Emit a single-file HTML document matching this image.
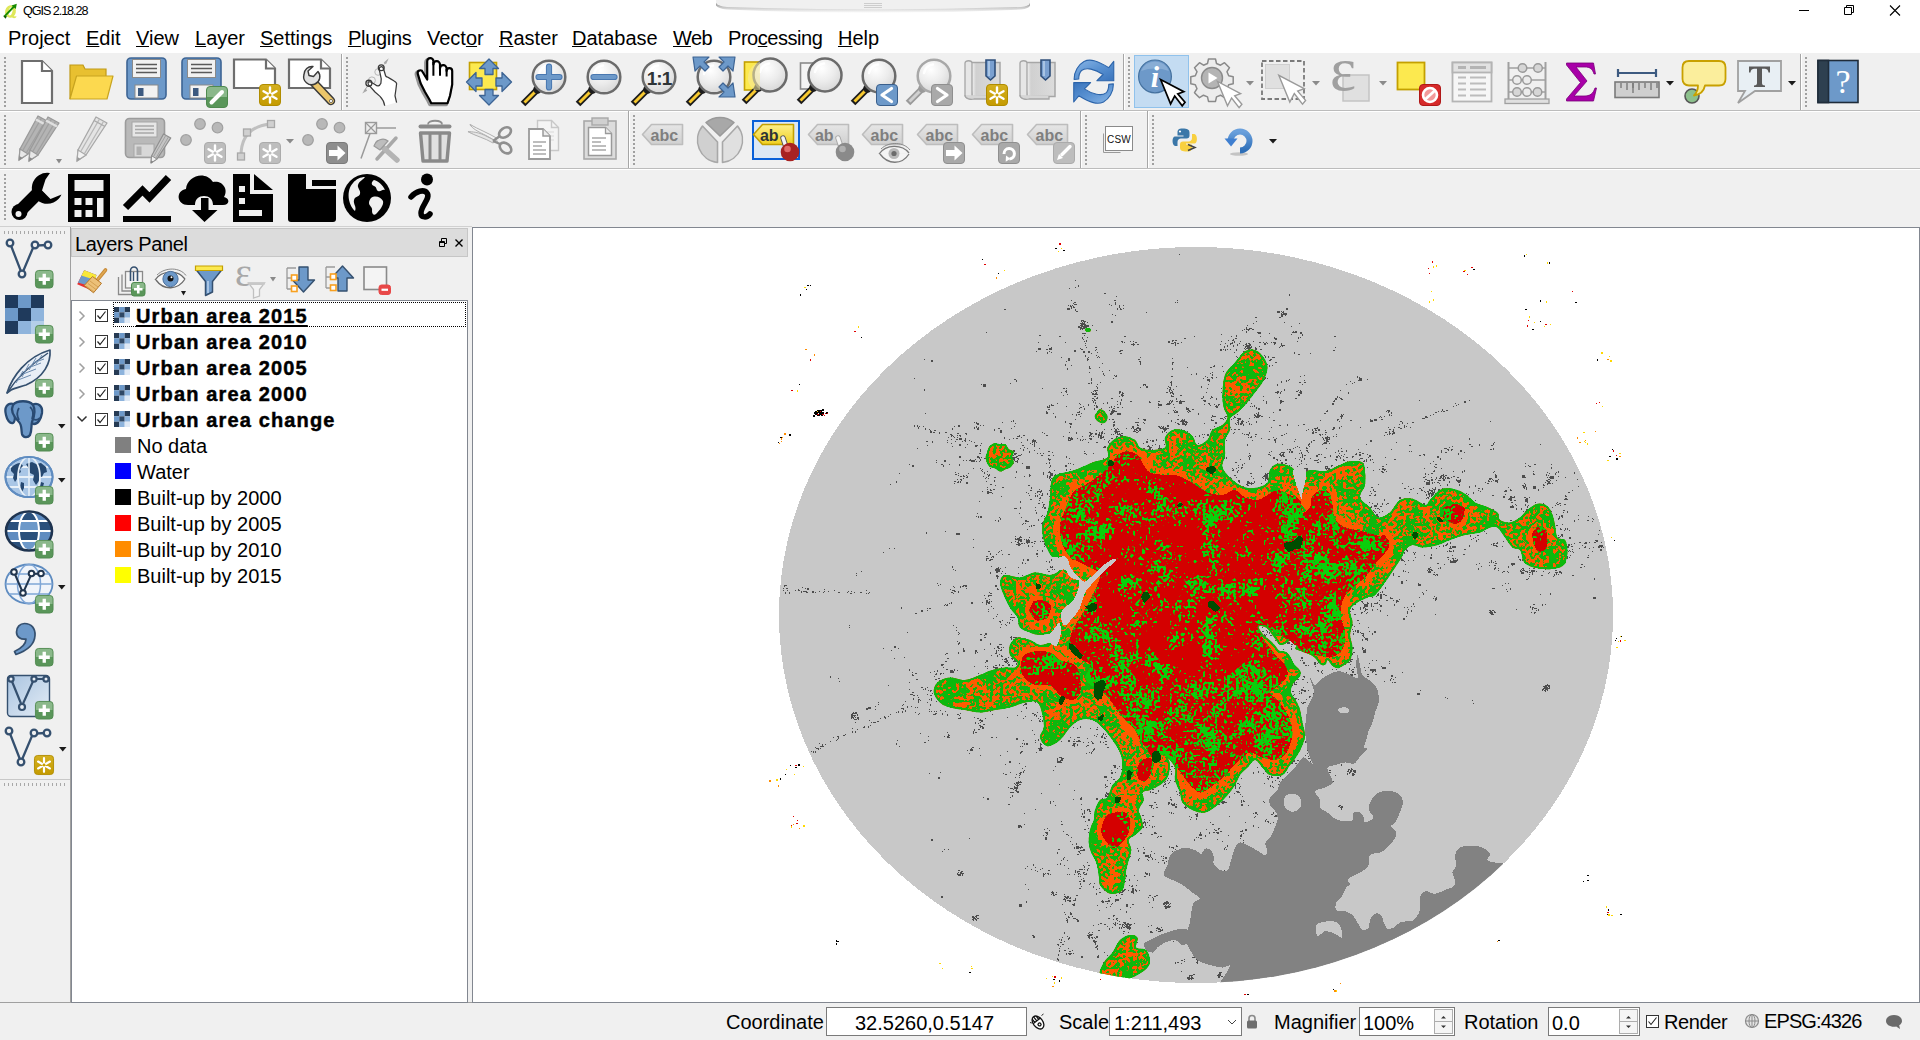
<!DOCTYPE html>
<html lang="en"><head><meta charset="utf-8"><title>QGIS 2.18.28</title>
<style>
*{box-sizing:border-box;margin:0;padding:0}
html,body{width:1920px;height:1040px;overflow:hidden;background:#f0f0f0;font-family:"Liberation Sans",sans-serif;color:#000}
.abs{position:absolute}
#titlebar{position:absolute;left:0;top:0;width:1920px;height:23px;background:#fff}
#title{position:absolute;left:23px;top:4px;font-size:12.6px;line-height:14px;color:#000;letter-spacing:-1.05px}
#menubar{position:absolute;left:0;top:23px;width:1920px;height:30px;background:#fff}
#menubar span{position:absolute;top:3px;font-size:20px;line-height:24px;white-space:nowrap}
#menubar u{text-decoration:underline;text-decoration-thickness:1px;text-underline-offset:1px}
.hl{position:absolute;left:0;width:1920px;height:1px;background:#bcbcbc}
.hl2{position:absolute;left:0;width:1920px;height:1px;background:#fff}
.vsep{position:absolute;width:1px;background:#a6a6a6}
.vsep2{position:absolute;width:1px;background:#fff}
.grip{position:absolute;width:2px;background-image:repeating-linear-gradient(to bottom,#a0a0a0 0,#a0a0a0 2px,transparent 2px,transparent 4px)}
.gripw{position:absolute;width:3px;background-image:repeating-linear-gradient(to bottom,#fff 0,#fff 1px,transparent 1px,transparent 4px)}
.ic{position:absolute;overflow:visible}
.dd{position:absolute;width:0;height:0;border-left:4px solid transparent;border-right:4px solid transparent;border-top:4px solid #222}
.ddg{border-top-color:#777}
#layers-title{position:absolute;left:71px;top:228px;width:397px;height:29px;background:#dcdcdc;border:1px solid #c6c6c6}
#layers-title span{position:absolute;left:3px;top:3px;font-size:20px;line-height:24px;letter-spacing:-.35px}
#tree{position:absolute;left:71px;top:300px;width:397px;height:703px;background:#fff;border:1px solid #828790}
.row{position:absolute;left:0;height:26px;white-space:nowrap}
.row b{position:absolute;left:64px;top:2px;font-size:20px;line-height:24px;font-weight:bold;letter-spacing:1.15px;-webkit-text-stroke:.45px #000}
.leg{position:absolute;left:43px;width:16px;height:16px}
.legt{position:absolute;left:65px;font-size:20px;line-height:24px;white-space:nowrap}
.cb{position:absolute;left:23px;width:13px;height:13px;border:1px solid #333;background:#fff}
#canvas{position:absolute;left:472px;top:227px;width:1448px;height:776px;background:#fff;border:1px solid #828790;overflow:hidden}
#status{position:absolute;left:0;top:1004px;width:1920px;height:36px;background:#f0f0f0}
#status .t{position:absolute;top:6px;font-size:20px;line-height:24px;white-space:nowrap}
.inp{position:absolute;top:3px;height:29px;background:#fff;border:1px solid #7a7a7a}
</style></head><body>
<div id="titlebar">
<svg class="ic" style="left:.6px;top:.8px" width="18" height="19" viewBox="0 0 18 19"><g transform="rotate(14 9.500 10.500)"><ellipse cx="9.500" cy="10.500" rx="5.400" ry="6.300" fill="#dfe85a"/><ellipse cx="9.500" cy="10.300" rx="1.900" ry="4.200" fill="#fff"/></g><path d="M9.500 14.500c1.500 2.500 3.500 3.500 5.500 2l.5-1.500c-1.500 1-3 .5-4-1.500z" fill="#dfe85a"/><path d="M3.500 15.300L13 5.500" stroke="#178a00" stroke-width="1.900"/><path d="M15.800 2.800l-1 5.200-4.300-3.600z" fill="#178a00"/><path d="M2 14.700l4 .6-1.500 2.500z" fill="#0d5a00"/></svg>
<div id="title">QGIS 2.18.28</div>
<svg class="ic" style="left:715px;top:0" width="320" height="14" viewBox="0 0 320 14"><defs><linearGradient id="tabsh" x1="0" y1="0" x2="0" y2="1"><stop offset="0" stop-color="#8a8a8a" stop-opacity=".95"/><stop offset="1" stop-color="#9a9a9a" stop-opacity="0"/></linearGradient></defs><path d="M1 0 L1 3 Q3 6 12 7 Q158 14 306 7 Q314 6 315 3 L315 0Z" fill="url(#tabsh)" transform="translate(0,2.5)"/><path d="M1 0 L1 3 Q3 6 12 7 Q158 12 306 7 Q314 6 315 3 L315 0Z" fill="#f0f0f0"/><path d="M149 3.5h18M149 5.5h18M149 7.5h18" stroke="#b5b5b5" stroke-width=".6"/></svg>
<svg class="ic" style="left:1798px;top:4px" width="110" height="14" viewBox="0 0 110 14"><path d="M1 6.5h10" stroke="#000" stroke-width="1"/><path d="M46.500 3.500h7v7h-7z M48.500 3.500v-2h7v7h-2" fill="none" stroke="#000" stroke-width="1"/><path d="M92 1.500l10 10M102 1.500l-10 10" stroke="#000" stroke-width="1.1"/></svg>
</div>
<div id="menubar">
<span style="left:8px">Pro<u>j</u>ect</span>
<span style="left:86px"><u>E</u>dit</span>
<span style="left:136px"><u>V</u>iew</span>
<span style="left:195px"><u>L</u>ayer</span>
<span style="left:260px"><u>S</u>ettings</span>
<span style="left:348px;letter-spacing:-.3px"><u>P</u>lugins</span>
<span style="left:427px">Vect<u>o</u>r</span>
<span style="left:499px"><u>R</u>aster</span>
<span style="left:572px"><u>D</u>atabase</span>
<span style="left:673px;letter-spacing:-.6px"><u>W</u>eb</span>
<span style="left:728px;letter-spacing:-.45px">Pro<u>c</u>essing</span>
<span style="left:838px"><u>H</u>elp</span>
</div>
<!-- toolbar separators -->
<div class="hl" style="top:110px"></div><div class="hl2" style="top:111px"></div>
<div class="hl" style="top:168px"></div><div class="hl2" style="top:169px"></div>
<div class="hl" style="top:226px;background:#d0d0d0;width:472px"></div>
<!-- grips -->
<div class="grip" style="left:4px;top:57px;height:50px"></div>
<div class="vsep" style="left:341px;top:54px;height:56px"></div><div class="vsep2" style="left:342px;top:54px;height:56px"></div>
<div class="grip" style="left:346px;top:57px;height:50px"></div>
<div class="vsep" style="left:1123px;top:54px;height:56px"></div><div class="vsep2" style="left:1124px;top:54px;height:56px"></div>
<div class="grip" style="left:1128px;top:57px;height:50px"></div>
<div class="vsep" style="left:1800px;top:54px;height:56px"></div><div class="vsep2" style="left:1801px;top:54px;height:56px"></div>
<div class="grip" style="left:1805px;top:57px;height:50px"></div>
<div class="grip" style="left:4px;top:115px;height:50px"></div>
<div class="vsep" style="left:628px;top:111px;height:57px"></div><div class="vsep2" style="left:629px;top:111px;height:57px"></div>
<div class="grip" style="left:633px;top:115px;height:50px"></div>
<div class="vsep" style="left:1080px;top:111px;height:57px"></div><div class="vsep2" style="left:1081px;top:111px;height:57px"></div>
<div class="grip" style="left:1085px;top:115px;height:50px"></div>
<div class="vsep" style="left:1147px;top:111px;height:57px"></div><div class="vsep2" style="left:1148px;top:111px;height:57px"></div>
<div class="grip" style="left:1152px;top:115px;height:50px"></div>
<div class="grip" style="left:4px;top:174px;height:48px"></div>
<!-- left toolbar -->
<div class="abs" style="left:4px;top:231px;width:62px;height:3px;background-image:repeating-linear-gradient(to right,#a8a8a8 0,#a8a8a8 1px,transparent 1px,transparent 4px)"></div>
<div class="abs" style="left:0;top:779px;width:70px;height:1px;background:#c8c8c8"></div>
<div class="abs" style="left:4px;top:783px;width:62px;height:3px;background-image:repeating-linear-gradient(to right,#a8a8a8 0,#a8a8a8 1px,transparent 1px,transparent 4px)"></div>
<div class="abs" style="left:0;top:1002px;width:472px;height:1px;background:#a0a0a0"></div>
<div class="abs" style="left:70px;top:227px;width:1px;height:776px;background:#a0a0a0"></div>
<!-- layers panel -->
<div id="layers-title"><span>Layers Panel</span>
<svg class="ic" style="left:366px;top:8px" width="26" height="12" viewBox="0 0 26 12"><path d="M1.500 4.500h5v5h-5z M3.500 4v-2.500h5v5H7" fill="none" stroke="#000" stroke-width="1"/><path d="M1.500 5.500h5" stroke="#000" stroke-width="1"/><path d="M17.500 2.500l7 7M24.500 2.500l-7 7" stroke="#000" stroke-width="1.400"/></svg>
</div>
<div id="tree">
<div class="abs" style="left:41px;top:1px;width:353px;height:25px;border:1px dotted #000"></div>
<div class="row" style="top:1px;width:395px"><svg class="ic" style="left:5px;top:8px" width="10" height="12" viewBox="0 0 10 12"><path d="M2.500 1.500l4.500 4.500-4.500 4.500" fill="none" stroke="#a0a0a0" stroke-width="1.500"/></svg><div class="cb" style="top:7px"><svg class="ic" style="left:0;top:0" width="11" height="11" viewBox="0 0 11 11"><path d="M1.500 5.500l2.500 3 5.500-7" fill="none" stroke="#222" stroke-width="1.200"/></svg></div><svg class="ic" style="left:42px;top:5px" width="16" height="16" viewBox="0 0 16 16"><rect x="0" y="0" width="5.3" height="5.3" fill="#263b54"/><rect x="5.3" y="0" width="5.4" height="5.3" fill="#6d99c9"/><rect x="10.7" y="0" width="5.3" height="5.3" fill="#263b54"/><rect x="0" y="5.3" width="5.3" height="5.4" fill="#6d99c9"/><rect x="5.3" y="5.3" width="5.4" height="5.4" fill="#2f4865"/><rect x="10.7" y="5.3" width="5.3" height="5.4" fill="#8db3dc"/><rect x="0" y="10.7" width="5.3" height="5.3" fill="#263b54"/><rect x="5.3" y="10.7" width="5.4" height="5.3" fill="#8db3dc"/><rect x="10.7" y="10.7" width="5.3" height="5.3" fill="#dfe9f5"/></svg><b style="text-decoration:underline;text-decoration-thickness:2px;text-underline-offset:2px">Urban area 2015</b></div>
<div class="row" style="top:27px;width:395px"><svg class="ic" style="left:5px;top:8px" width="10" height="12" viewBox="0 0 10 12"><path d="M2.500 1.500l4.500 4.500-4.500 4.500" fill="none" stroke="#a0a0a0" stroke-width="1.500"/></svg><div class="cb" style="top:7px"><svg class="ic" style="left:0;top:0" width="11" height="11" viewBox="0 0 11 11"><path d="M1.500 5.500l2.500 3 5.500-7" fill="none" stroke="#222" stroke-width="1.200"/></svg></div><svg class="ic" style="left:42px;top:5px" width="16" height="16" viewBox="0 0 16 16"><rect x="0" y="0" width="5.3" height="5.3" fill="#263b54"/><rect x="5.3" y="0" width="5.4" height="5.3" fill="#6d99c9"/><rect x="10.7" y="0" width="5.3" height="5.3" fill="#263b54"/><rect x="0" y="5.3" width="5.3" height="5.4" fill="#6d99c9"/><rect x="5.3" y="5.3" width="5.4" height="5.4" fill="#2f4865"/><rect x="10.7" y="5.3" width="5.3" height="5.4" fill="#8db3dc"/><rect x="0" y="10.7" width="5.3" height="5.3" fill="#263b54"/><rect x="5.3" y="10.7" width="5.4" height="5.3" fill="#8db3dc"/><rect x="10.7" y="10.7" width="5.3" height="5.3" fill="#dfe9f5"/></svg><b style="">Urban area 2010</b></div>
<div class="row" style="top:53px;width:395px"><svg class="ic" style="left:5px;top:8px" width="10" height="12" viewBox="0 0 10 12"><path d="M2.500 1.500l4.500 4.500-4.500 4.500" fill="none" stroke="#a0a0a0" stroke-width="1.500"/></svg><div class="cb" style="top:7px"><svg class="ic" style="left:0;top:0" width="11" height="11" viewBox="0 0 11 11"><path d="M1.500 5.500l2.500 3 5.500-7" fill="none" stroke="#222" stroke-width="1.200"/></svg></div><svg class="ic" style="left:42px;top:5px" width="16" height="16" viewBox="0 0 16 16"><rect x="0" y="0" width="5.3" height="5.3" fill="#263b54"/><rect x="5.3" y="0" width="5.4" height="5.3" fill="#6d99c9"/><rect x="10.7" y="0" width="5.3" height="5.3" fill="#263b54"/><rect x="0" y="5.3" width="5.3" height="5.4" fill="#6d99c9"/><rect x="5.3" y="5.3" width="5.4" height="5.4" fill="#2f4865"/><rect x="10.7" y="5.3" width="5.3" height="5.4" fill="#8db3dc"/><rect x="0" y="10.7" width="5.3" height="5.3" fill="#263b54"/><rect x="5.3" y="10.7" width="5.4" height="5.3" fill="#8db3dc"/><rect x="10.7" y="10.7" width="5.3" height="5.3" fill="#dfe9f5"/></svg><b style="">Urban area 2005</b></div>
<div class="row" style="top:79px;width:395px"><svg class="ic" style="left:5px;top:8px" width="10" height="12" viewBox="0 0 10 12"><path d="M2.500 1.500l4.500 4.500-4.500 4.500" fill="none" stroke="#a0a0a0" stroke-width="1.500"/></svg><div class="cb" style="top:7px"><svg class="ic" style="left:0;top:0" width="11" height="11" viewBox="0 0 11 11"><path d="M1.500 5.500l2.500 3 5.500-7" fill="none" stroke="#222" stroke-width="1.200"/></svg></div><svg class="ic" style="left:42px;top:5px" width="16" height="16" viewBox="0 0 16 16"><rect x="0" y="0" width="5.3" height="5.3" fill="#263b54"/><rect x="5.3" y="0" width="5.4" height="5.3" fill="#6d99c9"/><rect x="10.7" y="0" width="5.3" height="5.3" fill="#263b54"/><rect x="0" y="5.3" width="5.3" height="5.4" fill="#6d99c9"/><rect x="5.3" y="5.3" width="5.4" height="5.4" fill="#2f4865"/><rect x="10.7" y="5.3" width="5.3" height="5.4" fill="#8db3dc"/><rect x="0" y="10.7" width="5.3" height="5.3" fill="#263b54"/><rect x="5.3" y="10.7" width="5.4" height="5.3" fill="#8db3dc"/><rect x="10.7" y="10.7" width="5.3" height="5.3" fill="#dfe9f5"/></svg><b style="">Urban area 2000</b></div>
<div class="row" style="top:105px;width:395px"><svg class="ic" style="left:4px;top:8px" width="12" height="10" viewBox="0 0 12 10"><path d="M1.500 2.500l4.500 4.500 4.500-4.500" fill="none" stroke="#303030" stroke-width="1.500"/></svg><div class="cb" style="top:7px"><svg class="ic" style="left:0;top:0" width="11" height="11" viewBox="0 0 11 11"><path d="M1.500 5.500l2.500 3 5.500-7" fill="none" stroke="#222" stroke-width="1.200"/></svg></div><svg class="ic" style="left:42px;top:5px" width="16" height="16" viewBox="0 0 16 16"><rect x="0" y="0" width="5.3" height="5.3" fill="#263b54"/><rect x="5.3" y="0" width="5.4" height="5.3" fill="#6d99c9"/><rect x="10.7" y="0" width="5.3" height="5.3" fill="#263b54"/><rect x="0" y="5.3" width="5.3" height="5.4" fill="#6d99c9"/><rect x="5.3" y="5.3" width="5.4" height="5.4" fill="#2f4865"/><rect x="10.7" y="5.3" width="5.3" height="5.4" fill="#8db3dc"/><rect x="0" y="10.7" width="5.3" height="5.3" fill="#263b54"/><rect x="5.3" y="10.7" width="5.4" height="5.3" fill="#8db3dc"/><rect x="10.7" y="10.7" width="5.3" height="5.3" fill="#dfe9f5"/></svg><b style="">Urban area change</b></div>
<div class="leg" style="top:136px;background:#808080"></div><div class="legt" style="top:133px">No data</div>
<div class="leg" style="top:162px;background:#0000ff"></div><div class="legt" style="top:159px">Water</div>
<div class="leg" style="top:188px;background:#000000"></div><div class="legt" style="top:185px">Built-up by 2000</div>
<div class="leg" style="top:214px;background:#ff0000"></div><div class="legt" style="top:211px">Built-up by 2005</div>
<div class="leg" style="top:240px;background:#ff8c00"></div><div class="legt" style="top:237px">Built-up by 2010</div>
<div class="leg" style="top:266px;background:#ffff00"></div><div class="legt" style="top:263px">Built-up by 2015</div>
</div>
<svg width="0" height="0" style="position:absolute"><defs>
<radialGradient id="lens" cx=".4" cy=".3" r=".8"><stop offset="0" stop-color="#fff"/><stop offset=".5" stop-color="#ececec"/><stop offset="1" stop-color="#d2d2d2"/></radialGradient>
<linearGradient id="gbadge" x1="0" y1="0" x2="0" y2="1"><stop offset="0" stop-color="#8ab88a"/><stop offset=".5" stop-color="#8ab88a"/><stop offset=".5" stop-color="#5a965a"/><stop offset="1" stop-color="#5a965a"/></linearGradient>
<linearGradient id="ybadge" x1="0" y1="0" x2="0" y2="1"><stop offset="0" stop-color="#d4b020"/><stop offset="1" stop-color="#c49a00"/></linearGradient>
<linearGradient id="scroll" x1="0" y1="0" x2="1" y2="0"><stop offset="0" stop-color="#c9c9c9"/><stop offset=".12" stop-color="#f4f4f4"/><stop offset=".25" stop-color="#d0d0d0"/><stop offset="1" stop-color="#dcdcdc"/></linearGradient>
<linearGradient id="blueg" x1="0" y1="0" x2="0" y2="1"><stop offset="0" stop-color="#6aa0dc"/><stop offset="1" stop-color="#2f6fb8"/></linearGradient>
<linearGradient id="tagg" x1="0" y1="0" x2="0" y2="1"><stop offset="0" stop-color="#e6e6e6"/><stop offset="1" stop-color="#d0d0d0"/></linearGradient>
<linearGradient id="tagy" x1="0" y1="0" x2="0" y2="1"><stop offset="0" stop-color="#fdf08a"/><stop offset="1" stop-color="#f0cf20"/></linearGradient>
</defs></svg>
<svg class="ic" style="left:18px;top:58px" width="38" height="48" viewBox="0 0 38 48"><path d="M4 3h20l10 10v32H4z" fill="#fff" stroke="#6e6e6e" stroke-width="2.200" stroke-linejoin="miter"/><path d="M24 3v10h10" fill="#fff" stroke="#6e6e6e" stroke-width="2.200"/></svg>
<svg class="ic" style="left:67px;top:62px" width="50" height="40" viewBox="0 0 50 40"><path d="M3 37V3h13l2 4h21v8H10z" fill="#e8c030" stroke="#c09a18" stroke-width="1.200"/><path d="M3 37l6.500-23H46l-6 23z" fill="#fcd94f" stroke="#c8a420" stroke-width="1.200" stroke-linejoin="round"/></svg>
<svg class="ic" style="left:126px;top:57px" width="42" height="44" viewBox="0 0 42 44"><rect x="1" y="1" width="39" height="41" rx="4" fill="#6d99c9" stroke="#3d6494" stroke-width="1.600"/><rect x="6.500" y="2.500" width="28" height="18" fill="#f2f2f2" stroke="#8a8a8a" stroke-width="1"/><path d="M10 7.500h21M10 11.500h21M10 15.500h21" stroke="#5a5a5a" stroke-width="1.500"/><rect x="9" y="28" width="23" height="13" fill="#f2f2f2" stroke="#8a8a8a" stroke-width="1"/><rect x="12" y="31" width="5.500" height="8" fill="#3d5a80"/></svg>
<svg class="ic" style="left:181px;top:57px" width="42" height="44" viewBox="0 0 42 44"><rect x="1" y="1" width="39" height="41" rx="4" fill="#6d99c9" stroke="#3d6494" stroke-width="1.600"/><rect x="6.500" y="2.500" width="28" height="18" fill="#f2f2f2" stroke="#8a8a8a" stroke-width="1"/><path d="M10 7.500h21M10 11.500h21M10 15.500h21" stroke="#5a5a5a" stroke-width="1.500"/><rect x="9" y="28" width="23" height="13" fill="#f2f2f2" stroke="#8a8a8a" stroke-width="1"/><rect x="12" y="31" width="5.500" height="8" fill="#3d5a80"/></svg>
<svg class="ic" style="left:206px;top:86px" width="22" height="22" viewBox="0 0 22 22"><rect x=".5" y=".5" width="21" height="21" rx="3.500" fill="url(#gbadge)" stroke="#4f8a4f" stroke-width="1"/><path d="M5.500 16.500L16 6" stroke="#fff" stroke-width="4" stroke-linecap="round"/></svg>
<svg class="ic" style="left:231px;top:57px" width="48" height="36" viewBox="0 0 48 36"><path d="M3 2.500h32l9 9v19.500H3z" fill="#fff" stroke="#6e6e6e" stroke-width="2.200"/><path d="M35 2.500v9h9" fill="#fff" stroke="#6e6e6e" stroke-width="2.200"/></svg>
<svg class="ic" style="left:259px;top:84px" width="22" height="22" viewBox="0 0 22 22"><rect x=".5" y=".5" width="21" height="21" rx="3.500" fill="url(#ybadge)" stroke="#b08c00" stroke-width="1"/><g stroke="#fff" stroke-width="2.400" stroke-linecap="round"><path d="M11 3.500v15M4.500 7.200l13 7.600M4.500 14.800l13-7.600"/></g><circle cx="11" cy="11" r="1.600" fill="#c8a000"/></svg>
<svg class="ic" style="left:286px;top:57px" width="54" height="52" viewBox="0 0 54 52"><path d="M3 2.500h32l9 9v19.500H3z" fill="#fff" stroke="#6e6e6e" stroke-width="2.200"/><path d="M35 2.500v9h9" fill="#fff" stroke="#6e6e6e" stroke-width="2.200"/><path d="M28 26L45 44" stroke="#3a3a3a" stroke-width="8.500" stroke-linecap="round"/><path d="M28.500 26.500L45 44" stroke="#ecc66a" stroke-width="5.500" stroke-linecap="round"/><circle cx="45" cy="44" r="1.600" fill="#fff" stroke="#555" stroke-width=".8"/><path d="M18 17.500a8 8 0 0 0 11 9.500a8 8 0 0 0 3-12.500l-4.500 5-4.500-1-1-4.500 5-4.500a8 8 0 0 0-9 8z" fill="#e2e2e2" stroke="#3a3a3a" stroke-width="1.400" stroke-linejoin="round"/></svg>
<svg class="ic" style="left:358px;top:56px" width="44" height="54" viewBox="0 0 44 54"><path d="M4.200 37.600l3.400-5.350 1.600 2.500zM30.750 2.250l-5 4.350 2.250 1.600z" fill="#a8a8a8"/><path d="M6 35L9 31M29 4.500L26 8.500" stroke="#a8a8a8" stroke-width="1"/><circle cx="20.100" cy="16" r="3.300" fill="none" stroke="#b0b0b0" stroke-width=".9"/><circle cx="13.900" cy="24.400" r="3.500" fill="none" stroke="#b0b0b0" stroke-width=".9"/><path d="M26.700 49.750C26.200 46 25.500 44 22 40.400L17 36 12 30.400C9 28 9.500 25 12.600 26L17 28.500C19.500 30.500 21.400 30.500 22.900 27.250L23.250 22.900 21.400 14.100C20.500 10 24.800 9.500 25.750 13.500L27.600 19.750C28 21 29 21 29.500 21L32.600 22.900 35.750 24.750C38 26 38.800 27 38.600 27.900L37.900 33.500 37 39.750 38.600 46.600" fill="#fff" stroke="#3a3a3a" stroke-width="1.250" stroke-linejoin="round"/><circle cx="23.250" cy="11.800" r="2.900" fill="none" stroke="#3a3a3a" stroke-width="1.300"/><circle cx="10.900" cy="27.250" r="3" fill="none" stroke="#3a3a3a" stroke-width="1.300"/></svg>
<svg class="ic" style="left:414px;top:56px" width="44" height="52" viewBox="0 0 44 52"><path d="M13.200 23.500V5.300a3.100 3.100 0 0 1 6.200 0V8.500a3.300 3.300 0 0 1 6.600 0V12.500a3.300 3.300 0 0 1 6.600 0V15a2.800 2.800 0 0 1 5.600 0V28.500L36 39.750 33.500 47.250H17.250L15.400 43.500 11 36 6.600 27.250 3.800 17.900C3 15 6 13.500 7.900 14.750z" transform="translate(-1.300,1.200)" fill="#000" stroke="#000" stroke-width="3.600" stroke-linejoin="round" opacity=".38"/><path d="M13.200 23.500V5.300a3.100 3.100 0 0 1 6.200 0V8.500a3.300 3.300 0 0 1 6.600 0V12.500a3.300 3.300 0 0 1 6.600 0V15a2.800 2.800 0 0 1 5.600 0V28.500L36 39.750 33.500 47.250H17.250L15.400 43.500 11 36 6.600 27.250 3.800 17.900C3 15 6 13.500 7.900 14.750z" fill="#fff" stroke="#000" stroke-width="2.200" stroke-linejoin="round"/><path d="M19.400 6V19.750M26 9V19.750M32.600 13V20.500" stroke="#000" stroke-width="2"/></svg>
<svg class="ic" style="left:464px;top:56px" width="52" height="52" viewBox="0 0 52 52"><rect x="5.500" y="6.500" width="27" height="27" fill="#fce94f" stroke="#c4a000" stroke-width="1.600"/><g fill="#6d99c9" stroke="#3d6494" stroke-width="1.300" stroke-linejoin="round"><path d="M25 3l9.500 9.500h-5.500v6h-8v-6h-5.500z"/><path d="M25 49l9.500-9.500h-5.500v-6h-8v6h-5.500z"/><path d="M2.500 26l9.500-9.500v5.500h6v8h-6v5.500z"/><path d="M47.500 26l-9.500-9.500v5.500h-6v8h6v5.500z"/></g></svg>
<svg class="ic" style="left:519px;top:55px" width="64" height="56" viewBox="0 0 64 56"><path d="M19 34L4 49" stroke="#1c1c1c" stroke-width="6.500" stroke-linecap="butt"/><path d="M16.5 36.5L5.5 47.5" stroke="#f8c930" stroke-width="3"/><circle cx="18.5" cy="34.5" r="4.200" fill="#1c1c1c"/><circle cx="30" cy="22" r="16.3" fill="url(#lens)" stroke="#6b6b6b" stroke-width="2.500"/><path d="M20 19a11 11 0 0 1 9-8.500" fill="none" stroke="#fff" stroke-width="2.500" stroke-linecap="round" opacity=".9"/><path d="M30 11.500v21M19.500 22h21" stroke="#4a78b0" stroke-width="6.200" stroke-linecap="round"/><path d="M30 11.500v21M19.500 22h21" stroke="#6d99c9" stroke-width="4.200" stroke-linecap="round"/></svg>
<svg class="ic" style="left:574px;top:55px" width="64" height="56" viewBox="0 0 64 56"><path d="M19 34L4 49" stroke="#1c1c1c" stroke-width="6.500" stroke-linecap="butt"/><path d="M16.5 36.5L5.5 47.5" stroke="#f8c930" stroke-width="3"/><circle cx="18.5" cy="34.5" r="4.200" fill="#1c1c1c"/><circle cx="30" cy="22" r="16.3" fill="url(#lens)" stroke="#6b6b6b" stroke-width="2.500"/><path d="M20 19a11 11 0 0 1 9-8.500" fill="none" stroke="#fff" stroke-width="2.500" stroke-linecap="round" opacity=".9"/><path d="M19.500 22h21" stroke="#4a78b0" stroke-width="6.200" stroke-linecap="round"/><path d="M19.500 22h21" stroke="#6d99c9" stroke-width="4.200" stroke-linecap="round"/></svg>
<svg class="ic" style="left:629px;top:55px" width="64" height="56" viewBox="0 0 64 56"><path d="M19 34L4 49" stroke="#1c1c1c" stroke-width="6.500" stroke-linecap="butt"/><path d="M16.5 36.5L5.5 47.5" stroke="#f8c930" stroke-width="3"/><circle cx="18.5" cy="34.5" r="4.200" fill="#1c1c1c"/><circle cx="30" cy="22" r="16.3" fill="url(#lens)" stroke="#6b6b6b" stroke-width="2.500"/><path d="M20 19a11 11 0 0 1 9-8.500" fill="none" stroke="#fff" stroke-width="2.500" stroke-linecap="round" opacity=".9"/><text x="30" y="29.500" text-anchor="middle" font-family="Liberation Sans,sans-serif" font-weight="bold" font-size="19" letter-spacing="-1" fill="#2e3436">1:1</text></svg>
<svg class="ic" style="left:684px;top:55px" width="64" height="56" viewBox="0 0 64 56"><path d="M19 34L4 49" stroke="#1c1c1c" stroke-width="6.500" stroke-linecap="butt"/><path d="M16.5 36.5L5.5 47.5" stroke="#f8c930" stroke-width="3"/><circle cx="18.5" cy="34.5" r="4.200" fill="#1c1c1c"/><circle cx="30" cy="22" r="16.3" fill="url(#lens)" stroke="#6b6b6b" stroke-width="2.500"/><path d="M20 19a11 11 0 0 1 9-8.500" fill="none" stroke="#fff" stroke-width="2.500" stroke-linecap="round" opacity=".9"/><g fill="#6d99c9" stroke="#3d6494" stroke-width="1.200" stroke-linejoin="round"><path d="M10 2h16l-5 5 5 5-4 4-5-5-5 5z" transform="translate(-1,0)"/><path d="M50 2H34l5 5-5 5 4 4 5-5 5 5z" transform="translate(1,0)"/><path d="M50 42H34l5-5-5-5 4-4 5 5 5-5z" transform="translate(1,0)"/></g></svg>
<svg class="ic" style="left:740px;top:53px" width="64" height="56" viewBox="0 0 64 56"><rect x="4.500" y="9" width="15" height="28" fill="#fce94f" stroke="#c4a000" stroke-width="1.600"/><path d="M19 34L4 49" stroke="#1c1c1c" stroke-width="6.500" stroke-linecap="butt"/><path d="M16.5 36.5L5.5 47.5" stroke="#f8c930" stroke-width="3"/><circle cx="18.5" cy="34.5" r="4.200" fill="#1c1c1c"/><circle cx="30" cy="22" r="16.5" fill="url(#lens)" stroke="#6b6b6b" stroke-width="2.500"/><path d="M20 19a11 11 0 0 1 9-8.500" fill="none" stroke="#fff" stroke-width="2.500" stroke-linecap="round" opacity=".9"/></svg>
<svg class="ic" style="left:744px;top:60px" width="30" height="32" viewBox="0 0 30 32"><path d="M16 2a16 16 0 0 0-6 28h6z" fill="#f5e9a0" opacity=".55"/></svg>
<svg class="ic" style="left:795px;top:53px" width="64" height="56" viewBox="0 0 64 56"><rect x="5.500" y="10" width="15" height="26" fill="#f4f4f4" stroke="#8a8a8a" stroke-width="1.600"/><path d="M19 34L4 49" stroke="#1c1c1c" stroke-width="6.500" stroke-linecap="butt"/><path d="M16.5 36.5L5.5 47.5" stroke="#f8c930" stroke-width="3"/><circle cx="18.5" cy="34.5" r="4.200" fill="#1c1c1c"/><circle cx="30" cy="22" r="16.5" fill="url(#lens)" stroke="#6b6b6b" stroke-width="2.500"/><path d="M20 19a11 11 0 0 1 9-8.500" fill="none" stroke="#fff" stroke-width="2.500" stroke-linecap="round" opacity=".9"/></svg>
<svg class="ic" style="left:849px;top:54px" width="64" height="56" viewBox="0 0 64 56"><path d="M19 34L4 49" stroke="#1c1c1c" stroke-width="6.500" stroke-linecap="butt"/><path d="M16.5 36.5L5.5 47.5" stroke="#f8c930" stroke-width="3"/><circle cx="18.5" cy="34.5" r="4.200" fill="#1c1c1c"/><circle cx="30" cy="22" r="16.3" fill="url(#lens)" stroke="#6b6b6b" stroke-width="2.500"/><path d="M20 19a11 11 0 0 1 9-8.500" fill="none" stroke="#fff" stroke-width="2.500" stroke-linecap="round" opacity=".9"/></svg>
<svg class="ic" style="left:876px;top:84px" width="22" height="22" viewBox="0 0 22 22"><rect x=".5" y=".5" width="21" height="21" rx="3.500" fill="#6d99c9" stroke="#3a5f8c" stroke-width="1"/><path d="M15.500 4.500L6 11l9.500 6.500" fill="none" stroke="#fff" stroke-width="3.200" stroke-linecap="round" stroke-linejoin="round"/></svg>
<svg class="ic" style="left:904px;top:54px" width="64" height="56" viewBox="0 0 64 56"><path d="M19 34L4 49" stroke="#9a9a9a" stroke-width="6.500" stroke-linecap="butt"/><path d="M16.5 36.5L5.5 47.5" stroke="#d0d0d0" stroke-width="3"/><circle cx="18.5" cy="34.5" r="4.200" fill="#9a9a9a"/><circle cx="30" cy="22" r="16.3" fill="url(#lens)" stroke="#a8a8a8" stroke-width="2.500"/><path d="M20 19a11 11 0 0 1 9-8.500" fill="none" stroke="#fff" stroke-width="2.500" stroke-linecap="round" opacity=".9"/></svg>
<svg class="ic" style="left:931px;top:84px" width="22" height="22" viewBox="0 0 22 22"><rect x=".5" y=".5" width="21" height="21" rx="3.500" fill="#a9a9a9" stroke="#8f8f8f" stroke-width="1"/><path d="M6.500 4.500L16 11l-9.500 6.500" fill="none" stroke="#fff" stroke-width="3.200" stroke-linecap="round" stroke-linejoin="round"/></svg>
<svg class="ic" style="left:963px;top:59px" width="42" height="44" viewBox="0 0 42 44"><path d="M5 3.500h32v34H9z" fill="url(#scroll)" stroke="#a6a6a6" stroke-width="1.500"/><path d="M2 4c0-3 7-3 7 0v32c0 4-7 4-7 0z" fill="#e6e6e6" stroke="#a6a6a6" stroke-width="1.300"/><path d="M2 36c0 4 6 5 9 4h20v-3" fill="#d6d6d6" stroke="#a6a6a6" stroke-width="1.300"/><path d="M23 1h9v16l-4.500 4-4.500-4z" fill="#7aa0d0" stroke="#2f4f7a" stroke-width="1.600"/><path d="M26 2v15" stroke="#a8c4e4" stroke-width="2"/></svg>
<svg class="ic" style="left:986px;top:84px" width="22" height="22" viewBox="0 0 22 22"><rect x=".5" y=".5" width="21" height="21" rx="3.500" fill="url(#ybadge)" stroke="#b08c00" stroke-width="1"/><g stroke="#fff" stroke-width="2.400" stroke-linecap="round"><path d="M11 3.500v15M4.500 7.200l13 7.600M4.500 14.800l13-7.600"/></g><circle cx="11" cy="11" r="1.600" fill="#c8a000"/></svg>
<svg class="ic" style="left:1018px;top:59px" width="42" height="44" viewBox="0 0 42 44"><path d="M5 3.500h32v34H9z" fill="url(#scroll)" stroke="#a6a6a6" stroke-width="1.500"/><path d="M2 4c0-3 7-3 7 0v32c0 4-7 4-7 0z" fill="#e6e6e6" stroke="#a6a6a6" stroke-width="1.300"/><path d="M2 36c0 4 6 5 9 4h20v-3" fill="#d6d6d6" stroke="#a6a6a6" stroke-width="1.300"/><path d="M23 1h9v16l-4.500 4-4.500-4z" fill="#7aa0d0" stroke="#2f4f7a" stroke-width="1.600"/><path d="M26 2v15" stroke="#a8c4e4" stroke-width="2"/></svg>
<svg class="ic" style="left:1071px;top:57px" width="48" height="50" viewBox="0 0 48 50"><defs><linearGradient id="rfg" x1="0" y1="0" x2="1" y2="1"><stop offset="0" stop-color="#8ab6e6"/><stop offset=".5" stop-color="#5a92d2"/><stop offset="1" stop-color="#3a74bc"/></linearGradient></defs><g fill="url(#rfg)" stroke="#2c64aa" stroke-width="1.100" stroke-linejoin="round"><path d="M3.100 22.500C3 14 7.750 7.500 13 4.500 19 1.500 26 3.500 37.750 10.600L42.750 4.400V23.750H25.900L32.100 17.500C24 12 15 10 10.500 13.500 8.500 15.500 7.750 18 7.750 22z"/><path d="M3.100 22.500C3 14 7.750 7.500 13 4.500 19 1.500 26 3.500 37.750 10.600L42.750 4.400V23.750H25.900L32.100 17.500C24 12 15 10 10.500 13.500 8.500 15.500 7.750 18 7.750 22z" transform="rotate(180 22.750 24.700)"/></g></svg>
<div class="abs" style="left:1134px;top:55px;width:55px;height:53px;background:#c4dcf2;border:1px solid #90c2ec"></div>
<svg class="ic" style="left:1136px;top:57px" width="52" height="52" viewBox="0 0 52 52"><circle cx="19" cy="19.400" r="16.400" fill="#6d99c9" stroke="#44719f" stroke-width="1.200"/><path d="M5 14a15 15 0 0 1 28 0a30 20 0 0 0-28 0z" fill="#8fb2d8" opacity=".8"/><text x="19" y="30" text-anchor="middle" font-family="Liberation Serif,serif" font-style="italic" font-weight="bold" font-size="30" fill="#fff">i</text><path d="M24.6 22.5L34.6 46.9L38.7 39.1L46.2 48.8L49.0 45.3L41.8 36.9L47.8 34.7z" fill="#fff" stroke="#000" stroke-width="1.700" stroke-linejoin="miter"/></svg>
<svg class="ic" style="left:1190px;top:56px" width="52" height="52" viewBox="0 0 52 52"><g transform="translate(22,22)"><path d="M-3.500-19h7l1 4.500 4 1.700 4-2.500 5 5-2.500 4 1.700 4 4.500 1v7l-4.500 1-1.700 4 2.500 4-5 5-4-2.500-4 1.700-1 4.500h-7l-1-4.500-4-1.700-4 2.500-5-5 2.500-4-1.700-4-4.500-1v-7l4.500-1 1.700-4-2.500-4 5-5 4 2.500 4-1.700z" fill="#ececec" stroke="#8a8a8a" stroke-width="1.500" stroke-linejoin="round"/><circle r="10.500" fill="#b4b4b4" stroke="#8a8a8a" stroke-width="1.400"/><path d="M-3.500-5.500l9 5.500-9 5.500z" fill="#fff"/></g><path d="M27.5 25.4L37.5 49.8L41.6 42.0L49.1 51.6L51.9 48.2L44.7 39.8L50.6 37.6z" fill="#fff" stroke="#9a9a9a" stroke-width="1.400" stroke-linejoin="miter"/></svg>
<svg class="ic" style="left:1246.0px;top:80.5px" width="8" height="5" viewBox="0 0 8 5"><path d="M0 0h8l-4.0 4.500z" fill="#8a8a8a"/></svg>
<svg class="ic" style="left:1259px;top:58px" width="52" height="50" viewBox="0 0 52 50"><rect x="3" y="3" width="42" height="38" fill="none" stroke="#7a7a7a" stroke-width="1.800" stroke-dasharray="4.500 2.500"/><rect x="6.500" y="6.500" width="24" height="24" fill="#e0e0e0" stroke="#cfcfcf" stroke-width="1"/><path d="M19.8 17.3L30.8 44.1L35.3 35.6L43.5 46.2L46.6 42.4L38.7 33.1L45.2 30.7z" fill="#fff" stroke="#9a9a9a" stroke-width="1.400" stroke-linejoin="miter"/></svg>
<svg class="ic" style="left:1312.0px;top:80.5px" width="8" height="5" viewBox="0 0 8 5"><path d="M0 0h8l-4.0 4.500z" fill="#8a8a8a"/></svg>
<svg class="ic" style="left:1328px;top:58px" width="46" height="46" viewBox="0 0 46 46"><rect x="15" y="17" width="26" height="26" fill="#e0e0e0" stroke="#c4c4c4" stroke-width="1.500"/><text x="2" y="32" font-family="Liberation Serif,serif" font-size="62" fill="#a0a0a0">ε</text></svg>
<svg class="ic" style="left:1379.0px;top:80.5px" width="8" height="5" viewBox="0 0 8 5"><path d="M0 0h8l-4.0 4.500z" fill="#8a8a8a"/></svg>
<svg class="ic" style="left:1395px;top:60px" width="34" height="34" viewBox="0 0 34 34"><rect x="2.500" y="2.500" width="27" height="27" fill="#fce94f" stroke="#c4a000" stroke-width="1.800"/></svg>
<svg class="ic" style="left:1419px;top:84px" width="22" height="22" viewBox="0 0 22 22"><rect x=".5" y=".5" width="21" height="21" rx="3.500" fill="#d62a2a" stroke="#b01818" stroke-width="1"/><circle cx="11" cy="11" r="7" fill="#f29a9a" stroke="#fff" stroke-width="2.600"/><path d="M6 15.500L16 6.500" stroke="#fff" stroke-width="2.800"/></svg>
<svg class="ic" style="left:1450px;top:60px" width="44" height="44" viewBox="0 0 44 44"><rect x="2.500" y="2.500" width="39" height="39" fill="#f6f6f6" stroke="#b4b4b4" stroke-width="1.800"/><rect x="2.500" y="2.500" width="39" height="10" fill="#e2e2e2" stroke="#b4b4b4" stroke-width="1.800"/><path d="M8 7.500h8M20 7.500h16" stroke="#b4b4b4" stroke-width="3"/><path d="M8 17.500h8M20 17.500h16M8 23.500h8M20 23.500h16M8 29.500h8M20 29.500h16M8 35.500h8M20 35.500h16" stroke="#bcbcbc" stroke-width="1.800"/></svg>
<svg class="ic" style="left:1503px;top:60px" width="48" height="46" viewBox="0 0 48 46"><path d="M5.500 2v37M42.500 2v37" stroke="#a0a0a0" stroke-width="2"/><path d="M5.500 8h37M5.500 20h37M5.500 32h37" stroke="#a0a0a0" stroke-width="1.600"/><rect x="2" y="39" width="44" height="4.500" fill="#e0e0e0" stroke="#a0a0a0" stroke-width="1.300"/><g fill="#d6d6d6" stroke="#9a9a9a" stroke-width="1.500"><circle cx="19.500" cy="8" r="4.300"/><circle cx="35" cy="8" r="4.300"/><circle cx="14" cy="20" r="4.300" fill="#ececec"/><circle cx="24" cy="20" r="4.300" fill="#ececec"/><circle cx="14" cy="32" r="4.300"/><circle cx="24" cy="32" r="4.300" fill="#ececec"/><circle cx="34.500" cy="32" r="4.300"/></g></svg>
<svg class="ic" style="left:1564px;top:60px" width="36" height="44" viewBox="0 0 36 44"><path d="M2.500 3h27l2 11h-1.500c-1.500-5-4-7-9-7H12l11 14-13 15h10c6 0 9-2 11-8h1.500l-3 13H2.500v-2l14-16.500L2.500 5z" fill="#a800a8" stroke="#7a007a" stroke-width=".8"/></svg>
<svg class="ic" style="left:1613px;top:66px" width="48" height="36" viewBox="0 0 48 36"><path d="M5 3v8M43 3v8M5 7h38" stroke="#3d5a80" stroke-width="2.200"/><rect x="2" y="16" width="44" height="15.500" fill="#cfcfcf" stroke="#7a7a7a" stroke-width="1.600"/><path d="M8 17v5M14 17v7M20 17v5M26 17v7M32 17v5M38 17v7M44 17v5" stroke="#7a7a7a" stroke-width="1.400"/><path d="M20 17v10" stroke="#7a7a7a" stroke-width="1.400"/></svg>
<svg class="ic" style="left:1666.0px;top:80.5px" width="8" height="5" viewBox="0 0 8 5"><path d="M0 0h8l-4.0 4.500z" fill="#1a1a1a"/></svg>
<svg class="ic" style="left:1680px;top:58px" width="50" height="48" viewBox="0 0 50 48"><circle cx="12" cy="38" r="7" fill="#8cc08c" stroke="#555" stroke-width="1.600"/><path d="M9 3h30c4 0 6.500 2.500 6.500 6.500V21c0 4-2.500 6.500-6.500 6.500H25c-1 5-4 9-11 10 3-3 4-6 4-10H9c-4 0-6.500-2.500-6.500-6.500V9.500C2.500 5.500 5 3 9 3z" fill="#fbee9c" stroke="#c8a000" stroke-width="1.800" stroke-linejoin="round"/></svg>
<svg class="ic" style="left:1735px;top:58px" width="50" height="50" viewBox="0 0 50 50"><path d="M3 3h43v30H20L3 45l7-12H3z" fill="#e8eff4" stroke="#a0a0a0" stroke-width="1.800" stroke-linejoin="miter"/><path d="M14 8.500h21v6h-1.500c-.5-3-1.500-3.800-4.500-3.800h-2V25c0 1.800.6 2.200 3 2.400V29H19v-1.600c2.400-.2 3-.6 3-2.400V10.700h-2c-3 0-4 .8-4.500 3.800H14z" fill="#5a5a5a"/></svg>
<svg class="ic" style="left:1788.0px;top:80.5px" width="8" height="5" viewBox="0 0 8 5"><path d="M0 0h8l-4.0 4.500z" fill="#1a1a1a"/></svg>
<svg class="ic" style="left:1816px;top:59px" width="44" height="46" viewBox="0 0 44 46"><rect x="2" y="1.500" width="40" height="42" fill="#6d99c9" stroke="#1f2c3a" stroke-width="1.600"/><rect x="2" y="1.500" width="10.500" height="42" fill="#2e4050" stroke="#1f2c3a" stroke-width="1.600"/><text x="27" y="34" text-anchor="middle" font-family="Liberation Serif,serif" font-size="34" fill="#fff">?</text></svg>
<svg class="ic" style="left:16px;top:113px" width="48" height="52" viewBox="0 0 48 52"><g><path d="M22 3l11 6L12 41 3 47l1-11z" fill="#b4b4b4" stroke="#9a9a9a" stroke-width="1.300" stroke-linejoin="round"/><path d="M25.500 5L7 37M29.500 7.500L10.500 39.500" stroke="#a0a0a0" stroke-width="1.300"/><path d="M4 36l8 5-9 6z" fill="#e8e8e8" stroke="#9a9a9a" stroke-width="1.200"/><path d="M3.400 43l3.200 2L3 47z" fill="#8a8a8a"/><path d="M20 6.500l11 6" stroke="#e0e0e0" stroke-width="2.500"/></g><g transform="translate(10,1)"><g><path d="M22 3l11 6L12 41 3 47l1-11z" fill="#b4b4b4" stroke="#9a9a9a" stroke-width="1.300" stroke-linejoin="round"/><path d="M25.500 5L7 37M29.500 7.500L10.500 39.500" stroke="#a0a0a0" stroke-width="1.300"/><path d="M4 36l8 5-9 6z" fill="#e8e8e8" stroke="#9a9a9a" stroke-width="1.200"/><path d="M3.400 43l3.200 2L3 47z" fill="#8a8a8a"/><path d="M20 6.500l11 6" stroke="#e0e0e0" stroke-width="2.500"/></g></g></svg>
<svg class="ic" style="left:55.5px;top:159px" width="6" height="5" viewBox="0 0 6 5"><path d="M0 0h6l-3.0 4.500z" fill="#8a8a8a"/></svg>
<svg class="ic" style="left:74px;top:114px" width="40" height="52" viewBox="0 0 40 52"><g transform="scale(1.0)"><g><path d="M22 3l11 6L12 41 3 47l1-11z" fill="#e4e4e4" stroke="#a8a8a8" stroke-width="1.300" stroke-linejoin="round"/><path d="M25.500 5L7 37M29.500 7.500L10.500 39.500" stroke="#b8b8b8" stroke-width="1.300"/><path d="M4 36l8 5-9 6z" fill="#f2f2f2" stroke="#a8a8a8" stroke-width="1.200"/><path d="M3.400 43l3.200 2L3 47z" fill="#9a9a9a"/><path d="M20 6.500l11 6" stroke="#a8a8a8" stroke-width="1.200"/></g></g></svg>
<svg class="ic" style="left:124px;top:117px" width="50" height="48" viewBox="0 0 50 48"><rect x="1.500" y="1.500" width="39" height="39" rx="4" fill="#b9b9b9" stroke="#9c9c9c" stroke-width="1.600"/><rect x="8" y="5" width="25" height="15" fill="#e6e6e6" stroke="#a6a6a6" stroke-width="1"/><path d="M11 9h19M11 12.500h19M11 16h19" stroke="#a8a8a8" stroke-width="1.300"/><rect x="10" y="27" width="20" height="13" fill="#d8d8d8" stroke="#a6a6a6" stroke-width="1"/><rect x="12.500" y="29.500" width="5" height="8.500" fill="#b0b0b0"/><g transform="translate(25,15) scale(.66)"><path d="M22 3l11 6L12 41 3 47l1-11z" fill="#c4c4c4" stroke="#8f8f8f" stroke-width="1.800" stroke-linejoin="round"/><path d="M25.500 5L7 37M29.500 7.500L10.500 39.500" stroke="#a0a0a0" stroke-width="1.500"/><path d="M4 36l8 5-9 6z" fill="#f0f0f0" stroke="#8f8f8f" stroke-width="1.500"/><path d="M3.400 43l3.200 2L3 47z" fill="#808080"/></g></svg>
<svg class="ic" style="left:180px;top:118px" width="44" height="28" viewBox="0 0 44 28"><g fill="#b8b8b8" stroke="#a0a0a0" stroke-width="1.200"><circle cx="20" cy="6" r="5.300"/><circle cx="37.500" cy="9.700" r="5.300"/><circle cx="6" cy="22" r="5.300"/></g></svg>
<svg class="ic" style="left:204px;top:142px" width="22" height="22" viewBox="0 0 22 22"><rect x=".5" y=".5" width="21" height="21" rx="3.500" fill="#bdbdbd" stroke="#ababab" stroke-width="1"/><g stroke="#fff" stroke-width="2.400" stroke-linecap="round"><path d="M11 3.500v15M4.500 7.200l13 7.600M4.500 14.800l13-7.600"/></g><circle cx="11" cy="11" r="1.600" fill="#bdbdbd"/></svg>
<svg class="ic" style="left:236px;top:118px" width="40" height="44" viewBox="0 0 40 44"><path d="M5 38C5 22 12 8 35 6" fill="none" stroke="#c0c0c0" stroke-width="3"/><g fill="#d0d0d0" stroke="#a8a8a8" stroke-width="1.300"><rect x="1.500" y="35" width="7" height="7"/><rect x="7.500" y="11" width="7" height="7"/><rect x="31.500" y="2.500" width="7" height="7"/></g></svg>
<svg class="ic" style="left:259px;top:142px" width="22" height="22" viewBox="0 0 22 22"><rect x=".5" y=".5" width="21" height="21" rx="3.500" fill="#bdbdbd" stroke="#ababab" stroke-width="1"/><g stroke="#fff" stroke-width="2.400" stroke-linecap="round"><path d="M11 3.500v15M4.500 7.200l13 7.600M4.500 14.800l13-7.600"/></g><circle cx="11" cy="11" r="1.600" fill="#bdbdbd"/></svg>
<svg class="ic" style="left:286.0px;top:138.5px" width="8" height="5" viewBox="0 0 8 5"><path d="M0 0h8l-4.0 4.500z" fill="#8a8a8a"/></svg>
<svg class="ic" style="left:302px;top:118px" width="44" height="28" viewBox="0 0 44 28"><g fill="#b8b8b8" stroke="#a0a0a0" stroke-width="1.200"><circle cx="20" cy="6" r="5.300"/><circle cx="37.500" cy="9.700" r="5.300"/><circle cx="6" cy="22" r="5.300"/></g></svg>
<svg class="ic" style="left:326px;top:142px" width="22" height="22" viewBox="0 0 22 22"><rect x=".5" y=".5" width="21" height="21" rx="3.500" fill="#8e8e8e" stroke="#7a7a7a" stroke-width="1"/><path d="M3 8h8.500V3.500L19.500 11l-8 7.500V14H3z" fill="#fff"/></svg>
<svg class="ic" style="left:358px;top:119px" width="46" height="46" viewBox="0 0 46 46"><rect x="7.500" y="3.500" width="11" height="11" fill="#ececec" stroke="#9a9a9a" stroke-width="1.400"/><path d="M7.500 3.500l11 11M18.500 3.500l-11 11" stroke="#9a9a9a" stroke-width="1.200"/><path d="M18.500 9H38M12 14.500L3 39.500" stroke="#9a9a9a" stroke-width="1.500"/><path d="M38 19L19 40" stroke="#a8a8a8" stroke-width="3.500" stroke-linecap="round"/><path d="M20 24l19 17" stroke="#b4b4b4" stroke-width="5.500" stroke-linecap="round"/><path d="M16 27c2-6 9-9 14-5l-8 9z" fill="#bdbdbd" stroke="#9a9a9a" stroke-width="1.200"/></svg>
<svg class="ic" style="left:416px;top:118px" width="38" height="46" viewBox="0 0 38 46"><path d="M12 6.500c0-5 14-5 14 0" fill="none" stroke="#8f8f8f" stroke-width="1.800"/><rect x="2.500" y="6.500" width="33" height="4" rx="2" fill="#8a8a8a"/><path d="M4.500 15h29l-2.500 28H7z" fill="#e0e0e0" stroke="#8a8a8a" stroke-width="3.400" stroke-linejoin="round"/><path d="M14 16v26M24 16v26" stroke="#8a8a8a" stroke-width="3"/></svg>
<svg class="ic" style="left:465px;top:122px" width="50" height="36" viewBox="0 0 50 36"><path d="M3 9.500c10 5 20 6 30 10M5 2.500c9 7 17 10 25 16" fill="none" stroke="#b4b4b4" stroke-width="1.300"/><path d="M3 9.500c4 .5 10 0 20 5.500l8 4-3 2c-8-5-18-7-25-11.500z" fill="#e6e6e6" stroke="#b0b0b0" stroke-width="1"/><path d="M5 2.500c2 4 8 7 16 11l9 5 1.500-2.500C23 11 13 7 5 2.500z" fill="#f2f2f2" stroke="#b0b0b0" stroke-width="1"/><ellipse cx="40" cy="10.500" rx="6.500" ry="4.500" transform="rotate(-35 40 10.500)" fill="none" stroke="#8f8f8f" stroke-width="2.600"/><ellipse cx="40.500" cy="26" rx="6.500" ry="4.500" transform="rotate(40 40.500 26)" fill="none" stroke="#8f8f8f" stroke-width="2.600"/><path d="M28 19l7-5M28 19l7 3" stroke="#8f8f8f" stroke-width="2.400"/></svg>
<svg class="ic" style="left:526px;top:118px" width="38" height="44" viewBox="0 0 38 44"><path d="M11.500 2.500h14l7 7v23h-21z" fill="#f4f4f4" stroke="#c8c8c8" stroke-width="1.400"/><path d="M25.500 2.500v7h7" fill="none" stroke="#c8c8c8" stroke-width="1.400"/><path d="M15 14h13M15 18h13M15 22h13" stroke="#d8d8d8" stroke-width="1.200"/><path d="M3 11h14l7 7v23H3z" fill="#fff" stroke="#9a9a9a" stroke-width="1.800"/><path d="M17 11v7h7" fill="#ececec" stroke="#9a9a9a" stroke-width="1.500"/><path d="M7 24h13M7 28h9M7 32h13M7 36h13" stroke="#a8a8a8" stroke-width="1.500"/></svg>
<svg class="ic" style="left:581px;top:116px" width="38" height="46" viewBox="0 0 38 46"><rect x="3" y="5" width="32" height="38" fill="#dcdcdc" stroke="#a8a8a8" stroke-width="1.600"/><rect x="11" y="2" width="16" height="7" fill="#d0d0d0" stroke="#a8a8a8" stroke-width="1.400"/><path d="M7.500 11.500h17l6 6v22h-23z" fill="#fff" stroke="#9a9a9a" stroke-width="1.500"/><path d="M24.500 11.500v6h6" fill="#ececec" stroke="#9a9a9a" stroke-width="1.300"/><path d="M11 22h14M11 26h9M11 30h14M11 34h14" stroke="#a8a8a8" stroke-width="1.500"/></svg>
<svg class="ic" style="left:641px;top:123px" width="44" height="24" viewBox="0 0 44 24"><path d="M10.500 1.500H41.500V21.500H10.500L1.500 11.500z" fill="url(#tagg)" stroke="#bdbdbd" stroke-width="1.600" stroke-linejoin="round"/><text x="23.3" y="17.500" text-anchor="middle" font-family="Liberation Sans,sans-serif" font-weight="bold" font-size="16" fill="#7f7f7f">abc</text></svg>
<svg class="ic" style="left:695px;top:115px" width="50" height="50" viewBox="0 0 50 50"><g stroke="#a8a8a8" stroke-width="1.600" stroke-linejoin="round"><path d="M25 21L11 7.500a22 22 0 0 1 28 0z" fill="#a8a8a8" stroke="#9a9a9a"/><path d="M22.500 27v20.500A22.500 22.500 0 0 1 7.500 11z" fill="#d0d0d0"/><path d="M27.500 27v20.500A22.500 22.500 0 0 0 42.500 11z" fill="#e0e0e0"/></g></svg>
<div class="abs" style="left:752px;top:120px;width:48px;height:40px;background:#dde8f4;border:2px solid #0a60d8"></div>
<svg class="ic" style="left:752px;top:123px" width="44" height="24" viewBox="0 0 44 24"><path d="M10.500 1.500H41.500V21.500H10.500L1.500 11.500z" fill="url(#tagy)" stroke="#c4a000" stroke-width="1.600" stroke-linejoin="round"/><text x="17.3" y="17.500" text-anchor="middle" font-family="Liberation Sans,sans-serif" font-weight="bold" font-size="16" fill="#2e3436">ab</text></svg>
<svg class="ic" style="left:776px;top:130px" width="26" height="34" viewBox="0 0 26 34"><path d="M7 8l4 12" stroke="#555" stroke-width="5.500" stroke-linecap="round"/><path d="M7 8l4 12" stroke="#f4f4f4" stroke-width="3.500" stroke-linecap="round"/><circle cx="14" cy="22" r="9.300" fill="#a82222"/><circle cx="11.500" cy="19" r="3.300" fill="#e06a6a"/></svg>
<svg class="ic" style="left:807px;top:123px" width="44" height="24" viewBox="0 0 44 24"><path d="M10.500 1.500H41.500V21.500H10.500L1.500 11.500z" fill="url(#tagg)" stroke="#bdbdbd" stroke-width="1.600" stroke-linejoin="round"/><text x="17.3" y="17.500" text-anchor="middle" font-family="Liberation Sans,sans-serif" font-weight="bold" font-size="16" fill="#7f7f7f">ab</text></svg>
<svg class="ic" style="left:831px;top:130px" width="26" height="34" viewBox="0 0 26 34"><path d="M7 8l4 12" stroke="#a8a8a8" stroke-width="5.500" stroke-linecap="round"/><path d="M7 8l4 12" stroke="#f4f4f4" stroke-width="3.500" stroke-linecap="round"/><circle cx="14" cy="22" r="9.300" fill="#8a8a8a"/><circle cx="11.500" cy="19" r="3.300" fill="#b0b0b0"/></svg>
<svg class="ic" style="left:861px;top:123px" width="44" height="24" viewBox="0 0 44 24"><path d="M10.500 1.500H41.500V21.500H10.500L1.500 11.500z" fill="url(#tagg)" stroke="#bdbdbd" stroke-width="1.600" stroke-linejoin="round"/><text x="23.3" y="17.500" text-anchor="middle" font-family="Liberation Sans,sans-serif" font-weight="bold" font-size="16" fill="#7f7f7f">abc</text></svg>
<svg class="ic" style="left:877px;top:142px" width="36" height="24" viewBox="0 0 36 24"><path d="M2 12C9 2 25 2 32 11M3 12c8 11 22 11 29 0" fill="#f4f4f4" stroke="#7a7a7a" stroke-width="1.300"/><path d="M4 7C12-1 27 0 33 8" fill="none" stroke="#8a8a8a" stroke-width="1"/><circle cx="17" cy="11.500" r="5.500" fill="#b8b8b8"/><circle cx="17" cy="11.500" r="2.600" fill="#6a6a6a"/></svg>
<svg class="ic" style="left:916px;top:123px" width="44" height="24" viewBox="0 0 44 24"><path d="M10.500 1.500H41.500V21.500H10.500L1.500 11.500z" fill="url(#tagg)" stroke="#bdbdbd" stroke-width="1.600" stroke-linejoin="round"/><text x="23.3" y="17.500" text-anchor="middle" font-family="Liberation Sans,sans-serif" font-weight="bold" font-size="16" fill="#7f7f7f">abc</text></svg>
<svg class="ic" style="left:943px;top:142px" width="22" height="22" viewBox="0 0 22 22"><rect x=".5" y=".5" width="21" height="21" rx="3.500" fill="#a9a9a9" stroke="#8f8f8f" stroke-width="1"/><path d="M3 8h8.500V3.500L19.500 11l-8 7.500V14H3z" fill="#fff"/></svg>
<svg class="ic" style="left:971px;top:123px" width="44" height="24" viewBox="0 0 44 24"><path d="M10.500 1.500H41.500V21.500H10.500L1.500 11.500z" fill="url(#tagg)" stroke="#bdbdbd" stroke-width="1.600" stroke-linejoin="round"/><text x="23.3" y="17.500" text-anchor="middle" font-family="Liberation Sans,sans-serif" font-weight="bold" font-size="16" fill="#7f7f7f">abc</text></svg>
<svg class="ic" style="left:998px;top:142px" width="22" height="22" viewBox="0 0 22 22"><rect x=".5" y=".5" width="21" height="21" rx="3.500" fill="#a9a9a9" stroke="#8f8f8f" stroke-width="1"/><path d="M6 12a5.200 5.200 0 1 1 5.500 5" fill="none" stroke="#fff" stroke-width="3"/><path d="M8 13.500l4.500 3.300-4.800 3z" fill="#fff"/></svg>
<svg class="ic" style="left:1026px;top:123px" width="44" height="24" viewBox="0 0 44 24"><path d="M10.500 1.500H41.500V21.500H10.500L1.500 11.500z" fill="url(#tagg)" stroke="#bdbdbd" stroke-width="1.600" stroke-linejoin="round"/><text x="23.3" y="17.500" text-anchor="middle" font-family="Liberation Sans,sans-serif" font-weight="bold" font-size="16" fill="#7f7f7f">abc</text></svg>
<svg class="ic" style="left:1053px;top:142px" width="22" height="22" viewBox="0 0 22 22"><rect x=".5" y=".5" width="21" height="21" rx="3.500" fill="#bdbdbd" stroke="#ababab" stroke-width="1"/><path d="M17 4.500L9 12.500" stroke="#fff" stroke-width="3.400" stroke-linecap="round"/><path d="M4 18l2-6 4 4z" fill="#fff"/></svg>
<svg class="ic" style="left:1100px;top:124px" width="36" height="32" viewBox="0 0 36 32"><path d="M3.500 9.500v19h17" fill="none" stroke="#9a9a9a" stroke-width="1"/><path d="M5.500 11.500v15h15" fill="none" stroke="#b0b0b0" stroke-width="1"/><rect x="5.500" y="2.500" width="27" height="24" fill="#fff" stroke="#8a8a8a" stroke-width="1"/><text x="19" y="18.500" text-anchor="middle" font-family="Liberation Sans,sans-serif" font-size="10" letter-spacing=".2" fill="#111">CSW</text></svg>
<svg class="ic" style="left:1172px;top:127px" width="28" height="28" viewBox="0 0 28 28"><path d="M10.500 1.500c-4 0-5 1.500-5 4v3h6v1H3c-3 0-3.500 8 0 9.500h2.500v-4c0-2 1.500-3.500 3.500-3.500h5.500c2 0 3-1 3-3v-3c0-3-2-4-7-4z" fill="#3b77a8"/><circle cx="8" cy="4.500" r="1.100" fill="#fff"/><path d="M13 23.500c4 0 5-1.500 5-4v-3h-6v-1h8.500c3 0 3.500-8 0-9.500H18v4c0 2-1.500 3.500-3.500 3.500H9c-2 0-3 1-3 3v3c0 3 2 4 7 4z" fill="#f8d040" transform="translate(2,1)"/><path d="M16 17.500l7 3-7 3" fill="none" stroke="#444" stroke-width="1.500"/></svg>
<svg class="ic" style="left:1222px;top:124px" width="36" height="34" viewBox="0 0 36 34"><ellipse cx="17" cy="30" rx="9" ry="1.800" fill="#000" opacity=".18"/><path d="M8.500 17a9.500 9.500 0 1 1 9.500 9.500" fill="none" stroke="url(#blueg)" stroke-width="6"/><path d="M2.500 14.500h13l-6.500 8z" fill="#3f7fd0"/></svg>
<svg class="ic" style="left:1269.0px;top:138.5px" width="8" height="5" viewBox="0 0 8 5"><path d="M0 0h8l-4.0 4.500z" fill="#1a1a1a"/></svg>
<svg class="ic" style="left:10px;top:172px" width="54" height="52" viewBox="0 0 54 52"><path d="M8 41L31 18" stroke="#000" stroke-width="12.500" stroke-linecap="butt"/><circle cx="9.500" cy="40" r="8" fill="#000"/><circle cx="8.500" cy="42" r="3" fill="#f0f0f0"/><path d="M40 1a15.500 15.500 0 1 0 11.500 21.500l-11 4.500-8.500-8.500 3.500-11z" fill="#000"/></svg>
<svg class="ic" style="left:66px;top:172px" width="46" height="52" viewBox="0 0 46 52"><path d="M2 2h42v48H2z M8.500 8v11h29V8z M8.500 26v7h7v-7z M19.500 26v7h7v-7z M8.500 38v7h7v-7z M19.500 38v7h7v-7z M31 26v19h6.500V26z" fill="#000" fill-rule="evenodd"/></svg>
<svg class="ic" style="left:121px;top:172px" width="52" height="52" viewBox="0 0 52 52"><path d="M4.500 35.500L21.500 18.500 28.500 25.500 47.500 5.500" fill="none" stroke="#000" stroke-width="7.400" stroke-linejoin="miter"/><rect x="2" y="44" width="48" height="6" fill="#000"/></svg>
<svg class="ic" style="left:176px;top:172px" width="52" height="52" viewBox="0 0 52 52"><path d="M12 33C1 33-1 19 10 17 11 4 29-2 37 10c9-2 16 7 11 15 6 1 6 8-1 8H37c0-6-4-9-9-9s-9 3-9 9z" fill="#000"/><path d="M25 26h7.500v12h9L28.500 50 16 38h9z" fill="#000"/></svg>
<svg class="ic" style="left:231px;top:172px" width="46" height="52" viewBox="0 0 46 52"><path d="M2 2h17v20h23v28H2z M8 14v6h6v-6z M8 26v6h6v-6z M8 38v6h23v-6z" fill="#000" fill-rule="evenodd"/><path d="M23 2l19 16H23z" fill="#000"/></svg>
<svg class="ic" style="left:286px;top:172px" width="52" height="52" viewBox="0 0 52 52"><path d="M2 2h18v6H2z" fill="#000"/><path d="M26 8h24v6H26z" fill="#000"/><path d="M2 17h48v30a3 3 0 0 1-3 3H5a3 3 0 0 1-3-3z" fill="#000"/><path d="M2 8h18v10H2z" fill="#000"/></svg>
<svg class="ic" style="left:341px;top:172px" width="52" height="52" viewBox="0 0 52 52"><circle cx="26" cy="26" r="24" fill="#000"/><path d="M12 11c3-4 8-6 12-6-2 3-6 4-7 8-1 3 3 5 2 9-1 3-5 2-6 6s3 7 1 11C7 33 5 18 12 11z" fill="#f0f0f0"/><path d="M33 8c4 1 9 5 11 10-3-1-4 2-7 1-2-1-1-4-4-5s-3-4 0-6z" fill="#f0f0f0"/><path d="M30 26c4-3 10-1 12 3 1 4-3 9-7 13-2 2-4 0-4-3 1-4-3-5-3-8 0-2 1-4 2-5z" fill="#f0f0f0"/></svg>
<svg class="ic" style="left:406px;top:172px" width="32" height="52" viewBox="0 0 32 52"><circle cx="21" cy="7.500" r="6" fill="#000"/><path d="M5 25c5-6 13-8 16-4 4 5-6 13-6 20 0 5 6 5 9 1" fill="none" stroke="#000" stroke-width="5.500" stroke-linecap="round"/></svg>
<svg class="ic" style="left:5px;top:237px" width="48" height="42" viewBox="0 0 48 42"><g fill="#f0f0f0" stroke="#35506f" stroke-width="2.300"><path d="M5 6L17 37 29 8.500 43 8" fill="none"/><circle cx="5" cy="6" r="3.300"/><circle cx="17" cy="37" r="3.300"/><circle cx="30" cy="8" r="3.300"/><circle cx="43" cy="8" r="3.300"/></g></svg>
<svg class="ic" style="left:35px;top:270.0px" width="18.500" height="18.500" viewBox="0 0 20 20"><rect x=".5" y=".5" width="19" height="19" rx="3.500" fill="url(#gbadge)" stroke="#4f8a4f" stroke-width="1"/><path d="M10 4v12M4 10h12" stroke="#fff" stroke-width="3.600"/></svg>
<svg class="ic" style="left:5px;top:295px" width="40" height="40" viewBox="0 0 40 40"><rect x="0" y="0" width="13" height="13" fill="#1f3a5c"/><rect x="13" y="0" width="13" height="13" fill="#6d99c9"/><rect x="26" y="0" width="13" height="13" fill="#1f3a5c"/><rect x="0" y="13" width="13" height="13" fill="#6d99c9"/><rect x="13" y="13" width="13" height="13" fill="#1f3a5c"/><rect x="26" y="13" width="13" height="13" fill="#8fb4dc"/><rect x="0" y="26" width="13" height="13" fill="#1f3a5c"/><rect x="13" y="26" width="13" height="13" fill="#8fb4dc"/><rect x="26" y="26" width="13" height="13" fill="#b4cfea"/></svg>
<svg class="ic" style="left:35px;top:324.5px" width="18.500" height="18.500" viewBox="0 0 20 20"><rect x=".5" y=".5" width="19" height="19" rx="3.500" fill="url(#gbadge)" stroke="#4f8a4f" stroke-width="1"/><path d="M10 4v12M4 10h12" stroke="#fff" stroke-width="3.600"/></svg>
<svg class="ic" style="left:4px;top:347px" width="50" height="50" viewBox="0 0 50 50"><path d="M3 46C8 30 22 10 46 3 47 16 40 30 22 38c-6 2-12 3-15 5z" fill="#e8eef6" stroke="#35506f" stroke-width="1.700" stroke-linejoin="round"/><path d="M3 46C12 32 26 18 44 6" fill="none" stroke="#35506f" stroke-width="1.500"/><path d="M14 33l13-5M19 27l13-5M24 21l13-5M29 16l11-4M12 36l7-12M18 30l7-13M25 23l7-12M32 17l6-9" stroke="#6d8cb0" stroke-width="1"/></svg>
<svg class="ic" style="left:35px;top:378.5px" width="18.500" height="18.500" viewBox="0 0 20 20"><rect x=".5" y=".5" width="19" height="19" rx="3.500" fill="url(#gbadge)" stroke="#4f8a4f" stroke-width="1"/><path d="M10 4v12M4 10h12" stroke="#fff" stroke-width="3.600"/></svg>
<svg class="ic" style="left:3px;top:399px" width="44" height="42" viewBox="0 0 44 42"><g fill="#6d99c9" stroke="#294a72" stroke-width="2.300" stroke-linejoin="round"><path d="M11 5C4 3 1 9 3 16c1 5 4 9 7 8 2-1 2-4 2-7z"/><path d="M29 6c6-3 11 1 10 8-1 6-4 11-8 11-2 0-3-3-3-6z"/><path d="M10 6c4-5 16-5 20 0 3 5 1 12-1 17-1 4 0 9-2 13-2 3-7 3-8-1-1-5 0-9-3-12-4-4-9-11-6-17z"/></g><path d="M16 9c-2 3-2 8 0 12M27 8c3 2 4 7 2 12M30 20c2 1 5 1 7-1" fill="none" stroke="#294a72" stroke-width="1.800"/></svg>
<svg class="ic" style="left:35px;top:432.5px" width="18.500" height="18.500" viewBox="0 0 20 20"><rect x=".5" y=".5" width="19" height="19" rx="3.500" fill="url(#gbadge)" stroke="#4f8a4f" stroke-width="1"/><path d="M10 4v12M4 10h12" stroke="#fff" stroke-width="3.600"/></svg>
<svg class="ic" style="left:58.25px;top:424px" width="7.5" height="5" viewBox="0 0 7.5 5"><path d="M0 0h7.5l-3.75 4.500z" fill="#1a1a1a"/></svg>
<svg class="ic" style="left:3px;top:455px" width="52" height="44" viewBox="0 0 52 44"><defs><clipPath id="cw"><ellipse cx="26" cy="22" rx="23.500" ry="20"/></clipPath></defs><ellipse cx="26" cy="22" rx="23.500" ry="20" fill="#a9c6e6" stroke="#5f8cc0" stroke-width="2"/><g clip-path="url(#cw)"><path d="M0 12h52M0 22h52M0 32h52" stroke="#e8f0f8" stroke-width="2.200"/><path d="M8 13c2-3 6-5 10-5l2 3-3 3 1 3-3 2-1 5-2 3-2-4 1-4-3-3zM23 9l6-2 4 2 5-1 5 4 1 5-3 1-2 4-3-1 0 5-3 4-3-5 1-5-4-2-1-4zM18 27l3 1 0 5-2 4-2-4zM38 27l3 1-1 4-3 0z" fill="#264870"/><ellipse cx="26" cy="22" rx="11" ry="20" fill="none" stroke="#e8f0f8" stroke-width="1.800"/><path d="M26 2v40" stroke="#e8f0f8" stroke-width="1.500"/></g><ellipse cx="26" cy="22" rx="23.500" ry="20" fill="none" stroke="#5f8cc0" stroke-width="2"/></svg>
<svg class="ic" style="left:35px;top:485.5px" width="18.500" height="18.500" viewBox="0 0 20 20"><rect x=".5" y=".5" width="19" height="19" rx="3.500" fill="url(#gbadge)" stroke="#4f8a4f" stroke-width="1"/><path d="M10 4v12M4 10h12" stroke="#fff" stroke-width="3.600"/></svg>
<svg class="ic" style="left:58.25px;top:477.5px" width="7.5" height="5" viewBox="0 0 7.5 5"><path d="M0 0h7.5l-3.75 4.500z" fill="#1a1a1a"/></svg>
<svg class="ic" style="left:3px;top:509px" width="52" height="44" viewBox="0 0 52 44"><defs><clipPath id="cc"><ellipse cx="26" cy="22" rx="23" ry="19.500"/></clipPath><clipPath id="cci"><ellipse cx="26" cy="22" rx="10" ry="19.500"/></clipPath></defs><g clip-path="url(#cc)"><rect x="0" y="0" width="52" height="12" fill="#5f8cc0"/><rect x="0" y="12" width="52" height="10" fill="#2a507c"/><rect x="0" y="22" width="52" height="10" fill="#5f8cc0"/><rect x="0" y="32" width="52" height="12" fill="#2a507c"/><g clip-path="url(#cci)"><rect x="0" y="0" width="52" height="12" fill="#2a507c"/><rect x="0" y="12" width="52" height="10" fill="#6d99c9"/><rect x="0" y="22" width="52" height="10" fill="#2a507c"/><rect x="0" y="32" width="52" height="12" fill="#6d99c9"/></g><path d="M0 12h52M0 22h52M0 32h52" stroke="#fff" stroke-width="2"/><ellipse cx="26" cy="22" rx="10" ry="19.500" fill="none" stroke="#fff" stroke-width="2"/></g><ellipse cx="26" cy="22" rx="23" ry="19.500" fill="none" stroke="#1f3450" stroke-width="2.600"/></svg>
<svg class="ic" style="left:35px;top:540.0px" width="18.500" height="18.500" viewBox="0 0 20 20"><rect x=".5" y=".5" width="19" height="19" rx="3.500" fill="url(#gbadge)" stroke="#4f8a4f" stroke-width="1"/><path d="M10 4v12M4 10h12" stroke="#fff" stroke-width="3.600"/></svg>
<svg class="ic" style="left:3px;top:563px" width="52" height="42" viewBox="0 0 52 42"><ellipse cx="26" cy="21" rx="23.500" ry="19.500" fill="#f0f4fa" stroke="#5f8cc0" stroke-width="1.800"/><ellipse cx="26" cy="21" rx="11.500" ry="19.500" fill="none" stroke="#7fa6d6" stroke-width="1.500"/><path d="M2.500 21h47M6 11h40M6 31h40" stroke="#7fa6d6" stroke-width="1.500"/><g fill="#fff" stroke="#22364f" stroke-width="2"><path d="M11 9l9 21 8.500-19 9-.5" fill="none"/><circle cx="11" cy="9" r="2.800"/><circle cx="20" cy="30" r="2.800"/><circle cx="28.500" cy="10.500" r="2.800"/><circle cx="38" cy="10.500" r="2.800"/></g></svg>
<svg class="ic" style="left:35px;top:595.0px" width="18.500" height="18.500" viewBox="0 0 20 20"><rect x=".5" y=".5" width="19" height="19" rx="3.500" fill="url(#gbadge)" stroke="#4f8a4f" stroke-width="1"/><path d="M10 4v12M4 10h12" stroke="#fff" stroke-width="3.600"/></svg>
<svg class="ic" style="left:58.25px;top:585px" width="7.5" height="5" viewBox="0 0 7.5 5"><path d="M0 0h7.5l-3.75 4.500z" fill="#1a1a1a"/></svg>
<svg class="ic" style="left:10px;top:621px" width="30" height="36" viewBox="0 0 30 36"><path d="M14.500 2.500c7 0 11 5 10.500 12C24.500 24 16 30 6 33.500l-1.500-3C12 27 16 22.500 16 18c-5 1-9.500-2-9.500-7 0-5 3.500-8.500 8-8.500z" fill="#6d99c9" stroke="#35506f" stroke-width="1.700" stroke-linejoin="round"/></svg>
<svg class="ic" style="left:35px;top:647.5px" width="18.500" height="18.500" viewBox="0 0 20 20"><rect x=".5" y=".5" width="19" height="19" rx="3.500" fill="url(#gbadge)" stroke="#4f8a4f" stroke-width="1"/><path d="M10 4v12M4 10h12" stroke="#fff" stroke-width="3.600"/></svg>
<svg class="ic" style="left:6px;top:674px" width="46" height="46" viewBox="0 0 46 46"><defs><linearGradient id="vl" x1="0" y1="0" x2="1" y2="1"><stop offset="0" stop-color="#a9c3e0"/><stop offset="1" stop-color="#e4edf6"/></linearGradient></defs><rect x="1.500" y="1.500" width="42" height="41" rx="3.500" fill="url(#vl)" stroke="#35506f" stroke-width="1.400"/><g fill="#e8eef6" stroke="#35506f" stroke-width="2.200"><path d="M5 5l11 27L28 5l11 0" fill="none"/><circle cx="5" cy="5" r="2.600"/><circle cx="16" cy="33" r="3"/><circle cx="28" cy="5" r="2.600"/><circle cx="40" cy="5" r="2.600"/></g></svg>
<svg class="ic" style="left:35px;top:700.5px" width="18.500" height="18.500" viewBox="0 0 20 20"><rect x=".5" y=".5" width="19" height="19" rx="3.500" fill="url(#gbadge)" stroke="#4f8a4f" stroke-width="1"/><path d="M10 4v12M4 10h12" stroke="#fff" stroke-width="3.600"/></svg>
<svg class="ic" style="left:4px;top:725px" width="48" height="42" viewBox="0 0 48 42"><g fill="#f0f0f0" stroke="#35506f" stroke-width="2.300"><path d="M5 6L17 37 29 8.500 43 8" fill="none"/><circle cx="5" cy="6" r="3.300"/><circle cx="17" cy="37" r="3.300"/><circle cx="30" cy="8" r="3.300"/><circle cx="43" cy="8" r="3.300"/></g></svg>
<svg class="ic" style="left:34px;top:755px" width="20" height="20" viewBox="0 0 22 22"><rect x=".5" y=".5" width="21" height="21" rx="3.500" fill="url(#ybadge)" stroke="#b08c00" stroke-width="1"/><g stroke="#fff" stroke-width="2.400" stroke-linecap="round"><path d="M11 3.500v15M4.500 7.200l13 7.600M4.500 14.800l13-7.600"/></g><circle cx="11" cy="11" r="1.600" fill="#c8a000"/></svg>
<svg class="ic" style="left:58.75px;top:747px" width="7.5" height="5" viewBox="0 0 7.5 5"><path d="M0 0h7.5l-3.75 4.500z" fill="#1a1a1a"/></svg>
<svg class="ic" style="left:76px;top:267px" width="34" height="30" viewBox="0 0 34 30"><defs><clipPath id="sb"><path d="M1.200 17.300L8.200 3.200 20.400 7.900 16.200 23.800z"/></clipPath></defs><g clip-path="url(#sb)"><path d="M0 0h34v30H0z" fill="#e83030"/><path d="M-2 14.500L24 22V0H-2z" fill="#6d99c9"/><path d="M2 7.500L24 14.500V0H2z" fill="#f8e838"/></g><path d="M29.500 3L21.500 12.800" stroke="#c88a38" stroke-width="3.600" stroke-linecap="round"/><path d="M29.500 3L21.500 12.800" stroke="#e0a850" stroke-width="1.600" stroke-linecap="round"/><path d="M16.500 9.500l9 6.800-8 9.500-9.300-7.300z" fill="#ecc078" stroke="#b87828" stroke-width="1"/><path d="M10 19l8 6M12 16.500l8 6M14 14l8 6" stroke="#c89040" stroke-width=".7"/></svg>
<svg class="ic" style="left:116px;top:264px" width="32" height="34" viewBox="0 0 32 34"><path d="M2.500 13v17.500h17" fill="none" stroke="#8a8a8a" stroke-width="1.300"/><path d="M6 10.500v16.500h16" fill="none" stroke="#8a8a8a" stroke-width="1.300"/><rect x="9.500" y="7.500" width="17" height="16.500" fill="#f4f4f4" stroke="#8a8a8a" stroke-width="1.300"/><path d="M14.500 17V6.500a3.500 3.500 0 0 1 7 0V17" fill="none" stroke="#35506f" stroke-width="1.600"/><path d="M17.500 17V8" stroke="#35506f" stroke-width="1.400"/></svg>
<svg class="ic" style="left:131px;top:282px" width="15" height="15" viewBox="0 0 15 15"><rect x=".5" y=".5" width="13.500" height="13.500" rx="2.500" fill="url(#gbadge)" stroke="#4f8a4f" stroke-width="1"/><path d="M7.250 3v8.500M3 7.250h8.500" stroke="#fff" stroke-width="2.600"/></svg>
<svg class="ic" style="left:153px;top:267px" width="36" height="26" viewBox="0 0 36 26"><path d="M2 13C9 3 25 2.500 32 12M3 13c8 11 22 10 29-1" fill="#f8f8f8" stroke="#6a6a6a" stroke-width="1.300"/><path d="M4 8C12 0 27 0 33 8.500" fill="none" stroke="#8a8a8a" stroke-width="1"/><circle cx="17.500" cy="12" r="7.600" fill="#6d99c9" stroke="#4a6f9c" stroke-width="1"/><circle cx="17.500" cy="11.500" r="3" fill="#111"/><circle cx="18.500" cy="10.300" r="1" fill="#fff"/></svg>
<svg class="ic" style="left:181.0px;top:291px" width="5" height="5" viewBox="0 0 5 5"><path d="M0 0h5l-2.5 4.500z" fill="#1a1a1a"/></svg>
<svg class="ic" style="left:194px;top:264px" width="30" height="33" viewBox="0 0 30 33"><path d="M2 5.500h26L18.500 17.500V28l-7 3.500v-14z" fill="#6d99c9" stroke="#35506f" stroke-width="1.500" stroke-linejoin="round"/><path d="M1.500 2h27v4.500h-27z" fill="#fce94f" stroke="#c4a000" stroke-width="1.200"/><path d="M14 17v12" stroke="#a8c4e4" stroke-width="2"/></svg>
<svg class="ic" style="left:234px;top:262px" width="32" height="36" viewBox="0 0 32 36"><text x="1" y="24" font-family="Liberation Serif,serif" font-size="40" fill="#a8a8a8">ε</text><path d="M14.500 21h16l-5 6.500v6.500l-6 2v-8.500z" fill="#f4f4f4" stroke="#c0c0c0" stroke-width="1.300"/><path d="M14.500 21h16v2h-16z" fill="#c8c8c8"/></svg>
<svg class="ic" style="left:270.0px;top:277px" width="6" height="5" viewBox="0 0 6 5"><path d="M0 0h6l-3.0 4.500z" fill="#8a8a8a"/></svg>
<svg class="ic" style="left:284px;top:265px" width="34" height="30" viewBox="0 0 34 30"><path d="M3 3h9M3 3v21M3 13h7M3 24h7" fill="none" stroke="#9a9a9a" stroke-width="1.300"/><path d="M15 2h9v13h6.500L19.500 27 8.500 15H15z" fill="#6d99c9" stroke="#35506f" stroke-width="1.400" stroke-linejoin="round"/><rect x="7.500" y="10" width="5.500" height="5.500" fill="#fff" stroke="#f8a020" stroke-width="1.600"/><rect x="7.500" y="21" width="5.500" height="5.500" fill="#fff" stroke="#f8a020" stroke-width="1.600"/></svg>
<svg class="ic" style="left:323px;top:264px" width="34" height="30" viewBox="0 0 34 30"><path d="M3 3h9M3 3v21M3 13h7M3 24h7" fill="none" stroke="#9a9a9a" stroke-width="1.300"/><path d="M15 27h9V14h6.500L19.500 2 8.500 14H15z" fill="#6d99c9" stroke="#35506f" stroke-width="1.400" stroke-linejoin="round"/><rect x="7.500" y="10" width="5.500" height="5.500" fill="#fff" stroke="#f8a020" stroke-width="1.600"/><rect x="7.500" y="21" width="5.500" height="5.500" fill="#fff" stroke="#f8a020" stroke-width="1.600"/></svg>
<svg class="ic" style="left:362px;top:265px" width="32" height="32" viewBox="0 0 32 32"><rect x="2" y="2" width="22.500" height="22.500" fill="#f4f4f4" stroke="#8a8a8a" stroke-width="1.600"/><rect x="17" y="20" width="11.500" height="9.500" rx="2.500" fill="#e84848" stroke="#e84848" stroke-width="1"/><path d="M19.500 24.750h6.500" stroke="#fff" stroke-width="2.200"/></svg>
<div id="canvas">
<svg style="position:absolute;left:0;top:0" width="1447" height="774" viewBox="473 228 1447 774">
<defs>
<clipPath id="cE"><ellipse cx="1196" cy="615" rx="417" ry="368"/></clipPath>
<clipPath id="cO"><path d="M1052.5 557.5C1049.4 554.2 1045.4 545.4 1043.8 540.0C1042.1 534.6 1041.9 529.6 1042.5 525.0C1043.1 520.4 1046.2 517.1 1047.5 512.5C1048.8 507.9 1049.4 502.5 1050.0 497.5C1050.6 492.5 1050.2 486.2 1051.2 482.5C1052.3 478.8 1052.3 477.1 1056.2 475.0C1060.2 472.9 1069.0 472.1 1075.0 470.0C1081.0 467.9 1087.1 464.6 1092.5 462.5C1097.9 460.4 1105.0 460.0 1107.5 457.5C1110.0 455.0 1106.2 450.6 1107.5 447.5C1108.8 444.4 1112.1 440.6 1115.0 438.8C1117.9 436.9 1121.7 436.0 1125.0 436.2C1128.3 436.5 1132.5 438.1 1135.0 440.0C1137.5 441.9 1137.5 445.8 1140.0 447.5C1142.5 449.2 1145.8 450.0 1150.0 450.0C1154.2 450.0 1162.5 449.6 1165.0 447.5C1167.5 445.4 1163.8 440.4 1165.0 437.5C1166.2 434.6 1169.6 431.2 1172.5 430.0C1175.4 428.8 1179.2 429.0 1182.5 430.0C1185.8 431.0 1190.0 433.8 1192.5 436.2C1195.0 438.8 1195.0 444.4 1197.5 445.0C1200.0 445.6 1205.0 442.5 1207.5 440.0C1210.0 437.5 1210.0 432.5 1212.5 430.0C1215.0 427.5 1220.0 427.1 1222.5 425.0C1225.0 422.9 1227.3 420.4 1227.5 417.5C1227.7 414.6 1224.6 411.2 1223.8 407.5C1222.9 403.8 1222.3 400.4 1222.5 395.0C1222.7 389.6 1222.9 380.4 1225.0 375.0C1227.1 369.6 1231.7 366.5 1235.0 362.5C1238.3 358.5 1241.7 353.3 1245.0 351.2C1248.3 349.2 1251.9 349.0 1255.0 350.0C1258.1 351.0 1261.7 354.6 1263.8 357.5C1265.8 360.4 1267.5 363.8 1267.5 367.5C1267.5 371.2 1265.8 375.8 1263.8 380.0C1261.7 384.2 1258.1 388.3 1255.0 392.5C1251.9 396.7 1247.9 401.7 1245.0 405.0C1242.1 408.3 1240.0 410.2 1237.5 412.5C1235.0 414.8 1231.2 415.8 1230.0 418.8C1228.8 421.7 1230.8 426.5 1230.0 430.0C1229.2 433.5 1225.8 435.8 1225.0 440.0C1224.2 444.2 1225.4 450.4 1225.0 455.0C1224.6 459.6 1221.2 463.3 1222.5 467.5C1223.8 471.7 1228.8 476.7 1232.5 480.0C1236.2 483.3 1240.8 486.2 1245.0 487.5C1249.2 488.8 1253.8 488.3 1257.5 487.5C1261.2 486.7 1265.4 485.4 1267.5 482.5C1269.6 479.6 1268.3 473.1 1270.0 470.0C1271.7 466.9 1274.2 464.4 1277.5 463.8C1280.8 463.1 1286.7 464.8 1290.0 466.2C1293.3 467.7 1295.4 471.0 1297.5 472.5C1299.6 474.0 1300.4 475.4 1302.5 475.0C1304.6 474.6 1306.2 470.6 1310.0 470.0C1313.8 469.4 1320.0 472.1 1325.0 471.2C1330.0 470.4 1335.8 466.7 1340.0 465.0C1344.2 463.3 1346.2 461.7 1350.0 461.2C1353.8 460.8 1360.0 460.6 1362.5 462.5C1365.0 464.4 1364.6 468.8 1365.0 472.5C1365.4 476.2 1365.8 480.8 1365.0 485.0C1364.2 489.2 1359.2 493.8 1360.0 497.5C1360.8 501.2 1367.5 504.6 1370.0 507.5C1372.5 510.4 1373.3 513.3 1375.0 515.0C1376.7 516.7 1377.5 517.9 1380.0 517.5C1382.5 517.1 1386.7 515.4 1390.0 512.5C1393.3 509.6 1396.2 502.3 1400.0 500.0C1403.8 497.7 1408.3 497.9 1412.5 498.8C1416.7 499.6 1422.1 504.8 1425.0 505.0C1427.9 505.2 1427.5 502.5 1430.0 500.0C1432.5 497.5 1436.2 491.9 1440.0 490.0C1443.8 488.1 1448.3 488.1 1452.5 488.8C1456.7 489.4 1461.2 491.5 1465.0 493.8C1468.8 496.0 1471.7 500.4 1475.0 502.5C1478.3 504.6 1481.2 504.6 1485.0 506.2C1488.8 507.9 1495.0 510.2 1497.5 512.5C1500.0 514.8 1497.9 518.3 1500.0 520.0C1502.1 521.7 1506.7 522.9 1510.0 522.5C1513.3 522.1 1517.1 519.6 1520.0 517.5C1522.9 515.4 1524.6 512.3 1527.5 510.0C1530.4 507.7 1534.2 504.4 1537.5 503.8C1540.8 503.1 1545.0 504.4 1547.5 506.2C1550.0 508.1 1551.2 511.9 1552.5 515.0C1553.8 518.1 1554.2 521.2 1555.0 525.0C1555.8 528.8 1555.8 535.0 1557.5 537.5C1559.2 540.0 1563.3 537.9 1565.0 540.0C1566.7 542.1 1567.3 546.7 1567.5 550.0C1567.7 553.3 1566.9 557.5 1566.2 560.0C1565.6 562.5 1565.6 563.5 1563.8 565.0C1561.9 566.5 1559.0 568.1 1555.0 568.8C1551.0 569.4 1544.6 569.4 1540.0 568.8C1535.4 568.1 1530.3 566.5 1527.5 565.0C1524.7 563.5 1524.2 562.5 1523.0 560.0C1521.8 557.5 1521.8 552.1 1520.0 550.0C1518.2 547.9 1515.0 549.6 1512.5 547.5C1510.0 545.4 1507.5 540.8 1505.0 537.5C1502.5 534.2 1500.0 529.2 1497.5 527.5C1495.0 525.8 1492.9 526.7 1490.0 527.5C1487.1 528.3 1484.2 531.2 1480.0 532.5C1475.8 533.8 1470.0 533.8 1465.0 535.0C1460.0 536.2 1454.6 538.3 1450.0 540.0C1445.4 541.7 1442.1 543.8 1437.5 545.0C1432.9 546.2 1426.7 547.5 1422.5 547.5C1418.3 547.5 1415.4 544.6 1412.5 545.0C1409.6 545.4 1407.1 547.5 1405.0 550.0C1402.9 552.5 1404.6 552.9 1400.0 560.0C1395.4 567.1 1382.9 586.2 1377.5 592.5C1372.1 598.8 1370.8 595.8 1367.5 597.5C1364.2 599.2 1360.4 600.4 1357.5 602.5C1354.6 604.6 1350.8 606.7 1350.0 610.0C1349.2 613.3 1352.5 618.3 1352.5 622.5C1352.5 626.7 1350.0 630.8 1350.0 635.0C1350.0 639.2 1352.5 643.3 1352.5 647.5C1352.5 651.7 1352.1 656.7 1350.0 660.0C1347.9 663.3 1342.2 666.2 1340.0 667.5C1337.8 668.8 1338.2 668.3 1336.9 668.0C1335.6 667.7 1333.8 667.1 1332.3 665.8C1330.8 664.5 1328.8 660.2 1327.7 660.0C1326.6 659.8 1326.6 663.8 1325.4 664.6C1324.2 665.4 1322.5 665.8 1320.8 664.6C1319.1 663.5 1316.9 659.4 1315.0 657.7C1313.1 656.0 1311.7 655.4 1309.2 654.2C1306.7 653.1 1302.3 651.8 1300.0 650.8C1297.7 649.8 1295.8 649.7 1295.4 648.5C1295.0 647.3 1297.9 645.5 1297.7 643.8C1297.5 642.0 1295.7 638.4 1294.2 638.0C1292.7 637.6 1290.8 640.3 1288.5 641.5C1286.2 642.7 1282.7 645.6 1280.4 645.0C1278.1 644.4 1276.9 640.9 1274.6 638.0C1272.3 635.1 1269.2 629.6 1266.5 627.7C1263.8 625.8 1259.1 625.4 1258.5 626.5C1257.9 627.6 1261.1 632.3 1263.0 634.6C1264.9 636.9 1268.1 638.7 1270.0 640.4C1271.9 642.1 1273.1 643.3 1274.6 645.0C1276.1 646.7 1277.3 649.6 1279.2 650.8C1281.1 652.0 1284.1 650.9 1286.0 652.0C1287.9 653.1 1289.4 655.6 1290.8 657.7C1292.2 659.8 1292.7 662.5 1294.2 664.6C1295.7 666.7 1299.0 668.5 1300.0 670.4C1301.0 672.3 1300.8 674.3 1300.0 676.0C1299.2 677.7 1296.7 679.2 1295.4 680.8C1294.1 682.4 1292.7 683.4 1292.0 685.4C1291.3 687.4 1290.2 690.3 1291.0 693.0C1291.8 695.7 1295.0 698.7 1296.5 701.5C1298.0 704.3 1299.0 706.5 1300.0 710.0C1301.0 713.5 1301.7 718.3 1302.5 722.5C1303.3 726.7 1305.0 731.2 1305.0 735.0C1305.0 738.8 1303.8 741.7 1302.5 745.0C1301.2 748.3 1299.6 751.7 1297.5 755.0C1295.4 758.3 1292.5 761.7 1290.0 765.0C1287.5 768.3 1285.8 773.3 1282.5 775.0C1279.2 776.7 1273.3 776.2 1270.0 775.0C1266.7 773.8 1265.0 770.0 1262.5 767.5C1260.0 765.0 1257.5 760.0 1255.0 760.0C1252.5 760.0 1250.0 765.0 1247.5 767.5C1245.0 770.0 1242.1 772.1 1240.0 775.0C1237.9 777.9 1237.1 781.7 1235.0 785.0C1232.9 788.3 1230.4 791.7 1227.5 795.0C1224.6 798.3 1221.2 802.1 1217.5 805.0C1213.8 807.9 1209.2 811.7 1205.0 812.5C1200.8 813.3 1196.2 811.7 1192.5 810.0C1188.8 808.3 1184.6 805.4 1182.5 802.5C1180.4 799.6 1181.2 796.2 1180.0 792.5C1178.8 788.8 1175.8 784.2 1175.0 780.0C1174.2 775.8 1176.2 771.2 1175.0 767.5C1173.8 763.8 1168.3 757.9 1167.5 757.5C1166.7 757.1 1170.0 761.7 1170.0 765.0C1170.0 768.3 1169.2 774.2 1167.5 777.5C1165.8 780.8 1162.9 782.9 1160.0 785.0C1157.1 787.1 1152.9 788.8 1150.0 790.0C1147.1 791.2 1143.5 790.8 1142.5 792.5C1141.5 794.2 1144.4 797.1 1143.8 800.0C1143.1 802.9 1139.2 807.1 1138.8 810.0C1138.3 812.9 1140.6 814.6 1141.2 817.5C1141.9 820.4 1143.5 824.6 1142.5 827.5C1141.5 830.4 1137.3 832.9 1135.0 835.0C1132.7 837.1 1129.4 837.5 1128.8 840.0C1128.1 842.5 1131.2 846.7 1131.2 850.0C1131.2 853.3 1129.6 856.7 1128.8 860.0C1127.9 863.3 1126.9 866.7 1126.2 870.0C1125.6 873.3 1125.6 876.7 1125.0 880.0C1124.4 883.3 1124.2 887.7 1122.5 890.0C1120.8 892.3 1117.5 893.3 1115.0 893.8C1112.5 894.2 1110.0 894.0 1107.5 892.5C1105.0 891.0 1101.5 887.9 1100.0 885.0C1098.5 882.1 1099.4 878.8 1098.8 875.0C1098.1 871.2 1097.5 866.2 1096.2 862.5C1095.0 858.8 1092.5 855.8 1091.2 852.5C1090.0 849.2 1089.0 846.2 1088.8 842.5C1088.5 838.8 1089.2 833.8 1090.0 830.0C1090.8 826.2 1092.9 823.3 1093.8 820.0C1094.6 816.7 1094.0 813.3 1095.0 810.0C1096.0 806.7 1097.9 802.1 1100.0 800.0C1102.1 797.9 1105.4 800.0 1107.5 797.5C1109.6 795.0 1110.4 788.3 1112.5 785.0C1114.6 781.7 1118.3 780.8 1120.0 777.5C1121.7 774.2 1122.5 769.2 1122.5 765.0C1122.5 760.8 1121.7 756.7 1120.0 752.5C1118.3 748.3 1115.4 744.2 1112.5 740.0C1109.6 735.8 1105.8 730.8 1102.5 727.5C1099.2 724.2 1096.2 721.2 1092.5 720.0C1088.8 718.8 1083.8 718.8 1080.0 720.0C1076.2 721.2 1073.3 724.2 1070.0 727.5C1066.7 730.8 1063.8 736.9 1060.0 740.0C1056.2 743.1 1050.8 746.7 1047.5 746.2C1044.2 745.8 1040.6 740.6 1040.0 737.5C1039.4 734.4 1043.3 731.2 1043.8 727.5C1044.2 723.8 1043.5 719.2 1042.5 715.0C1041.5 710.8 1040.4 704.6 1037.5 702.5C1034.6 700.4 1029.6 701.7 1025.0 702.5C1020.4 703.3 1015.0 706.2 1010.0 707.5C1005.0 708.8 1000.0 709.2 995.0 710.0C990.0 710.8 985.0 712.5 980.0 712.5C975.0 712.5 970.0 710.8 965.0 710.0C960.0 709.2 954.2 708.8 950.0 707.5C945.8 706.2 942.7 705.0 940.0 702.5C937.3 700.0 934.2 695.8 933.8 692.5C933.3 689.2 934.8 685.0 937.5 682.5C940.2 680.0 945.4 677.9 950.0 677.5C954.6 677.1 960.0 680.4 965.0 680.0C970.0 679.6 975.4 676.7 980.0 675.0C984.6 673.3 988.3 671.2 992.5 670.0C996.7 668.8 1001.2 667.9 1005.0 667.5C1008.8 667.1 1012.9 668.3 1015.0 667.5C1017.1 666.7 1018.3 664.6 1017.5 662.5C1016.7 660.4 1011.2 657.9 1010.0 655.0C1008.8 652.1 1008.8 647.9 1010.0 645.0C1011.2 642.1 1014.2 638.3 1017.5 637.5C1020.8 636.7 1026.2 638.8 1030.0 640.0C1033.8 641.2 1036.7 644.6 1040.0 645.0C1043.3 645.4 1047.5 643.5 1050.0 642.5C1052.5 641.5 1055.0 640.2 1055.0 638.8C1055.0 637.3 1052.5 634.4 1050.0 633.8C1047.5 633.1 1043.3 635.2 1040.0 635.0C1036.7 634.8 1033.3 633.8 1030.0 632.5C1026.7 631.2 1022.1 630.0 1020.0 627.5C1017.9 625.0 1019.2 620.8 1017.5 617.5C1015.8 614.2 1012.3 611.2 1010.0 607.5C1007.7 603.8 1005.4 599.2 1003.8 595.0C1002.1 590.8 999.8 585.8 1000.0 582.5C1000.2 579.2 1001.7 575.8 1005.0 575.0C1008.3 574.2 1015.0 577.9 1020.0 577.5C1025.0 577.1 1030.0 572.9 1035.0 572.5C1040.0 572.1 1045.8 575.4 1050.0 575.0C1054.2 574.6 1057.9 572.5 1060.0 570.0C1062.1 567.5 1063.8 562.1 1062.5 560.0C1061.2 557.9 1055.6 560.8 1052.5 557.5Z"/><path d="M1012.1 457.0C1012.0 458.8 1013.8 460.6 1013.6 462.2C1013.4 463.9 1012.0 465.7 1010.7 466.9C1009.3 468.1 1007.3 468.5 1005.5 469.3C1003.7 470.0 1001.8 471.6 1000.0 471.5C998.2 471.3 996.7 469.1 994.9 468.3C993.2 467.6 990.9 467.8 989.5 466.7C988.1 465.7 987.3 463.7 986.7 462.1C986.1 460.5 985.6 458.7 985.7 457.0C985.8 455.3 986.7 453.8 987.2 452.1C987.8 450.4 988.0 448.3 989.1 446.9C990.2 445.4 992.1 443.8 993.9 443.4C995.7 442.9 998.1 443.9 1000.0 444.1C1001.9 444.3 1004.2 443.6 1005.6 444.4C1007.1 445.2 1007.2 447.8 1008.6 449.0C1009.9 450.2 1013.1 450.4 1013.7 451.7C1014.3 453.1 1012.1 455.2 1012.1 457.0Z"/><path d="M1107.3 416.0C1107.5 417.4 1107.3 419.5 1106.6 420.7C1105.9 421.9 1104.3 423.0 1103.0 423.3C1101.8 423.6 1100.4 422.8 1099.3 422.2C1098.1 421.7 1097.1 421.0 1096.3 420.0C1095.6 418.9 1094.6 417.2 1094.7 416.0C1094.8 414.8 1096.1 413.6 1096.8 412.5C1097.6 411.4 1098.2 409.8 1099.2 409.4C1100.1 409.0 1101.6 409.5 1102.7 410.0C1103.7 410.5 1104.5 411.4 1105.3 412.4C1106.1 413.4 1107.1 414.6 1107.3 416.0Z"/><path d="M1090.7 330.0C1090.8 330.5 1090.7 331.2 1090.2 331.5C1089.8 331.8 1088.7 331.9 1088.0 331.9C1087.3 331.8 1086.5 331.7 1086.0 331.3C1085.5 331.0 1085.1 330.5 1085.1 330.0C1085.0 329.5 1085.2 328.8 1085.7 328.5C1086.2 328.2 1087.3 328.1 1088.0 328.2C1088.7 328.2 1089.6 328.3 1090.1 328.6C1090.6 328.9 1090.7 329.5 1090.7 330.0Z"/><path d="M1100.0 975.0C1098.5 972.1 1101.7 966.2 1103.8 962.5C1105.8 958.8 1109.8 956.2 1112.5 952.5C1115.2 948.8 1117.1 942.9 1120.0 940.0C1122.9 937.1 1127.1 935.4 1130.0 935.0C1132.9 934.6 1136.5 935.4 1137.5 937.5C1138.5 939.6 1134.8 945.4 1136.2 947.5C1137.7 949.6 1144.0 947.9 1146.2 950.0C1148.5 952.1 1149.8 957.1 1150.0 960.0C1150.2 962.9 1149.6 965.0 1147.5 967.5C1145.4 970.0 1141.2 972.9 1137.5 975.0C1133.8 977.1 1129.2 979.2 1125.0 980.0C1120.8 980.8 1116.7 980.8 1112.5 980.0C1108.3 979.2 1101.5 977.9 1100.0 975.0Z"/></clipPath>
<clipPath id="cR2"><path d="M1072.5 560.0C1070.4 557.5 1064.6 550.8 1062.5 545.0C1060.4 539.2 1059.6 530.8 1060.0 525.0C1060.4 519.2 1063.3 514.6 1065.0 510.0C1066.7 505.4 1068.3 500.8 1070.0 497.5C1071.7 494.2 1072.5 492.1 1075.0 490.0C1077.5 487.9 1080.8 487.5 1085.0 485.0C1089.2 482.5 1095.4 478.8 1100.0 475.0C1104.6 471.2 1109.6 465.8 1112.5 462.5C1115.4 459.2 1115.0 456.9 1117.5 455.0C1120.0 453.1 1124.2 451.2 1127.5 451.2C1130.8 451.2 1134.8 452.7 1137.5 455.0C1140.2 457.3 1141.7 462.1 1143.8 465.0C1145.8 467.9 1146.5 470.8 1150.0 472.5C1153.5 474.2 1160.8 474.6 1165.0 475.0C1169.2 475.4 1171.2 474.2 1175.0 475.0C1178.8 475.8 1183.8 478.1 1187.5 480.0C1191.2 481.9 1194.2 484.2 1197.5 486.2C1200.8 488.3 1203.3 491.0 1207.5 492.5C1211.7 494.0 1217.9 495.4 1222.5 495.0C1227.1 494.6 1231.2 489.6 1235.0 490.0C1238.8 490.4 1241.2 495.8 1245.0 497.5C1248.8 499.2 1253.8 500.4 1257.5 500.0C1261.2 499.6 1264.2 496.7 1267.5 495.0C1270.8 493.3 1273.8 490.0 1277.5 490.0C1281.2 490.0 1286.2 493.3 1290.0 495.0C1293.8 496.7 1297.9 497.1 1300.0 500.0C1302.1 502.9 1300.8 511.2 1302.5 512.5C1304.2 513.8 1308.4 510.1 1310.0 507.5C1311.6 504.9 1310.2 499.9 1312.0 497.0C1313.8 494.1 1317.8 490.8 1320.6 490.0C1323.4 489.2 1327.0 489.4 1329.0 492.0C1331.0 494.6 1331.8 501.5 1332.7 505.8C1333.6 510.1 1332.8 514.5 1334.5 518.0C1336.2 521.5 1339.2 524.6 1343.0 526.6C1346.8 528.6 1352.4 528.9 1357.0 530.0C1361.6 531.1 1366.8 532.3 1370.8 533.5C1374.8 534.7 1378.1 535.2 1381.0 537.0C1383.9 538.8 1387.4 541.2 1388.0 544.0C1388.6 546.8 1386.4 551.2 1384.7 554.0C1383.0 556.8 1380.0 558.3 1377.7 561.0C1375.4 563.7 1373.1 567.1 1370.8 570.0C1368.5 572.9 1366.9 575.7 1364.0 578.5C1361.1 581.3 1356.7 584.1 1353.5 587.0C1350.3 589.9 1346.8 592.8 1344.8 596.0C1342.8 599.2 1342.0 602.0 1341.4 606.0C1340.8 610.0 1340.8 616.0 1341.4 620.0C1342.0 624.0 1344.4 626.2 1345.0 630.0C1345.6 633.8 1345.8 638.8 1345.0 642.5C1344.2 646.2 1342.5 650.0 1340.0 652.5C1337.5 655.0 1333.8 657.1 1330.0 657.5C1326.2 657.9 1321.7 655.8 1317.5 655.0C1313.3 654.2 1308.8 654.2 1305.0 652.5C1301.2 650.8 1298.3 647.5 1295.0 645.0C1291.7 642.5 1288.3 639.6 1285.0 637.5C1281.7 635.4 1278.3 634.6 1275.0 632.5C1271.7 630.4 1267.9 625.8 1265.0 625.0C1262.1 624.2 1257.9 625.4 1257.5 627.5C1257.1 629.6 1260.4 634.2 1262.5 637.5C1264.6 640.8 1267.5 644.2 1270.0 647.5C1272.5 650.8 1275.0 654.6 1277.5 657.5C1280.0 660.4 1283.3 662.1 1285.0 665.0C1286.7 667.9 1288.3 671.7 1287.5 675.0C1286.7 678.3 1282.9 682.1 1280.0 685.0C1277.1 687.9 1270.4 690.0 1270.0 692.5C1269.6 695.0 1275.0 697.1 1277.5 700.0C1280.0 702.9 1282.9 706.7 1285.0 710.0C1287.1 713.3 1288.8 716.2 1290.0 720.0C1291.2 723.8 1292.5 728.3 1292.5 732.5C1292.5 736.7 1291.2 741.2 1290.0 745.0C1288.8 748.8 1287.5 752.5 1285.0 755.0C1282.5 757.5 1278.8 759.6 1275.0 760.0C1271.2 760.4 1266.7 758.8 1262.5 757.5C1258.3 756.2 1253.8 752.1 1250.0 752.5C1246.2 752.9 1243.3 757.1 1240.0 760.0C1236.7 762.9 1233.3 766.7 1230.0 770.0C1226.7 773.3 1223.3 777.1 1220.0 780.0C1216.7 782.9 1213.3 785.4 1210.0 787.5C1206.7 789.6 1203.3 792.9 1200.0 792.5C1196.7 792.1 1192.9 787.9 1190.0 785.0C1187.1 782.1 1185.0 778.3 1182.5 775.0C1180.0 771.7 1177.5 767.9 1175.0 765.0C1172.5 762.1 1170.0 759.2 1167.5 757.5C1165.0 755.8 1162.5 755.0 1160.0 755.0C1157.5 755.0 1154.6 758.3 1152.5 757.5C1150.4 756.7 1149.6 752.9 1147.5 750.0C1145.4 747.1 1142.1 743.3 1140.0 740.0C1137.9 736.7 1137.5 733.3 1135.0 730.0C1132.5 726.7 1127.9 723.3 1125.0 720.0C1122.1 716.7 1120.0 713.3 1117.5 710.0C1115.0 706.7 1112.9 703.3 1110.0 700.0C1107.1 696.7 1103.3 692.5 1100.0 690.0C1096.7 687.5 1092.5 687.1 1090.0 685.0C1087.5 682.9 1085.0 680.8 1085.0 677.5C1085.0 674.2 1090.4 667.9 1090.0 665.0C1089.6 662.1 1085.0 662.1 1082.5 660.0C1080.0 657.9 1077.1 655.4 1075.0 652.5C1072.9 649.6 1070.4 646.2 1070.0 642.5C1069.6 638.8 1070.8 634.2 1072.5 630.0C1074.2 625.8 1077.5 621.7 1080.0 617.5C1082.5 613.3 1085.0 609.6 1087.5 605.0C1090.0 600.4 1092.9 595.0 1095.0 590.0C1097.1 585.0 1100.8 578.8 1100.0 575.0C1099.2 571.2 1094.2 570.0 1090.0 567.5C1085.8 565.0 1077.9 561.2 1075.0 560.0C1072.1 558.8 1074.6 562.5 1072.5 560.0Z"/></clipPath>
<clipPath id="cR"><path d="M1072.5 560.0C1070.4 557.5 1064.6 550.8 1062.5 545.0C1060.4 539.2 1059.6 530.8 1060.0 525.0C1060.4 519.2 1063.3 514.6 1065.0 510.0C1066.7 505.4 1068.3 500.8 1070.0 497.5C1071.7 494.2 1072.5 492.1 1075.0 490.0C1077.5 487.9 1080.8 487.5 1085.0 485.0C1089.2 482.5 1095.4 478.8 1100.0 475.0C1104.6 471.2 1109.6 465.8 1112.5 462.5C1115.4 459.2 1115.0 456.9 1117.5 455.0C1120.0 453.1 1124.2 451.2 1127.5 451.2C1130.8 451.2 1134.8 452.7 1137.5 455.0C1140.2 457.3 1141.7 462.1 1143.8 465.0C1145.8 467.9 1146.5 470.8 1150.0 472.5C1153.5 474.2 1160.8 474.6 1165.0 475.0C1169.2 475.4 1171.2 474.2 1175.0 475.0C1178.8 475.8 1183.8 478.1 1187.5 480.0C1191.2 481.9 1194.2 484.2 1197.5 486.2C1200.8 488.3 1203.3 491.0 1207.5 492.5C1211.7 494.0 1217.9 495.4 1222.5 495.0C1227.1 494.6 1231.2 489.6 1235.0 490.0C1238.8 490.4 1241.2 495.8 1245.0 497.5C1248.8 499.2 1253.8 500.4 1257.5 500.0C1261.2 499.6 1264.2 496.7 1267.5 495.0C1270.8 493.3 1273.8 490.0 1277.5 490.0C1281.2 490.0 1286.2 493.3 1290.0 495.0C1293.8 496.7 1297.9 497.1 1300.0 500.0C1302.1 502.9 1300.8 511.2 1302.5 512.5C1304.2 513.8 1308.4 510.1 1310.0 507.5C1311.6 504.9 1310.2 499.9 1312.0 497.0C1313.8 494.1 1317.8 490.8 1320.6 490.0C1323.4 489.2 1327.0 489.4 1329.0 492.0C1331.0 494.6 1331.8 501.5 1332.7 505.8C1333.6 510.1 1332.8 514.5 1334.5 518.0C1336.2 521.5 1339.2 524.6 1343.0 526.6C1346.8 528.6 1352.4 528.9 1357.0 530.0C1361.6 531.1 1366.8 532.3 1370.8 533.5C1374.8 534.7 1378.1 535.2 1381.0 537.0C1383.9 538.8 1387.4 541.2 1388.0 544.0C1388.6 546.8 1386.4 551.2 1384.7 554.0C1383.0 556.8 1380.0 558.3 1377.7 561.0C1375.4 563.7 1373.1 567.1 1370.8 570.0C1368.5 572.9 1366.9 575.7 1364.0 578.5C1361.1 581.3 1356.7 584.1 1353.5 587.0C1350.3 589.9 1346.8 592.8 1344.8 596.0C1342.8 599.2 1342.0 602.0 1341.4 606.0C1340.8 610.0 1340.8 616.0 1341.4 620.0C1342.0 624.0 1344.4 626.2 1345.0 630.0C1345.6 633.8 1345.8 638.8 1345.0 642.5C1344.2 646.2 1342.5 650.0 1340.0 652.5C1337.5 655.0 1333.8 657.1 1330.0 657.5C1326.2 657.9 1321.7 655.8 1317.5 655.0C1313.3 654.2 1308.8 654.2 1305.0 652.5C1301.2 650.8 1298.3 647.5 1295.0 645.0C1291.7 642.5 1288.3 639.6 1285.0 637.5C1281.7 635.4 1278.3 634.6 1275.0 632.5C1271.7 630.4 1267.9 625.8 1265.0 625.0C1262.1 624.2 1257.9 625.4 1257.5 627.5C1257.1 629.6 1260.4 634.2 1262.5 637.5C1264.6 640.8 1267.5 644.2 1270.0 647.5C1272.5 650.8 1275.0 654.6 1277.5 657.5C1280.0 660.4 1283.3 662.1 1285.0 665.0C1286.7 667.9 1288.3 671.7 1287.5 675.0C1286.7 678.3 1282.9 682.1 1280.0 685.0C1277.1 687.9 1270.4 690.0 1270.0 692.5C1269.6 695.0 1275.0 697.1 1277.5 700.0C1280.0 702.9 1282.9 706.7 1285.0 710.0C1287.1 713.3 1288.8 716.2 1290.0 720.0C1291.2 723.8 1292.5 728.3 1292.5 732.5C1292.5 736.7 1291.2 741.2 1290.0 745.0C1288.8 748.8 1287.5 752.5 1285.0 755.0C1282.5 757.5 1278.8 759.6 1275.0 760.0C1271.2 760.4 1266.7 758.8 1262.5 757.5C1258.3 756.2 1253.8 752.1 1250.0 752.5C1246.2 752.9 1243.3 757.1 1240.0 760.0C1236.7 762.9 1233.3 766.7 1230.0 770.0C1226.7 773.3 1223.3 777.1 1220.0 780.0C1216.7 782.9 1213.3 785.4 1210.0 787.5C1206.7 789.6 1203.3 792.9 1200.0 792.5C1196.7 792.1 1192.9 787.9 1190.0 785.0C1187.1 782.1 1185.0 778.3 1182.5 775.0C1180.0 771.7 1177.5 767.9 1175.0 765.0C1172.5 762.1 1170.0 759.2 1167.5 757.5C1165.0 755.8 1162.5 755.0 1160.0 755.0C1157.5 755.0 1154.6 758.3 1152.5 757.5C1150.4 756.7 1149.6 752.9 1147.5 750.0C1145.4 747.1 1142.1 743.3 1140.0 740.0C1137.9 736.7 1137.5 733.3 1135.0 730.0C1132.5 726.7 1127.9 723.3 1125.0 720.0C1122.1 716.7 1120.0 713.3 1117.5 710.0C1115.0 706.7 1112.9 703.3 1110.0 700.0C1107.1 696.7 1103.3 692.5 1100.0 690.0C1096.7 687.5 1092.5 687.1 1090.0 685.0C1087.5 682.9 1085.0 680.8 1085.0 677.5C1085.0 674.2 1090.4 667.9 1090.0 665.0C1089.6 662.1 1085.0 662.1 1082.5 660.0C1080.0 657.9 1077.1 655.4 1075.0 652.5C1072.9 649.6 1070.4 646.2 1070.0 642.5C1069.6 638.8 1070.8 634.2 1072.5 630.0C1074.2 625.8 1077.5 621.7 1080.0 617.5C1082.5 613.3 1085.0 609.6 1087.5 605.0C1090.0 600.4 1092.9 595.0 1095.0 590.0C1097.1 585.0 1100.8 578.8 1100.0 575.0C1099.2 571.2 1094.2 570.0 1090.0 567.5C1085.8 565.0 1077.9 561.2 1075.0 560.0C1072.1 558.8 1074.6 562.5 1072.5 560.0Z"/><path d="M1050.5 610.0C1050.3 611.6 1049.7 612.9 1049.1 614.4C1048.5 615.9 1048.3 618.0 1047.1 618.9C1046.0 619.8 1043.8 619.3 1042.2 619.6C1040.6 619.9 1039.0 621.0 1037.5 620.8C1036.1 620.6 1034.4 619.4 1033.4 618.3C1032.3 617.2 1031.9 615.7 1031.1 614.3C1030.4 612.9 1029.0 611.4 1029.0 610.0C1029.0 608.6 1030.5 607.2 1031.2 605.8C1031.9 604.3 1032.1 602.4 1033.3 601.5C1034.4 600.6 1036.3 600.6 1037.8 600.4C1039.3 600.2 1040.7 600.1 1042.2 600.3C1043.7 600.5 1045.3 600.8 1046.7 601.6C1048.1 602.3 1050.1 603.4 1050.7 604.9C1051.3 606.3 1050.8 608.4 1050.5 610.0Z"/><path d="M1022.5 657.5C1024.6 653.5 1030.4 652.1 1035.0 651.2C1039.6 650.4 1045.8 651.0 1050.0 652.5C1054.2 654.0 1055.8 657.9 1060.0 660.0C1064.2 662.1 1071.7 662.1 1075.0 665.0C1078.3 667.9 1079.2 672.9 1080.0 677.5C1080.8 682.1 1081.2 688.8 1080.0 692.5C1078.8 696.2 1075.8 699.6 1072.5 700.0C1069.2 700.4 1063.8 697.5 1060.0 695.0C1056.2 692.5 1054.2 686.7 1050.0 685.0C1045.8 683.3 1039.6 686.7 1035.0 685.0C1030.4 683.3 1024.6 679.6 1022.5 675.0C1020.4 670.4 1020.4 661.5 1022.5 657.5Z"/><path d="M1140.0 762.0C1142.0 760.0 1146.7 757.4 1149.0 757.7C1151.3 758.0 1153.5 761.2 1153.8 763.8C1154.1 766.3 1152.1 770.2 1150.8 773.0C1149.5 775.8 1148.0 779.8 1146.0 780.8C1144.0 781.8 1140.0 780.8 1138.5 779.0C1137.0 777.2 1136.8 772.8 1137.0 770.0C1137.2 767.2 1138.0 764.0 1140.0 762.0Z"/><path d="M1464.0 513.0C1463.8 514.5 1463.7 515.7 1463.3 517.1C1462.8 518.4 1462.2 519.9 1461.1 521.1C1460.0 522.2 1458.3 523.5 1456.7 523.8C1455.1 524.1 1453.1 523.5 1451.5 522.9C1449.9 522.4 1448.7 521.5 1447.3 520.6C1445.9 519.8 1443.5 519.1 1443.0 517.8C1442.4 516.6 1444.2 514.6 1444.2 513.0C1444.2 511.4 1442.7 509.5 1443.2 508.3C1443.8 507.1 1446.1 506.3 1447.5 505.6C1448.9 504.9 1450.3 504.3 1451.8 504.1C1453.2 503.8 1454.8 503.9 1456.2 504.1C1457.7 504.4 1459.1 504.8 1460.5 505.5C1461.9 506.2 1464.1 507.1 1464.7 508.3C1465.2 509.6 1464.2 511.5 1464.0 513.0Z"/><path d="M1547.4 539.0C1547.5 540.9 1547.7 543.0 1547.3 544.8C1547.0 546.5 1546.1 548.4 1545.2 549.5C1544.2 550.6 1542.9 550.9 1541.7 551.3C1540.6 551.7 1539.2 552.4 1538.2 551.8C1537.2 551.3 1536.3 549.4 1535.5 548.1C1534.8 546.8 1534.0 545.6 1533.6 544.0C1533.1 542.5 1532.7 540.8 1532.6 539.0C1532.4 537.2 1532.1 534.8 1532.5 533.1C1532.9 531.5 1534.1 530.1 1535.1 529.0C1536.1 528.0 1537.2 527.4 1538.3 526.9C1539.4 526.4 1540.7 525.7 1541.8 526.1C1542.9 526.4 1544.1 527.7 1544.9 529.0C1545.8 530.2 1546.5 532.0 1546.9 533.6C1547.3 535.3 1547.3 537.1 1547.4 539.0Z"/><path d="M1389.4 544.0C1389.5 545.3 1389.1 547.0 1388.7 548.1C1388.2 549.2 1387.2 549.8 1386.5 550.6C1385.8 551.4 1385.2 552.6 1384.4 552.9C1383.5 553.3 1382.6 553.0 1381.7 552.8C1380.8 552.6 1379.6 552.5 1378.9 551.7C1378.2 550.9 1377.6 549.4 1377.3 548.1C1377.0 546.8 1377.4 545.4 1377.3 544.0C1377.3 542.6 1376.6 540.7 1377.0 539.6C1377.4 538.6 1378.8 538.3 1379.6 537.6C1380.4 536.9 1380.9 535.9 1381.7 535.4C1382.5 534.9 1383.6 534.3 1384.4 534.7C1385.2 535.0 1385.8 536.6 1386.4 537.6C1387.1 538.5 1387.9 539.0 1388.4 540.1C1388.9 541.2 1389.4 542.7 1389.4 544.0Z"/><path d="M1107.5 815.0C1111.5 812.1 1121.2 811.7 1125.0 812.5C1128.8 813.3 1129.4 816.7 1130.0 820.0C1130.6 823.3 1130.4 828.3 1128.8 832.5C1127.1 836.7 1122.7 842.5 1120.0 845.0C1117.3 847.5 1115.0 848.3 1112.5 847.5C1110.0 846.7 1106.9 842.9 1105.0 840.0C1103.1 837.1 1100.8 834.2 1101.2 830.0C1101.7 825.8 1103.5 817.9 1107.5 815.0Z"/></clipPath>
<filter id="fG" x="0" y="0" width="100%" height="100%" color-interpolation-filters="sRGB"><feTurbulence type="fractalNoise" baseFrequency="0.33" numOctaves="1" seed="3"/><feColorMatrix type="matrix" values="1 0 0 0 0 0 1 0 0 0 0 0 1 0 0 0 0 0 0 1" result="a"/><feTurbulence type="fractalNoise" baseFrequency="0.04" numOctaves="2" seed="8"/><feColorMatrix type="matrix" values="1 0 0 0 0 0 1 0 0 0 0 0 1 0 0 0 0 0 0 1" result="b"/><feComposite in="a" in2="b" operator="arithmetic" k1="0" k2="0.5" k3="0.45" k4="0" result="c"/><feColorMatrix in="c" type="matrix" values="0 0 0 0 0 0 0 0 0 0 0 0 0 0 0 60 0 0 0 -33.72" result="m"/><feFlood flood-color="#0bcf0b"/><feComposite in2="m" operator="in"/></filter>
<filter id="fG3" x="0" y="0" width="100%" height="100%" color-interpolation-filters="sRGB"><feTurbulence type="fractalNoise" baseFrequency="0.33" numOctaves="1" seed="41"/><feColorMatrix type="matrix" values="1 0 0 0 0 0 1 0 0 0 0 0 1 0 0 0 0 0 0 1" result="a"/><feTurbulence type="fractalNoise" baseFrequency="0.05" numOctaves="2" seed="46"/><feColorMatrix type="matrix" values="1 0 0 0 0 0 1 0 0 0 0 0 1 0 0 0 0 0 0 1" result="b"/><feComposite in="a" in2="b" operator="arithmetic" k1="0" k2="0.5" k3="0.4" k4="0" result="c"/><feColorMatrix in="c" type="matrix" values="0 0 0 0 0 0 0 0 0 0 0 0 0 0 0 60 0 0 0 -33.12" result="m"/><feFlood flood-color="#0bcf0b"/><feComposite in2="m" operator="in"/></filter>
<mask id="mC" maskUnits="userSpaceOnUse" x="900" y="300" width="700" height="700"><rect x="900" y="300" width="700" height="700" fill="#fff"/><path d="M1118.0 472.0C1130.8 460.3 1154.7 452.7 1175.0 452.0C1195.3 451.3 1222.8 456.7 1240.0 468.0C1257.2 479.3 1270.0 501.3 1278.0 520.0C1286.0 538.7 1290.7 559.7 1288.0 580.0C1285.3 600.3 1274.2 624.7 1262.0 642.0C1249.8 659.3 1232.0 675.3 1215.0 684.0C1198.0 692.7 1176.2 698.8 1160.0 694.0C1143.8 689.2 1129.3 672.0 1118.0 655.0C1106.7 638.0 1095.3 614.2 1092.0 592.0C1088.7 569.8 1093.7 542.0 1098.0 522.0C1102.3 502.0 1105.2 483.7 1118.0 472.0Z" fill="#000" shape-rendering="crispEdges"/></mask>
<filter id="fO" x="0" y="0" width="100%" height="100%" color-interpolation-filters="sRGB"><feTurbulence type="fractalNoise" baseFrequency="0.3" numOctaves="1" seed="11"/><feColorMatrix type="matrix" values="1 0 0 0 0 0 1 0 0 0 0 0 1 0 0 0 0 0 0 1" result="a"/><feTurbulence type="fractalNoise" baseFrequency="0.05" numOctaves="2" seed="16"/><feColorMatrix type="matrix" values="1 0 0 0 0 0 1 0 0 0 0 0 1 0 0 0 0 0 0 1" result="b"/><feComposite in="a" in2="b" operator="arithmetic" k1="0" k2="0.5" k3="0.2" k4="0" result="c"/><feColorMatrix in="c" type="matrix" values="0 0 0 0 0 0 0 0 0 0 0 0 0 0 0 60 0 0 0 -28.92" result="m"/><feFlood flood-color="#ff5a00"/><feComposite in2="m" operator="in"/></filter>
<filter id="fG2" x="0" y="0" width="100%" height="100%" color-interpolation-filters="sRGB"><feTurbulence type="fractalNoise" baseFrequency="0.3" numOctaves="1" seed="17"/><feColorMatrix type="matrix" values="1 0 0 0 0 0 1 0 0 0 0 0 1 0 0 0 0 0 0 1" result="a"/><feTurbulence type="fractalNoise" baseFrequency="0.05" numOctaves="2" seed="22"/><feColorMatrix type="matrix" values="1 0 0 0 0 0 1 0 0 0 0 0 1 0 0 0 0 0 0 1" result="b"/><feComposite in="a" in2="b" operator="arithmetic" k1="0" k2="0.5" k3="0.45" k4="0" result="c"/><feColorMatrix in="c" type="matrix" values="0 0 0 0 0 0 0 0 0 0 0 0 0 0 0 60 0 0 0 -33.30" result="m"/><feFlood flood-color="#0db80d"/><feComposite in2="m" operator="in"/></filter>
</defs>
<ellipse cx="1196" cy="615" rx="417" ry="368" fill="#c8c8c8" shape-rendering="crispEdges"/>
<path d="M1063 250h2v1h-2zM1055 248h2v1h-2zM982 259h1v1h-1zM985 264h1v1h-1zM998 273h1v1h-1zM1524 255h1v2h-1zM1525 309h2v1h-2zM1540 321h1v1h-1zM1532 329h2v1h-2zM1597 359h1v2h-1zM1473 269h2v1h-2zM861 337h1v1h-1zM799 384h1v1h-1zM789 434h2v2h-2zM780 437h2v1h-2zM778 442h1v1h-1zM798 764h2v2h-2zM795 765h1v1h-1zM790 765h1v1h-1zM795 767h2v1h-2zM785 774h1v1h-1zM780 778h1v2h-1zM837 941h2v1h-2zM836 943h1v2h-1zM836 940h1v2h-1zM969 972h2v1h-2zM1053 979h2v1h-2zM1059 980h1v2h-1zM1608 909h1v2h-1zM1607 914h2v1h-2zM1620 914h2v1h-2zM1608 912h1v1h-1zM1498 940h2v1h-2zM1549 262h1v2h-1zM1612 449h1v1h-1zM1616 458h2v2h-2zM1609 456h2v1h-2zM1614 540h1v1h-1zM1540 300h1v2h-1zM1575 302h2v1h-2zM810 285h1v1h-1zM800 294h1v2h-1zM806 289h1v1h-1zM807 285h2v1h-2zM1336 990h1v1h-1zM1333 989h1v1h-1zM1247 994h2v1h-2zM1615 640h1v1h-1zM1621 636h1v1h-1zM1616 638h1v1h-1zM1587 875h2v1h-2zM1583 881h1v1h-1zM1587 880h2v1h-2zM821 412h2v2h-2zM820 411h2v2h-2zM817 410h2v2h-2zM816 411h2v2h-2zM819 413h2v2h-2zM816 412h2v2h-2zM821 414h2v2h-2zM819 413h2v2h-2zM818 414h2v2h-2zM815 413h2v2h-2zM813 415h2v2h-2zM822 409h2v2h-2zM818 410h2v2h-2zM814 412h2v2h-2zM817 414h2v2h-2zM818 411h2v2h-2zM819 413h2v2h-2zM822 413h2v2h-2zM815 411h2v2h-2zM819 411h2v2h-2zM822 412h2v2h-2zM819 412h2v2h-2zM820 410h2v2h-2zM826 412h2v2h-2zM817 410h2v2h-2zM819 410h2v2h-2z" fill="#000"/><path d="M1061 248h1v1h-1zM1058 251h1v1h-1zM1004 270h1v1h-1zM1433 266h1v2h-1zM1436 265h1v2h-1zM1433 299h1v2h-1zM1429 301h1v2h-1zM1431 291h1v1h-1zM1526 254h1v1h-1zM1534 322h1v1h-1zM1529 316h1v2h-1zM1544 326h1v1h-1zM1550 324h1v1h-1zM1609 356h1v1h-1zM1610 360h2v2h-2zM1601 352h2v2h-2zM1464 270h2v1h-2zM858 326h1v2h-1zM797 390h1v2h-1zM817 411h1v1h-1zM786 769h1v1h-1zM794 774h1v1h-1zM803 766h1v1h-1zM776 779h2v2h-2zM803 825h2v2h-2zM791 826h1v2h-1zM939 963h2v1h-2zM942 968h1v1h-1zM971 968h2v1h-2zM971 966h1v1h-1zM1046 978h1v1h-1zM1054 982h1v2h-1zM1061 977h1v2h-1zM1052 976h1v1h-1zM1608 914h2v2h-2zM1606 906h1v2h-1zM1611 915h2v1h-2zM1547 262h1v2h-1zM1602 406h1v1h-1zM1607 460h2v1h-2zM1619 453h2v1h-2zM1611 537h1v1h-1zM1546 301h1v2h-1zM1585 442h1v1h-1zM1583 432h2v1h-2zM1584 441h1v1h-1zM1587 443h1v2h-1zM804 287h2v1h-2zM1336 990h1v2h-1zM1620 636h1v1h-1zM1616 647h2v1h-2zM1624 640h2v1h-2zM1618 641h1v1h-1z" fill="#ffd800"/><path d="M996 277h1v2h-1zM1607 359h2v1h-2zM805 349h2v1h-2zM814 354h1v2h-1zM782 437h1v1h-1zM781 441h1v1h-1zM784 433h2v2h-2zM781 438h1v2h-1zM779 443h1v1h-1zM769 780h2v2h-2zM778 785h1v2h-1zM799 828h1v1h-1zM793 824h1v1h-1zM1052 986h2v1h-2zM1497 941h1v1h-1zM1619 456h2v1h-2zM1577 437h1v2h-1zM1585 440h1v1h-1zM1579 442h2v1h-2zM1595 431h1v1h-1zM1334 990h2v2h-2zM1340 983h1v1h-1z" fill="#ff8c00"/><path d="M1059 243h2v2h-2zM984 264h2v1h-2zM1428 268h1v1h-1zM1429 273h1v1h-1zM1432 261h1v2h-1zM1527 325h1v2h-1zM1528 320h1v1h-1zM1545 324h2v1h-2zM1471 267h2v1h-2zM1463 271h2v1h-2zM1467 274h1v1h-1zM854 331h2v1h-2zM810 359h1v2h-1zM791 390h2v1h-2zM817 414h2v1h-2zM795 765h2v1h-2zM796 823h2v1h-2zM793 816h1v1h-1zM791 825h1v1h-1zM797 820h1v1h-1zM1054 976h2v2h-2zM1100 979h1v1h-1zM1607 912h2v1h-2zM1599 402h1v1h-1zM1596 403h1v1h-1zM1613 450h1v2h-1zM1616 455h1v1h-1zM1572 291h1v1h-1zM1244 994h2v1h-2zM1620 640h1v2h-1zM824 415h1v1h-1zM825 413h1v1h-1zM827 413h1v1h-1zM823 414h1v1h-1zM822 414h1v1h-1zM820 411h1v1h-1z" fill="#e00000"/>
<g clip-path="url(#cE)" shape-rendering="crispEdges">
<path d="M972 460h1v1h-1zM971 460h1v1h-1zM966 460h1v1h-1zM972 461h1v1h-1zM972 460h1v1h-1zM972 461h1v1h-1zM969 460h2v1h-2zM970 460h1v1h-1zM970 459h1v1h-1zM971 460h4v2h-4zM1470 535h1v2h-1zM1279 466h2v2h-2zM1278 464h1v1h-1zM1279 465h1v1h-1zM1279 464h2v2h-2zM1277 463h1v1h-1zM1281 462h2v2h-2zM1038 342h1v1h-1zM1036 351h1v1h-1zM1039 348h1v2h-1zM1038 348h3v2h-3zM1280 598h1v1h-1zM1281 600h1v2h-1zM1280 601h1v1h-1zM1279 601h1v1h-1zM1280 602h1v1h-1zM1278 602h1v1h-1zM1594 578h1v2h-1zM1463 497h1v1h-1zM1065 555h1v1h-1zM1443 545h1v2h-1zM1445 545h2v1h-2zM1446 544h1v1h-1zM1348 484h2v2h-2zM1351 486h2v1h-2zM1355 484h2v2h-2zM1352 485h2v1h-2zM1131 826h2v1h-2zM1137 823h1v2h-1zM1128 825h1v1h-1zM1128 826h1v1h-1zM1131 828h1v1h-1zM1134 827h1v2h-1zM1133 828h1v1h-1zM1130 826h1v1h-1zM1128 827h2v1h-2zM1133 828h1v1h-1zM1129 828h1v1h-1zM1133 826h1v2h-1zM1131 826h1v1h-1zM1129 827h2v1h-2zM1131 826h1v1h-1zM1131 826h1v2h-1zM1129 825h1v1h-1zM1131 828h1v1h-1zM1130 827h1v2h-1zM1132 828h1v1h-1zM1131 829h1v2h-1zM1257 332h1v1h-1zM1258 332h3v2h-3zM1067 644h1v2h-1zM1059 642h1v1h-1zM1065 644h1v1h-1zM1065 641h2v1h-2zM1015 538h1v1h-1zM1020 541h2v1h-2zM1015 539h1v1h-1zM1019 538h1v2h-1zM998 673h1v1h-1zM998 676h1v2h-1zM995 673h1v2h-1zM996 671h2v1h-2zM994 671h1v1h-1zM993 675h1v1h-1zM997 675h1v1h-1zM998 675h1v2h-1zM997 680h1v2h-1zM1404 534h2v1h-2zM1024 813h1v1h-1zM1541 575h2v1h-2zM1543 571h1v1h-1zM909 464h1v1h-1zM913 466h1v1h-1zM912 465h2v2h-2zM1412 537h1v2h-1zM1418 535h1v1h-1zM1448 559h1v1h-1zM1279 409h2v2h-2zM1273 412h1v1h-1zM1109 407h1v1h-1zM1111 406h1v1h-1zM1114 406h1v1h-1zM1111 406h1v1h-1zM1115 411h2v1h-2zM1107 402h1v2h-1zM1111 407h1v1h-1zM1113 412h1v1h-1zM1113 408h2v1h-2zM1044 546h1v1h-1zM1040 541h1v1h-1zM1045 545h1v1h-1zM1092 325h1v1h-1zM1096 330h1v1h-1zM1053 555h1v2h-1zM1053 550h1v1h-1zM1054 553h2v1h-2zM990 643h1v2h-1zM1081 804h1v1h-1zM1275 838h1v2h-1zM1058 631h1v1h-1zM1033 690h1v1h-1zM984 472h1v2h-1zM980 468h1v1h-1zM1041 578h1v1h-1zM1036 586h1v1h-1zM1310 765h1v1h-1zM1306 765h1v1h-1zM1308 758h1v1h-1zM1310 761h1v1h-1zM1007 717h1v1h-1zM1016 651h2v1h-2zM1012 650h3v2h-3zM924 359h1v1h-1zM931 360h2v2h-2zM1214 442h1v1h-1zM1168 758h1v1h-1zM1285 466h1v1h-1zM1286 469h2v1h-2zM1291 465h1v1h-1zM1285 463h2v1h-2zM1287 465h1v1h-1zM1289 465h1v1h-1zM1289 468h1v1h-1zM1289 466h1v1h-1zM1287 465h1v1h-1zM1048 527h1v1h-1zM1046 531h1v1h-1zM1049 532h1v1h-1zM1066 406h1v1h-1zM1193 451h1v2h-1zM1194 454h1v1h-1zM1192 453h2v1h-2zM1193 453h1v1h-1zM1195 453h2v1h-2zM1192 453h1v1h-1zM1195 453h1v2h-1zM1192 455h1v1h-1zM1192 454h1v1h-1zM1191 452h1v1h-1zM1192 452h1v1h-1zM1193 455h1v1h-1zM1195 453h1v2h-1zM1193 454h1v1h-1zM1350 420h2v1h-2zM1342 416h1v1h-1zM1341 426h1v1h-1zM1343 414h1v1h-1zM976 423h1v1h-1zM1295 458h1v1h-1zM988 611h1v1h-1zM988 609h1v1h-1zM1525 477h1v1h-1zM1522 475h3v3h-3zM1036 627h1v1h-1zM1113 765h1v1h-1zM1113 765h1v1h-1zM1114 766h1v2h-1zM1115 766h1v1h-1zM1114 765h2v3h-2zM1088 383h2v1h-2zM1091 382h1v2h-1zM1096 386h1v1h-1zM1117 768h1v1h-1zM1119 766h1v1h-1zM1277 669h1v2h-1zM1279 668h3v2h-3zM1066 626h1v1h-1zM1064 627h4v2h-4zM1043 713h1v2h-1zM1041 710h1v1h-1zM1044 709h1v1h-1zM1044 715h1v1h-1zM1194 336h1v1h-1zM1184 338h2v1h-2zM1127 451h1v1h-1zM1127 455h1v1h-1zM1106 786h1v1h-1zM1227 639h1v2h-1zM1226 641h2v2h-2zM1225 640h1v1h-1zM1224 638h1v2h-1zM1224 640h1v1h-1zM1226 639h2v1h-2zM1227 641h1v1h-1zM1223 637h1v1h-1zM1226 638h1v1h-1zM1110 413h2v2h-2zM1112 411h1v2h-1zM1114 411h2v1h-2zM1113 410h2v1h-2zM1111 413h2v1h-2zM1113 411h1v2h-1zM1112 413h1v1h-1zM1111 412h1v1h-1zM1111 412h1v1h-1zM1113 411h1v1h-1zM1112 410h1v1h-1zM1111 411h1v1h-1zM1112 411h1v2h-1zM1109 410h1v1h-1zM1111 413h1v1h-1zM1112 409h1v1h-1zM1112 409h1v1h-1zM1041 793h1v1h-1zM1365 609h1v2h-1zM1364 611h1v1h-1zM1361 613h1v1h-1zM1360 608h1v2h-1zM1366 613h1v1h-1zM1367 612h1v1h-1zM1364 607h1v1h-1zM1365 609h1v1h-1zM1361 612h2v1h-2zM1354 667h1v1h-1zM1364 667h1v1h-1zM1071 365h1v1h-1zM998 428h2v1h-2zM1000 432h1v1h-1zM1002 422h1v1h-1zM1004 437h1v2h-1zM1000 430h2v3h-2zM1321 640h2v1h-2zM1320 645h1v1h-1zM1323 645h1v1h-1zM1323 645h2v1h-2zM1323 648h1v1h-1zM1325 647h1v1h-1zM1322 646h4v2h-4zM1246 348h2v1h-2zM1249 343h1v2h-1zM1355 630h1v1h-1zM1354 626h1v1h-1zM1352 629h1v1h-1zM1355 630h1v2h-1zM1351 626h1v1h-1zM1353 631h1v1h-1zM1347 630h1v1h-1zM1353 633h1v2h-1zM1350 629h1v1h-1zM1202 790h2v1h-2zM1205 792h1v1h-1zM1205 790h1v1h-1zM1204 788h1v1h-1zM1202 791h2v1h-2zM1201 791h1v1h-1zM1202 790h1v1h-1zM1205 790h1v1h-1zM1206 789h1v1h-1zM1204 791h1v1h-1zM1204 791h1v1h-1zM1202 792h1v1h-1zM1204 790h1v1h-1zM1203 789h1v1h-1zM1202 790h2v2h-2zM1289 294h1v2h-1zM1040 657h1v1h-1zM1038 655h2v1h-2zM1038 650h1v1h-1zM1033 655h2v1h-2zM1044 656h1v1h-1zM1034 647h1v2h-1zM1063 395h1v1h-1zM1066 388h1v1h-1zM1067 394h1v1h-1zM1065 391h2v1h-2zM1061 392h1v1h-1zM1066 392h1v1h-1zM1066 390h1v2h-1zM1063 388h2v1h-2zM1064 388h1v1h-1zM1208 482h1v1h-1zM1029 588h1v1h-1zM1170 797h1v1h-1zM1267 555h1v1h-1zM1397 544h2v1h-2zM1399 548h1v1h-1zM1394 547h1v2h-1zM1406 549h1v2h-1zM1405 537h1v1h-1zM1398 546h2v2h-2zM1368 577h1v1h-1zM1370 575h1v1h-1zM1368 574h2v1h-2zM1149 401h1v2h-1zM1158 403h1v1h-1zM1158 401h2v1h-2zM1158 407h1v1h-1zM1158 404h4v2h-4zM1475 537h1v1h-1zM1476 540h1v2h-1zM1477 535h2v1h-2zM1478 531h1v1h-1zM1476 532h1v1h-1zM1478 539h1v1h-1zM1465 526h1v1h-1zM1470 529h2v1h-2zM1468 526h1v1h-1zM1470 527h2v1h-2zM1468 525h1v1h-1zM1467 525h1v1h-1zM1470 524h1v1h-1zM1472 527h2v1h-2zM1466 525h1v2h-1zM1469 529h1v1h-1zM1470 524h1v1h-1zM1471 525h1v1h-1zM1467 529h1v1h-1zM1470 526h1v1h-1zM1469 529h1v1h-1zM1469 524h2v1h-2zM1469 527h1v1h-1zM1466 525h1v1h-1zM1466 528h2v1h-2zM1468 526h1v1h-1zM1472 527h1v2h-1zM1471 527h1v1h-1zM1471 526h1v1h-1zM1467 528h1v1h-1zM1002 571h1v1h-1zM997 577h1v2h-1zM996 575h1v2h-1zM998 569h1v1h-1zM997 576h2v1h-2zM1003 575h1v2h-1zM997 575h1v1h-1zM990 572h1v2h-1zM1001 573h1v1h-1zM1268 650h1v1h-1zM1274 648h1v2h-1zM1274 648h1v1h-1zM1271 645h2v1h-2zM1272 650h1v2h-1zM1267 648h1v1h-1zM1402 483h1v1h-1zM1128 727h1v1h-1zM1126 730h1v1h-1zM1128 728h1v1h-1zM1124 728h1v2h-1zM1246 422h1v1h-1zM1249 423h1v2h-1zM1249 423h1v1h-1zM1249 423h1v1h-1zM1248 421h1v1h-1zM1251 424h1v1h-1zM947 714h1v2h-1zM1020 455h1v1h-1zM986 660h2v2h-2zM991 655h1v1h-1zM984 649h1v1h-1zM1302 456h1v1h-1zM1304 455h2v1h-2zM1301 452h1v2h-1zM1300 450h1v1h-1zM1173 744h1v2h-1zM1173 740h1v1h-1zM1173 740h1v1h-1zM1173 742h1v2h-1zM1321 598h1v1h-1zM1316 595h1v1h-1zM1317 599h1v1h-1zM1317 596h1v2h-1zM1278 623h1v1h-1zM1280 621h4v3h-4zM1389 663h1v1h-1zM1389 661h1v1h-1zM1273 437h1v1h-1zM1275 441h1v1h-1zM1276 438h1v1h-1zM1275 441h1v2h-1zM1274 439h2v2h-2zM1268 439h2v1h-2zM1476 528h1v1h-1zM1479 529h1v2h-1zM1515 504h1v1h-1zM1510 506h4v2h-4zM1029 475h1v1h-1zM1029 474h1v2h-1zM1211 397h2v1h-2zM1211 396h1v1h-1zM1066 953h1v2h-1zM1069 951h2v1h-2zM1064 950h2v1h-2zM1072 950h1v1h-1zM1071 953h1v1h-1zM1069 953h2v2h-2zM1068 953h1v1h-1zM1073 953h1v1h-1zM1068 948h1v1h-1zM1022 463h1v1h-1zM1026 466h4v3h-4zM1269 763h1v1h-1zM1271 764h1v2h-1zM1269 761h1v1h-1zM1376 585h2v1h-2zM1376 592h1v1h-1zM1379 600h1v1h-1zM1382 591h1v2h-1zM1372 587h1v1h-1zM1372 597h1v1h-1zM1385 587h1v1h-1zM1373 589h1v1h-1zM1375 593h1v1h-1zM1113 422h1v1h-1zM1280 690h1v2h-1zM1276 689h1v1h-1zM1281 680h1v1h-1zM1279 686h1v1h-1zM1283 689h1v1h-1zM1279 688h1v1h-1zM1280 688h2v1h-2zM1279 690h2v1h-2zM1278 688h1v1h-1zM1287 764h2v1h-2zM1291 757h1v1h-1zM1291 762h2v2h-2zM1298 699h1v1h-1zM1299 691h1v1h-1zM1248 400h2v1h-2zM1245 401h1v1h-1zM1247 399h1v1h-1zM1251 403h1v1h-1zM1245 401h1v1h-1zM1247 401h1v1h-1zM1004 309h2v1h-2zM1024 617h1v1h-1zM1025 617h3v3h-3zM1025 618h1v1h-1zM1026 619h2v1h-2zM1027 618h1v1h-1zM1022 618h1v1h-1zM1026 616h1v1h-1zM1028 617h2v1h-2zM1025 614h1v1h-1zM1027 617h1v1h-1zM1024 617h1v1h-1zM1027 615h1v1h-1zM1027 616h1v1h-1zM1028 618h2v1h-2zM1027 617h1v1h-1zM1023 619h1v1h-1zM1027 618h1v1h-1zM1027 619h2v1h-2zM1023 616h1v1h-1zM1022 617h1v1h-1zM1026 616h1v1h-1zM1025 618h1v1h-1zM1022 617h1v1h-1zM1001 698h2v2h-2zM1002 699h1v1h-1zM1003 701h1v1h-1zM1002 701h1v1h-1zM1002 699h1v1h-1zM1005 698h2v1h-2zM1110 720h2v1h-2zM1112 720h1v1h-1zM1318 476h1v1h-1zM941 896h2v2h-2zM1243 424h1v2h-1zM1236 424h1v1h-1zM1242 420h1v1h-1zM1240 423h2v2h-2zM1240 418h1v2h-1zM1241 422h2v2h-2zM1240 423h2v1h-2zM1238 419h1v1h-1zM1238 423h1v2h-1zM1241 423h2v1h-2zM1238 421h1v1h-1zM1238 421h1v2h-1zM1239 418h1v1h-1zM1242 421h2v1h-2zM1238 419h1v2h-1zM1239 419h1v1h-1zM1237 422h1v1h-1zM1241 421h1v1h-1zM1238 420h1v1h-1zM1347 497h1v1h-1zM1348 499h1v1h-1zM1346 499h1v1h-1zM1346 497h1v1h-1zM1372 512h2v1h-2zM1361 519h1v1h-1zM1367 513h2v1h-2zM1464 452h1v1h-1zM1460 450h2v2h-2zM1199 760h1v1h-1zM1200 757h1v2h-1zM1198 750h1v1h-1zM1201 753h1v1h-1zM1205 748h2v1h-2zM1198 756h2v2h-2zM958 708h1v1h-1zM983 686h1v1h-1zM984 686h1v1h-1zM989 685h1v1h-1zM980 683h1v1h-1zM988 682h1v2h-1zM988 685h1v1h-1zM1280 639h1v1h-1zM1471 511h2v2h-2zM1240 625h1v1h-1zM1437 456h2v2h-2zM988 595h1v1h-1zM989 595h1v1h-1zM1112 314h1v1h-1zM1115 315h1v1h-1zM1121 684h1v1h-1zM1123 682h1v1h-1zM975 703h1v1h-1zM975 701h1v1h-1zM972 697h1v2h-1zM977 701h1v1h-1zM976 702h1v1h-1zM978 701h1v1h-1zM1219 744h1v1h-1zM1229 745h1v1h-1zM1224 742h1v2h-1zM1234 785h2v1h-2zM1234 785h1v1h-1zM1232 786h1v2h-1zM1100 820h1v2h-1zM1417 493h1v1h-1zM1419 488h2v1h-2zM1423 487h1v1h-1zM1421 490h2v1h-2zM1100 839h1v1h-1zM1099 839h1v1h-1zM1101 839h1v1h-1zM1514 500h2v1h-2zM1512 505h1v1h-1zM1514 496h1v2h-1zM1516 505h1v1h-1zM1246 403h1v1h-1zM1305 665h2v1h-2zM978 673h1v1h-1zM1264 475h1v1h-1zM1262 477h1v1h-1zM1266 478h1v1h-1zM1266 476h1v2h-1zM1265 478h1v2h-1zM1267 477h1v1h-1zM1265 474h2v2h-2zM1263 476h1v1h-1zM1265 477h1v1h-1zM1264 476h1v1h-1zM1267 478h2v2h-2zM1267 476h1v1h-1zM1265 477h1v1h-1zM1267 476h1v1h-1zM1265 479h1v1h-1zM1267 476h1v1h-1zM1263 478h1v1h-1zM1453 561h2v2h-2zM1292 702h1v1h-1zM1294 694h1v1h-1zM1295 698h2v1h-2zM1287 694h1v1h-1zM1291 801h2v1h-2zM1292 799h1v2h-1zM994 667h1v1h-1zM997 667h1v1h-1zM995 665h2v1h-2zM996 668h2v1h-2zM993 666h1v2h-1zM996 668h1v2h-1zM995 668h2v1h-2zM996 667h1v1h-1zM996 667h1v2h-1zM995 667h1v2h-1zM1009 582h2v1h-2zM1014 584h1v1h-1zM1017 579h1v1h-1zM1012 576h1v2h-1zM1018 573h1v1h-1zM1017 580h1v1h-1zM942 665h1v1h-1zM954 483h1v1h-1zM958 481h1v1h-1zM960 481h1v2h-1zM957 482h1v1h-1zM960 476h2v1h-2zM955 481h1v1h-1zM957 479h1v1h-1zM958 481h1v2h-1zM954 481h1v1h-1zM1140 829h1v1h-1zM1140 833h2v1h-2zM1262 752h2v1h-2zM1260 750h1v1h-1zM1375 494h1v1h-1zM1373 489h1v1h-1zM1374 495h1v1h-1zM1371 487h2v1h-2zM1378 484h1v1h-1zM1373 490h1v1h-1zM1371 493h1v1h-1zM1370 491h1v1h-1zM1371 493h1v1h-1zM1055 566h1v1h-1zM1052 569h1v1h-1zM1054 569h2v1h-2zM1053 562h1v1h-1zM1046 561h1v1h-1zM1060 567h1v1h-1zM1049 561h1v2h-1zM1048 571h2v1h-2zM1053 562h1v1h-1zM1056 565h4v3h-4zM1280 392h1v1h-1zM1276 392h1v1h-1zM1277 393h1v1h-1zM1284 389h1v2h-1zM1279 397h1v1h-1zM1275 392h2v1h-2zM1280 393h1v1h-1zM1281 391h1v1h-1zM1277 384h1v2h-1zM1277 391h2v2h-2zM1020 746h1v1h-1zM1022 743h1v1h-1zM1022 746h1v1h-1zM998 589h1v1h-1zM997 588h1v2h-1zM1000 584h1v1h-1zM995 585h2v2h-2zM1159 607h1v1h-1zM1159 603h1v1h-1zM1199 435h1v2h-1zM1293 618h1v1h-1zM1297 620h2v2h-2zM1296 620h1v2h-1zM1290 618h2v1h-2zM1296 619h1v2h-1zM1293 617h1v1h-1zM1051 482h1v1h-1zM1054 470h1v1h-1zM1050 476h1v2h-1zM1049 476h1v1h-1zM1049 478h1v1h-1zM1047 476h1v1h-1zM1054 480h1v1h-1zM1052 482h1v1h-1zM1049 472h1v1h-1zM931 698h1v2h-1zM931 690h1v1h-1zM927 694h1v1h-1zM930 704h1v2h-1zM990 710h1v2h-1zM992 714h1v1h-1zM1101 408h1v1h-1zM1032 653h2v1h-2zM1123 768h1v1h-1zM1123 769h1v1h-1zM1122 767h1v1h-1zM1122 769h1v1h-1zM1123 768h2v1h-2zM1123 769h1v2h-1zM1125 768h2v1h-2zM1121 769h1v1h-1zM1124 768h1v1h-1zM1123 766h1v2h-1zM1124 767h1v2h-1zM1123 766h1v2h-1zM1125 766h2v1h-2zM1122 768h1v1h-1zM1047 406h1v2h-1zM1057 403h1v1h-1zM1046 412h2v2h-2zM1049 405h1v2h-1zM1300 616h2v1h-2zM1297 619h1v1h-1zM1425 479h2v1h-2zM1425 473h1v2h-1zM1423 477h2v1h-2zM1428 474h1v1h-1zM1357 620h2v1h-2zM1165 857h2v2h-2zM1161 856h1v1h-1zM1163 856h1v1h-1zM1164 862h1v2h-1zM1169 858h2v1h-2zM1162 860h2v1h-2zM1164 862h1v1h-1zM1158 862h1v1h-1zM1166 861h1v1h-1zM1341 569h1v1h-1zM1336 570h1v2h-1zM1230 349h1v1h-1zM1221 341h1v1h-1zM1013 617h2v1h-2zM1009 622h1v2h-1zM1382 667h1v1h-1zM1381 666h1v1h-1zM1382 667h4v2h-4zM1209 380h1v2h-1zM1294 684h2v1h-2zM1297 679h2v1h-2zM1302 679h2v1h-2zM1296 682h1v1h-1zM1290 678h1v1h-1zM1296 684h1v1h-1zM1296 678h1v1h-1zM1294 682h1v2h-1zM1296 684h1v1h-1zM1263 376h1v1h-1zM1267 378h1v1h-1zM1265 377h1v2h-1zM1263 378h2v2h-2zM1263 376h1v1h-1zM1263 380h1v1h-1zM1121 399h1v2h-1zM1122 393h1v1h-1zM1122 394h1v1h-1zM1121 394h2v1h-2zM1119 396h1v1h-1zM1122 395h2v1h-2zM1119 396h1v1h-1zM1122 394h1v1h-1zM1119 392h1v2h-1zM1122 395h1v2h-1zM1119 391h1v1h-1zM1121 395h2v1h-2zM1122 392h1v1h-1zM1123 393h1v1h-1zM1120 391h1v2h-1zM1035 870h1v1h-1zM1037 871h1v1h-1zM1035 867h1v1h-1zM1031 869h1v1h-1zM1033 864h1v2h-1zM1042 868h1v1h-1zM1238 759h1v1h-1zM1242 760h1v1h-1zM1551 563h1v1h-1zM1553 564h1v1h-1zM1553 559h1v1h-1zM1555 567h2v1h-2zM1554 564h2v1h-2zM1561 565h1v1h-1zM1287 742h1v1h-1zM1289 749h1v1h-1zM1288 743h3v3h-3zM1150 402h1v1h-1zM918 714h1v1h-1zM915 712h1v1h-1zM919 713h1v1h-1zM971 695h1v1h-1zM1021 581h1v1h-1zM1020 577h1v1h-1zM1022 575h1v1h-1zM1021 579h1v1h-1zM1015 651h1v1h-1zM1014 648h1v1h-1zM1363 512h1v1h-1zM1361 509h2v1h-2zM1365 509h1v1h-1zM1361 507h1v1h-1zM1366 509h2v1h-2zM1367 506h1v1h-1zM1363 511h1v1h-1zM1363 508h1v1h-1zM1365 510h2v1h-2zM1361 509h1v1h-1zM1367 507h1v1h-1zM1362 507h1v1h-1zM1363 509h1v2h-1zM1363 506h1v1h-1zM1361 508h1v1h-1zM1361 508h2v2h-2zM1367 509h1v1h-1zM1363 509h1v1h-1zM1363 509h2v1h-2zM1363 509h1v1h-1zM1365 507h1v1h-1zM1365 508h2v2h-2zM1365 508h1v1h-1zM1365 510h2v2h-2zM1216 398h1v1h-1zM1216 405h1v1h-1zM1216 406h1v2h-1zM1217 406h1v2h-1zM1214 404h1v1h-1zM1215 406h1v1h-1zM1215 406h1v1h-1zM1089 809h1v1h-1zM1087 810h1v1h-1zM1087 809h2v1h-2zM1089 810h1v2h-1zM1600 550h2v1h-2zM1592 551h1v1h-1zM1600 545h1v1h-1zM1602 545h1v2h-1zM1601 546h1v1h-1zM1598 547h1v1h-1zM1598 546h1v1h-1zM1599 545h1v1h-1zM1601 547h1v1h-1zM1598 546h2v1h-2zM1600 545h2v1h-2zM1600 546h1v1h-1zM1599 547h1v1h-1zM1600 545h1v1h-1zM1601 545h1v1h-1zM1598 546h1v1h-1zM1600 549h1v1h-1zM1600 549h2v1h-2zM1603 547h1v1h-1zM1025 884h1v1h-1zM1028 889h1v1h-1zM1230 786h2v1h-2zM1229 786h1v1h-1zM1235 784h1v1h-1zM1232 784h1v1h-1zM1240 794h1v1h-1zM1234 783h2v1h-2zM1070 423h2v2h-2zM1069 423h1v1h-1zM1065 421h1v2h-1zM1070 426h1v2h-1zM1302 486h1v1h-1zM1097 715h1v2h-1zM1098 715h1v1h-1zM1099 710h1v1h-1zM1100 713h1v2h-1zM1096 355h1v1h-1zM1096 349h1v1h-1zM1097 352h1v1h-1zM1097 357h1v1h-1zM1099 357h1v1h-1zM1091 353h1v1h-1zM1095 350h1v1h-1zM1095 347h2v1h-2zM1098 356h1v1h-1zM1055 704h1v1h-1zM1043 875h1v2h-1zM1045 873h1v1h-1zM1047 873h2v1h-2zM1048 874h1v1h-1zM1043 873h1v2h-1zM1048 870h2v1h-2zM1130 935h1v1h-1zM1133 935h1v1h-1zM1131 936h1v2h-1zM1128 935h2v1h-2zM1429 490h2v1h-2zM1433 493h1v2h-1zM1429 489h1v2h-1zM1431 490h1v1h-1zM1431 496h1v1h-1zM1431 491h1v1h-1zM1427 491h1v1h-1zM1426 495h1v1h-1zM1433 489h2v1h-2zM1431 491h1v1h-1zM1431 494h2v2h-2zM1431 493h2v1h-2zM1428 491h1v2h-1zM1432 491h1v1h-1zM1431 493h1v2h-1zM1428 492h1v1h-1zM1429 490h2v1h-2zM1429 494h1v1h-1zM1428 493h2v1h-2zM1428 493h1v1h-1zM1429 494h1v1h-1zM1430 492h1v1h-1zM1432 492h2v2h-2zM1428 494h1v1h-1zM1248 646h1v1h-1zM1248 642h1v1h-1zM1252 641h1v1h-1zM1249 642h1v1h-1zM1245 645h1v1h-1zM1247 644h2v1h-2zM1244 648h1v2h-1zM1251 640h1v1h-1zM1249 641h1v1h-1zM1521 569h1v1h-1zM1524 570h1v1h-1zM1521 572h1v1h-1zM1521 569h1v1h-1zM1520 570h1v2h-1zM1521 572h1v2h-1zM1522 572h1v1h-1zM1523 572h1v2h-1zM1522 568h1v1h-1zM1526 571h1v1h-1zM1523 569h1v2h-1zM1525 571h1v1h-1zM1521 571h1v1h-1zM1522 570h1v1h-1zM1522 572h1v2h-1zM1523 568h1v1h-1zM1196 815h1v1h-1zM1195 814h1v1h-1zM1196 818h1v2h-1zM1197 813h1v1h-1zM1196 814h2v3h-2zM1196 778h1v1h-1zM1198 780h1v1h-1zM1204 777h1v1h-1zM1202 778h1v1h-1zM1201 780h2v1h-2zM1195 776h1v2h-1zM1198 776h1v1h-1zM1197 777h1v2h-1zM1194 776h1v1h-1zM1427 480h1v1h-1zM1426 482h1v1h-1zM1424 481h1v1h-1zM1426 483h2v1h-2zM1080 876h1v1h-1zM1078 871h2v1h-2zM1087 869h1v2h-1zM1080 874h1v1h-1zM1078 876h1v1h-1zM1078 874h1v1h-1zM1090 883h1v1h-1zM1079 881h2v1h-2zM1079 869h2v1h-2zM1159 765h1v1h-1zM1236 349h1v2h-1zM1243 345h1v1h-1zM1237 344h1v2h-1zM1074 790h1v1h-1zM1411 611h1v1h-1zM1407 612h1v2h-1zM1407 607h1v1h-1zM1411 610h1v1h-1zM1411 610h1v1h-1zM1408 609h1v1h-1zM1403 618h2v2h-2zM1407 611h1v1h-1zM1404 607h1v1h-1zM1569 530h1v1h-1zM1567 528h1v2h-1zM1236 462h1v1h-1zM980 639h2v2h-2zM889 548h1v1h-1zM883 552h1v1h-1zM894 548h1v1h-1zM1082 596h1v1h-1zM1382 503h1v2h-1zM1384 499h1v2h-1zM1387 503h2v1h-2zM1377 508h2v1h-2zM1352 495h1v2h-1zM1347 497h1v1h-1zM947 732h1v1h-1zM1401 559h2v2h-2zM1130 927h1v2h-1zM1126 927h1v1h-1zM1130 918h1v1h-1zM1129 928h1v1h-1zM1130 924h1v2h-1zM1129 924h2v1h-2zM1129 924h1v1h-1zM1129 924h1v1h-1zM1129 926h1v1h-1zM1129 927h1v1h-1zM1129 928h1v1h-1zM1131 924h1v1h-1zM1130 927h1v1h-1zM1128 924h1v1h-1zM1129 928h1v2h-1zM1128 928h2v1h-2zM1127 924h1v1h-1zM1128 926h1v1h-1zM1127 927h1v1h-1zM1253 813h1v1h-1zM1255 812h2v1h-2zM1257 814h1v1h-1zM1267 502h1v1h-1zM1584 547h1v1h-1zM1582 545h1v1h-1zM1579 548h1v1h-1zM1069 937h1v2h-1zM1068 938h1v2h-1zM1067 936h1v1h-1zM1254 481h1v2h-1zM1253 478h1v1h-1zM1251 482h1v2h-1zM1252 483h2v1h-2zM1310 510h1v1h-1zM1311 505h1v1h-1zM1310 507h1v1h-1zM1315 508h1v1h-1zM1058 703h1v2h-1zM1058 703h1v1h-1zM1053 703h2v1h-2zM1059 704h1v1h-1zM1075 505h2v1h-2zM1087 510h2v2h-2zM1236 544h1v2h-1zM1236 539h1v1h-1zM1240 540h1v2h-1zM1238 542h1v1h-1zM1507 571h1v1h-1zM1508 566h1v2h-1zM1504 571h1v1h-1zM1508 572h1v1h-1zM1503 571h1v1h-1zM1502 572h1v1h-1zM1219 404h1v1h-1zM1218 404h1v2h-1zM1225 398h1v1h-1zM1216 399h1v1h-1zM1511 526h1v1h-1zM1506 526h2v1h-2zM1510 526h1v1h-1zM1507 527h2v1h-2zM1115 432h1v2h-1zM1115 429h2v1h-2zM1119 431h1v1h-1zM1117 434h2v1h-2zM1118 431h2v1h-2zM1114 428h1v1h-1zM1118 429h1v1h-1zM1114 431h2v1h-2zM1111 434h1v1h-1zM1115 430h2v2h-2zM1079 852h1v1h-1zM1081 846h1v2h-1zM1080 853h1v1h-1zM1077 854h2v1h-2zM1076 847h1v1h-1zM1078 851h2v1h-2zM1274 816h1v1h-1zM1275 815h2v2h-2zM1273 812h1v2h-1zM1275 815h1v1h-1zM1271 814h2v1h-2zM1276 816h1v1h-1zM1007 661h1v1h-1zM1006 661h1v1h-1zM1090 424h1v1h-1zM1342 632h1v1h-1zM1343 633h4v2h-4zM1075 419h1v1h-1zM1367 676h2v1h-2zM1375 674h2v1h-2zM1373 670h1v1h-1zM1372 672h1v1h-1zM1134 770h1v1h-1zM1142 771h1v1h-1zM1295 497h1v1h-1zM1294 496h1v1h-1zM1292 497h1v1h-1zM1292 497h1v1h-1zM1291 498h1v2h-1zM1291 498h1v1h-1zM1293 495h1v1h-1zM1290 495h1v1h-1zM1291 496h1v1h-1zM1427 511h1v1h-1zM1173 761h1v2h-1zM1168 760h1v1h-1zM1174 768h1v1h-1zM1164 760h1v1h-1zM1442 538h1v1h-1zM1447 544h1v1h-1zM1439 546h1v1h-1zM1439 541h2v1h-2zM1282 779h1v1h-1zM1289 449h1v1h-1zM1289 451h1v2h-1zM1287 449h1v1h-1zM1290 450h1v1h-1zM1291 451h2v2h-2zM1290 449h1v1h-1zM1189 786h1v1h-1zM1184 792h1v1h-1zM1187 784h1v2h-1zM1231 726h1v1h-1zM1236 724h2v1h-2zM1233 726h1v1h-1zM1227 726h1v1h-1zM1231 725h1v2h-1zM1228 724h1v1h-1zM1235 723h1v1h-1zM1228 724h1v1h-1zM1230 723h1v1h-1zM1111 429h1v1h-1zM1119 433h1v1h-1zM1116 430h1v2h-1zM1117 434h1v1h-1zM1116 436h2v1h-2zM1117 428h1v1h-1zM1117 431h1v1h-1zM1118 434h1v1h-1zM1116 431h1v1h-1zM1546 566h1v1h-1zM1545 568h1v2h-1zM1545 565h1v1h-1zM1372 420h1v2h-1zM1375 419h1v1h-1zM1375 419h1v1h-1zM1374 419h3v2h-3zM1562 524h1v1h-1zM1554 523h1v1h-1zM1556 525h2v1h-2zM1225 784h2v1h-2zM1220 784h2v1h-2zM973 731h1v1h-1zM973 733h1v1h-1zM974 729h1v2h-1zM975 732h2v1h-2zM974 730h1v1h-1zM973 731h1v2h-1zM1456 479h1v1h-1zM1457 477h1v1h-1zM1456 480h1v1h-1zM1459 482h1v1h-1zM1449 478h1v1h-1zM1459 484h1v2h-1zM1457 480h4v2h-4zM1235 375h1v1h-1zM1236 371h1v1h-1zM1229 369h1v1h-1zM1231 382h1v1h-1zM994 429h1v2h-1zM977 652h1v1h-1zM975 652h1v2h-1zM975 652h1v1h-1zM976 651h1v1h-1zM975 650h2v2h-2zM1266 630h1v1h-1zM1264 634h1v2h-1zM1267 628h1v1h-1zM1266 634h1v1h-1zM1258 633h1v1h-1zM1265 635h1v2h-1zM1270 635h1v1h-1zM1262 631h2v1h-2zM1265 635h1v1h-1zM1035 809h1v1h-1zM1175 302h1v1h-1zM1177 302h1v1h-1zM1177 300h1v1h-1zM1085 829h1v1h-1zM1087 825h1v1h-1zM1089 834h1v1h-1zM1084 829h1v1h-1zM1088 828h1v1h-1zM1090 832h1v1h-1zM1088 832h1v1h-1zM1090 831h1v1h-1zM1090 832h1v1h-1zM1091 753h1v1h-1zM1093 749h1v2h-1zM1092 751h1v1h-1zM1092 751h1v1h-1zM1091 752h1v1h-1zM1094 748h1v1h-1zM1434 492h1v1h-1zM1435 488h1v2h-1zM1435 493h1v1h-1zM1118 407h1v1h-1zM1117 413h4v2h-4zM1060 622h1v2h-1zM1051 616h2v2h-2zM1059 620h1v1h-1zM966 477h1v1h-1zM966 482h2v2h-2zM967 476h1v2h-1zM964 476h1v1h-1zM1339 689h1v1h-1zM1338 690h1v1h-1zM1341 692h1v1h-1zM1338 692h1v1h-1zM1338 692h1v1h-1zM1335 689h1v1h-1zM1340 690h1v1h-1zM1340 694h1v1h-1zM1336 693h1v1h-1zM1034 543h1v1h-1zM1063 634h2v2h-2zM1065 640h1v1h-1zM1068 640h1v1h-1zM1024 743h1v2h-1zM1026 743h1v1h-1zM1023 740h1v1h-1zM1026 743h2v2h-2zM1234 432h1v1h-1zM1233 433h1v1h-1zM1238 429h2v1h-2zM1230 427h1v1h-1zM1302 778h1v1h-1zM1077 504h2v1h-2zM1097 905h1v1h-1zM1171 867h1v1h-1zM1173 868h2v1h-2zM1177 871h1v1h-1zM1172 866h1v1h-1zM1476 564h1v1h-1zM1481 566h1v1h-1zM1478 568h1v2h-1zM1120 404h1v1h-1zM1122 407h1v1h-1zM1120 402h1v2h-1zM1117 407h1v1h-1zM1117 404h1v1h-1zM1117 401h1v1h-1zM1470 511h1v1h-1zM1266 602h1v1h-1zM1266 602h1v1h-1zM1265 602h1v1h-1zM1023 586h2v1h-2zM1024 594h1v1h-1zM1026 590h1v1h-1zM1024 588h1v1h-1zM1026 593h1v1h-1zM1022 591h1v1h-1zM1021 589h1v1h-1zM1024 592h1v1h-1zM1022 592h1v1h-1zM1139 361h1v1h-1zM1140 362h1v2h-1zM1140 364h1v1h-1zM1138 359h2v1h-2zM1140 357h1v1h-1zM1139 361h2v1h-2zM1524 545h1v1h-1zM1526 540h2v2h-2zM1528 541h1v2h-1zM1525 540h2v1h-2zM1522 541h1v1h-1zM1527 538h1v1h-1zM1527 540h1v1h-1zM1520 538h1v1h-1zM1528 539h1v1h-1zM980 516h2v2h-2zM978 516h1v2h-1zM976 516h1v1h-1zM977 513h1v1h-1zM1437 563h2v1h-2zM1440 567h1v2h-1zM982 727h1v1h-1zM982 727h2v2h-2zM981 726h1v1h-1zM982 727h1v2h-1zM978 729h2v1h-2zM983 727h1v1h-1zM980 727h1v1h-1zM982 726h1v1h-1zM980 725h1v2h-1zM1491 481h1v1h-1zM1488 483h1v1h-1zM1488 480h1v1h-1zM1485 482h1v1h-1zM1489 478h2v2h-2zM1489 481h1v1h-1zM1487 483h1v1h-1zM1488 481h1v1h-1zM1492 479h1v1h-1zM1150 477h1v1h-1zM1148 479h1v1h-1zM1151 476h1v1h-1zM1096 442h2v1h-2zM1345 664h1v1h-1zM1336 669h1v1h-1zM1262 636h1v2h-1zM1260 635h1v2h-1zM1262 638h1v1h-1zM1262 636h3v2h-3zM1058 562h2v1h-2zM1255 662h1v1h-1zM1256 665h1v1h-1zM1253 662h2v1h-2zM1250 663h1v1h-1zM1237 753h1v1h-1zM1235 744h1v1h-1zM983 797h1v1h-1zM987 798h2v2h-2zM1452 449h1v1h-1zM1448 450h1v1h-1zM1448 449h1v2h-1zM1445 448h2v1h-2zM1330 455h1v2h-1zM1341 451h2v1h-2zM1341 448h1v1h-1zM1335 452h1v1h-1zM1312 640h2v2h-2zM1308 646h1v2h-1zM1306 645h1v1h-1zM1307 645h1v1h-1zM1306 647h2v1h-2zM1306 646h1v1h-1zM1305 645h1v1h-1zM1450 546h1v2h-1zM1449 548h2v1h-2zM1449 550h1v2h-1zM1450 551h1v1h-1zM1450 551h2v1h-2zM1447 543h1v2h-1zM1450 548h2v1h-2zM1447 551h1v1h-1zM1450 542h1v2h-1zM1214 426h1v1h-1zM1158 737h2v1h-2zM1155 742h1v2h-1zM1159 742h2v1h-2zM1156 734h1v1h-1zM1157 735h1v1h-1zM1161 737h1v1h-1zM1157 736h2v1h-2zM1155 737h1v1h-1zM1155 734h2v2h-2zM1332 669h1v1h-1zM1330 661h1v1h-1zM1332 663h2v1h-2zM1228 480h1v1h-1zM1227 484h2v2h-2zM1226 480h1v2h-1zM1224 481h1v2h-1zM1227 482h1v1h-1zM1223 482h2v1h-2zM1225 480h1v2h-1zM1225 483h1v1h-1zM1224 480h1v2h-1zM1224 482h2v2h-2zM1224 481h2v2h-2zM1226 483h1v1h-1zM1366 459h1v1h-1zM1368 457h1v1h-1zM1370 459h1v2h-1zM1361 458h2v1h-2zM1359 459h1v1h-1zM1360 458h1v1h-1zM1364 461h1v1h-1zM1366 460h1v1h-1zM1366 461h1v1h-1zM1363 461h2v1h-2zM1364 460h1v1h-1zM1067 368h1v2h-1zM1065 364h1v2h-1zM1066 361h1v1h-1zM1463 554h2v1h-2zM1464 549h2v1h-2zM1098 930h2v1h-2zM1112 927h1v1h-1zM1100 923h2v1h-2zM1109 928h1v2h-1zM1108 918h2v1h-2zM1098 924h1v1h-1zM1104 924h2v1h-2zM1107 926h1v1h-1zM1093 925h1v1h-1zM1031 487h1v2h-1zM1030 499h2v1h-2zM1028 493h1v1h-1zM1035 495h1v2h-1zM1030 490h2v1h-2zM1029 495h1v1h-1zM838 678h1v1h-1zM839 681h1v1h-1zM830 676h1v2h-1zM991 601h1v1h-1zM985 598h1v1h-1zM986 601h1v1h-1zM987 601h1v1h-1zM986 603h1v2h-1zM988 602h2v2h-2zM982 602h1v1h-1zM989 601h1v1h-1zM989 599h1v1h-1zM1279 613h1v2h-1zM963 476h1v1h-1zM958 473h1v1h-1zM955 472h1v1h-1zM963 478h1v1h-1zM966 475h1v1h-1zM955 474h2v1h-2zM961 480h1v1h-1zM960 479h2v1h-2zM958 475h1v1h-1zM1364 460h1v2h-1zM991 737h2v1h-2zM996 737h1v1h-1zM1048 681h1v1h-1zM1046 676h1v1h-1zM1285 784h1v2h-1zM1281 786h1v2h-1zM1284 788h1v1h-1zM1283 786h1v1h-1zM1286 789h1v2h-1zM1283 787h1v1h-1zM1287 788h1v1h-1zM1288 786h1v2h-1zM1283 783h1v2h-1zM1181 971h1v1h-1zM1177 962h2v1h-2zM1175 962h1v2h-1zM1558 518h1v2h-1zM1562 516h1v2h-1zM1559 516h1v1h-1zM1559 518h1v1h-1zM1561 515h2v1h-2zM1559 517h1v1h-1zM1561 516h1v1h-1zM1556 514h1v1h-1zM1559 516h1v2h-1zM1019 670h1v1h-1zM1016 663h1v1h-1zM1016 659h1v1h-1zM1285 681h1v1h-1zM1282 680h1v1h-1zM1283 687h1v1h-1zM1284 681h1v1h-1zM1284 677h1v1h-1zM1285 681h1v1h-1zM1283 682h3v3h-3zM1101 422h1v1h-1zM1365 524h1v1h-1zM1359 518h1v2h-1zM1270 455h1v1h-1zM1277 459h1v2h-1zM1589 548h1v1h-1zM1584 547h1v1h-1zM1593 547h1v1h-1zM1585 546h1v2h-1zM1565 496h1v1h-1zM1566 498h1v1h-1zM1566 496h1v1h-1zM1565 498h2v1h-2zM1567 499h1v1h-1zM1564 499h1v1h-1zM1566 498h1v2h-1zM1565 495h1v2h-1zM1565 498h2v2h-2zM1191 978h1v2h-1zM1192 975h1v1h-1zM1193 974h2v1h-2zM1125 881h1v1h-1zM1122 871h2v1h-2zM1126 875h1v2h-1zM1295 398h1v1h-1zM1296 398h1v1h-1zM1256 377h1v1h-1zM978 456h1v2h-1zM977 456h1v2h-1zM980 453h1v1h-1zM979 461h1v1h-1zM981 457h1v1h-1zM979 453h1v1h-1zM1224 456h1v1h-1zM1000 621h1v2h-1zM999 621h1v1h-1zM1001 624h1v1h-1zM1000 622h1v1h-1zM1048 713h1v1h-1zM1221 780h1v1h-1zM1224 776h1v1h-1zM1219 781h2v1h-2zM1074 847h1v2h-1zM1076 843h1v2h-1zM1076 846h3v3h-3zM1308 429h1v1h-1zM1306 430h1v1h-1zM1312 429h1v2h-1zM990 559h1v1h-1zM988 551h2v1h-2zM990 553h1v2h-1zM1115 772h1v1h-1zM1111 772h2v2h-2zM1111 770h1v1h-1zM1125 878h1v1h-1zM1129 879h1v2h-1zM1154 853h1v1h-1zM1151 857h1v1h-1zM1147 859h1v1h-1zM1152 858h1v2h-1zM1148 860h1v1h-1zM1155 859h1v1h-1zM1150 855h1v2h-1zM1150 854h1v1h-1zM1149 857h1v1h-1zM1148 856h1v1h-1zM1148 855h1v1h-1zM1148 857h1v1h-1zM1147 855h1v2h-1zM1150 855h1v2h-1zM1390 559h1v1h-1zM1396 561h1v1h-1zM1387 557h2v2h-2zM1390 559h1v1h-1zM1388 555h1v1h-1zM1393 560h1v1h-1zM1391 559h2v1h-2zM1392 559h1v1h-1zM1390 559h1v2h-1zM1540 509h2v1h-2zM1541 509h1v1h-1zM1544 510h2v2h-2zM1068 522h1v1h-1zM1261 483h1v1h-1zM1073 799h1v1h-1zM1107 955h1v1h-1zM1104 952h1v1h-1zM1303 676h2v1h-2zM1304 676h1v2h-1zM1049 496h1v1h-1zM1047 493h1v2h-1zM1047 493h1v2h-1zM1299 638h1v1h-1zM1292 641h2v1h-2zM1294 638h1v1h-1zM1294 636h1v2h-1zM1294 634h2v1h-2zM1294 639h1v1h-1zM1090 706h1v1h-1zM1085 706h1v1h-1zM1094 694h1v1h-1zM1084 709h1v1h-1zM1091 699h1v2h-1zM1087 701h1v1h-1zM1089 707h1v1h-1zM1088 702h1v2h-1zM1090 703h1v1h-1zM1409 492h1v1h-1zM1413 488h1v1h-1zM1410 489h2v1h-2zM1408 486h1v1h-1zM1035 740h1v1h-1zM1174 412h2v1h-2zM1175 410h1v1h-1zM1176 411h1v1h-1zM1175 412h1v1h-1zM1174 411h1v1h-1zM1174 412h1v1h-1zM1121 341h1v1h-1zM1124 336h1v1h-1zM1122 341h1v1h-1zM1122 342h1v1h-1zM1125 336h1v1h-1zM1124 342h1v1h-1zM1379 509h1v1h-1zM1050 874h1v1h-1zM1179 646h1v1h-1zM1180 645h4v3h-4zM1565 529h1v1h-1zM1565 528h1v1h-1zM1560 528h1v1h-1zM1561 529h1v1h-1zM1560 529h1v1h-1zM1564 530h1v1h-1zM946 653h2v1h-2zM945 654h1v1h-1zM947 658h2v1h-2zM1254 417h1v1h-1zM1254 417h1v1h-1zM1256 416h1v1h-1zM1207 434h2v2h-2zM1203 437h1v1h-1zM1204 434h1v1h-1zM1202 434h1v1h-1zM1131 938h1v2h-1zM951 695h2v1h-2zM1237 357h1v1h-1zM1241 356h1v1h-1zM1237 357h1v1h-1zM1240 357h2v1h-2zM1516 609h1v1h-1zM1217 487h1v2h-1zM1216 489h2v1h-2zM1212 490h2v2h-2zM1262 607h1v1h-1zM1259 602h2v1h-2zM1376 603h2v1h-2zM1374 603h2v1h-2zM1371 605h1v2h-1zM1366 606h1v1h-1zM1377 602h1v1h-1zM1371 603h1v2h-1zM1368 603h1v1h-1zM1372 609h1v2h-1zM1363 603h1v1h-1zM1103 901h1v1h-1zM1102 901h1v1h-1zM1106 901h1v1h-1zM1105 901h1v1h-1zM1103 901h1v2h-1zM1103 902h1v1h-1zM1102 900h1v1h-1zM1103 902h1v1h-1zM1103 901h1v1h-1zM1101 901h2v1h-2zM1102 902h1v1h-1zM1151 716h1v1h-1zM1156 714h1v1h-1zM1148 717h1v1h-1zM1153 719h1v1h-1zM1149 709h1v1h-1zM1150 712h2v1h-2zM1442 496h1v1h-1zM1441 496h1v1h-1zM1442 497h2v1h-2zM1442 504h1v2h-1zM1442 497h2v2h-2zM1440 501h1v1h-1zM1106 792h1v1h-1zM1106 795h1v1h-1zM1525 548h1v2h-1zM1534 543h1v2h-1zM1529 547h1v1h-1zM1529 547h1v1h-1zM1532 547h1v1h-1zM1532 556h1v1h-1zM1313 625h1v1h-1zM1312 626h4v3h-4zM1424 468h1v1h-1zM1255 813h2v1h-2zM1255 816h1v1h-1zM1254 817h1v1h-1zM1339 611h1v2h-1zM1341 612h1v1h-1zM1344 612h1v1h-1zM1340 611h2v1h-2zM1341 610h1v1h-1zM1341 612h1v2h-1zM1340 609h1v1h-1zM1340 611h1v1h-1zM1342 611h1v1h-1zM1343 609h1v1h-1zM1345 611h1v1h-1zM1340 612h1v2h-1zM1344 611h1v2h-1zM1339 612h1v1h-1zM1343 610h1v2h-1zM1338 611h1v1h-1zM1343 613h1v1h-1zM1342 611h1v1h-1zM1343 609h1v1h-1zM1340 610h1v1h-1zM1340 609h2v2h-2zM1344 614h1v1h-1zM1345 612h2v1h-2zM1342 614h2v1h-2zM1339 611h1v1h-1zM1342 613h1v1h-1zM1340 612h1v2h-1zM1340 610h1v1h-1zM1428 527h2v1h-2zM1363 565h1v1h-1zM1361 565h2v1h-2zM1366 571h1v1h-1zM1365 570h2v2h-2zM1363 569h1v1h-1zM1366 571h1v1h-1zM1040 748h1v1h-1zM1041 749h1v1h-1zM1040 747h2v1h-2zM1042 748h1v1h-1zM1039 748h3v3h-3zM1110 713h1v1h-1zM1112 720h1v1h-1zM1110 719h1v1h-1zM1108 721h1v1h-1zM1243 510h1v1h-1zM1243 508h1v1h-1zM1243 510h1v1h-1zM1241 510h2v2h-2zM1242 512h1v1h-1zM1242 509h1v2h-1zM1240 519h2v1h-2zM1237 511h1v1h-1zM1239 508h1v2h-1zM1179 795h1v1h-1zM1182 794h1v1h-1zM1187 792h1v1h-1zM1176 791h1v1h-1zM1183 793h1v1h-1zM1181 792h1v2h-1zM1181 793h2v1h-2zM1181 790h1v2h-1zM1182 792h1v2h-1zM1180 791h1v1h-1zM1180 793h1v1h-1zM1180 793h2v1h-2zM1180 792h1v1h-1zM1182 792h1v1h-1zM1181 791h1v2h-1zM1179 793h1v1h-1zM1080 726h1v2h-1zM1077 728h1v1h-1zM1073 727h1v1h-1zM1132 456h1v1h-1zM1132 453h1v1h-1zM1132 452h2v1h-2zM1133 459h1v1h-1zM1201 472h1v1h-1zM1202 471h2v1h-2zM1200 471h1v1h-1zM1202 473h2v1h-2zM1206 470h1v1h-1zM1206 475h2v1h-2zM1203 471h2v1h-2zM1202 473h1v1h-1zM1205 475h1v1h-1zM1105 964h1v2h-1zM1105 960h1v2h-1zM1105 961h1v1h-1zM1104 962h1v1h-1zM1108 961h1v1h-1zM1103 962h1v2h-1zM1105 960h1v2h-1zM1106 962h1v1h-1zM1105 961h2v1h-2zM1134 712h2v1h-2zM1128 715h2v2h-2zM1124 711h2v1h-2zM1128 705h1v2h-1zM1131 709h3v2h-3zM1116 375h1v2h-1zM1113 378h1v1h-1zM1115 376h1v1h-1zM1233 669h1v2h-1zM1232 667h1v1h-1zM1231 678h1v1h-1zM1520 545h1v1h-1zM1522 542h1v1h-1zM1521 542h1v1h-1zM1520 543h2v1h-2zM1291 644h2v1h-2zM1042 665h1v1h-1zM1048 665h1v1h-1zM1303 424h2v1h-2zM1298 425h1v1h-1zM1139 858h1v1h-1zM1145 855h2v2h-2zM971 602h2v2h-2zM1043 506h1v1h-1zM1043 505h1v1h-1zM1043 504h2v1h-2zM966 588h1v1h-1zM962 586h1v1h-1zM960 586h1v2h-1zM963 585h1v2h-1zM964 585h2v1h-2zM965 585h2v2h-2zM1221 392h1v1h-1zM1545 604h1v1h-1zM1334 336h2v1h-2zM1107 466h1v1h-1zM1106 468h1v1h-1zM1105 467h1v2h-1zM1105 465h1v1h-1zM1104 465h2v1h-2zM1106 465h1v1h-1zM1400 421h2v1h-2zM1402 422h1v2h-1zM958 652h1v2h-1zM959 642h1v2h-1zM1015 536h1v1h-1zM1384 416h1v1h-1zM1379 417h1v1h-1zM1381 419h2v1h-2zM1382 419h1v1h-1zM1380 416h1v1h-1zM1381 417h1v1h-1zM1136 891h1v1h-1zM1132 889h1v1h-1zM1132 885h1v1h-1zM1135 890h2v1h-2zM1132 890h2v3h-2zM1354 482h1v1h-1zM1351 476h1v1h-1zM1169 389h1v2h-1zM1171 390h1v1h-1zM1172 391h1v1h-1zM1172 391h1v1h-1zM1173 393h1v2h-1zM1170 388h1v1h-1zM1172 392h1v2h-1zM1170 389h1v1h-1zM1170 393h1v1h-1zM1310 770h1v1h-1zM1312 771h1v1h-1zM1310 771h1v1h-1zM1307 770h1v1h-1zM1079 411h1v2h-1zM1078 414h2v1h-2zM1072 414h1v1h-1zM1081 413h1v1h-1zM1080 416h1v1h-1zM1076 415h1v1h-1zM1079 408h1v1h-1zM1076 414h1v2h-1zM1077 412h2v1h-2zM1552 507h1v1h-1zM1560 505h1v1h-1zM1555 505h1v1h-1zM1297 641h1v1h-1zM1303 644h2v1h-2zM1294 635h2v1h-2zM1559 549h1v1h-1zM1553 557h1v1h-1zM1561 558h2v2h-2zM1288 380h1v1h-1zM1281 381h1v2h-1zM1289 379h1v1h-1zM1286 380h1v2h-1zM1104 466h1v2h-1zM1107 465h1v1h-1zM1106 466h1v1h-1zM1588 516h1v1h-1zM1588 520h1v1h-1zM1592 521h1v1h-1zM1592 518h1v1h-1zM1587 520h1v1h-1zM1593 519h1v1h-1zM1160 936h1v1h-1zM982 469h1v1h-1zM1279 657h1v1h-1zM1278 661h1v2h-1zM1273 661h1v2h-1zM1277 662h1v1h-1zM1279 664h2v1h-2zM1281 663h1v2h-1zM1100 693h1v1h-1zM1098 691h1v2h-1zM1100 688h1v1h-1zM1098 690h1v1h-1zM1280 467h1v1h-1zM1280 460h1v1h-1zM1284 464h1v1h-1zM1382 583h1v1h-1zM1372 633h1v2h-1zM1363 633h1v2h-1zM1363 636h1v1h-1zM1323 651h1v1h-1zM1325 650h1v1h-1zM1322 653h2v1h-2zM1321 653h1v1h-1zM1326 652h2v1h-2zM1325 649h1v1h-1zM1331 651h1v1h-1zM1462 471h1v2h-1zM1464 470h1v2h-1zM1518 556h1v2h-1zM1189 816h1v1h-1zM1190 819h1v1h-1zM1191 817h1v1h-1zM1551 535h1v1h-1zM1551 532h1v1h-1zM1535 534h1v1h-1zM1546 534h1v1h-1zM1238 391h1v1h-1zM1238 392h4v3h-4zM1449 447h1v1h-1zM1451 449h1v2h-1zM1452 446h1v1h-1zM1447 449h1v1h-1zM993 489h2v1h-2zM1260 336h1v1h-1zM1019 594h1v1h-1zM1022 587h1v1h-1zM1015 592h1v1h-1zM1018 593h1v1h-1zM1010 674h1v1h-1zM1007 670h4v2h-4zM1052 721h1v1h-1zM1052 721h1v2h-1zM1051 724h1v1h-1zM1050 724h1v1h-1zM1051 723h2v1h-2zM1052 723h2v1h-2zM1052 723h1v2h-1zM1053 723h1v1h-1zM1052 720h1v1h-1zM1345 619h1v2h-1zM1325 466h1v1h-1zM1328 468h2v1h-2zM1327 466h1v1h-1zM1326 469h1v1h-1zM1328 469h1v1h-1zM1331 465h1v1h-1zM1327 468h2v1h-2zM1328 468h2v2h-2zM1331 466h1v1h-1zM1325 467h1v1h-1zM1327 467h1v1h-1zM1326 466h1v1h-1zM1326 468h1v1h-1zM1325 468h1v1h-1zM1328 468h1v1h-1zM1326 468h2v1h-2zM1117 784h1v1h-1zM1107 780h1v1h-1zM1105 776h1v1h-1zM1105 784h1v2h-1zM947 736h2v2h-2zM949 737h1v1h-1zM949 735h1v1h-1zM944 736h1v1h-1zM949 737h1v1h-1zM948 734h1v2h-1zM1095 947h2v1h-2zM1096 946h1v1h-1zM1097 948h1v2h-1zM1120 308h1v2h-1zM1117 309h1v1h-1zM1123 308h1v1h-1zM1120 308h1v2h-1zM1117 308h1v2h-1zM1121 309h1v1h-1zM1121 309h1v1h-1zM1123 305h1v1h-1zM1119 305h1v1h-1zM1035 578h1v1h-1zM1034 580h2v2h-2zM1035 578h2v2h-2zM1034 580h1v1h-1zM1035 583h1v1h-1zM1033 580h2v1h-2zM1039 335h2v1h-2zM1150 710h1v1h-1zM1078 550h1v1h-1zM1075 554h2v1h-2zM1082 547h1v1h-1zM1080 550h1v2h-1zM1078 551h2v1h-2zM1076 556h1v1h-1zM1074 549h1v1h-1zM1082 545h2v1h-2zM1078 558h1v1h-1zM1044 829h1v1h-1zM1047 833h1v1h-1zM1046 835h1v1h-1zM1047 828h1v1h-1zM1045 832h2v1h-2zM1046 832h2v2h-2zM1049 830h1v1h-1zM1043 835h1v1h-1zM1047 834h1v1h-1zM1461 458h1v1h-1zM1458 453h1v2h-1zM981 384h1v1h-1zM983 384h3v3h-3zM1491 524h1v1h-1zM1490 522h1v1h-1zM1566 555h1v2h-1zM1127 474h2v1h-2zM1127 482h2v1h-2zM1127 477h1v1h-1zM1490 421h1v1h-1zM1483 524h2v1h-2zM1480 528h2v1h-2zM1480 527h1v1h-1zM1482 526h2v1h-2zM1479 524h2v2h-2zM1482 527h1v1h-1zM1481 524h1v1h-1zM1481 526h1v1h-1zM1480 526h1v1h-1zM1171 743h1v1h-1zM1040 721h1v1h-1zM1042 720h1v2h-1zM1043 719h1v1h-1zM1039 720h1v2h-1zM1040 719h1v1h-1zM1042 716h1v1h-1zM1169 403h1v2h-1zM1173 404h1v1h-1zM1170 400h1v1h-1zM1169 403h2v1h-2zM1166 404h1v1h-1zM1171 401h1v1h-1zM1169 401h1v2h-1zM1167 403h2v2h-2zM1171 401h1v2h-1zM980 755h1v1h-1zM1353 456h1v1h-1zM1355 454h1v1h-1zM1359 454h2v2h-2zM1356 453h1v2h-1zM1346 698h1v1h-1zM1345 700h2v1h-2zM1342 698h2v1h-2zM1341 699h2v2h-2zM973 468h1v1h-1zM963 475h1v1h-1zM968 473h1v1h-1zM1104 416h1v1h-1zM1104 418h1v1h-1zM1525 511h1v1h-1zM1050 550h1v1h-1zM1052 555h1v2h-1zM1059 546h1v1h-1zM1059 549h1v1h-1zM1058 554h2v1h-2zM1061 550h1v1h-1zM1055 552h1v1h-1zM1055 549h1v1h-1zM1061 550h1v1h-1zM1149 873h1v2h-1zM1144 876h2v1h-2zM1149 875h1v1h-1zM1145 872h1v2h-1zM1146 873h2v2h-2zM1160 428h1v1h-1zM1164 429h2v2h-2zM1164 430h2v1h-2zM1158 426h2v1h-2zM1162 431h1v1h-1zM1162 432h1v1h-1zM1159 427h2v1h-2zM1161 428h1v1h-1zM1161 426h1v1h-1zM1257 414h1v2h-1zM1256 413h1v1h-1zM1258 417h1v1h-1zM1257 417h1v1h-1zM1257 416h1v1h-1zM1255 416h1v1h-1zM1257 417h1v1h-1zM1258 414h1v2h-1zM1260 415h1v1h-1zM1258 412h1v2h-1zM1259 415h1v1h-1zM1256 416h2v2h-2zM1257 416h1v1h-1zM1257 416h1v1h-1zM1257 416h1v2h-1zM1255 415h1v1h-1zM1254 414h1v2h-1zM1257 417h1v1h-1zM1258 415h2v2h-2zM1277 612h2v1h-2zM1274 614h1v1h-1zM1278 615h1v1h-1zM1279 618h1v1h-1zM1245 822h1v1h-1zM1245 829h2v2h-2zM1253 825h1v2h-1zM1002 554h1v1h-1zM1008 554h2v1h-2zM1343 677h2v1h-2zM1346 672h1v1h-1zM1351 674h2v2h-2zM1051 627h1v2h-1zM1051 627h3v3h-3zM1137 650h1v2h-1zM1136 656h2v1h-2zM1061 824h1v1h-1zM1062 824h1v1h-1zM1293 682h2v1h-2zM1292 685h1v1h-1zM1420 690h1v1h-1zM1417 693h3v2h-3zM1236 504h1v1h-1zM855 722h1v1h-1zM852 728h1v1h-1zM1346 457h2v1h-2zM1339 465h2v2h-2zM1347 461h1v1h-1zM1050 696h1v2h-1zM1051 698h1v1h-1zM1052 697h2v1h-2zM1050 698h1v2h-1zM1051 698h1v1h-1zM1052 699h1v1h-1zM1050 700h2v1h-2zM1051 699h1v1h-1zM1048 701h1v2h-1zM1283 744h1v1h-1zM1550 551h1v1h-1zM1237 732h1v1h-1zM1230 750h1v1h-1zM1232 754h1v1h-1zM1148 926h1v1h-1zM1150 931h2v2h-2zM1151 925h1v1h-1zM1151 932h2v1h-2zM1150 931h1v1h-1zM1155 939h2v1h-2zM1066 834h2v1h-2zM1068 835h1v1h-1zM1070 841h1v1h-1zM1071 837h1v1h-1zM1111 835h1v2h-1zM1111 833h1v1h-1zM1112 838h1v1h-1zM1114 833h1v1h-1zM1113 837h1v2h-1zM1112 834h2v2h-2zM1255 436h1v1h-1zM1261 438h1v1h-1zM1252 440h1v1h-1zM1354 614h2v1h-2zM1350 611h1v1h-1zM1344 615h2v2h-2zM1347 609h1v1h-1zM1577 479h1v1h-1zM1220 432h1v1h-1zM1102 462h1v2h-1zM1103 458h1v1h-1zM1107 457h1v2h-1zM1493 588h1v1h-1zM1494 588h1v1h-1zM1492 588h1v1h-1zM1493 480h1v1h-1zM1497 482h1v1h-1zM1495 476h1v2h-1zM1495 474h1v2h-1zM1496 477h1v1h-1zM1498 479h1v1h-1zM1266 588h1v1h-1zM1259 592h1v1h-1zM1261 589h1v1h-1zM1266 591h2v1h-2zM1261 589h1v1h-1zM1261 592h1v1h-1zM1264 590h1v1h-1zM1266 584h2v1h-2zM1260 586h1v1h-1zM1178 444h1v2h-1zM1183 444h2v1h-2zM1181 441h2v2h-2zM1173 441h1v1h-1zM1170 443h2v2h-2zM1181 441h1v1h-1zM1286 666h2v2h-2zM1285 663h1v1h-1zM1365 682h2v2h-2zM1279 478h1v1h-1zM1280 474h2v2h-2zM1593 597h1v1h-1zM1593 597h3v2h-3zM1097 384h1v1h-1zM1100 382h1v1h-1zM1281 633h1v1h-1zM1284 630h1v2h-1zM1288 633h1v1h-1zM1282 634h1v1h-1zM1277 631h1v1h-1zM1285 631h1v1h-1zM1288 633h1v1h-1zM1289 632h1v2h-1zM1282 632h1v1h-1zM1475 500h1v1h-1zM1466 501h2v2h-2zM1025 716h1v1h-1zM1017 715h1v1h-1zM1021 711h1v1h-1zM1023 718h1v1h-1zM1286 701h1v2h-1zM1291 697h2v1h-2zM1286 695h1v1h-1zM1279 698h1v1h-1zM1280 694h2v1h-2zM1283 699h1v1h-1zM1283 707h1v2h-1zM1282 697h1v1h-1zM1281 701h1v1h-1zM1143 852h2v2h-2zM1195 436h1v1h-1zM1188 433h2v1h-2zM1189 433h1v1h-1zM1250 473h2v1h-2zM1547 472h1v1h-1zM1547 477h1v1h-1zM1548 475h1v1h-1zM1545 482h1v1h-1zM1552 483h1v1h-1zM1549 479h1v1h-1zM1550 480h1v1h-1zM1548 479h1v1h-1zM1547 480h1v2h-1zM1021 517h1v1h-1zM1374 565h1v1h-1zM1378 563h1v2h-1zM1376 561h1v2h-1zM1377 561h1v1h-1zM1379 565h1v1h-1zM1377 566h1v1h-1zM1120 816h1v1h-1zM1018 623h1v1h-1zM1022 626h1v1h-1zM1019 618h1v1h-1zM1082 436h1v1h-1zM1082 440h1v1h-1zM1246 761h1v1h-1zM1250 761h2v1h-2zM951 670h1v1h-1zM954 669h1v2h-1zM946 669h2v1h-2zM953 671h1v2h-1zM950 670h3v3h-3zM1146 732h1v1h-1zM1144 727h2v2h-2zM1147 729h1v2h-1zM1153 735h1v2h-1zM921 687h1v1h-1zM922 687h1v1h-1zM927 687h1v1h-1zM923 689h1v1h-1zM1491 445h1v1h-1zM1493 448h1v2h-1zM1490 449h2v1h-2zM1493 443h1v2h-1zM1494 442h1v1h-1zM1492 445h1v1h-1zM1059 336h2v1h-2zM1445 496h1v1h-1zM1444 493h1v1h-1zM1195 466h2v1h-2zM1063 831h1v1h-1zM1482 505h1v2h-1zM1478 504h1v1h-1zM937 583h1v1h-1zM938 585h1v1h-1zM940 584h1v1h-1zM1322 535h1v1h-1zM1327 543h1v1h-1zM1325 542h1v1h-1zM1328 538h1v1h-1zM1135 808h1v1h-1zM1131 807h2v2h-2zM1136 813h1v2h-1zM1134 812h1v1h-1zM1133 809h1v1h-1zM1131 811h1v1h-1zM1245 396h2v1h-2zM1243 394h1v1h-1zM1239 399h1v1h-1zM1240 394h1v1h-1zM1239 395h1v2h-1zM1240 396h1v1h-1zM962 441h1v1h-1zM962 441h1v1h-1zM959 435h2v1h-2zM952 446h1v1h-1zM965 447h1v1h-1zM965 439h1v1h-1zM959 444h2v2h-2zM1077 641h1v1h-1zM1078 642h2v1h-2zM984 595h1v1h-1zM986 600h2v3h-2zM1373 510h1v1h-1zM1371 506h1v1h-1zM1370 507h2v1h-2zM1380 506h2v1h-2zM1375 508h1v1h-1zM1372 503h1v1h-1zM1374 505h3v2h-3zM1043 472h1v1h-1zM1052 475h1v1h-1zM1049 467h1v1h-1zM1221 334h1v1h-1zM1232 340h2v1h-2zM1067 874h1v1h-1zM1078 873h2v1h-2zM1082 869h1v1h-1zM1086 873h1v2h-1zM1074 874h1v1h-1zM1069 874h1v1h-1zM1075 872h1v1h-1zM1075 870h1v2h-1zM1077 871h1v2h-1zM1301 393h1v1h-1zM1298 394h1v2h-1zM1300 391h1v1h-1zM1301 391h1v1h-1zM1299 394h1v2h-1zM1299 392h1v1h-1zM1300 392h2v2h-2zM1296 391h1v1h-1zM1300 393h1v1h-1zM1300 390h1v2h-1zM1298 390h1v1h-1zM1297 391h1v1h-1zM1297 391h1v1h-1zM1297 391h1v1h-1zM1300 390h1v1h-1zM1269 625h1v1h-1zM1268 626h1v1h-1zM1270 627h1v1h-1zM1264 625h1v1h-1zM1270 622h1v2h-1zM1265 620h2v2h-2zM1099 892h2v1h-2zM1104 890h2v1h-2zM1106 891h1v1h-1zM1257 669h1v1h-1zM1256 660h1v1h-1zM1111 957h2v1h-2zM1190 759h1v2h-1zM1189 760h1v2h-1zM1188 765h1v1h-1zM1273 457h2v2h-2zM1119 442h2v1h-2zM1130 445h1v1h-1zM1127 442h1v1h-1zM1126 442h1v1h-1zM1125 446h1v1h-1zM1129 445h2v1h-2zM1125 441h1v1h-1zM1128 442h2v1h-2zM1124 444h1v1h-1zM1126 444h2v2h-2zM1128 445h1v1h-1zM1127 443h1v1h-1zM1126 446h1v1h-1zM1125 447h1v1h-1zM1122 445h1v1h-1zM1124 445h1v1h-1zM1125 446h1v1h-1zM1125 442h1v2h-1zM1125 445h1v1h-1zM1125 442h1v1h-1zM1129 444h2v1h-2zM1122 443h2v1h-2zM1125 441h1v1h-1zM1124 443h2v2h-2zM1125 443h1v1h-1zM1125 446h1v2h-1zM1084 335h1v1h-1zM1082 333h2v1h-2zM1242 555h2v1h-2zM1298 537h1v1h-1zM1298 535h1v1h-1zM1134 923h1v1h-1zM1046 411h1v1h-1zM1051 405h1v1h-1zM1055 416h1v2h-1zM1048 409h2v1h-2zM1053 413h1v1h-1zM1049 407h1v1h-1zM1052 405h2v1h-2zM1051 404h1v1h-1zM1048 407h1v1h-1zM1283 649h1v1h-1zM1368 570h1v2h-1zM1371 574h2v1h-2zM1271 651h1v2h-1zM1273 653h1v1h-1zM1274 659h1v1h-1zM1268 656h1v1h-1zM1016 471h1v2h-1zM1015 477h1v1h-1zM949 464h1v1h-1zM1184 959h1v1h-1zM1181 960h2v1h-2zM1184 961h1v1h-1zM1181 963h1v1h-1zM1341 726h2v1h-2zM1334 722h1v1h-1zM1343 721h1v1h-1zM1015 508h2v1h-2zM1014 508h2v1h-2zM934 711h1v1h-1zM935 713h2v1h-2zM933 714h2v1h-2zM929 711h1v1h-1zM935 713h1v1h-1zM936 711h1v1h-1zM931 711h1v1h-1zM929 709h1v1h-1zM935 714h1v1h-1zM1059 480h1v1h-1zM987 666h1v1h-1zM985 662h1v1h-1zM987 668h1v1h-1zM985 666h1v1h-1zM1507 591h1v1h-1zM1506 589h1v1h-1zM1508 583h1v1h-1zM1510 588h1v2h-1zM1502 585h1v1h-1zM1505 583h1v1h-1zM1206 829h1v1h-1zM1212 824h2v1h-2zM1210 822h1v1h-1zM1209 832h1v2h-1zM1229 511h1v1h-1zM1233 515h2v1h-2zM995 485h1v1h-1zM990 489h1v1h-1zM990 484h2v1h-2zM987 489h1v1h-1zM1178 771h1v1h-1zM1178 767h2v1h-2zM1599 530h1v1h-1zM1277 629h1v2h-1zM1321 671h1v2h-1zM1318 670h1v1h-1zM1317 670h1v1h-1zM1322 673h1v1h-1zM1318 671h1v1h-1zM1322 670h1v1h-1zM1256 571h1v2h-1zM1256 572h1v1h-1zM1254 572h1v2h-1zM1253 570h1v1h-1zM1252 568h1v1h-1zM1255 571h1v2h-1zM1168 778h1v1h-1zM1170 780h1v1h-1zM1163 786h1v1h-1zM1165 781h1v1h-1zM1042 502h1v1h-1zM1040 492h1v1h-1zM1041 495h2v1h-2zM1039 498h1v1h-1zM1040 498h1v1h-1zM1039 500h1v1h-1zM1099 367h1v1h-1zM1341 417h1v2h-1zM1339 421h1v1h-1zM1337 419h1v2h-1zM1340 416h2v1h-2zM1342 416h1v1h-1zM1338 419h1v1h-1zM1228 765h2v1h-2zM1229 772h1v1h-1zM1231 764h1v1h-1zM982 471h1v1h-1zM1378 537h1v1h-1zM1378 542h1v1h-1zM1381 534h1v1h-1zM1008 804h2v1h-2zM1096 798h2v2h-2zM1010 684h2v1h-2zM1002 681h1v1h-1zM1009 686h2v1h-2zM1006 682h2v1h-2zM1075 918h1v1h-1zM1073 918h1v1h-1zM1077 920h2v2h-2zM1072 916h1v1h-1zM1076 919h2v1h-2zM1074 918h2v1h-2zM994 480h1v2h-1zM994 477h2v1h-2zM1016 678h2v1h-2zM1016 676h1v1h-1zM1017 677h2v1h-2zM1015 679h2v1h-2zM1016 677h2v1h-2zM1015 678h2v1h-2zM1016 680h2v1h-2zM1015 677h2v1h-2zM1017 678h1v1h-1zM1017 680h1v1h-1zM1017 678h1v1h-1zM1017 680h2v1h-2zM1005 764h1v1h-1zM1000 755h1v1h-1zM1007 751h1v1h-1zM1254 668h1v1h-1zM1256 671h2v3h-2zM1101 859h1v2h-1zM1102 860h1v1h-1zM1102 858h2v1h-2zM1101 855h1v1h-1zM1102 853h1v1h-1zM1102 856h1v1h-1zM1101 858h1v1h-1zM1098 854h1v2h-1zM1097 854h1v1h-1zM956 627h1v1h-1zM956 630h1v1h-1zM959 633h1v1h-1zM958 632h1v1h-1zM953 625h1v1h-1zM958 634h1v1h-1zM1061 741h1v1h-1zM1068 740h2v2h-2zM1507 535h1v1h-1zM1505 532h2v1h-2zM1505 531h1v1h-1zM1507 534h1v1h-1zM1504 533h1v1h-1zM1505 533h1v1h-1zM1504 530h1v1h-1zM1507 531h1v1h-1zM1507 533h1v1h-1zM1205 835h1v1h-1zM1200 834h1v1h-1zM1205 836h1v1h-1zM1200 838h2v1h-2zM1200 832h1v2h-1zM1198 837h1v1h-1zM1199 834h3v2h-3zM1432 531h1v1h-1zM1435 533h1v1h-1zM1434 531h2v1h-2zM1430 533h2v1h-2zM1432 528h2v1h-2zM1435 531h1v1h-1zM1458 477h1v1h-1zM1458 482h1v1h-1zM1460 479h1v1h-1zM1184 533h1v1h-1zM1185 532h1v1h-1zM1277 684h1v1h-1zM1277 678h1v2h-1zM1277 678h1v1h-1zM1281 685h1v1h-1zM1275 678h2v1h-2zM1275 687h1v2h-1zM1074 510h1v1h-1zM1073 514h2v3h-2zM1392 515h1v1h-1zM1394 513h1v1h-1zM1394 513h1v1h-1zM1397 516h1v1h-1zM1392 512h1v1h-1zM1393 513h2v2h-2zM1395 507h1v1h-1zM1393 511h1v1h-1zM1393 515h1v2h-1zM1075 280h1v1h-1zM1078 285h1v2h-1zM1069 288h1v1h-1zM1075 287h1v1h-1zM1053 577h2v1h-2zM1034 445h1v1h-1zM1034 446h1v1h-1zM1039 448h1v1h-1zM1032 440h1v2h-1zM1032 440h1v1h-1zM1034 440h1v2h-1zM1032 441h1v2h-1zM1034 442h1v1h-1zM1033 439h1v1h-1zM1033 441h1v1h-1zM1034 443h1v2h-1zM1032 440h1v1h-1zM1034 441h2v1h-2zM1034 440h2v1h-2zM1033 439h1v1h-1zM1036 442h1v1h-1zM1032 440h1v2h-1zM1033 440h1v1h-1zM1035 440h1v1h-1zM1035 440h1v1h-1zM1073 500h1v1h-1zM1073 499h1v1h-1zM1331 592h2v1h-2zM1298 640h2v1h-2zM1300 641h1v1h-1zM1300 643h1v1h-1zM1300 638h1v1h-1zM1301 640h3v2h-3zM1345 746h1v1h-1zM1342 742h1v1h-1zM1527 506h1v2h-1zM1528 505h1v1h-1zM1521 508h1v1h-1zM1521 509h1v1h-1zM1523 511h1v1h-1zM1526 509h2v2h-2zM1347 623h1v1h-1zM1270 768h1v2h-1zM1258 771h1v2h-1zM1257 767h1v1h-1zM1261 766h1v1h-1zM1265 771h1v1h-1zM1263 773h1v1h-1zM1294 352h1v1h-1zM1298 354h2v1h-2zM1087 745h2v1h-2zM1086 753h1v1h-1zM1086 746h1v1h-1zM1112 952h1v1h-1zM1271 776h1v1h-1zM1294 441h1v1h-1zM1295 439h1v1h-1zM1088 482h2v2h-2zM1088 481h2v1h-2zM1089 481h1v1h-1zM1088 483h1v1h-1zM1089 482h1v2h-1zM1089 485h2v1h-2zM1295 763h2v1h-2zM1293 758h1v2h-1zM1289 754h1v1h-1zM936 701h1v1h-1zM1511 499h1v1h-1zM1511 500h1v1h-1zM1511 497h1v2h-1zM1510 496h1v1h-1zM1509 498h2v1h-2zM1508 499h2v1h-2zM1348 392h1v2h-1zM1354 382h1v1h-1zM1352 383h1v1h-1zM1019 513h1v1h-1zM1020 507h1v2h-1zM1020 502h1v1h-1zM1020 501h1v1h-1zM1094 883h1v1h-1zM1317 663h1v1h-1zM1315 666h1v1h-1zM1308 665h1v1h-1zM1314 662h2v3h-2zM1386 600h2v1h-2zM1380 597h1v2h-1zM1380 594h1v1h-1zM1096 893h1v2h-1zM1100 883h1v1h-1zM940 772h1v1h-1zM938 777h2v2h-2zM929 773h1v1h-1zM1061 521h2v2h-2zM1062 523h1v1h-1zM1059 524h1v2h-1zM1074 472h1v1h-1zM1072 480h1v1h-1zM1076 469h1v2h-1zM1070 469h1v1h-1zM1077 479h1v1h-1zM1072 471h1v1h-1zM1072 472h1v2h-1zM1073 473h1v1h-1zM1075 472h1v1h-1zM1349 574h1v1h-1zM1343 577h1v1h-1zM1346 574h1v1h-1zM1214 430h2v1h-2zM1212 429h1v1h-1zM1210 429h1v1h-1zM909 689h1v1h-1zM1063 703h2v1h-2zM1012 657h2v1h-2zM1007 663h1v1h-1zM1019 661h2v2h-2zM1012 665h1v1h-1zM1011 658h1v1h-1zM1014 660h1v2h-1zM1019 662h1v1h-1zM1019 663h1v1h-1zM1008 665h2v1h-2zM1273 420h2v1h-2zM1269 417h1v1h-1zM1271 427h1v1h-1zM1565 554h1v1h-1zM1562 550h1v1h-1zM1561 552h1v1h-1zM1559 550h2v1h-2zM1319 505h2v1h-2zM1316 495h2v1h-2zM1087 622h1v1h-1zM1087 621h1v1h-1zM1087 620h2v2h-2zM1088 621h3v2h-3zM1438 480h2v1h-2zM1439 478h2v1h-2zM1439 478h1v1h-1zM1435 479h1v1h-1zM1085 439h1v1h-1zM1080 439h1v2h-1zM1077 438h1v1h-1zM1083 439h1v1h-1zM1076 432h1v2h-1zM1076 432h1v1h-1zM1057 853h1v1h-1zM1058 849h2v1h-2zM1057 852h1v1h-1zM1144 849h1v1h-1zM1143 847h1v1h-1zM1137 848h1v1h-1zM1151 851h1v1h-1zM1138 850h1v2h-1zM1137 848h1v1h-1zM1441 468h1v1h-1zM1114 454h1v1h-1zM1341 664h1v1h-1zM936 460h1v1h-1zM936 462h1v1h-1zM944 461h2v1h-2zM944 460h2v1h-2zM941 464h2v1h-2zM943 465h1v2h-1zM1055 534h1v1h-1zM1057 536h1v1h-1zM1056 534h1v2h-1zM1163 858h1v1h-1zM1273 357h2v1h-2zM1270 359h2v1h-2zM1275 362h2v1h-2zM1272 357h1v1h-1zM1272 365h1v1h-1zM1269 365h1v2h-1zM1538 489h1v2h-1zM1187 367h1v1h-1zM1209 747h1v1h-1zM1210 751h1v2h-1zM1212 745h2v1h-2zM1214 746h1v1h-1zM1211 751h1v2h-1zM1211 747h2v1h-2zM1210 748h1v1h-1zM1212 748h1v1h-1zM1213 748h1v1h-1zM1212 748h3v2h-3zM1301 689h2v2h-2zM1301 692h1v2h-1zM1305 690h1v1h-1zM1299 693h1v1h-1zM1304 691h1v1h-1zM1303 690h1v1h-1zM1305 691h1v1h-1zM1303 687h1v1h-1zM1304 690h1v1h-1zM1093 580h1v1h-1zM1094 585h1v1h-1zM1364 637h1v1h-1zM1362 639h1v2h-1zM1365 638h2v1h-2zM1367 639h1v2h-1zM1365 639h2v1h-2zM1367 638h1v1h-1zM931 700h1v1h-1zM932 693h1v1h-1zM927 694h1v1h-1zM930 690h1v2h-1zM930 695h1v1h-1zM930 695h1v1h-1zM929 699h1v1h-1zM925 688h1v2h-1zM928 690h1v1h-1zM1259 675h1v1h-1zM1256 670h1v1h-1zM1258 673h1v1h-1zM1253 341h1v1h-1zM1182 766h2v2h-2zM1180 762h2v1h-2zM1183 765h1v1h-1zM1183 759h1v1h-1zM1181 765h1v1h-1zM1180 760h1v2h-1zM909 682h1v1h-1zM1073 744h2v1h-2zM1073 741h1v1h-1zM1074 745h1v2h-1zM1072 745h1v1h-1zM1080 741h1v1h-1zM1073 744h2v2h-2zM1074 743h2v1h-2zM1073 741h1v1h-1zM1070 737h1v1h-1zM1096 936h2v2h-2zM1092 937h1v2h-1zM1095 938h1v1h-1zM1096 941h1v1h-1zM1095 943h1v2h-1zM1094 941h1v1h-1zM1094 941h2v2h-2zM1093 940h2v2h-2zM1094 937h1v1h-1zM1238 418h1v1h-1zM1217 491h1v1h-1zM1214 490h1v1h-1zM1218 491h1v1h-1zM1218 490h1v1h-1zM1217 489h1v1h-1zM1216 490h1v1h-1zM1214 490h1v1h-1zM1218 486h1v1h-1zM1220 491h1v1h-1zM1214 490h2v1h-2zM1215 487h1v1h-1zM1216 490h1v1h-1zM1220 489h2v1h-2zM1216 489h2v1h-2zM1214 488h1v1h-1zM1220 488h1v2h-1zM1216 489h1v1h-1zM1218 489h1v1h-1zM1218 489h1v2h-1zM1219 491h2v1h-2zM1216 489h1v1h-1zM1215 487h1v1h-1zM1218 491h1v1h-1zM1403 560h1v1h-1zM1228 637h2v2h-2zM1230 638h1v1h-1zM1106 703h2v1h-2zM1102 699h1v1h-1zM1104 703h1v1h-1zM1461 514h2v1h-2zM1460 515h1v2h-1zM1459 513h1v1h-1zM1459 515h1v1h-1zM1459 516h3v2h-3zM1168 451h1v2h-1zM1159 446h1v2h-1zM1159 451h1v1h-1zM1159 445h1v1h-1zM1152 449h1v1h-1zM1152 445h1v1h-1zM1492 509h2v1h-2zM1275 634h1v1h-1zM1273 634h1v1h-1zM1455 560h1v1h-1zM1453 558h1v1h-1zM1454 560h1v1h-1zM1457 559h1v2h-1zM1452 558h1v1h-1zM1456 561h1v1h-1zM1456 560h2v1h-2zM1455 558h1v1h-1zM1454 561h2v2h-2zM1316 782h1v2h-1zM1318 784h1v1h-1zM1316 785h1v1h-1zM1317 782h1v1h-1zM1210 510h1v1h-1zM1210 504h2v1h-2zM1206 508h1v1h-1zM1212 512h1v1h-1zM1209 509h2v1h-2zM1212 501h1v1h-1zM918 702h1v1h-1zM918 699h1v1h-1zM918 701h1v2h-1zM913 698h1v2h-1zM918 699h1v1h-1zM917 695h1v1h-1zM1146 312h1v1h-1zM1046 542h1v1h-1zM1050 541h1v1h-1zM1048 531h1v2h-1zM1053 538h1v1h-1zM1063 540h2v1h-2zM1050 535h1v1h-1zM1057 538h1v1h-1zM1053 532h1v2h-1zM1047 532h1v1h-1zM1023 638h1v2h-1zM1025 638h1v1h-1zM1024 639h1v1h-1zM1026 638h1v2h-1zM1210 398h1v1h-1zM1209 403h1v1h-1zM1204 404h1v1h-1zM1208 403h1v1h-1zM1198 413h1v2h-1zM1209 404h1v1h-1zM1144 419h2v2h-2zM1143 422h1v1h-1zM1137 425h2v1h-2zM1143 419h2v1h-2zM1138 418h1v1h-1zM1144 423h1v1h-1zM1191 374h1v1h-1zM1024 824h1v1h-1zM1535 502h1v1h-1zM1535 509h1v1h-1zM1108 898h1v1h-1zM1222 841h1v1h-1zM1300 337h1v1h-1zM1297 341h1v1h-1zM1298 337h1v2h-1zM1492 495h2v1h-2zM1168 783h1v1h-1zM1165 783h1v1h-1zM1167 780h1v1h-1zM1169 782h1v1h-1zM1164 782h1v1h-1zM1164 780h1v1h-1zM1166 787h1v1h-1zM1164 784h2v1h-2zM1163 785h1v1h-1zM1565 546h2v1h-2zM1562 549h2v2h-2zM1565 547h1v1h-1zM1563 548h1v1h-1zM901 607h1v2h-1zM1171 766h2v1h-2zM1169 766h1v1h-1zM1170 769h1v1h-1zM917 448h1v1h-1zM1159 780h2v2h-2zM1160 776h1v1h-1zM1163 774h1v1h-1zM1164 777h1v1h-1zM1162 776h1v1h-1zM1162 778h1v1h-1zM1165 777h1v1h-1zM1165 776h1v1h-1zM1163 774h2v2h-2zM1162 774h2v1h-2zM1163 778h1v1h-1zM1164 776h1v1h-1zM1161 775h1v1h-1zM1165 776h1v1h-1zM1162 776h1v1h-1zM1578 519h1v1h-1zM1578 515h1v1h-1zM1574 520h1v2h-1zM895 646h1v1h-1zM891 650h1v1h-1zM898 648h1v1h-1zM894 646h2v2h-2zM1059 522h1v1h-1zM1061 523h1v1h-1zM1062 518h1v1h-1zM1064 524h2v1h-2zM1048 521h1v2h-1zM1063 520h1v2h-1zM1065 521h1v1h-1zM1066 517h1v1h-1zM1060 517h1v2h-1zM1060 519h3v3h-3zM1045 708h2v1h-2zM1047 702h1v1h-1zM1045 711h1v1h-1zM1519 559h2v1h-2zM1522 559h1v2h-1zM1523 559h1v1h-1zM1543 503h1v1h-1zM1545 506h1v2h-1zM1172 847h1v1h-1zM1176 845h1v1h-1zM1171 847h1v1h-1zM1173 848h1v1h-1zM1176 846h2v1h-2zM1173 847h1v1h-1zM1169 846h1v2h-1zM1175 849h1v1h-1zM1172 851h1v1h-1zM1390 517h1v1h-1zM1362 649h1v1h-1zM1365 649h1v2h-1zM1365 652h1v1h-1zM1363 650h3v3h-3zM1462 512h1v1h-1zM1464 512h2v1h-2zM1461 511h1v2h-1zM1460 506h1v2h-1zM1078 740h1v1h-1zM1077 744h1v2h-1zM1076 741h1v1h-1zM1078 737h2v1h-2zM1074 739h1v1h-1zM1077 741h2v1h-2zM1079 740h1v2h-1zM1077 737h1v1h-1zM1074 741h1v1h-1zM1172 750h1v2h-1zM1138 592h1v1h-1zM1134 595h1v1h-1zM1133 598h1v1h-1zM1114 421h1v2h-1zM1109 419h1v1h-1zM1113 426h1v1h-1zM1113 422h1v1h-1zM1113 424h2v2h-2zM1023 449h1v2h-1zM958 714h1v1h-1zM960 713h1v1h-1zM959 715h1v1h-1zM960 717h1v2h-1zM957 714h1v1h-1zM958 718h2v1h-2zM1293 331h1v1h-1zM1302 334h1v2h-1zM1291 326h1v1h-1zM1300 332h2v2h-2zM1291 334h1v1h-1zM1295 331h2v2h-2zM1292 332h1v1h-1zM1299 323h1v1h-1zM1293 332h2v1h-2zM1302 384h1v1h-1zM1304 375h1v1h-1zM1300 376h1v1h-1zM1304 382h2v1h-2zM1299 382h2v1h-2zM1304 380h1v1h-1zM1036 716h1v1h-1zM1035 714h1v1h-1zM1034 714h1v1h-1zM1032 713h2v1h-2zM1031 720h1v1h-1zM1034 715h1v1h-1zM957 670h1v1h-1zM1373 669h1v2h-1zM1367 674h2v1h-2zM1372 671h1v1h-1zM1368 667h1v1h-1zM1369 663h1v1h-1zM1365 670h1v1h-1zM1370 669h4v2h-4zM990 468h1v1h-1zM986 481h1v1h-1zM987 471h1v1h-1zM983 476h1v1h-1zM986 477h1v1h-1zM987 474h1v1h-1zM985 478h1v1h-1zM988 475h2v1h-2zM988 476h1v1h-1zM1027 665h1v1h-1zM1030 665h2v2h-2zM1027 660h1v1h-1zM1026 664h1v1h-1zM1057 708h1v2h-1zM1062 702h1v1h-1zM1298 740h1v2h-1zM1297 735h1v1h-1zM1296 741h2v2h-2zM1049 511h1v1h-1zM1047 511h1v2h-1zM1047 511h1v1h-1zM1270 772h1v1h-1zM1267 778h1v1h-1zM1269 777h1v1h-1zM1268 779h1v1h-1zM1271 777h2v1h-2zM1268 779h1v1h-1zM1268 779h1v1h-1zM1267 776h1v1h-1zM1268 778h1v1h-1zM1269 776h1v1h-1zM1268 779h1v1h-1zM1374 491h2v1h-2zM1375 495h1v1h-1zM1407 550h1v2h-1zM1084 451h1v1h-1zM1084 453h2v1h-2zM1086 454h1v1h-1zM1485 515h1v1h-1zM1485 515h1v1h-1zM1490 510h1v2h-1zM1485 513h3v3h-3zM1237 420h1v1h-1zM1231 419h1v1h-1zM1234 416h1v2h-1zM1235 417h1v1h-1zM1233 418h1v1h-1zM1234 416h1v1h-1zM1266 757h1v2h-1zM1265 758h1v1h-1zM1265 755h1v1h-1zM1266 761h1v1h-1zM1262 761h1v2h-1zM1264 761h1v1h-1zM1260 752h2v1h-2zM1265 761h1v1h-1zM1262 758h1v1h-1zM1129 760h1v1h-1zM1126 758h2v1h-2zM1128 759h1v1h-1zM999 517h1v1h-1zM995 520h1v1h-1zM1000 518h1v2h-1zM998 520h1v2h-1zM1053 770h1v1h-1zM1055 766h1v1h-1zM1269 474h2v2h-2zM1020 752h1v1h-1zM1021 751h2v1h-2zM1231 479h1v2h-1zM1230 477h1v2h-1zM1231 478h1v1h-1zM1231 479h1v1h-1zM1228 477h1v1h-1zM1230 478h1v1h-1zM1273 630h1v1h-1zM1271 632h1v1h-1zM1271 635h1v1h-1zM1269 632h1v2h-1zM1548 573h1v1h-1zM1216 377h1v1h-1zM1351 464h1v2h-1zM1532 570h1v2h-1zM1532 572h1v1h-1zM1529 570h1v1h-1zM1529 574h1v1h-1zM1532 566h2v1h-2zM1529 572h2v1h-2zM1531 570h1v1h-1zM1533 568h2v1h-2zM1529 568h1v1h-1zM1531 570h4v2h-4zM1218 829h1v1h-1zM1220 831h2v1h-2zM1216 830h1v1h-1zM1213 832h2v1h-2zM1218 832h1v1h-1zM1217 832h1v1h-1zM1217 833h2v1h-2zM1216 832h1v1h-1zM1215 830h1v1h-1zM1265 659h1v1h-1zM1027 440h1v1h-1zM1032 444h1v1h-1zM1029 451h1v2h-1zM1030 443h1v1h-1zM1027 448h1v1h-1zM1024 447h1v1h-1zM1034 450h1v1h-1zM1020 448h1v1h-1zM1027 439h1v1h-1zM1284 322h1v1h-1zM1101 809h2v1h-2zM1096 809h1v1h-1zM1067 308h1v1h-1zM1067 308h3v2h-3zM1105 744h2v1h-2zM1024 539h1v1h-1zM1027 540h1v1h-1zM1026 539h1v1h-1zM1026 540h4v3h-4zM1090 811h1v1h-1zM1081 816h1v1h-1zM1084 813h1v1h-1zM1082 813h1v2h-1zM1081 809h1v1h-1zM1088 809h1v1h-1zM1084 810h1v2h-1zM1083 816h2v2h-2zM1084 811h1v2h-1zM1077 550h1v1h-1zM1071 549h2v1h-2zM1074 550h1v1h-1zM1072 550h1v2h-1zM1150 440h1v1h-1zM1148 449h1v1h-1zM1143 443h1v1h-1zM1148 449h1v1h-1zM1150 449h1v1h-1zM1149 448h1v1h-1zM1148 445h1v1h-1zM1149 449h1v1h-1zM1150 447h2v1h-2zM1148 446h2v1h-2zM1149 447h1v2h-1zM1149 447h2v2h-2zM1148 450h1v1h-1zM1148 449h1v1h-1zM1147 446h1v1h-1zM1417 540h1v1h-1zM1412 540h1v1h-1zM1413 542h2v1h-2zM1357 551h1v2h-1zM1355 552h1v1h-1zM1359 545h1v1h-1zM1359 550h1v1h-1zM1125 813h1v1h-1zM1132 807h1v1h-1zM1130 811h1v1h-1zM1128 813h1v1h-1zM1129 810h1v1h-1zM1122 812h1v1h-1zM1228 503h1v1h-1zM1227 497h2v1h-2zM1229 502h1v1h-1zM1222 509h1v1h-1zM1225 503h1v1h-1zM1228 505h1v1h-1zM1218 503h1v1h-1zM1227 506h2v2h-2zM1226 506h1v2h-1zM1126 925h1v1h-1zM1522 553h2v1h-2zM1523 552h2v2h-2zM1521 550h1v2h-1zM1516 547h1v1h-1zM1526 553h1v1h-1zM1521 549h1v1h-1zM1124 454h1v1h-1zM1126 458h1v1h-1zM1193 444h1v1h-1zM1195 444h1v1h-1zM1200 448h1v2h-1zM1259 342h2v1h-2zM1259 346h1v1h-1zM1264 343h1v2h-1zM1263 342h1v1h-1zM1096 430h1v1h-1zM1095 433h2v2h-2zM988 452h2v1h-2zM988 458h1v1h-1zM986 455h1v2h-1zM980 459h1v2h-1zM984 458h2v1h-2zM991 454h1v1h-1zM1146 752h1v1h-1zM1340 731h1v1h-1zM1337 730h1v1h-1zM1282 480h1v2h-1zM1281 485h1v1h-1zM1283 482h2v1h-2zM1283 481h1v1h-1zM1283 486h1v2h-1zM1281 477h2v2h-2zM1287 723h2v1h-2zM1287 726h1v2h-1zM1116 962h1v1h-1zM1114 961h1v1h-1zM1112 959h1v1h-1zM1117 961h2v1h-2zM1242 330h1v1h-1zM1246 328h1v1h-1zM1246 327h1v1h-1zM1246 329h1v1h-1zM1246 331h1v2h-1zM1244 329h1v1h-1zM1443 492h1v1h-1zM1360 427h1v1h-1zM1516 508h1v2h-1zM1342 415h1v2h-1zM1341 414h1v2h-1zM1495 480h1v2h-1zM1493 472h1v1h-1zM1496 475h1v2h-1zM1491 478h1v1h-1zM1496 480h2v2h-2zM1494 471h1v1h-1zM1010 637h1v1h-1zM1013 639h1v1h-1zM1011 638h1v2h-1zM1011 636h1v2h-1zM1013 637h2v1h-2zM1015 637h2v1h-2zM1127 736h2v1h-2zM1130 736h2v2h-2zM1130 738h1v1h-1zM1129 734h2v2h-2zM1367 454h1v1h-1zM1369 456h1v1h-1zM1370 455h1v1h-1zM1369 456h2v1h-2zM1369 455h1v2h-1zM1372 459h1v1h-1zM1556 472h1v1h-1zM1546 474h1v2h-1zM1548 482h2v2h-2zM1555 473h1v2h-1zM1548 481h2v1h-2zM1549 473h1v1h-1zM1549 477h2v1h-2zM1549 477h1v1h-1zM1556 480h1v1h-1zM1550 476h4v3h-4zM1288 794h1v1h-1zM1358 380h1v1h-1zM1359 378h3v3h-3zM1051 478h1v1h-1zM1049 477h2v1h-2zM1052 475h1v1h-1zM1050 480h1v1h-1zM911 706h1v1h-1zM907 706h1v2h-1zM1258 827h1v1h-1zM1065 342h1v1h-1zM1558 471h1v2h-1zM1558 476h1v1h-1zM1408 572h1v1h-1zM1406 580h1v1h-1zM1128 943h1v1h-1zM1084 874h1v1h-1zM1089 865h1v1h-1zM1084 869h1v1h-1zM1083 872h1v2h-1zM1081 869h1v1h-1zM1084 872h1v1h-1zM1088 865h1v1h-1zM1083 865h1v1h-1zM1084 866h1v2h-1zM1043 453h1v1h-1zM1040 453h1v1h-1zM1041 455h2v1h-2zM1037 453h1v1h-1zM1039 489h1v1h-1zM1042 493h1v2h-1zM1039 491h2v1h-2zM1293 714h1v1h-1zM1134 795h2v1h-2zM1127 734h1v1h-1zM1131 731h1v1h-1zM1130 736h1v1h-1zM1128 732h1v1h-1zM1129 731h2v1h-2zM1127 736h1v2h-1zM1129 733h1v1h-1zM1130 733h2v1h-2zM1127 732h1v1h-1zM1504 491h1v1h-1zM1511 502h2v1h-2zM1505 494h1v1h-1zM1503 496h2v2h-2zM1473 538h1v1h-1zM1471 539h1v1h-1zM1233 387h1v2h-1zM1231 387h2v1h-2zM1198 737h1v1h-1zM1192 741h1v1h-1zM1191 738h1v1h-1zM1191 739h1v2h-1zM1190 739h2v1h-2zM1194 738h1v1h-1zM1192 738h1v1h-1zM1191 738h1v1h-1zM1193 739h2v1h-2zM1191 739h1v1h-1zM1190 739h2v1h-2zM1340 610h1v2h-1zM1033 650h1v1h-1zM1034 653h1v1h-1zM1036 651h1v1h-1zM1038 650h1v1h-1zM1035 650h1v1h-1zM1039 649h1v1h-1zM1529 576h1v1h-1zM1532 573h1v2h-1zM1255 505h1v2h-1zM1254 506h1v1h-1zM1102 371h1v1h-1zM1192 803h1v1h-1zM1196 800h1v1h-1zM1194 802h2v1h-2zM1193 804h2v1h-2zM1192 803h1v1h-1zM1195 802h1v2h-1zM1194 802h1v2h-1zM1192 803h1v1h-1zM1194 804h2v1h-2zM1357 560h2v1h-2zM1356 555h2v2h-2zM1350 561h2v1h-2zM1360 557h1v1h-1zM1354 562h1v1h-1zM1363 557h1v1h-1zM1353 561h1v1h-1zM1366 560h1v1h-1zM1358 559h1v1h-1zM1356 560h4v2h-4zM1275 640h2v1h-2zM1129 437h1v1h-1zM1008 664h2v1h-2zM1005 658h1v2h-1zM1004 661h1v1h-1zM1006 668h2v1h-2zM1066 469h1v2h-1zM1013 458h1v2h-1zM1102 584h1v2h-1zM1097 945h1v2h-1zM1307 731h1v1h-1zM1303 737h1v1h-1zM1305 741h1v1h-1zM1299 733h2v1h-2zM1297 735h1v1h-1zM1298 733h1v1h-1zM1298 749h1v1h-1zM1300 736h1v1h-1zM1300 734h1v2h-1zM1235 606h1v1h-1zM1235 607h1v1h-1zM1452 555h1v1h-1zM1450 561h1v1h-1zM1453 559h1v2h-1zM1450 561h3v2h-3zM1087 862h1v1h-1zM1416 520h1v1h-1zM1410 521h1v1h-1zM1416 521h1v1h-1zM1418 517h1v2h-1zM1411 522h2v1h-2zM1416 522h2v2h-2zM949 688h1v1h-1zM946 684h1v1h-1zM943 694h1v1h-1zM949 688h1v1h-1zM1399 497h2v2h-2zM1399 502h1v1h-1zM1399 500h3v3h-3zM1549 572h1v1h-1zM1561 572h1v2h-1zM1555 570h2v1h-2zM1558 574h1v1h-1zM1556 572h1v1h-1zM1556 574h1v1h-1zM1559 571h2v1h-2zM1559 572h2v1h-2zM1557 572h1v1h-1zM1556 573h1v1h-1zM1555 572h1v1h-1zM1048 543h1v1h-1zM1052 566h1v2h-1zM1050 566h1v2h-1zM1050 567h2v1h-2zM1047 569h1v1h-1zM1263 622h1v1h-1zM1267 631h1v2h-1zM1263 623h2v1h-2zM1262 627h1v1h-1zM1228 400h1v1h-1zM1025 868h1v1h-1zM1317 462h2v1h-2zM1314 460h2v1h-2zM1318 459h1v1h-1zM1316 460h1v1h-1zM1320 461h1v1h-1zM1316 460h2v1h-2zM1264 639h1v1h-1zM1256 634h1v1h-1zM1257 637h2v1h-2zM1048 458h1v1h-1zM1053 455h1v1h-1zM1048 455h2v1h-2zM1052 452h1v1h-1zM1050 459h1v1h-1zM1048 451h2v1h-2zM1297 745h1v1h-1zM1280 402h1v2h-1zM1280 400h2v1h-2zM1282 401h2v1h-2zM1280 401h2v2h-2zM1285 748h1v1h-1zM1123 483h2v1h-2zM1125 487h1v1h-1zM1121 489h2v1h-2zM1121 479h1v1h-1zM1122 486h3v3h-3zM1317 720h2v1h-2zM1315 722h2v1h-2zM1316 715h1v1h-1zM1316 719h1v1h-1zM1314 717h1v1h-1zM1318 722h2v1h-2zM1063 704h1v2h-1zM1064 707h3v2h-3zM1373 521h1v1h-1zM1376 517h1v1h-1zM1377 524h1v1h-1zM1375 512h1v1h-1zM1340 652h1v1h-1zM1345 644h2v1h-2zM1349 654h1v1h-1zM1054 508h1v1h-1zM1053 513h2v1h-2zM1049 512h1v1h-1zM1116 501h1v1h-1zM1118 493h2v2h-2zM1189 411h2v1h-2zM1192 409h2v1h-2zM1272 686h2v1h-2zM1267 695h1v2h-1zM1264 697h1v1h-1zM1264 690h2v1h-2zM1131 964h1v1h-1zM1127 964h1v2h-1zM1524 486h1v2h-1zM1524 483h1v1h-1zM1523 487h1v1h-1zM1523 486h1v1h-1zM1524 486h1v1h-1zM1523 485h1v1h-1zM1526 487h1v2h-1zM1526 488h1v2h-1zM1525 486h1v1h-1zM1524 488h1v1h-1zM1522 485h1v1h-1zM1525 484h1v2h-1zM1524 486h1v1h-1zM1522 547h2v1h-2zM1026 681h1v1h-1zM1024 680h1v1h-1zM1024 683h2v2h-2zM1025 681h1v1h-1zM1424 503h1v2h-1zM1416 513h2v1h-2zM1420 518h2v1h-2zM1416 518h2v1h-2zM1352 456h1v2h-1zM1358 449h1v1h-1zM1352 457h1v1h-1zM931 839h2v2h-2zM1438 491h1v1h-1zM1438 490h1v1h-1zM1437 494h1v1h-1zM1435 487h1v2h-1zM1432 490h1v1h-1zM1432 488h1v1h-1zM1438 489h2v1h-2zM1434 490h1v2h-1zM1440 485h1v1h-1zM1385 555h1v1h-1zM1384 559h1v1h-1zM1385 557h1v1h-1zM966 708h1v1h-1zM966 705h1v1h-1zM965 709h1v1h-1zM1185 441h2v1h-2zM1188 443h1v1h-1zM1187 441h2v2h-2zM1188 443h1v1h-1zM1186 442h1v2h-1zM1187 443h1v2h-1zM1186 442h2v3h-2zM955 687h1v1h-1zM959 685h1v1h-1zM956 689h2v2h-2zM958 691h2v2h-2zM961 682h1v1h-1zM958 689h1v2h-1zM1308 758h2v1h-2zM1308 756h1v1h-1zM1305 755h1v1h-1zM1308 758h1v1h-1zM1312 748h1v2h-1zM1309 758h1v1h-1zM1310 746h2v1h-2zM1309 758h2v1h-2zM1307 753h1v1h-1zM1064 894h1v1h-1zM1069 900h1v2h-1zM1062 904h1v1h-1zM1070 898h1v1h-1zM1067 896h2v1h-2zM1067 900h1v1h-1zM1069 900h2v1h-2zM1065 899h1v1h-1zM1067 896h1v1h-1zM1063 899h1v1h-1zM1070 897h1v2h-1zM1068 897h1v1h-1zM1066 897h2v1h-2zM1065 899h1v1h-1zM1068 896h1v1h-1zM1065 901h1v1h-1zM1065 897h1v1h-1zM1067 900h1v1h-1zM1066 897h1v1h-1zM1065 900h1v1h-1zM1067 897h1v1h-1zM1064 896h2v1h-2zM1065 896h1v1h-1zM1066 898h2v1h-2zM1064 898h1v2h-1zM1069 898h1v1h-1zM1069 901h2v1h-2zM1068 900h1v1h-1zM1373 470h1v1h-1zM1367 467h1v1h-1zM1373 462h1v1h-1zM926 532h1v2h-1zM1339 397h1v1h-1zM1341 399h2v1h-2zM1340 398h2v1h-2zM1121 962h2v1h-2zM1120 962h1v2h-1zM1093 453h1v1h-1zM1069 432h1v1h-1zM1063 436h1v1h-1zM1068 439h1v2h-1zM1069 440h1v1h-1zM1070 438h1v2h-1zM1068 437h1v2h-1zM1071 439h2v1h-2zM1069 437h1v2h-1zM1071 438h2v2h-2zM1070 440h1v1h-1zM1068 439h1v1h-1zM1069 440h1v1h-1zM1068 437h1v1h-1zM1068 440h1v1h-1zM1071 437h1v1h-1zM1114 871h1v1h-1zM1111 730h2v1h-2zM1120 732h2v1h-2zM1114 725h1v2h-1zM1116 732h1v1h-1zM1204 773h1v1h-1zM1208 778h1v1h-1zM1272 774h1v1h-1zM1275 780h1v1h-1zM1280 776h1v1h-1zM1270 785h1v1h-1zM1272 781h1v2h-1zM1277 777h2v2h-2zM1277 778h1v1h-1zM1279 781h1v1h-1zM1277 774h1v1h-1zM1287 714h1v1h-1zM1286 712h2v1h-2zM1289 713h1v1h-1zM1289 713h1v1h-1zM1287 709h2v1h-2zM1290 717h1v1h-1zM1073 743h1v1h-1zM1295 542h2v1h-2zM1028 545h1v2h-1zM1170 752h1v1h-1zM1172 750h1v1h-1zM1176 755h1v1h-1zM1168 757h1v1h-1zM1173 753h1v2h-1zM1180 759h1v1h-1zM1169 753h1v1h-1zM1174 754h1v1h-1zM1173 753h1v1h-1zM1527 555h1v2h-1zM1525 562h1v1h-1zM1291 927h1v1h-1zM1296 926h1v1h-1zM1292 926h1v1h-1zM1369 587h1v1h-1zM1373 589h2v1h-2zM1369 589h1v1h-1zM1370 586h1v1h-1zM1373 586h1v2h-1zM1375 589h1v1h-1zM1368 591h1v1h-1zM1377 594h1v1h-1zM1376 596h1v1h-1zM1235 423h1v1h-1zM1237 418h2v1h-2zM1227 421h1v1h-1zM1226 424h1v2h-1zM1231 429h1v1h-1zM1234 429h2v1h-2zM1286 699h1v2h-1zM1289 700h1v1h-1zM1293 698h2v1h-2zM1295 698h1v2h-1zM1287 700h1v1h-1zM1290 697h1v2h-1zM1238 467h1v1h-1zM1232 468h1v1h-1zM1236 468h1v1h-1zM1241 468h1v1h-1zM1237 471h1v2h-1zM1234 475h2v1h-2zM1233 469h1v2h-1zM1238 470h1v1h-1zM1241 467h2v1h-2zM1277 667h1v2h-1zM1272 673h1v1h-1zM1563 550h1v1h-1zM1572 549h1v1h-1zM1568 551h1v1h-1zM1569 557h1v1h-1zM1572 551h1v1h-1zM1563 551h2v1h-2zM1567 547h2v1h-2zM1572 549h1v1h-1zM1560 550h1v1h-1zM1015 612h1v1h-1zM1010 617h1v1h-1zM1017 614h1v1h-1zM1011 617h2v1h-2zM1010 619h1v1h-1zM1017 614h2v1h-2zM1013 420h1v2h-1zM1011 421h1v1h-1zM1042 550h1v2h-1zM1037 550h1v1h-1zM1561 540h1v2h-1zM1560 540h1v1h-1zM1564 541h1v1h-1zM1559 539h1v1h-1zM1533 474h2v1h-2zM1533 473h1v1h-1zM1533 471h1v1h-1zM1533 473h1v2h-1zM1394 427h1v1h-1zM1389 429h1v1h-1zM1392 433h1v2h-1zM1116 826h1v2h-1zM1119 828h1v2h-1zM1269 431h1v1h-1zM1339 456h1v1h-1zM1340 457h1v2h-1zM1344 454h1v1h-1zM1336 457h2v1h-2zM1335 459h1v1h-1zM1341 455h1v1h-1zM1346 450h1v2h-1zM1336 459h1v1h-1zM1338 455h1v1h-1zM1277 695h1v1h-1zM1281 688h1v1h-1zM1279 697h1v2h-1zM1278 696h1v1h-1zM1277 692h1v1h-1zM1278 694h1v1h-1zM1002 665h2v1h-2zM1006 667h1v1h-1zM1001 667h1v1h-1zM1005 667h1v2h-1zM1137 949h1v1h-1zM1135 947h1v1h-1zM1137 950h1v1h-1zM1135 948h1v1h-1zM1533 487h1v1h-1zM1533 486h3v3h-3zM1249 418h1v1h-1zM1261 416h2v1h-2zM1256 421h1v2h-1zM980 634h2v1h-2zM984 635h1v1h-1zM986 634h1v1h-1zM985 633h1v1h-1zM984 637h1v1h-1zM986 633h1v1h-1zM985 634h2v1h-2zM985 637h1v1h-1zM985 633h1v1h-1zM1324 457h2v1h-2zM1318 454h2v1h-2zM1316 455h2v2h-2zM1321 454h1v1h-1zM1337 751h1v1h-1zM1334 754h1v1h-1zM1341 762h1v1h-1zM1060 863h1v2h-1zM1061 860h1v1h-1zM1067 860h1v1h-1zM1068 868h1v1h-1zM1064 865h1v1h-1zM1064 857h1v1h-1zM1063 858h1v2h-1zM1064 865h1v1h-1zM1057 864h1v1h-1zM1339 603h2v2h-2zM1338 603h1v1h-1zM1341 602h1v1h-1zM1344 605h1v1h-1zM1342 606h1v1h-1zM1342 605h1v1h-1zM1021 454h1v1h-1zM1016 456h2v1h-2zM1015 457h1v1h-1zM1048 458h1v2h-1zM1049 459h1v2h-1zM1015 670h1v1h-1zM1018 666h2v1h-2zM1018 668h1v2h-1zM1016 667h1v1h-1zM1016 664h1v1h-1zM1019 670h1v1h-1zM1170 733h1v2h-1zM1164 734h1v1h-1zM1165 728h1v2h-1zM1168 737h1v2h-1zM1298 627h2v1h-2zM1304 629h1v1h-1zM1303 624h1v1h-1zM1235 462h1v1h-1zM1240 459h1v1h-1zM1238 465h1v1h-1zM979 725h2v1h-2zM974 717h1v1h-1zM983 724h2v1h-2zM975 722h1v2h-1zM979 720h1v1h-1zM977 718h2v1h-2zM981 720h2v2h-2zM978 723h1v1h-1zM985 718h1v1h-1zM1539 514h2v1h-2zM1540 519h2v1h-2zM1537 515h1v1h-1zM1538 516h1v1h-1zM1537 517h2v1h-2zM1542 516h1v1h-1zM1016 738h2v2h-2zM1119 457h1v1h-1zM1119 458h2v3h-2zM1062 665h1v1h-1zM1065 664h2v1h-2zM1348 609h1v1h-1zM1349 609h1v1h-1zM1350 604h2v1h-2zM1356 600h1v1h-1zM1352 608h1v2h-1zM1350 611h1v1h-1zM1354 604h2v1h-2zM1346 616h1v1h-1zM1353 609h1v1h-1zM1097 727h1v1h-1zM1090 728h1v1h-1zM1096 736h1v1h-1zM1096 729h2v1h-2zM1103 733h1v2h-1zM1097 734h1v1h-1zM1043 711h1v2h-1zM1104 887h1v2h-1zM1093 886h1v2h-1zM1096 889h1v1h-1zM1089 884h1v1h-1zM1100 884h2v1h-2zM1099 888h1v1h-1zM1378 521h1v2h-1zM1379 520h2v1h-2zM1377 519h1v1h-1zM1371 519h1v1h-1zM1374 522h2v1h-2zM1379 518h2v1h-2zM1102 736h1v1h-1zM1102 737h1v1h-1zM1102 735h1v1h-1zM1104 737h1v1h-1zM1104 738h2v1h-2zM1106 736h1v1h-1zM1101 736h2v1h-2zM1105 734h1v1h-1zM1103 742h1v1h-1zM994 449h2v1h-2zM989 446h1v1h-1zM1293 695h1v1h-1zM1291 694h1v1h-1zM1290 692h1v1h-1zM1292 691h2v1h-2zM974 693h1v2h-1zM972 691h1v1h-1zM975 690h1v2h-1zM972 689h1v1h-1zM973 691h2v1h-2zM972 690h2v1h-2zM972 690h2v1h-2zM972 692h1v2h-1zM973 691h1v1h-1zM1004 445h1v1h-1zM1001 443h1v1h-1zM1002 446h1v1h-1zM1002 444h1v1h-1zM1254 405h1v2h-1zM1252 406h1v1h-1zM1452 546h2v1h-2zM1452 546h4v2h-4zM942 664h2v1h-2zM1543 484h1v2h-1zM1543 485h2v1h-2zM1042 388h1v1h-1zM1238 607h1v1h-1zM1240 606h1v1h-1zM1235 607h1v1h-1zM1239 606h2v1h-2zM1003 773h1v1h-1zM1005 774h2v1h-2zM1010 772h1v1h-1zM1120 838h1v1h-1zM1155 444h1v1h-1zM1158 448h4v2h-4zM1272 466h1v1h-1zM1354 710h1v1h-1zM1354 711h1v1h-1zM1354 707h1v2h-1zM1348 711h2v1h-2zM1355 708h1v1h-1zM1355 708h2v1h-2zM1102 363h1v1h-1zM1254 611h2v1h-2zM1254 612h1v1h-1zM1253 610h2v1h-2zM1214 509h1v1h-1zM1211 509h1v1h-1zM1277 478h1v2h-1zM1274 475h1v1h-1zM1275 478h1v1h-1zM1271 476h1v2h-1zM1254 602h1v2h-1zM1255 604h1v1h-1zM948 686h1v1h-1zM942 680h1v1h-1zM1436 467h1v1h-1zM1430 463h1v1h-1zM1434 470h1v1h-1zM1434 466h1v1h-1zM1433 461h1v1h-1zM1435 467h1v1h-1zM1433 471h2v1h-2zM1435 464h1v1h-1zM1436 464h1v1h-1zM1066 648h1v1h-1zM1067 649h1v2h-1zM1067 648h1v1h-1zM1067 646h1v1h-1zM856 575h1v1h-1zM856 573h1v1h-1zM861 571h1v1h-1zM1286 705h2v1h-2zM1285 703h3v3h-3zM1381 598h1v1h-1zM1380 595h1v1h-1zM1378 594h1v2h-1zM1094 748h1v2h-1zM1093 750h1v1h-1zM1427 506h2v1h-2zM1427 512h1v2h-1zM1432 514h1v1h-1zM993 608h1v1h-1zM991 606h1v1h-1zM1234 793h1v1h-1zM1236 791h1v1h-1zM1237 792h1v1h-1zM1229 816h1v1h-1zM1235 787h1v2h-1zM1237 791h2v1h-2zM1237 783h2v1h-2zM1238 792h2v1h-2zM1250 368h1v1h-1zM1250 364h1v1h-1zM1252 365h1v2h-1zM1252 365h2v1h-2zM1248 366h1v1h-1zM1253 363h1v1h-1zM1524 497h2v1h-2zM1529 497h1v1h-1zM1525 501h1v1h-1zM1525 499h3v3h-3zM1291 785h1v1h-1zM1296 781h1v1h-1zM1294 775h1v1h-1zM1294 781h1v2h-1zM1296 783h1v1h-1zM1293 782h1v1h-1zM1149 761h1v2h-1zM1149 762h2v3h-2zM1248 535h1v2h-1zM1251 534h2v2h-2zM1126 911h1v2h-1zM1132 904h2v1h-2zM1120 909h1v1h-1zM1130 907h1v1h-1zM1126 904h2v3h-2zM1286 675h1v1h-1zM1283 678h2v1h-2zM1286 676h1v1h-1zM1286 673h1v1h-1zM1287 677h1v1h-1zM1284 676h1v2h-1zM1249 630h2v1h-2zM1253 626h1v2h-1zM1252 635h2v1h-2zM1584 566h1v1h-1zM1580 567h2v1h-2zM1581 564h2v1h-2zM1339 535h1v1h-1zM1239 343h1v1h-1zM1236 335h1v2h-1zM1231 336h1v1h-1zM1233 339h1v1h-1zM1232 342h1v2h-1zM1231 343h1v1h-1zM1367 571h1v1h-1zM1362 574h1v1h-1zM1361 572h2v1h-2zM1360 568h1v2h-1zM1357 572h1v1h-1zM1368 569h1v1h-1zM1005 573h1v1h-1zM1203 400h1v1h-1zM1202 398h1v1h-1zM1203 397h1v1h-1zM1203 396h1v1h-1zM1201 398h1v1h-1zM1204 400h2v2h-2zM1093 436h1v1h-1zM1325 759h1v1h-1zM1332 762h1v2h-1zM1333 763h1v2h-1zM1329 770h2v1h-2zM1328 763h1v1h-1zM1332 763h2v1h-2zM1150 455h1v1h-1zM1063 669h1v1h-1zM1063 679h1v1h-1zM1067 675h1v1h-1zM1065 669h1v1h-1zM1325 518h2v1h-2zM1323 518h1v1h-1zM1327 520h1v1h-1zM1327 519h2v1h-2zM1324 523h1v2h-1zM1326 518h2v1h-2zM1322 519h1v1h-1zM1327 517h1v2h-1zM1326 516h2v1h-2zM1344 637h1v1h-1zM1405 537h1v1h-1zM1246 607h2v2h-2zM1237 600h2v1h-2zM1240 603h3v3h-3zM1060 542h1v1h-1zM1164 709h1v1h-1zM1165 707h1v1h-1zM1160 710h1v2h-1zM1370 419h1v1h-1zM1371 420h1v2h-1zM1370 420h2v2h-2zM1512 565h1v1h-1zM1511 563h4v2h-4zM1529 544h1v1h-1zM1528 556h1v2h-1zM1157 928h1v1h-1zM1160 935h1v1h-1zM1158 931h1v1h-1zM1161 927h1v1h-1zM1160 930h1v2h-1zM1159 931h1v1h-1zM1157 927h1v1h-1zM1158 929h1v1h-1zM1156 930h1v1h-1zM1161 930h2v1h-2zM1159 929h1v1h-1zM1160 929h1v1h-1zM1162 929h1v2h-1zM1159 928h1v1h-1zM1157 928h2v1h-2zM1157 928h1v1h-1zM1156 928h2v1h-2zM1247 444h1v2h-1zM1255 614h1v1h-1zM1242 393h1v1h-1zM1237 397h2v1h-2zM1238 398h1v2h-1zM1243 393h2v2h-2zM1238 396h2v2h-2zM1243 399h1v2h-1zM1413 603h1v1h-1zM1414 606h1v1h-1zM1413 604h1v1h-1zM1119 351h1v1h-1zM1120 350h1v1h-1zM1121 350h2v1h-2zM1120 350h1v2h-1zM1120 353h2v1h-2zM1120 350h1v2h-1zM1248 357h1v1h-1zM1252 364h2v1h-2zM1246 360h2v2h-2zM1419 597h1v1h-1zM1406 616h1v1h-1zM1389 513h1v1h-1zM1390 528h1v1h-1zM1390 523h2v3h-2zM1035 742h1v1h-1zM1038 739h1v2h-1zM1127 456h1v1h-1zM1411 606h1v1h-1zM1425 507h1v1h-1zM1423 505h1v1h-1zM1423 503h2v1h-2zM1429 511h1v1h-1zM1236 523h1v1h-1zM1237 521h1v1h-1zM1238 521h2v1h-2zM1235 522h1v1h-1zM1403 523h1v1h-1zM1406 520h1v2h-1zM1060 573h2v1h-2zM1060 571h1v1h-1zM1059 568h1v1h-1zM1059 569h2v1h-2zM1374 669h1v1h-1zM1375 669h1v1h-1zM1372 670h1v1h-1zM1374 669h2v1h-2zM1374 669h2v2h-2zM1375 670h1v2h-1zM1373 670h1v2h-1zM1270 786h1v1h-1zM1264 783h1v1h-1zM1273 787h1v1h-1zM1272 786h1v1h-1zM912 672h1v1h-1zM916 679h2v1h-2zM912 674h1v2h-1zM909 669h1v2h-1zM915 673h2v1h-2zM913 675h1v1h-1zM1037 491h1v2h-1zM1037 491h1v1h-1zM1038 491h2v1h-2zM1041 490h1v2h-1zM1129 925h1v1h-1zM1126 925h1v1h-1zM1124 922h2v1h-2zM1126 924h1v1h-1zM1122 925h1v2h-1zM1123 927h1v1h-1zM1125 926h2v1h-2zM1123 922h1v1h-1zM1124 925h1v1h-1zM1124 927h1v1h-1zM1125 924h1v1h-1zM1124 925h1v1h-1zM1123 927h1v1h-1zM1127 925h1v1h-1zM1127 923h1v1h-1zM1126 925h1v2h-1zM1124 927h1v1h-1zM1123 927h1v1h-1zM1122 924h2v1h-2zM1126 924h1v1h-1zM1124 923h2v1h-2zM1127 926h1v1h-1zM1127 927h2v2h-2zM1127 923h2v1h-2zM1223 349h1v1h-1zM1224 347h1v1h-1zM1235 338h2v1h-2zM1233 345h1v2h-1zM1230 343h1v2h-1zM1228 340h1v1h-1zM1072 844h1v1h-1zM1346 610h1v2h-1zM1346 600h1v1h-1zM980 719h1v2h-1zM980 722h1v1h-1zM1143 448h2v1h-2zM1149 452h1v1h-1zM1151 456h1v1h-1zM1151 459h1v1h-1zM1008 787h1v1h-1zM1099 471h1v1h-1zM1099 470h1v2h-1zM1099 469h1v2h-1zM1099 469h1v1h-1zM1101 471h1v1h-1zM1098 468h1v1h-1zM1100 472h1v1h-1zM1098 470h1v1h-1zM1102 469h1v1h-1zM1179 254h1v1h-1zM1396 601h1v2h-1zM1137 880h1v1h-1zM1134 875h1v1h-1zM1222 458h1v1h-1zM1222 456h2v1h-2zM1224 458h1v1h-1zM1222 456h1v1h-1zM1223 458h1v1h-1zM1226 457h1v2h-1zM1223 454h2v1h-2zM1221 457h1v1h-1zM1223 457h1v1h-1zM1223 457h1v1h-1zM1224 456h1v2h-1zM1056 892h1v1h-1zM1053 894h1v1h-1zM1051 892h1v1h-1zM1053 895h2v1h-2zM1055 894h2v1h-2zM1052 891h1v2h-1zM1052 893h1v1h-1zM1053 893h1v2h-1zM1051 894h1v1h-1zM1055 894h1v1h-1zM1052 892h2v2h-2zM953 569h1v1h-1zM952 567h1v1h-1zM952 566h1v1h-1zM955 570h1v1h-1zM1098 955h1v1h-1zM1013 450h2v2h-2zM1232 412h1v1h-1zM1230 413h1v2h-1zM1230 414h1v1h-1zM1232 414h1v1h-1zM1232 412h1v1h-1zM1232 414h1v1h-1zM1436 548h1v1h-1zM1431 545h1v1h-1zM1431 547h1v1h-1zM1431 548h1v1h-1zM973 706h1v1h-1zM973 709h1v2h-1zM985 704h2v1h-2zM978 701h2v2h-2zM1300 660h1v1h-1zM1302 657h1v2h-1zM1301 658h1v1h-1zM1303 662h2v2h-2zM1302 660h1v1h-1zM1301 657h2v1h-2zM1011 614h1v1h-1zM1359 623h1v1h-1zM1374 631h2v2h-2zM1368 627h1v1h-1zM1126 428h1v1h-1zM1550 593h1v2h-1zM1160 743h1v2h-1zM1167 747h1v1h-1zM1169 746h1v1h-1zM1118 724h1v1h-1zM1012 464h1v1h-1zM1013 459h1v1h-1zM1018 455h1v1h-1zM1015 461h2v1h-2zM1013 463h1v1h-1zM1015 454h1v1h-1zM1018 458h1v1h-1zM1017 460h1v2h-1zM1015 457h2v1h-2zM1014 458h1v2h-1zM1015 457h2v1h-2zM1015 457h1v1h-1zM1017 461h1v2h-1zM1014 458h1v2h-1zM1014 460h1v1h-1zM1018 458h1v2h-1zM1017 458h2v1h-2zM1352 653h1v2h-1zM1353 652h2v1h-2zM1345 648h2v1h-2zM1346 655h1v1h-1zM1352 647h2v2h-2zM1340 651h1v1h-1zM1350 659h1v1h-1zM1344 645h1v1h-1zM1344 650h2v1h-2zM1348 652h3v2h-3zM1238 664h1v2h-1zM1237 671h1v1h-1zM1229 668h1v2h-1zM1123 448h1v1h-1zM1121 443h1v1h-1zM1124 441h1v2h-1zM1122 446h1v1h-1zM1123 445h1v2h-1zM1123 443h1v1h-1zM991 452h1v1h-1zM992 446h1v1h-1zM994 451h1v2h-1zM1011 690h1v1h-1zM1012 685h2v1h-2zM1016 684h2v1h-2zM1247 481h2v1h-2zM1251 484h1v1h-1zM1247 485h1v1h-1zM1246 484h1v1h-1zM1248 482h2v1h-2zM1247 482h1v2h-1zM1246 484h2v1h-2zM1248 483h1v1h-1zM1247 485h2v1h-2zM1250 483h2v1h-2zM1249 483h1v1h-1zM1249 483h1v1h-1zM1106 850h1v1h-1zM1104 850h2v1h-2zM1105 854h1v2h-1zM1103 853h1v1h-1zM1106 849h1v1h-1zM1101 844h2v1h-2zM1102 849h1v1h-1zM1103 849h1v1h-1zM1104 852h2v1h-2zM926 441h2v1h-2zM927 445h1v1h-1zM932 441h1v2h-1zM1268 454h2v1h-2zM1271 451h1v1h-1zM1269 452h1v1h-1zM1180 790h1v1h-1zM1182 786h2v1h-2zM1184 782h2v1h-2zM1181 789h1v1h-1zM1183 780h1v2h-1zM1183 790h1v2h-1zM1184 793h1v1h-1zM1185 790h1v1h-1zM1182 792h1v1h-1zM1181 787h1v1h-1zM1182 787h1v1h-1zM1184 787h1v1h-1zM1184 788h2v1h-2zM1184 787h1v2h-1zM1181 787h1v1h-1zM1184 790h2v1h-2zM1180 787h1v1h-1zM1184 788h1v1h-1zM1182 788h2v1h-2zM1181 787h1v1h-1zM1185 788h1v1h-1zM1357 496h1v2h-1zM1356 493h1v1h-1zM1357 497h2v1h-2zM1358 496h1v1h-1zM1087 738h1v1h-1zM1083 742h1v1h-1zM1088 742h1v1h-1zM1325 484h1v1h-1zM1329 482h1v2h-1zM1329 484h1v1h-1zM1089 432h2v1h-2zM1090 433h2v2h-2zM1089 438h1v1h-1zM1090 438h2v2h-2zM1089 435h1v2h-1zM1091 436h1v1h-1zM1090 435h1v1h-1zM1088 442h1v1h-1zM1092 433h1v1h-1zM1307 749h1v2h-1zM1268 696h1v1h-1zM1267 696h1v1h-1zM1264 695h1v1h-1zM1268 698h1v1h-1zM974 666h1v1h-1zM1535 564h1v2h-1zM1541 559h1v2h-1zM1535 562h1v1h-1zM1541 558h1v1h-1zM1537 565h1v2h-1zM1538 562h1v1h-1zM1529 564h1v1h-1zM1533 562h1v1h-1zM1536 571h1v1h-1zM959 464h1v1h-1zM959 465h1v1h-1zM1555 550h1v1h-1zM1558 548h1v1h-1zM1559 548h2v2h-2zM1335 347h1v1h-1zM1333 350h2v1h-2zM1034 734h1v1h-1zM1032 730h1v1h-1zM1547 552h1v1h-1zM969 753h1v1h-1zM971 748h1v1h-1zM971 750h2v1h-2zM972 747h2v1h-2zM967 750h1v1h-1zM979 748h1v1h-1zM970 749h3v2h-3zM1248 377h1v1h-1zM1248 380h1v1h-1zM1037 556h1v1h-1zM1036 553h2v2h-2zM1367 379h1v1h-1zM1102 808h1v1h-1zM1099 813h1v1h-1zM1104 805h1v2h-1zM1099 807h1v1h-1zM1104 806h1v2h-1zM1098 803h1v1h-1zM1102 809h1v2h-1zM1108 807h1v1h-1zM1099 806h1v1h-1zM1100 741h1v2h-1zM1105 741h2v1h-2zM1101 737h1v1h-1zM1062 571h1v1h-1zM1371 560h1v2h-1zM1367 560h2v1h-2zM1547 546h2v1h-2zM1543 546h2v2h-2zM1356 599h1v1h-1zM1355 595h1v1h-1zM1353 599h1v1h-1zM1297 760h2v1h-2zM1286 764h1v1h-1zM1289 760h2v2h-2zM1292 760h3v2h-3zM958 591h1v2h-1zM951 592h2v1h-2zM953 590h2v1h-2zM954 591h2v1h-2zM954 587h1v1h-1zM953 593h1v1h-1zM950 589h1v1h-1zM953 586h1v1h-1zM952 590h2v1h-2zM1111 398h2v1h-2zM952 683h1v1h-1zM953 683h1v2h-1zM1241 834h1v1h-1zM1241 831h1v1h-1zM1240 831h1v1h-1zM1242 830h1v2h-1zM1240 835h2v2h-2zM1243 833h1v1h-1zM990 490h2v1h-2zM987 487h1v1h-1zM989 492h1v1h-1zM992 493h1v1h-1zM990 492h2v1h-2zM982 491h1v1h-1zM987 491h2v3h-2zM1419 400h1v1h-1zM947 442h1v1h-1zM951 443h1v1h-1zM951 439h1v1h-1zM1081 956h2v2h-2zM1533 604h2v1h-2zM1542 604h1v2h-1zM1538 609h1v2h-1zM1536 610h1v1h-1zM1075 562h1v2h-1zM1071 562h1v1h-1zM1071 560h1v2h-1zM1073 565h1v2h-1zM1114 375h1v1h-1zM1323 662h2v2h-2zM1318 662h1v1h-1zM1320 658h1v2h-1zM1320 655h2v1h-2zM1323 661h1v1h-1zM1321 660h1v2h-1zM1148 475h1v1h-1zM1146 473h1v1h-1zM1146 474h1v1h-1zM1151 473h2v2h-2zM1043 741h2v1h-2zM1050 739h1v1h-1zM1044 740h1v1h-1zM1044 741h1v2h-1zM1099 910h1v1h-1zM1095 396h1v1h-1zM1091 392h1v1h-1zM1097 387h1v2h-1zM1093 391h1v1h-1zM1096 394h2v1h-2zM1095 393h1v2h-1zM1096 394h1v1h-1zM1094 390h1v1h-1zM1096 390h1v1h-1zM1095 393h2v1h-2zM1093 393h1v1h-1zM1094 390h1v1h-1zM1096 390h2v1h-2zM1096 392h1v1h-1zM1095 390h1v1h-1zM1095 390h1v2h-1zM1042 432h1v1h-1zM1044 433h1v1h-1zM1046 435h2v1h-2zM1285 643h1v1h-1zM1287 642h3v2h-3zM1081 586h1v1h-1zM1079 581h1v1h-1zM1081 583h1v2h-1zM1087 577h1v2h-1zM1083 575h1v1h-1zM1079 572h2v1h-2zM1087 584h1v1h-1zM1083 579h1v1h-1zM1079 579h2v1h-2zM1138 859h1v2h-1zM1026 644h1v1h-1zM1036 653h2v1h-2zM1376 515h1v1h-1zM1377 516h1v1h-1zM1373 514h1v2h-1zM1376 514h2v1h-2zM1374 511h1v1h-1zM1377 515h1v1h-1zM1378 516h1v2h-1zM1374 516h2v1h-2zM1379 512h1v1h-1zM1551 467h1v2h-1zM1551 464h1v1h-1zM1027 559h2v2h-2zM1022 562h1v2h-1zM1023 559h1v2h-1zM1025 563h1v1h-1zM1563 512h1v1h-1zM1567 511h1v2h-1zM1261 639h2v1h-2zM1255 643h2v1h-2zM1261 645h1v1h-1zM1257 635h1v1h-1zM1257 641h2v1h-2zM1260 645h2v1h-2zM1283 660h1v2h-1zM1278 665h2v1h-2zM1282 664h1v1h-1zM1282 658h2v2h-2zM1284 664h1v1h-1zM1282 665h1v2h-1zM1285 674h1v1h-1zM1289 662h2v1h-2zM1272 660h1v1h-1zM1066 456h1v2h-1zM1073 464h1v1h-1zM1065 465h2v2h-2zM1069 458h1v1h-1zM1068 463h1v1h-1zM1070 463h1v1h-1zM946 683h1v1h-1zM942 688h1v2h-1zM940 683h1v1h-1zM940 681h1v1h-1zM952 678h1v2h-1zM939 683h1v2h-1zM1309 524h1v1h-1zM1316 515h1v1h-1zM1116 895h1v1h-1zM1115 899h4v2h-4zM883 648h1v1h-1zM1335 495h1v1h-1zM1340 495h1v1h-1zM1337 494h1v1h-1zM1337 491h1v2h-1zM1340 493h1v1h-1zM1336 493h1v1h-1zM1338 493h1v1h-1zM1339 492h1v2h-1zM1339 492h2v1h-2zM1338 494h3v2h-3zM1442 488h1v1h-1zM1445 489h2v2h-2zM1268 624h1v1h-1zM1270 624h2v3h-2zM1269 333h1v1h-1zM1094 735h1v1h-1zM1117 890h1v1h-1zM1527 506h1v1h-1zM1525 504h1v2h-1zM1013 455h1v1h-1zM1015 457h1v1h-1zM1014 457h1v2h-1zM1015 453h2v1h-2zM1014 457h1v1h-1zM1012 457h2v1h-2zM1012 454h1v2h-1zM1019 455h1v1h-1zM1014 453h1v2h-1zM1085 821h1v1h-1zM1088 819h2v2h-2zM1075 601h2v1h-2zM1078 599h1v2h-1zM1291 648h1v2h-1zM1299 646h2v1h-2zM1291 646h1v1h-1zM1297 644h3v2h-3zM1114 531h1v1h-1zM911 694h1v1h-1zM910 694h2v1h-2zM912 694h1v1h-1zM913 695h2v1h-2zM913 692h1v1h-1zM912 692h1v1h-1zM1088 868h1v1h-1zM1055 805h1v1h-1zM1050 801h1v2h-1zM1053 801h1v1h-1zM1050 803h1v1h-1zM1037 584h1v2h-1zM1041 589h1v1h-1zM1038 585h2v1h-2zM1038 589h1v1h-1zM1141 951h1v1h-1zM1109 717h1v1h-1zM1111 708h1v1h-1zM1249 432h1v2h-1zM1248 434h1v2h-1zM1255 434h2v1h-2zM1244 434h1v1h-1zM1246 434h2v1h-2zM1250 437h1v1h-1zM1248 437h1v1h-1zM1251 436h1v2h-1zM1242 433h1v1h-1zM1001 496h1v1h-1zM1002 487h2v1h-2zM1203 378h1v1h-1zM1196 373h1v2h-1zM1205 376h1v1h-1zM1479 563h1v1h-1zM1112 527h1v1h-1zM1151 786h1v1h-1zM1147 789h1v1h-1zM1149 788h1v2h-1zM1150 788h1v2h-1zM1148 788h1v1h-1zM1149 787h1v1h-1zM1150 788h1v1h-1zM1317 705h1v1h-1zM1154 826h1v1h-1zM1156 833h1v1h-1zM1154 832h2v2h-2zM1157 837h1v1h-1zM1160 836h2v1h-2zM1158 836h1v1h-1zM1318 771h1v1h-1zM1315 770h2v1h-2zM1317 770h1v1h-1zM1317 770h2v1h-2zM1319 770h2v1h-2zM1319 771h1v1h-1zM1319 773h1v1h-1zM1318 770h1v1h-1zM1319 770h1v2h-1zM1221 770h1v2h-1zM1180 421h1v1h-1zM1179 424h1v1h-1zM1185 422h1v1h-1zM1185 424h1v1h-1zM1182 421h1v1h-1zM1181 421h1v1h-1zM1184 423h1v1h-1zM1181 420h1v2h-1zM1184 424h1v1h-1zM1046 832h1v2h-1zM1045 837h2v3h-2zM1064 546h1v1h-1zM1017 677h1v1h-1zM1413 552h1v1h-1zM1414 553h1v2h-1zM1180 402h2v2h-2zM1176 401h2v1h-2zM1182 401h1v1h-1zM1180 400h1v2h-1zM1183 401h2v1h-2zM1180 403h1v1h-1zM1179 401h3v3h-3zM1362 647h1v2h-1zM1362 648h1v1h-1zM1362 648h2v1h-2zM1363 650h1v2h-1zM1203 756h2v1h-2zM1203 754h1v2h-1zM1206 758h1v1h-1zM1213 752h1v1h-1zM1199 763h1v1h-1zM1212 749h1v1h-1zM1235 786h1v2h-1zM1239 784h1v1h-1zM1241 778h1v1h-1zM1240 786h1v1h-1zM1235 783h1v2h-1zM1239 787h1v2h-1zM1209 458h1v1h-1zM1055 490h1v1h-1zM1013 438h1v1h-1zM1009 439h1v1h-1zM1017 436h2v1h-2zM927 702h1v1h-1zM931 695h1v1h-1zM924 389h1v2h-1zM1302 739h1v1h-1zM1303 732h1v1h-1zM1301 735h1v1h-1zM1303 733h1v2h-1zM1305 742h1v1h-1zM1306 736h1v1h-1zM1301 735h1v1h-1zM1300 737h1v2h-1zM1300 733h2v1h-2zM1266 686h1v1h-1zM1268 684h1v1h-1zM1273 684h2v1h-2zM1269 689h1v1h-1zM1269 686h1v1h-1zM1267 688h2v1h-2zM969 838h1v1h-1zM1274 613h1v1h-1zM1276 617h2v1h-2zM1281 615h1v1h-1zM1275 615h1v1h-1zM1278 613h3v2h-3zM1181 395h1v1h-1zM1176 398h1v2h-1zM1180 395h1v1h-1zM1302 505h2v1h-2zM1304 505h1v1h-1zM1303 504h1v1h-1zM1304 503h1v1h-1zM1303 505h1v2h-1zM1301 505h2v1h-2zM1304 505h1v1h-1zM1302 507h1v1h-1zM1302 503h1v1h-1zM1303 503h1v1h-1zM1302 504h1v1h-1zM1041 523h2v1h-2zM1033 525h1v1h-1zM1031 525h1v1h-1zM1027 529h1v1h-1zM1104 418h1v1h-1zM1112 419h2v1h-2zM907 632h1v1h-1zM1469 545h1v2h-1zM952 429h1v1h-1zM952 428h1v1h-1zM954 426h1v1h-1zM958 425h2v2h-2zM1427 482h2v1h-2zM1425 476h1v1h-1zM1429 480h1v2h-1zM1426 482h4v3h-4zM1424 555h1v1h-1zM1310 640h2v1h-2zM1303 702h1v2h-1zM1306 699h1v1h-1zM1301 702h1v1h-1zM1303 702h1v1h-1zM1304 702h2v1h-2zM1302 703h1v1h-1zM1321 773h2v1h-2zM1112 677h1v2h-1zM1113 678h2v1h-2zM1113 678h2v1h-2zM1116 678h1v1h-1zM1111 681h1v1h-1zM1113 678h1v2h-1zM1113 677h1v2h-1zM1112 676h1v2h-1zM1113 679h2v1h-2zM1391 598h2v1h-2zM1393 600h1v1h-1zM1398 601h1v1h-1zM1396 601h1v2h-1zM1394 604h1v2h-1zM1396 600h1v1h-1zM1390 597h1v2h-1zM1397 600h1v2h-1zM1399 599h1v1h-1zM1565 477h1v1h-1zM1574 472h1v2h-1zM899 473h1v1h-1zM896 481h1v2h-1zM890 484h1v1h-1zM1229 796h1v2h-1zM1221 794h1v1h-1zM1221 798h2v1h-2zM1222 793h1v1h-1zM1222 795h1v1h-1zM1220 795h1v1h-1zM1222 794h1v1h-1zM1218 794h1v1h-1zM1219 796h2v2h-2zM1221 792h1v1h-1zM1223 797h1v2h-1zM1221 793h1v1h-1zM1218 795h2v1h-2zM1223 797h1v1h-1zM1220 797h1v1h-1zM1221 796h2v1h-2zM1223 794h1v1h-1zM1219 793h2v1h-2zM1219 794h2v1h-2zM1222 794h1v1h-1zM1221 794h1v1h-1zM1224 796h1v2h-1zM1436 574h1v1h-1zM1438 568h1v1h-1zM1433 574h1v1h-1zM1434 572h1v1h-1zM1435 575h1v1h-1zM1433 574h2v1h-2zM1437 574h1v1h-1zM1436 574h1v1h-1zM1437 575h1v1h-1zM1274 344h1v1h-1zM1275 338h1v2h-1zM1274 342h2v2h-2zM1273 342h1v1h-1zM1271 342h1v1h-1zM1276 339h1v1h-1zM1005 624h1v1h-1zM1006 625h1v1h-1zM1007 622h1v1h-1zM1012 620h1v1h-1zM1000 627h1v1h-1zM1002 620h1v1h-1zM1468 494h1v1h-1zM1466 495h2v1h-2zM1462 496h1v1h-1zM1465 498h1v1h-1zM1466 493h1v1h-1zM1468 501h2v1h-2zM1465 494h1v1h-1zM1465 498h1v2h-1zM1466 498h1v1h-1zM1061 572h1v2h-1zM1495 526h2v1h-2zM1491 526h1v1h-1zM1492 525h1v1h-1zM1013 683h1v1h-1zM1007 684h1v2h-1zM1008 685h2v1h-2zM1009 684h2v1h-2zM1010 682h2v1h-2zM1011 686h1v1h-1zM1008 682h1v2h-1zM1006 683h1v2h-1zM1010 680h1v1h-1zM1351 661h1v1h-1zM1348 659h1v1h-1zM1347 659h2v1h-2zM1349 658h1v1h-1zM1346 661h1v1h-1zM1347 656h1v1h-1zM1349 657h2v1h-2zM1348 660h1v1h-1zM1346 657h1v1h-1zM1346 657h1v2h-1zM1350 660h1v1h-1zM1350 660h1v2h-1zM1347 657h1v2h-1zM1347 656h1v1h-1zM1349 657h1v1h-1zM1348 662h1v1h-1zM1348 661h1v2h-1zM1350 661h1v1h-1zM1345 658h2v2h-2zM1347 660h1v1h-1zM1345 660h1v1h-1zM1347 662h2v1h-2zM1348 657h1v2h-1zM1350 659h1v1h-1zM1267 688h1v1h-1zM1265 688h1v1h-1zM1265 692h1v2h-1zM1266 689h1v1h-1zM1265 691h1v1h-1zM1268 690h2v1h-2zM1266 690h3v2h-3zM1255 754h1v1h-1zM1530 466h1v1h-1zM1525 463h1v1h-1zM1534 464h2v1h-2zM1529 466h1v1h-1zM1525 466h1v1h-1zM1528 465h1v1h-1zM1047 353h1v1h-1zM1046 349h2v1h-2zM1167 439h1v2h-1zM1165 440h1v1h-1zM1170 433h1v1h-1zM1171 435h2v1h-2zM1169 438h4v2h-4zM1447 484h1v2h-1zM1023 705h1v1h-1zM1024 704h1v1h-1zM1025 703h2v2h-2zM1026 707h1v2h-1zM1317 471h2v1h-2zM1101 719h1v1h-1zM1098 717h1v2h-1zM1098 723h1v1h-1zM1350 664h1v1h-1zM1346 658h1v1h-1zM1349 662h1v1h-1zM1426 590h1v1h-1zM1422 592h1v1h-1zM1423 593h1v2h-1zM1280 317h1v1h-1zM1283 313h4v2h-4zM1283 311h1v1h-1zM1282 312h2v1h-2zM1281 314h1v1h-1zM1281 313h1v1h-1zM1283 311h1v1h-1zM1283 313h1v2h-1zM1281 315h2v2h-2zM1283 311h1v1h-1zM1285 314h1v2h-1zM1281 313h1v2h-1zM1284 313h2v1h-2zM1281 311h1v1h-1zM1282 312h1v1h-1zM1285 313h1v1h-1zM1283 313h1v1h-1zM1282 314h1v1h-1zM1588 555h1v1h-1zM1587 557h2v1h-2zM1266 401h1v1h-1zM1263 400h1v1h-1zM1266 402h1v2h-1zM1263 396h1v1h-1zM1288 643h1v1h-1zM1292 637h3v2h-3zM1549 527h1v1h-1zM1548 526h1v2h-1zM1548 523h2v1h-2zM1551 522h1v1h-1zM1444 564h1v1h-1zM1444 564h1v1h-1zM1450 560h1v1h-1zM1480 491h1v1h-1zM1475 485h1v2h-1zM1469 486h1v2h-1zM1473 493h1v1h-1zM1479 488h1v1h-1zM1478 490h1v1h-1zM1478 488h1v1h-1zM1482 488h1v2h-1zM1473 492h1v1h-1zM940 686h1v2h-1zM1016 438h2v1h-2zM1083 351h2v2h-2zM1081 349h2v1h-2zM1074 350h2v2h-2zM1080 348h1v1h-1zM1336 436h1v1h-1zM1336 434h1v1h-1zM1259 378h1v1h-1zM1256 407h1v2h-1zM1250 406h1v1h-1zM1258 408h2v2h-2zM1097 956h2v2h-2zM1082 847h1v1h-1zM1079 847h1v1h-1zM1080 848h1v1h-1zM1080 850h2v1h-2zM1082 850h2v1h-2zM1082 850h1v1h-1zM1083 849h2v2h-2zM1078 847h1v1h-1zM1080 847h1v1h-1zM1134 824h2v1h-2zM1139 972h1v1h-1zM1106 489h1v1h-1zM1110 783h1v1h-1zM1104 776h3v2h-3zM1241 800h1v2h-1zM1243 801h2v1h-2zM1243 800h1v2h-1zM1243 800h1v1h-1zM1242 796h1v1h-1zM1241 804h2v2h-2zM1248 805h1v1h-1zM1241 802h1v1h-1zM1243 801h1v1h-1zM1264 802h1v1h-1zM1263 801h1v1h-1zM1270 804h1v1h-1zM1078 470h1v2h-1zM1563 510h2v1h-2zM1556 503h1v1h-1zM1564 504h2v1h-2zM1558 504h1v1h-1zM1559 503h2v1h-2zM1557 504h1v1h-1zM1557 502h1v1h-1zM1555 505h1v1h-1zM1551 511h1v1h-1zM894 658h1v1h-1zM904 657h1v1h-1zM1138 465h1v1h-1zM1134 464h1v2h-1zM1139 465h1v1h-1zM1133 888h1v2h-1zM1136 885h1v1h-1zM1135 889h1v1h-1zM1128 890h1v1h-1zM1129 885h1v1h-1zM1133 892h1v2h-1zM1131 891h1v2h-1zM1132 888h2v1h-2zM1131 886h2v1h-2zM1123 972h1v2h-1zM1087 712h1v1h-1zM1086 708h3v2h-3zM1002 681h1v2h-1zM999 682h1v1h-1zM1132 467h2v1h-2zM1136 460h2v1h-2zM1131 464h2v2h-2zM1137 458h1v1h-1zM1133 464h1v1h-1zM1128 464h1v1h-1zM986 332h1v1h-1zM958 643h1v2h-1zM963 648h1v2h-1zM963 650h2v2h-2zM1123 891h1v1h-1zM1121 889h1v1h-1zM1121 894h2v1h-2zM1122 891h1v1h-1zM1125 889h1v1h-1zM1122 889h1v1h-1zM1119 891h2v2h-2zM1120 890h1v1h-1zM1121 890h1v1h-1zM1122 892h1v1h-1zM1119 888h1v2h-1zM1124 889h2v1h-2zM1121 892h1v1h-1zM1123 891h1v1h-1zM1122 890h2v1h-2zM1120 891h1v1h-1zM1119 892h1v2h-1zM1119 889h1v1h-1zM1119 891h2v2h-2zM1118 889h2v2h-2zM1123 891h1v1h-1zM1120 891h1v1h-1zM1118 888h2v1h-2zM1121 888h1v1h-1zM1122 888h1v1h-1zM1117 889h1v1h-1zM1120 889h1v1h-1zM1122 887h1v1h-1zM1123 890h2v1h-2zM1120 891h1v1h-1zM1117 892h1v1h-1zM1122 890h1v1h-1zM1363 463h1v1h-1zM1366 461h1v1h-1zM945 680h1v2h-1zM940 673h2v1h-2zM997 614h1v1h-1zM993 618h1v1h-1zM996 616h1v1h-1zM1310 353h1v1h-1zM1094 408h1v2h-1zM1096 398h1v1h-1zM1103 403h1v1h-1zM1174 803h1v1h-1zM1176 804h1v1h-1zM1175 806h2v2h-2zM1172 804h3v2h-3zM1473 703h1v1h-1zM1472 700h1v1h-1zM1461 524h1v1h-1zM1459 520h1v1h-1zM1461 527h1v1h-1zM1459 522h1v1h-1zM1457 520h1v1h-1zM1462 528h1v1h-1zM1460 524h2v1h-2zM1462 526h1v1h-1zM1463 523h1v1h-1zM1324 652h2v1h-2zM1326 654h1v1h-1zM1169 812h1v1h-1zM1173 813h1v1h-1zM1171 813h1v1h-1zM1287 424h1v2h-1zM1284 434h1v1h-1zM1279 425h2v1h-2zM1286 433h1v1h-1zM1281 435h1v1h-1zM1282 435h1v1h-1zM1136 459h1v1h-1zM1138 459h1v1h-1zM1128 456h1v1h-1zM1382 511h1v1h-1zM1415 552h1v1h-1zM1407 550h1v2h-1zM1282 345h1v1h-1zM1280 346h1v1h-1zM1282 345h1v1h-1zM1283 345h2v1h-2zM1281 345h1v1h-1zM1283 345h1v1h-1zM1279 347h1v1h-1zM1281 343h1v2h-1zM1282 346h1v1h-1zM1067 563h2v1h-2zM1067 559h2v1h-2zM1069 559h2v1h-2zM1063 565h2v1h-2zM1069 562h1v1h-1zM1062 561h1v1h-1zM1068 562h2v1h-2zM1069 564h1v1h-1zM1066 558h1v1h-1zM1284 456h1v1h-1zM1285 459h2v2h-2zM1279 454h1v1h-1zM1280 453h1v2h-1zM1281 452h1v1h-1zM1283 454h1v1h-1zM1281 455h1v1h-1zM1282 455h1v1h-1zM1283 456h1v1h-1zM1280 453h1v1h-1zM1282 452h1v1h-1zM1283 455h1v2h-1zM1284 456h1v1h-1zM1281 452h1v1h-1zM1283 452h2v1h-2zM1281 456h1v1h-1zM1283 454h1v1h-1zM1282 452h1v1h-1zM1283 453h1v1h-1zM1281 455h1v2h-1zM1282 454h1v2h-1zM1283 456h2v1h-2zM1280 455h2v1h-2zM1280 453h1v2h-1zM1283 455h1v1h-1zM1388 410h2v2h-2zM1387 410h1v1h-1zM1389 415h1v1h-1zM1386 411h1v1h-1zM1391 415h1v1h-1zM1388 412h1v1h-1zM1389 414h1v1h-1zM1391 412h1v1h-1zM1391 413h1v1h-1zM1022 577h2v1h-2zM1013 580h1v2h-1zM1010 580h1v2h-1zM1011 588h1v1h-1zM998 447h1v1h-1zM999 446h1v1h-1zM1001 446h2v1h-2zM1000 444h2v1h-2zM1524 551h1v1h-1zM1526 554h3v2h-3zM1439 489h1v1h-1zM1437 482h2v1h-2zM1439 483h1v1h-1zM1445 475h1v1h-1zM1429 533h1v1h-1zM1084 676h1v1h-1zM1240 838h1v1h-1zM1243 840h1v1h-1zM1243 842h1v2h-1zM1268 484h1v1h-1zM1265 480h1v1h-1zM1264 476h2v1h-2zM1270 483h1v1h-1zM1266 483h1v1h-1zM1265 477h1v1h-1zM1267 611h1v2h-1zM1268 609h1v1h-1zM1267 607h1v1h-1zM1271 607h1v1h-1zM1277 603h1v1h-1zM1273 607h1v1h-1zM1268 607h2v1h-2zM1269 605h1v1h-1zM1268 605h1v1h-1zM1032 546h1v1h-1zM1318 474h1v1h-1zM1318 473h1v2h-1zM1317 474h2v1h-2zM1315 475h2v1h-2zM1318 474h1v1h-1zM1317 475h2v1h-2zM1325 475h1v1h-1zM1318 476h1v2h-1zM1320 476h1v2h-1zM1437 496h2v1h-2zM1439 495h2v2h-2zM1413 508h2v1h-2zM1415 507h2v1h-2zM1410 504h1v1h-1zM1414 503h1v1h-1zM1412 504h1v1h-1zM1414 500h1v1h-1zM1176 781h2v1h-2zM1176 779h4v2h-4zM1101 859h1v1h-1zM1104 860h1v1h-1zM1099 859h1v1h-1zM1102 860h1v1h-1zM1097 858h1v1h-1zM1097 856h1v2h-1zM1096 859h1v1h-1zM1097 859h2v1h-2zM1099 860h1v1h-1zM1098 857h1v1h-1zM1098 857h1v2h-1zM1098 860h1v1h-1zM1098 860h1v1h-1zM1097 859h1v1h-1zM1099 858h1v1h-1zM1099 860h1v1h-1zM1033 692h1v1h-1zM1062 553h1v1h-1zM1064 553h1v1h-1zM1066 552h2v2h-2zM1067 549h2v1h-2zM1063 552h1v1h-1zM1064 554h2v1h-2zM1064 551h1v1h-1zM1065 553h1v1h-1zM1067 550h1v2h-1zM1166 461h2v1h-2zM1165 457h1v1h-1zM1162 462h1v1h-1zM1162 459h1v1h-1zM1404 561h1v1h-1zM1401 558h1v1h-1zM1401 558h1v1h-1zM1391 558h2v1h-2zM1413 560h1v1h-1zM1405 564h1v1h-1zM1403 570h1v2h-1zM1395 559h1v1h-1zM1408 560h1v1h-1zM1247 329h2v1h-2zM1255 317h2v1h-2zM1253 323h1v1h-1zM1249 328h1v2h-1zM1248 330h1v1h-1zM1250 328h2v1h-2zM1247 325h1v1h-1zM1252 329h2v1h-2zM1256 321h1v1h-1zM1152 816h2v1h-2zM1149 820h1v1h-1zM1149 825h1v1h-1zM1146 827h1v1h-1zM1145 822h1v1h-1zM1144 821h1v2h-1zM1144 819h1v1h-1zM1152 826h1v2h-1zM1147 822h1v1h-1zM1167 940h1v1h-1zM1163 939h1v1h-1zM1173 941h1v1h-1zM1165 936h1v2h-1zM1168 938h2v1h-2zM1170 933h1v1h-1zM1572 490h1v1h-1zM1568 492h2v1h-2zM1120 728h1v2h-1zM1119 730h2v1h-2zM1119 730h3v2h-3zM1107 821h1v2h-1zM1106 819h1v1h-1zM1107 817h1v2h-1zM1385 457h1v1h-1zM1274 633h1v1h-1zM1277 630h1v1h-1zM1276 638h1v1h-1zM1216 509h1v2h-1zM1210 505h1v1h-1zM1211 506h1v1h-1zM1214 507h1v1h-1zM1213 505h2v2h-2zM1213 511h2v1h-2zM1136 942h2v1h-2zM1130 940h1v1h-1zM1446 452h1v1h-1zM1444 448h1v1h-1zM1445 452h1v1h-1zM1441 452h1v1h-1zM1352 669h2v1h-2zM1351 670h1v1h-1zM1352 672h2v1h-2zM1349 668h1v2h-1zM1354 674h2v1h-2zM1349 669h1v1h-1zM1352 671h2v2h-2zM1062 732h1v2h-1zM1060 731h1v2h-1zM1058 731h1v1h-1zM1059 729h1v1h-1zM1062 730h1v1h-1zM1061 732h2v1h-2zM1062 731h1v2h-1zM1059 729h1v1h-1zM1358 516h1v1h-1zM1357 521h1v2h-1zM1359 517h1v1h-1zM1357 522h1v2h-1zM1361 515h1v1h-1zM1362 517h1v2h-1zM1357 632h2v1h-2zM1072 660h1v2h-1zM1061 660h1v1h-1zM1071 659h1v1h-1zM1176 444h2v2h-2zM1174 447h1v1h-1zM990 595h2v1h-2zM989 592h1v1h-1zM988 596h1v1h-1zM990 593h2v1h-2zM1453 476h2v1h-2zM1453 471h1v1h-1zM1357 630h2v1h-2zM1357 631h2v1h-2zM1130 856h1v1h-1zM1129 855h1v1h-1zM1122 857h1v1h-1zM1126 857h1v1h-1zM1204 423h1v1h-1zM1431 479h2v2h-2zM1431 477h1v1h-1zM1425 479h1v1h-1zM1432 482h1v2h-1zM1431 477h1v1h-1zM1434 482h1v1h-1zM1431 473h2v1h-2zM1428 480h2v1h-2zM1431 479h1v1h-1zM1136 514h1v1h-1zM1135 513h1v1h-1zM1386 504h1v1h-1zM1558 545h2v1h-2zM1558 546h1v1h-1zM1558 549h1v1h-1zM1551 547h1v2h-1zM1559 547h1v1h-1zM1561 548h1v1h-1zM1554 543h1v1h-1zM1558 543h1v1h-1zM1557 549h1v1h-1zM1380 596h2v2h-2zM1376 587h1v2h-1zM1375 589h1v2h-1zM1380 592h1v1h-1zM1385 595h2v1h-2zM1381 594h1v2h-1zM1377 595h1v1h-1zM1383 594h2v1h-2zM1378 593h1v1h-1zM1391 449h1v1h-1zM1394 459h2v1h-2zM1396 442h1v1h-1zM1156 439h1v2h-1zM1265 473h1v2h-1zM1266 474h2v2h-2zM1047 709h1v2h-1zM1044 711h1v2h-1zM1043 706h2v1h-2zM1042 708h1v1h-1zM1046 707h1v2h-1zM1043 704h1v1h-1zM1048 705h1v1h-1zM1049 709h1v1h-1zM1044 704h1v1h-1zM945 531h1v1h-1zM1129 926h1v2h-1zM1422 512h1v1h-1zM1257 369h1v1h-1zM1327 779h1v2h-1zM1327 782h1v2h-1zM1335 775h1v1h-1zM1329 774h1v2h-1zM1329 772h2v1h-2zM1333 781h1v1h-1zM1328 777h3v2h-3zM1578 486h1v1h-1zM1333 637h1v1h-1zM1304 458h1v2h-1zM1297 466h1v1h-1zM1299 459h1v1h-1zM1300 457h1v1h-1zM1302 454h1v2h-1zM1299 453h1v1h-1zM1025 520h1v1h-1zM1027 521h1v1h-1zM1025 520h2v1h-2zM1025 521h2v1h-2zM1025 523h1v1h-1zM1027 521h2v1h-2zM1022 524h1v1h-1zM1023 523h1v1h-1zM1022 524h1v1h-1zM1150 756h1v2h-1zM1150 754h2v1h-2zM1150 755h1v1h-1zM1147 754h1v2h-1zM1150 754h2v1h-2zM1152 754h1v1h-1zM1150 754h4v3h-4zM1404 488h2v1h-2zM1046 542h1v1h-1zM1048 546h1v1h-1zM1046 542h1v1h-1zM1049 544h1v1h-1zM1047 542h1v1h-1zM1043 541h1v1h-1zM1044 543h2v2h-2zM1048 542h1v1h-1zM1046 545h1v1h-1zM1373 606h1v1h-1zM1387 615h1v1h-1zM1377 609h1v1h-1zM1380 610h1v2h-1zM1359 378h1v1h-1zM1036 628h1v2h-1zM1038 625h2v1h-2zM1039 629h1v1h-1zM1348 619h1v1h-1zM1352 624h1v2h-1zM1344 622h1v1h-1zM1139 890h1v1h-1zM1294 673h1v2h-1zM1295 677h1v1h-1zM1294 676h1v1h-1zM1081 630h1v2h-1zM1074 637h1v2h-1zM1431 533h1v2h-1zM1434 534h2v2h-2zM1282 494h2v1h-2zM1278 501h1v1h-1zM1285 498h1v1h-1zM1282 496h2v1h-2zM1285 498h1v2h-1zM1286 497h1v1h-1zM1393 573h1v1h-1zM1385 572h1v1h-1zM1381 574h1v1h-1zM1390 567h1v1h-1zM1387 574h1v1h-1zM1393 574h1v2h-1zM1343 456h1v1h-1zM1343 459h1v2h-1zM1042 507h1v1h-1zM1035 510h1v1h-1zM1038 503h2v1h-2zM1044 507h2v2h-2zM1036 512h1v2h-1zM1035 507h1v1h-1zM1428 522h1v1h-1zM1140 466h1v1h-1zM1134 784h2v2h-2zM1130 787h1v1h-1zM1129 787h1v2h-1zM1130 783h1v1h-1zM1137 813h1v1h-1zM1136 811h1v1h-1zM1136 811h1v1h-1zM1212 374h1v1h-1zM1211 377h1v1h-1zM1212 378h1v1h-1zM1210 373h1v1h-1zM1212 372h1v1h-1zM1212 375h1v1h-1zM1055 557h1v1h-1zM1052 558h1v1h-1zM1051 559h1v2h-1zM1054 562h2v1h-2zM941 664h1v2h-1zM943 667h1v1h-1zM945 661h2v1h-2zM1133 428h1v1h-1zM1131 428h1v1h-1zM1134 429h2v1h-2zM1134 429h1v1h-1zM1133 426h1v2h-1zM1133 428h1v1h-1zM1132 427h1v1h-1zM1132 426h1v1h-1zM1133 427h1v1h-1zM1253 772h1v2h-1zM1033 935h1v1h-1zM1034 937h1v1h-1zM1032 935h1v1h-1zM1033 936h2v2h-2zM1059 562h1v1h-1zM1244 534h1v1h-1zM1244 534h2v1h-2zM1244 534h2v1h-2zM1243 534h1v1h-1zM1243 532h1v1h-1zM1242 533h2v1h-2zM1174 781h2v1h-2zM1177 778h1v1h-1zM1213 522h1v2h-1zM1295 726h1v1h-1zM1296 733h1v1h-1zM1293 731h1v1h-1zM1295 727h1v1h-1zM1001 656h1v1h-1zM1007 660h1v1h-1zM1004 659h1v1h-1zM1008 657h1v1h-1zM1002 659h1v1h-1zM1008 662h1v1h-1zM1006 660h1v1h-1zM1005 661h2v2h-2zM1005 658h2v2h-2zM1014 426h1v1h-1zM1015 423h1v1h-1zM1011 428h1v1h-1zM944 849h1v1h-1zM948 849h1v1h-1zM942 851h1v1h-1zM1019 763h1v1h-1zM1009 761h2v2h-2zM1320 657h1v1h-1zM1318 654h1v1h-1zM1320 657h2v2h-2zM1320 653h1v1h-1zM1320 655h1v2h-1zM1323 653h1v1h-1zM1319 657h1v2h-1zM1321 657h1v1h-1zM1318 656h2v2h-2zM1010 608h1v1h-1zM1009 605h1v1h-1zM1012 607h1v2h-1zM1009 606h1v1h-1zM1011 605h2v1h-2zM1013 610h1v2h-1zM1338 450h1v2h-1zM1339 453h1v1h-1zM1336 460h1v1h-1zM1336 456h2v2h-2zM1351 768h1v1h-1zM1348 769h1v1h-1zM1355 771h1v2h-1zM1348 770h1v1h-1zM1347 771h1v1h-1zM1350 772h1v1h-1zM1353 770h1v1h-1zM1352 769h1v1h-1zM1351 769h1v1h-1zM1348 771h1v1h-1zM1353 773h1v2h-1zM1349 773h1v1h-1zM1352 774h2v2h-2zM1350 770h1v2h-1zM1354 770h2v1h-2zM1353 774h2v1h-2zM1350 770h1v1h-1zM1351 769h2v1h-2zM1352 773h1v1h-1zM1349 772h1v1h-1zM1353 770h2v2h-2zM1349 769h1v1h-1zM1347 773h1v2h-1zM1348 771h1v1h-1zM1354 772h2v1h-2zM1351 770h1v2h-1zM1224 802h2v1h-2zM1222 802h2v2h-2zM1226 802h1v1h-1zM1221 802h1v1h-1zM1225 802h1v1h-1zM1221 799h1v1h-1zM1224 801h1v2h-1zM1221 802h1v1h-1zM1222 801h1v1h-1zM1222 801h3v2h-3zM1139 819h1v1h-1zM1142 815h2v1h-2zM1419 455h2v1h-2zM1423 454h1v1h-1zM1424 454h1v2h-1zM1093 716h1v1h-1zM1362 517h2v1h-2zM1370 512h1v1h-1zM1368 514h1v1h-1zM1369 513h1v1h-1zM1366 513h1v2h-1zM1365 516h1v2h-1zM1371 510h1v1h-1zM1368 509h1v1h-1zM1367 513h1v1h-1zM1102 825h1v2h-1zM1105 826h2v1h-2zM1179 766h1v1h-1zM1210 367h1v1h-1zM1214 365h1v2h-1zM1211 367h1v1h-1zM1213 366h1v1h-1zM980 450h1v2h-1zM992 454h1v1h-1zM981 443h1v1h-1zM980 449h1v2h-1zM1037 495h1v2h-1zM1039 494h1v1h-1zM1040 497h1v1h-1zM1035 493h1v1h-1zM1168 753h1v1h-1zM1172 754h1v2h-1zM1181 751h1v1h-1zM1170 756h1v1h-1zM1170 751h1v1h-1zM1170 750h1v1h-1zM1484 527h1v1h-1zM1484 531h1v1h-1zM1488 525h1v1h-1zM1482 529h1v2h-1zM1487 526h1v1h-1zM1484 526h1v1h-1zM1482 527h1v1h-1zM1494 526h1v1h-1zM1486 533h1v1h-1zM1224 492h1v1h-1zM1222 494h3v3h-3zM1342 729h1v1h-1zM1342 732h1v1h-1zM1340 734h1v1h-1zM1338 733h1v1h-1zM1037 712h1v1h-1zM1038 718h1v1h-1zM1040 716h1v1h-1zM1036 715h1v1h-1zM1261 638h1v1h-1zM1264 636h1v1h-1zM1263 642h2v1h-2zM1261 633h1v1h-1zM1263 640h1v1h-1zM1264 639h2v1h-2zM1187 431h1v2h-1zM1184 430h1v1h-1zM1570 555h1v1h-1zM1566 556h2v3h-2zM1346 462h2v1h-2zM1347 462h1v2h-1zM1344 460h1v1h-1zM1345 467h1v1h-1zM1345 465h1v1h-1zM1346 462h2v1h-2zM1042 522h1v1h-1zM1053 522h1v1h-1zM1038 519h1v2h-1zM1042 523h2v2h-2zM1177 776h1v2h-1zM1171 774h1v1h-1zM1178 773h1v1h-1zM1171 773h1v1h-1zM1176 773h2v1h-2zM1175 776h2v1h-2zM1178 775h1v1h-1zM1171 771h1v1h-1zM1176 781h2v1h-2zM1044 874h1v1h-1zM1040 869h1v1h-1zM1403 529h1v1h-1zM1491 561h1v1h-1zM1491 560h1v1h-1zM1489 562h1v1h-1zM1491 562h1v1h-1zM1429 496h1v1h-1zM1426 494h1v1h-1zM1427 497h2v1h-2zM1429 495h1v1h-1zM1265 555h1v1h-1zM1261 554h1v1h-1zM1264 552h1v1h-1zM1224 870h1v1h-1zM1227 593h1v1h-1zM1228 595h1v2h-1zM1152 452h1v1h-1zM1497 517h1v1h-1zM925 413h1v1h-1zM1540 515h1v2h-1zM1539 516h1v2h-1zM1540 518h1v1h-1zM1538 516h1v1h-1zM1539 517h2v2h-2zM1539 516h1v1h-1zM1538 518h1v1h-1zM1539 516h1v1h-1zM1541 519h1v1h-1zM1114 730h1v1h-1zM1287 782h1v1h-1zM1278 784h1v1h-1zM1284 781h1v1h-1zM1306 450h2v1h-2zM1306 447h1v1h-1zM1307 450h1v2h-1zM1307 450h1v2h-1zM1306 450h1v1h-1zM1308 452h1v1h-1zM1276 692h1v1h-1zM1554 574h1v2h-1zM1553 576h1v1h-1zM1339 806h1v1h-1zM1339 806h1v1h-1zM1341 808h1v2h-1zM1340 807h1v1h-1zM1340 807h1v1h-1zM1341 806h2v2h-2zM1342 806h1v1h-1zM1338 806h1v1h-1zM1340 805h1v1h-1zM1339 805h1v1h-1zM1338 806h2v1h-2zM1341 806h1v1h-1zM1341 807h1v1h-1zM1384 469h2v1h-2zM1381 471h1v1h-1zM1384 470h1v1h-1zM1382 472h2v1h-2zM1386 471h1v1h-1zM1379 469h1v1h-1zM1382 471h1v1h-1zM1382 466h2v1h-2zM1386 464h1v1h-1zM1382 468h2v2h-2zM1149 902h1v1h-1zM1149 895h2v1h-2zM1156 895h2v1h-2zM1153 899h1v2h-1zM1148 897h1v1h-1zM1152 907h1v1h-1zM1152 897h1v1h-1zM1153 898h1v1h-1zM1154 896h2v1h-2zM1268 356h1v2h-1zM1264 355h1v1h-1zM1265 356h1v1h-1zM1265 357h1v1h-1zM1092 743h2v1h-2zM1091 741h1v1h-1zM1089 752h1v1h-1zM1092 742h1v1h-1zM1218 437h1v1h-1zM1224 437h2v1h-2zM1225 435h2v2h-2zM1222 434h1v2h-1zM1226 440h1v1h-1zM1223 429h1v1h-1zM1220 437h1v1h-1zM1224 434h1v1h-1zM1222 434h1v1h-1zM1341 601h1v1h-1zM1123 436h1v1h-1zM1122 435h1v2h-1zM1120 435h2v2h-2zM1121 438h1v2h-1zM1124 437h1v2h-1zM1121 433h2v1h-2zM1117 961h1v1h-1zM1125 963h1v1h-1zM1122 962h1v1h-1zM1134 747h1v2h-1zM1220 799h1v1h-1zM1221 800h1v1h-1zM1222 801h1v1h-1zM1217 800h1v1h-1zM1215 799h2v2h-2zM1218 804h2v1h-2zM1460 505h1v1h-1zM1456 511h1v2h-1zM1168 763h2v1h-2zM1172 757h1v1h-1zM1167 755h1v1h-1zM1351 571h1v1h-1zM1355 577h1v2h-1zM1343 578h1v1h-1zM1353 576h1v1h-1zM1349 574h1v1h-1zM1351 576h1v1h-1zM1278 663h2v1h-2zM1275 733h1v1h-1zM1275 727h2v1h-2zM1276 726h1v2h-1zM1275 728h1v1h-1zM1274 729h1v1h-1zM1275 726h1v1h-1zM1523 558h1v1h-1zM1520 560h1v1h-1zM1070 912h1v1h-1zM1066 918h1v1h-1zM1065 914h1v1h-1zM1071 914h1v1h-1zM1064 912h1v1h-1zM1066 920h2v1h-2zM1070 913h1v2h-1zM1071 913h1v1h-1zM1068 916h1v1h-1zM1047 521h1v1h-1zM1044 518h2v1h-2zM1042 515h1v1h-1zM1050 515h1v1h-1zM1048 519h1v1h-1zM1049 519h1v2h-1zM1044 516h1v1h-1zM1045 518h2v1h-2zM1041 516h1v1h-1zM1295 447h1v1h-1zM1347 674h1v1h-1zM1350 674h1v1h-1zM1348 680h1v1h-1zM1349 678h1v2h-1zM1350 676h1v1h-1zM1349 677h1v1h-1zM1347 674h2v1h-2zM1346 675h1v1h-1zM1349 678h1v1h-1zM1308 690h1v1h-1zM1309 696h2v1h-2zM1309 697h1v1h-1zM1313 693h1v1h-1zM1221 418h2v1h-2zM1220 418h1v1h-1zM1225 416h2v1h-2zM1223 419h1v1h-1zM1225 418h1v1h-1zM1224 417h1v1h-1zM1216 789h1v1h-1zM1213 795h1v1h-1zM1214 795h1v2h-1zM1214 791h1v1h-1zM1021 752h1v1h-1zM1020 753h1v1h-1zM1371 514h1v1h-1zM1377 503h1v2h-1zM1125 696h1v1h-1zM888 685h1v1h-1zM1274 703h1v2h-1zM1274 706h2v1h-2zM1272 701h1v2h-1zM1277 703h2v2h-2zM1275 702h1v1h-1zM1275 706h1v1h-1zM1272 702h1v1h-1zM1277 703h2v1h-2zM1273 703h1v1h-1zM1275 704h4v2h-4zM1534 511h1v1h-1zM1181 429h1v1h-1zM957 437h1v1h-1zM960 439h1v1h-1zM957 433h2v1h-2zM957 435h1v1h-1zM965 433h1v1h-1zM956 439h2v1h-2zM960 436h1v1h-1zM962 441h1v1h-1zM955 441h1v1h-1zM959 438h3v2h-3zM1230 349h1v1h-1zM1225 349h1v2h-1zM1220 349h2v2h-2zM1234 341h1v2h-1zM1220 344h1v1h-1zM1227 349h1v1h-1zM1224 346h1v1h-1zM1225 343h1v1h-1zM1227 345h1v2h-1zM1024 476h1v1h-1zM1029 476h1v1h-1zM1030 475h1v1h-1zM1511 522h1v1h-1zM1511 525h1v1h-1zM1510 520h2v1h-2zM939 680h2v2h-2zM1064 480h1v1h-1zM1271 662h1v1h-1zM1428 493h2v1h-2zM1431 493h2v1h-2zM1430 493h1v1h-1zM1431 494h2v1h-2zM1431 495h1v1h-1zM1435 488h1v1h-1zM1276 459h1v1h-1zM957 641h1v1h-1zM1508 487h1v1h-1zM1505 490h2v2h-2zM1510 489h1v1h-1zM1510 490h2v1h-2zM1435 614h1v1h-1zM1251 476h1v1h-1zM1243 486h1v1h-1zM1184 807h2v1h-2zM1185 808h1v1h-1zM1185 806h1v2h-1zM1186 807h1v1h-1zM1182 422h1v2h-1zM1182 419h1v1h-1zM1184 423h1v1h-1zM1183 422h1v2h-1zM1182 423h2v2h-2zM1183 421h1v2h-1zM1182 419h1v2h-1zM1185 425h1v1h-1zM1183 422h1v2h-1zM1184 420h1v1h-1zM1182 420h2v1h-2zM1183 422h1v1h-1zM1186 422h2v1h-2zM1185 421h2v1h-2zM1184 419h1v1h-1zM1183 420h1v2h-1zM1184 421h1v1h-1zM1186 423h1v2h-1zM1183 420h1v1h-1zM1182 419h1v1h-1zM1182 420h1v1h-1zM1182 421h1v1h-1zM1377 602h1v1h-1zM1379 604h1v1h-1zM1380 605h2v2h-2zM1059 784h1v1h-1zM1250 615h2v1h-2zM1246 609h1v1h-1zM1240 610h1v1h-1zM1246 608h1v1h-1zM899 746h1v1h-1zM897 740h1v1h-1zM896 743h1v2h-1zM1106 680h1v1h-1zM1099 676h2v1h-2zM1272 491h1v1h-1zM1131 447h1v2h-1zM1130 449h1v1h-1zM1134 448h1v2h-1zM1135 446h1v1h-1zM1132 445h1v1h-1zM1133 448h2v2h-2zM1132 447h4v3h-4zM1329 443h1v1h-1zM1324 442h1v2h-1zM1326 437h1v2h-1zM1325 434h1v1h-1zM1323 443h2v1h-2zM1326 441h1v1h-1zM1328 441h1v1h-1zM1326 448h1v1h-1zM1326 439h1v1h-1zM1326 439h2v2h-2zM1325 438h1v1h-1zM1327 439h1v1h-1zM1327 436h1v2h-1zM1323 438h1v2h-1zM1327 436h1v2h-1zM1329 437h1v1h-1zM1326 439h2v1h-2zM1329 438h1v2h-1zM1326 438h2v1h-2zM1327 437h1v1h-1zM1325 438h1v1h-1zM1326 438h2v2h-2zM1328 439h2v1h-2zM1327 441h1v1h-1zM1325 437h1v1h-1zM1328 439h2v1h-2zM1326 439h2v1h-2zM1326 439h2v2h-2zM1323 438h1v1h-1zM1324 440h1v1h-1zM1325 442h2v2h-2zM1328 437h1v1h-1zM1123 844h1v1h-1zM1526 498h2v2h-2zM1527 502h1v1h-1zM1145 385h1v1h-1zM1144 384h1v1h-1zM1146 386h2v2h-2zM1143 384h2v1h-2zM1140 387h1v1h-1zM1146 386h1v1h-1zM1144 384h2v1h-2zM1143 385h1v1h-1zM1144 384h1v1h-1zM1109 370h1v1h-1zM1104 375h1v1h-1zM1103 373h1v2h-1zM1207 377h1v1h-1zM1207 379h3v2h-3zM1113 790h1v2h-1zM1112 792h1v1h-1zM1240 355h2v2h-2zM1243 351h2v1h-2zM1234 352h1v1h-1zM1242 357h1v1h-1zM1045 540h1v2h-1zM1042 537h1v2h-1zM1186 407h1v2h-1zM1188 412h1v1h-1zM1187 411h1v1h-1zM1187 409h1v1h-1zM1188 410h1v1h-1zM1189 410h1v1h-1zM1188 409h1v1h-1zM1188 410h1v1h-1zM1186 409h1v1h-1zM1187 408h2v1h-2zM1188 412h1v1h-1zM1072 572h1v2h-1zM1070 568h1v1h-1zM1075 569h1v1h-1zM1072 571h1v1h-1zM1064 573h1v1h-1zM1072 575h1v1h-1zM1075 565h2v1h-2zM1069 570h2v1h-2zM1072 576h1v1h-1zM1294 353h1v1h-1zM866 708h2v2h-2zM868 707h3v2h-3zM1194 839h1v2h-1zM1196 837h1v1h-1zM1359 452h2v1h-2zM1362 453h2v1h-2zM1366 444h1v1h-1zM1558 538h1v2h-1zM1560 536h1v1h-1zM1558 537h1v1h-1zM1558 537h1v1h-1zM1561 535h2v1h-2zM1558 535h1v1h-1zM1561 534h2v2h-2zM1559 537h1v1h-1zM1562 536h1v1h-1zM1282 444h1v1h-1zM1020 774h1v1h-1zM1019 775h1v1h-1zM1019 773h2v1h-2zM1020 772h2v1h-2zM1016 774h1v1h-1zM1019 777h1v1h-1zM1376 563h1v1h-1zM1377 524h2v1h-2zM1377 520h2v1h-2zM1022 768h1v1h-1zM1369 502h1v1h-1zM973 547h1v1h-1zM934 671h1v1h-1zM937 670h1v2h-1zM1440 458h1v2h-1zM1087 582h2v1h-2zM1162 726h1v1h-1zM1159 729h1v1h-1zM1155 727h1v2h-1zM1159 729h1v1h-1zM1238 480h2v2h-2zM1236 477h1v1h-1zM1232 480h1v1h-1zM1239 482h1v1h-1zM1232 470h1v1h-1zM1238 480h1v1h-1zM1050 465h1v2h-1zM1049 462h1v1h-1zM1046 463h1v1h-1zM1049 463h1v1h-1zM979 501h1v1h-1zM1050 566h1v1h-1zM1514 497h1v1h-1zM1511 496h1v1h-1zM1512 497h1v1h-1zM1513 497h1v1h-1zM1510 497h1v1h-1zM1510 499h1v2h-1zM1095 831h1v2h-1zM1098 829h1v1h-1zM1094 832h1v1h-1zM1148 965h1v1h-1zM1002 656h1v1h-1zM999 654h1v1h-1zM1001 655h1v1h-1zM1286 308h2v2h-2zM1279 317h1v1h-1zM1277 311h3v2h-3zM951 696h1v1h-1zM947 683h1v1h-1zM945 689h1v2h-1zM953 685h1v1h-1zM1443 474h1v2h-1zM1440 477h1v2h-1zM1440 480h1v1h-1zM1436 477h1v2h-1zM1449 481h1v2h-1zM1443 476h1v1h-1zM1447 477h2v2h-2zM1443 480h1v1h-1zM1451 477h1v1h-1zM1443 479h2v1h-2zM1444 479h1v1h-1zM1441 476h1v2h-1zM1442 475h1v1h-1zM1440 476h1v1h-1zM1444 479h1v1h-1zM1444 476h1v1h-1zM1442 478h2v1h-2zM1446 475h1v1h-1zM1445 478h1v1h-1zM1445 478h1v1h-1zM1441 475h1v1h-1zM1443 477h1v1h-1zM1443 476h1v2h-1zM1445 477h1v1h-1zM1443 474h1v2h-1zM1444 479h1v2h-1zM1251 364h1v1h-1zM1251 364h1v2h-1zM1251 364h1v1h-1zM1425 492h1v1h-1zM1421 489h1v1h-1zM1432 493h2v1h-2zM1428 498h1v1h-1zM1424 491h1v1h-1zM1426 498h1v1h-1zM976 703h2v1h-2zM981 699h1v1h-1zM999 664h1v2h-1zM1078 561h1v1h-1zM1083 555h1v2h-1zM1081 562h1v1h-1zM1334 471h1v1h-1zM1332 465h1v1h-1zM1335 471h1v1h-1zM1337 467h4v2h-4zM1337 467h2v1h-2zM1335 467h1v1h-1zM1338 467h2v1h-2zM1334 467h1v1h-1zM1340 468h1v1h-1zM1336 468h1v1h-1zM1334 467h1v1h-1zM1337 467h1v1h-1zM1336 466h1v1h-1zM1338 466h1v1h-1zM1338 466h2v1h-2zM1338 465h1v1h-1zM1336 467h1v1h-1zM1336 468h1v1h-1zM1029 485h1v1h-1zM1028 485h1v1h-1zM1026 492h1v1h-1zM1312 489h1v1h-1zM1313 487h2v1h-2zM1314 487h1v1h-1zM1299 481h1v1h-1zM1409 451h1v1h-1zM1411 451h1v1h-1zM1409 445h2v1h-2zM1342 635h2v1h-2zM1151 806h1v2h-1zM1151 807h1v1h-1zM1151 807h1v1h-1zM1149 805h1v1h-1zM1152 805h1v1h-1zM1150 805h2v1h-2zM1196 444h1v1h-1zM1198 443h1v1h-1zM1196 449h1v1h-1zM1199 454h2v1h-2zM1362 602h1v1h-1zM1366 605h1v2h-1zM1361 601h2v1h-2zM1367 602h1v2h-1zM1363 607h1v1h-1zM1363 607h1v2h-1zM1365 608h1v1h-1zM1366 609h2v1h-2zM1360 607h1v1h-1zM1364 604h4v3h-4zM1132 890h1v1h-1zM1543 556h1v1h-1zM1543 556h2v1h-2zM1543 555h1v1h-1zM1541 557h1v1h-1zM1544 557h1v1h-1zM1540 554h1v1h-1zM1050 479h1v1h-1zM1050 475h1v1h-1zM1055 475h1v1h-1zM1055 477h1v1h-1zM1050 479h1v1h-1zM1054 475h2v1h-2zM940 710h1v1h-1zM942 713h1v2h-1zM945 711h1v1h-1zM1567 546h1v1h-1zM1560 542h1v1h-1zM1564 546h1v1h-1zM1177 794h1v1h-1zM1179 792h1v2h-1zM1186 792h1v1h-1zM1179 785h2v2h-2zM1133 343h1v1h-1zM1133 345h1v1h-1zM1137 344h2v1h-2zM1135 342h2v1h-2zM1131 344h2v1h-2zM1130 341h1v1h-1zM1133 344h1v1h-1zM1133 341h1v1h-1zM1133 344h2v1h-2zM1263 595h1v1h-1zM1261 593h2v3h-2zM1486 519h1v1h-1zM1026 901h1v2h-1zM1019 904h3v3h-3zM1029 641h1v1h-1zM1094 883h1v1h-1zM1505 527h1v1h-1zM1504 525h2v1h-2zM1504 530h1v1h-1zM1381 527h1v2h-1zM1390 529h1v1h-1zM1386 529h1v1h-1zM1386 527h2v1h-2zM1389 525h2v1h-2zM1384 524h1v2h-1zM1383 526h1v2h-1zM1385 527h1v1h-1zM1387 529h1v1h-1zM1144 786h2v1h-2zM1142 789h2v1h-2zM1206 392h1v1h-1zM1201 386h1v2h-1zM1208 384h1v1h-1zM1207 388h1v1h-1zM1035 702h1v1h-1zM1035 699h1v1h-1zM1244 359h2v1h-2zM1236 356h1v1h-1zM1238 359h2v2h-2zM1243 359h1v1h-1zM1299 628h1v1h-1zM1298 626h1v2h-1zM1076 473h1v1h-1zM1288 475h1v1h-1zM1140 459h1v2h-1zM1136 459h2v1h-2zM1140 459h1v1h-1zM1140 460h1v1h-1zM1140 463h1v1h-1zM1138 462h1v1h-1zM1054 492h1v2h-1zM1057 493h4v3h-4zM995 667h1v1h-1zM996 671h1v1h-1zM991 671h1v1h-1zM1061 821h1v1h-1zM1250 640h2v2h-2zM1249 641h1v1h-1zM1249 639h1v1h-1zM1249 637h2v1h-2zM1253 638h1v1h-1zM1248 639h1v1h-1zM1247 640h1v1h-1zM1251 638h1v1h-1zM1248 638h1v1h-1zM1527 571h1v2h-1zM1126 750h1v2h-1zM1144 746h2v1h-2zM1139 749h3v2h-3zM1106 786h2v1h-2zM1106 786h1v1h-1zM1105 787h1v1h-1zM1366 513h1v1h-1zM1050 474h1v2h-1zM1043 473h1v2h-1zM1051 474h2v2h-2zM1051 473h2v1h-2zM1049 472h2v1h-2zM1050 473h2v1h-2zM1051 474h1v1h-1zM1051 474h1v1h-1zM1050 472h1v1h-1zM1048 472h1v1h-1zM1244 394h1v1h-1zM1243 400h2v1h-2zM1259 355h1v2h-1zM1261 349h1v1h-1zM1255 348h2v2h-2zM1255 347h1v1h-1zM1260 349h1v1h-1zM1253 350h1v1h-1zM1347 659h2v1h-2zM1351 659h2v1h-2zM1238 495h1v2h-1zM1243 495h1v1h-1zM1244 503h1v1h-1zM1241 491h1v1h-1zM1241 497h2v3h-2zM1239 767h1v1h-1zM1242 768h1v2h-1zM1236 762h1v1h-1zM1239 768h1v1h-1zM1240 765h1v1h-1zM1239 768h1v1h-1zM1239 763h1v1h-1zM1234 764h1v1h-1zM1239 763h1v1h-1zM1061 357h1v1h-1zM1068 358h2v3h-2zM1418 583h1v1h-1zM1418 584h3v2h-3zM1037 628h1v1h-1zM1540 444h1v1h-1zM1405 571h1v1h-1zM996 571h1v1h-1zM1005 567h1v1h-1zM991 566h1v1h-1zM997 568h1v1h-1zM996 568h1v1h-1zM998 569h1v1h-1zM996 571h2v2h-2zM997 569h1v1h-1zM997 571h2v1h-2zM1000 568h1v1h-1zM998 569h2v2h-2zM995 569h2v2h-2zM996 568h1v2h-1zM998 568h1v1h-1zM998 567h1v1h-1zM996 569h1v1h-1zM999 570h1v2h-1zM997 570h1v1h-1zM995 569h2v2h-2zM1056 537h1v1h-1zM1055 532h1v1h-1zM1054 533h1v1h-1zM1055 531h1v1h-1zM1054 529h1v1h-1zM1052 530h1v1h-1zM1052 532h1v1h-1zM1053 529h1v1h-1zM1054 531h1v1h-1zM1055 531h2v1h-2zM1052 532h1v1h-1zM1053 533h1v1h-1zM1055 530h1v2h-1zM1054 533h2v1h-2zM1171 432h1v1h-1zM1170 435h1v1h-1zM1164 430h1v2h-1zM1174 431h2v1h-2zM1358 600h1v2h-1zM1355 600h1v1h-1zM1152 792h2v1h-2zM1150 785h1v1h-1zM1155 793h2v1h-2zM1152 785h1v2h-1zM1158 790h1v2h-1zM1151 788h1v1h-1zM1152 786h1v1h-1zM1152 789h2v1h-2zM1150 791h1v2h-1zM1218 828h2v1h-2zM1228 835h1v1h-1zM1217 839h1v1h-1zM1214 829h1v1h-1zM1114 783h2v1h-2zM1118 779h2v1h-2zM1111 777h1v1h-1zM1116 785h1v2h-1zM1121 784h2v1h-2zM1116 784h1v2h-1zM1113 779h2v1h-2zM1115 781h1v1h-1zM1119 783h2v1h-2zM1541 516h1v1h-1zM1016 661h1v1h-1zM1017 659h2v1h-2zM1015 660h1v1h-1zM1016 660h1v1h-1zM1013 658h2v1h-2zM1013 661h1v1h-1zM1015 660h1v1h-1zM1017 658h1v2h-1zM1014 660h2v1h-2zM1015 659h1v1h-1zM1014 658h1v2h-1zM1018 659h2v2h-2zM1018 659h2v1h-2zM1016 657h2v2h-2zM1014 661h2v1h-2zM1015 660h1v1h-1zM1016 657h1v1h-1zM1012 658h1v1h-1zM1012 659h1v1h-1zM1015 657h1v1h-1zM849 625h1v1h-1zM849 627h1v1h-1zM1390 571h1v1h-1zM1257 655h1v1h-1zM1154 802h2v1h-2zM1156 807h2v1h-2zM1156 804h1v1h-1zM1153 808h1v1h-1zM1359 377h1v1h-1zM1357 376h1v2h-1zM1120 898h1v1h-1zM1115 901h1v1h-1zM1188 441h1v2h-1zM1189 444h1v1h-1zM1190 445h1v1h-1zM1184 446h1v1h-1zM1186 445h1v2h-1zM1189 444h2v1h-2zM1189 443h1v1h-1zM1183 444h1v1h-1zM1187 444h1v1h-1zM971 441h1v1h-1zM969 440h1v1h-1zM967 444h1v1h-1zM1370 440h2v2h-2zM1019 436h1v1h-1zM1021 442h1v1h-1zM1022 445h2v1h-2zM1021 437h1v1h-1zM1019 435h1v1h-1zM1023 435h2v1h-2zM1127 786h1v1h-1zM1129 782h2v2h-2zM1103 874h1v2h-1zM1102 876h1v1h-1zM1102 866h1v1h-1zM1103 875h1v1h-1zM1103 868h1v2h-1zM1104 876h1v1h-1zM1104 871h3v2h-3zM1102 872h2v1h-2zM1103 872h1v1h-1zM1105 870h1v2h-1zM1103 869h1v1h-1zM1104 869h1v1h-1zM1103 870h1v1h-1zM1102 870h1v2h-1zM1105 871h1v2h-1zM1102 871h1v1h-1zM1102 872h1v1h-1zM1105 872h1v1h-1zM1141 466h1v1h-1zM1137 466h1v2h-1zM1150 463h1v1h-1zM1130 467h1v2h-1zM1137 469h1v1h-1zM1137 466h1v1h-1zM1143 460h2v1h-2zM1141 463h1v1h-1zM1136 462h2v1h-2zM1544 561h2v1h-2zM1545 561h1v1h-1zM1543 559h2v1h-2zM1539 564h1v1h-1zM1543 560h1v1h-1zM1547 566h1v1h-1zM1545 560h2v1h-2zM1541 560h1v1h-1zM1546 562h1v2h-1zM914 378h1v1h-1zM957 534h1v1h-1zM956 533h4v2h-4zM1244 463h1v1h-1zM1242 464h1v2h-1zM915 707h1v1h-1zM917 707h1v1h-1zM1251 371h1v1h-1zM1246 369h1v1h-1zM1251 370h1v1h-1zM1115 924h1v2h-1zM1115 922h1v2h-1zM1116 918h1v2h-1zM1113 923h1v1h-1zM1114 924h1v1h-1zM1117 923h1v1h-1zM1113 919h1v1h-1zM1117 918h1v1h-1zM1113 915h1v2h-1zM1297 446h1v1h-1zM1299 447h1v1h-1zM1293 448h1v1h-1zM1137 428h2v1h-2zM1140 430h1v1h-1zM1134 430h1v2h-1zM1136 429h1v1h-1zM1136 430h1v1h-1zM1134 431h2v1h-2zM1139 430h1v1h-1zM1139 428h1v1h-1zM1139 429h1v1h-1zM1134 429h1v1h-1zM1136 432h2v1h-2zM1138 431h1v1h-1zM1137 428h1v1h-1zM1133 428h1v1h-1zM1140 429h1v1h-1zM1136 428h2v1h-2zM1137 427h1v1h-1zM1134 430h1v1h-1zM1135 429h1v1h-1zM1137 427h2v1h-2zM1137 430h1v1h-1zM1136 429h1v2h-1zM1140 428h1v1h-1zM1133 431h2v1h-2zM1027 866h1v1h-1zM1126 739h1v1h-1zM1122 735h1v1h-1zM1124 736h3v2h-3zM1147 439h1v1h-1zM1146 441h2v2h-2zM1152 440h2v2h-2zM1531 612h1v1h-1zM1532 607h1v1h-1zM1530 606h1v2h-1zM1532 608h1v2h-1zM1535 612h1v1h-1zM1534 612h1v2h-1zM1533 607h1v1h-1zM1534 608h1v1h-1zM1535 608h2v1h-2zM975 459h1v1h-1zM1090 813h1v1h-1zM1240 341h1v1h-1zM976 461h1v1h-1zM979 457h1v2h-1zM1166 440h2v2h-2zM1166 438h1v1h-1zM1163 440h1v1h-1zM1164 444h1v1h-1zM1058 728h1v1h-1zM1057 728h4v3h-4zM1241 589h1v2h-1zM1243 591h1v1h-1zM1242 590h1v2h-1zM1242 583h1v1h-1zM1246 588h1v1h-1zM1246 588h2v1h-2zM1246 587h1v2h-1zM1241 587h1v1h-1zM1241 588h1v1h-1zM1246 589h2v1h-2zM1244 589h1v1h-1zM1241 586h1v1h-1zM1242 586h2v1h-2zM1245 586h1v2h-1zM1244 585h1v1h-1zM1242 589h1v1h-1zM1241 587h1v1h-1zM1243 589h1v1h-1zM1245 587h1v1h-1zM1246 588h1v1h-1zM1240 586h1v1h-1zM1246 585h1v1h-1zM1242 584h1v1h-1zM1245 586h1v1h-1zM1244 587h1v1h-1zM1245 587h1v1h-1zM1246 586h2v1h-2zM1117 502h2v1h-2zM1116 504h1v2h-1zM1116 504h2v1h-2zM1117 505h1v1h-1zM1115 504h2v2h-2zM1115 505h1v1h-1zM1113 501h1v1h-1zM1114 501h2v1h-2zM1113 504h2v1h-2zM1020 540h2v1h-2zM1018 541h1v1h-1zM1017 542h2v1h-2zM1019 537h2v1h-2zM1019 540h2v1h-2zM1020 539h1v1h-1zM1017 538h2v1h-2zM1020 536h1v1h-1zM1021 539h1v1h-1zM1020 539h1v2h-1zM1019 538h1v2h-1zM1017 539h1v1h-1zM1018 538h2v1h-2zM1019 538h1v1h-1zM1018 539h1v2h-1zM1016 539h1v1h-1zM1019 538h1v1h-1zM1021 537h1v1h-1zM1218 514h1v1h-1zM1222 505h1v1h-1zM1225 512h1v1h-1zM1217 513h2v1h-2zM1216 511h1v1h-1zM1225 511h1v1h-1zM1016 380h1v2h-1zM1010 383h1v1h-1zM1014 379h2v1h-2zM1540 594h1v1h-1zM1295 746h1v1h-1zM1295 747h1v1h-1zM1294 745h1v1h-1zM1296 747h1v1h-1zM1294 746h2v1h-2zM1294 744h1v1h-1zM1145 951h1v1h-1zM1136 955h2v1h-2zM1143 950h2v1h-2zM1139 950h1v1h-1zM1102 469h1v1h-1zM1105 470h1v2h-1zM1101 469h1v2h-1zM1110 470h1v1h-1zM1105 469h1v1h-1zM1106 469h1v1h-1zM1107 471h1v1h-1zM1105 468h1v1h-1zM1102 469h2v1h-2zM1111 321h2v2h-2zM999 684h1v1h-1zM996 687h2v2h-2zM1332 429h1v1h-1zM1333 429h1v1h-1zM1339 427h1v2h-1zM1333 427h2v2h-2zM1344 508h1v1h-1zM1345 505h2v1h-2zM1343 507h1v1h-1zM1345 507h2v1h-2zM1149 748h1v1h-1zM1146 743h1v1h-1zM1083 693h1v1h-1zM1087 685h1v1h-1zM1079 689h1v2h-1zM1073 690h2v1h-2zM1034 607h1v1h-1zM1211 419h1v2h-1zM1212 415h1v1h-1zM1211 417h1v1h-1zM1212 416h2v1h-2zM1212 420h2v1h-2zM1214 416h2v1h-2zM1430 557h1v1h-1zM1431 557h1v2h-1zM1431 554h1v2h-1zM1430 557h2v2h-2zM1308 644h1v1h-1zM1308 643h3v2h-3zM1221 388h1v1h-1zM1228 388h1v2h-1zM1226 389h1v1h-1zM1087 467h1v2h-1zM1089 466h1v2h-1zM1362 635h2v1h-2zM1362 635h1v1h-1zM1361 633h2v1h-2zM1362 633h1v1h-1zM1369 631h1v1h-1zM1360 632h1v1h-1zM1572 575h2v1h-2zM973 539h1v1h-1zM1094 396h1v1h-1zM1095 396h1v1h-1zM1441 450h1v2h-1zM1432 534h2v2h-2zM1503 541h1v1h-1zM1502 546h1v1h-1zM1089 575h1v2h-1zM1163 428h1v1h-1zM1165 428h2v2h-2zM1164 430h1v1h-1zM1166 432h1v1h-1zM1165 429h1v1h-1zM1164 429h1v1h-1zM1166 428h1v1h-1zM1166 429h1v1h-1zM1167 428h2v1h-2zM1206 804h2v1h-2zM1202 802h1v1h-1zM1205 803h1v1h-1zM1208 800h1v1h-1zM1205 802h4v2h-4zM1056 650h2v2h-2zM1333 635h1v1h-1zM1151 834h2v1h-2zM1108 819h1v1h-1zM1108 821h1v1h-1zM1107 819h1v1h-1zM1109 821h1v1h-1zM1109 818h1v1h-1zM1113 823h1v1h-1zM1109 819h2v1h-2zM1109 822h1v1h-1zM1111 817h1v1h-1zM1061 473h1v2h-1zM1065 473h2v1h-2zM1060 474h1v1h-1zM1062 477h1v1h-1zM1059 473h2v1h-2zM1061 479h1v1h-1zM1063 479h2v2h-2zM1064 478h1v1h-1zM1059 479h1v1h-1zM1130 401h2v1h-2zM1251 531h2v2h-2zM936 673h1v2h-1zM938 678h2v1h-2zM940 674h1v1h-1zM937 671h1v1h-1zM934 676h1v1h-1zM943 673h1v1h-1zM930 672h1v1h-1zM935 679h2v1h-2zM935 674h1v1h-1zM1265 820h1v2h-1zM1268 821h1v2h-1zM1267 821h1v1h-1zM1270 823h1v1h-1zM1266 819h1v1h-1zM1273 822h1v1h-1zM1159 775h1v2h-1zM1158 772h1v1h-1zM1160 774h1v1h-1zM1162 771h2v1h-2zM1157 776h1v1h-1zM1160 771h2v1h-2zM1162 775h1v1h-1zM1159 773h1v1h-1zM1156 778h1v2h-1zM1158 773h4v2h-4zM1391 678h1v1h-1zM1384 681h1v1h-1zM1393 679h1v1h-1zM1394 682h2v1h-2zM1395 677h1v1h-1zM1390 679h1v2h-1zM1391 675h2v2h-2zM1402 672h1v1h-1zM1392 682h1v1h-1zM963 460h1v1h-1zM959 456h2v2h-2zM960 457h1v1h-1zM1043 731h1v1h-1zM1044 735h1v2h-1zM1043 735h1v1h-1zM998 650h1v1h-1zM996 650h1v1h-1zM1000 650h1v1h-1zM996 652h1v2h-1zM999 654h1v1h-1zM995 653h1v1h-1zM994 648h1v1h-1zM997 655h1v2h-1zM996 650h1v2h-1zM1547 483h1v2h-1zM1546 480h1v1h-1zM1550 483h1v1h-1zM1543 487h1v1h-1zM1385 588h1v1h-1zM1398 576h2v1h-2zM1401 581h2v3h-2zM1163 428h2v1h-2zM1167 425h2v2h-2zM1162 427h1v2h-1zM1165 427h1v1h-1zM1164 429h1v1h-1zM1163 429h1v1h-1zM1163 426h1v2h-1zM1165 427h1v1h-1zM1163 428h1v1h-1zM1184 767h2v1h-2zM1183 769h3v2h-3zM1054 511h2v1h-2zM1056 512h1v2h-1zM1058 510h1v1h-1zM1054 510h2v1h-2zM1057 512h1v2h-1zM1052 510h1v1h-1zM1052 511h1v1h-1zM1054 513h1v2h-1zM1054 513h1v1h-1zM1052 511h1v1h-1zM1055 514h2v1h-2zM1052 512h2v1h-2zM1053 514h2v2h-2zM1054 511h1v1h-1zM1053 511h1v1h-1zM1054 513h1v2h-1zM1051 513h1v1h-1zM1054 513h1v1h-1zM1054 513h1v1h-1zM1055 513h1v1h-1zM1054 511h1v1h-1zM1121 927h1v2h-1zM1119 924h2v1h-2zM1210 405h1v1h-1zM1171 812h1v1h-1zM1171 803h1v2h-1zM1170 799h2v1h-2zM1168 804h1v1h-1zM1169 803h1v1h-1zM1171 800h1v1h-1zM1168 802h2v2h-2zM1194 956h1v1h-1zM1196 951h1v1h-1zM1196 953h2v1h-2zM1195 954h1v1h-1zM1192 952h1v1h-1zM1194 954h1v1h-1zM1194 954h1v2h-1zM1194 956h1v1h-1zM1192 957h1v1h-1zM1080 407h2v1h-2zM1079 403h1v1h-1zM1088 404h1v2h-1zM1084 408h1v2h-1zM1080 404h1v1h-1zM1083 406h1v1h-1zM1135 422h1v1h-1zM1136 422h1v1h-1zM1137 422h2v1h-2zM1137 422h1v1h-1zM1136 422h1v1h-1zM1137 424h1v1h-1zM1080 798h2v2h-2zM1081 798h1v2h-1zM1081 797h1v1h-1zM1080 798h1v1h-1zM1029 526h1v1h-1zM1031 526h1v1h-1zM1034 525h1v1h-1zM988 478h1v1h-1zM989 474h1v1h-1zM981 470h1v1h-1zM1509 527h1v1h-1zM1508 532h1v1h-1zM1504 525h1v2h-1zM1509 525h1v1h-1zM1510 526h1v1h-1zM1509 524h1v1h-1zM1506 528h1v1h-1zM1508 525h1v1h-1zM1505 524h1v1h-1zM1436 527h2v1h-2zM1433 532h1v1h-1zM1435 525h2v1h-2zM1435 528h1v1h-1zM1434 532h1v1h-1zM1433 525h1v1h-1zM1437 527h2v1h-2zM1434 527h1v1h-1zM1430 525h1v2h-1zM1447 698h1v1h-1zM1445 697h1v1h-1zM1292 725h1v1h-1zM1294 724h2v1h-2zM1294 722h1v1h-1zM1292 725h4v2h-4zM1018 567h1v1h-1zM1131 506h1v1h-1zM1129 505h2v1h-2zM1132 516h1v1h-1zM1100 708h1v2h-1zM1097 713h1v1h-1zM1100 700h1v1h-1zM1102 705h1v2h-1zM1101 704h1v1h-1zM1100 704h2v1h-2zM1102 705h1v1h-1zM1100 705h1v1h-1zM1098 703h1v1h-1zM1099 706h2v1h-2zM1100 705h1v1h-1zM1100 705h1v1h-1zM1102 704h2v1h-2zM1526 579h2v1h-2zM1528 578h1v1h-1zM1528 578h1v1h-1zM1439 538h1v1h-1zM1438 533h1v1h-1zM1444 539h1v1h-1zM1437 535h2v1h-2zM1442 535h1v1h-1zM1442 537h1v1h-1zM1440 541h1v1h-1zM1439 536h1v2h-1zM1437 542h1v1h-1zM1441 538h2v2h-2zM1440 537h2v2h-2zM1441 538h1v2h-1zM1437 540h1v1h-1zM1437 539h1v1h-1zM1440 540h1v1h-1zM1441 537h1v1h-1zM1436 538h1v2h-1zM1439 539h2v1h-2zM1439 538h1v1h-1zM1439 538h1v1h-1zM1441 539h1v2h-1zM1439 540h1v1h-1zM1438 537h1v2h-1zM1437 538h1v1h-1zM1196 959h1v1h-1zM1197 963h1v1h-1zM1193 957h2v1h-2zM1197 960h1v2h-1zM1196 962h2v1h-2zM1198 959h1v1h-1zM1287 772h1v1h-1zM1044 616h1v2h-1zM1044 615h1v1h-1zM1046 616h1v2h-1zM1045 616h1v1h-1zM1045 614h1v1h-1zM1046 615h1v1h-1zM1045 618h1v2h-1zM1044 616h1v1h-1zM1048 616h1v1h-1zM1050 486h1v1h-1zM1049 490h1v1h-1zM1404 552h1v2h-1zM1407 544h1v1h-1zM1407 546h1v1h-1zM1409 545h2v1h-2zM1404 546h1v1h-1zM1406 544h1v1h-1zM1222 366h1v1h-1zM1223 371h1v1h-1zM1415 557h1v1h-1zM1212 377h1v2h-1zM1369 495h2v1h-2zM1277 674h1v2h-1zM1277 676h1v2h-1zM1272 679h2v1h-2zM1278 677h1v2h-1zM1278 674h1v1h-1zM1277 680h2v1h-2zM1269 360h2v1h-2zM1267 364h1v1h-1zM1227 845h1v1h-1zM1227 846h1v1h-1zM1225 847h1v1h-1zM1226 849h1v1h-1zM1224 848h1v2h-1zM1226 849h1v1h-1zM1227 846h1v1h-1zM1469 438h1v2h-1zM1469 444h2v1h-2zM1479 444h1v2h-1zM1471 446h2v1h-2zM1325 432h2v1h-2zM1320 435h1v1h-1zM1322 434h1v1h-1zM1325 430h1v1h-1zM1319 434h1v1h-1zM1319 434h2v1h-2zM1333 436h1v1h-1zM1322 444h1v1h-1zM1322 437h1v1h-1zM1001 647h1v1h-1zM1003 647h1v1h-1zM999 644h1v1h-1zM997 646h2v1h-2zM998 648h1v1h-1zM999 648h1v1h-1zM997 647h2v1h-2zM1001 649h1v2h-1zM1000 644h2v1h-2zM1532 562h1v1h-1zM1526 561h1v1h-1zM1532 563h2v1h-2zM1307 497h2v1h-2zM1304 496h1v1h-1zM1303 494h1v1h-1zM1115 796h1v1h-1zM1120 802h1v1h-1zM1114 795h1v1h-1zM1116 801h2v1h-2zM1116 431h1v2h-1zM1119 434h1v1h-1zM1117 431h1v2h-1zM1113 434h1v1h-1zM1117 432h1v1h-1zM1115 433h1v1h-1zM1116 437h1v1h-1zM1120 434h1v1h-1zM1117 433h1v1h-1zM1527 551h1v1h-1zM1533 554h2v1h-2zM1526 554h1v2h-1zM1528 548h1v1h-1zM1528 551h1v2h-1zM1527 551h1v1h-1zM1527 551h1v1h-1zM1526 550h1v1h-1zM1531 549h1v1h-1zM1527 550h1v1h-1zM1529 547h1v1h-1zM1530 550h2v2h-2zM1528 550h1v1h-1zM1525 550h1v1h-1zM1529 550h2v1h-2zM1525 551h1v2h-1zM1529 552h1v1h-1zM1526 551h1v1h-1zM1528 547h1v1h-1zM1529 550h1v1h-1zM1528 550h1v1h-1zM1528 552h2v1h-2zM923 426h1v1h-1zM1489 565h1v1h-1zM1495 563h2v1h-2zM1494 568h1v2h-1zM1494 565h2v1h-2zM1495 567h1v2h-1zM1495 561h1v1h-1zM1498 570h1v1h-1zM1493 562h1v1h-1zM1498 568h1v1h-1zM1310 458h1v1h-1zM1306 464h1v1h-1zM1447 557h2v1h-2zM1453 550h1v2h-1zM1310 678h1v1h-1zM1307 682h1v1h-1zM1049 471h1v1h-1zM1047 475h1v1h-1zM1047 477h1v1h-1zM1054 475h1v1h-1zM1055 474h1v1h-1zM1047 475h1v1h-1zM875 709h1v1h-1zM875 706h1v1h-1zM878 702h1v1h-1zM878 704h1v1h-1zM949 704h1v1h-1zM954 699h1v1h-1zM1102 431h1v2h-1zM1322 699h1v1h-1zM1321 695h1v1h-1zM1325 699h1v1h-1zM1326 697h2v1h-2zM1049 348h1v1h-1zM1051 347h1v1h-1zM1047 352h1v1h-1zM1048 345h1v1h-1zM1049 351h1v1h-1zM1051 352h1v1h-1zM1049 348h3v2h-3zM1153 769h2v1h-2zM1156 770h1v1h-1zM1152 770h1v1h-1zM1152 772h1v1h-1zM1153 770h1v1h-1zM1152 771h1v1h-1zM1261 466h1v1h-1zM1267 473h2v1h-2zM1132 446h2v2h-2zM1122 453h2v1h-2zM1125 440h1v1h-1zM1128 450h1v1h-1zM1122 446h2v1h-2zM1129 449h1v2h-1zM1122 448h1v2h-1zM1121 447h2v1h-2zM1126 452h1v1h-1zM1124 447h3v2h-3zM1107 747h2v1h-2zM1301 474h1v1h-1zM1573 552h1v1h-1zM1570 551h1v1h-1zM1376 660h1v1h-1zM1372 660h1v1h-1zM1249 453h1v1h-1zM1248 456h1v1h-1zM1249 457h1v2h-1zM1249 455h2v1h-2zM1249 459h1v1h-1zM1250 455h1v2h-1zM1389 524h1v1h-1zM1388 520h1v1h-1zM1385 522h1v1h-1zM1388 521h1v1h-1zM995 696h1v1h-1zM997 695h1v2h-1zM1003 690h1v1h-1zM995 693h1v1h-1zM1000 691h1v1h-1zM1001 693h1v1h-1zM1103 447h1v1h-1zM1104 446h2v2h-2zM1356 501h1v1h-1zM1360 497h1v2h-1zM1360 503h1v2h-1zM1347 503h1v2h-1zM1360 503h1v2h-1zM1357 507h2v1h-2zM1341 764h1v2h-1zM1342 758h2v1h-2zM1330 760h1v2h-1zM1332 758h1v1h-1zM1339 762h1v1h-1zM1338 759h1v1h-1zM1336 760h3v2h-3zM1290 707h1v2h-1zM1293 704h2v2h-2zM928 736h1v1h-1zM920 733h1v1h-1zM924 742h2v1h-2zM928 740h1v1h-1zM1215 422h2v2h-2zM1102 798h1v1h-1zM1114 797h1v1h-1zM1106 793h2v1h-2zM1105 794h1v1h-1zM1116 788h1v1h-1zM1106 802h1v1h-1zM1101 803h1v2h-1zM1110 794h1v1h-1zM1107 796h1v1h-1zM1107 794h2v1h-2zM1109 797h1v1h-1zM1110 796h1v1h-1zM1110 795h1v1h-1zM1106 795h1v1h-1zM1111 795h1v2h-1zM1105 796h1v1h-1zM1108 795h1v1h-1zM1110 796h1v2h-1zM1106 796h1v1h-1zM1108 796h1v2h-1zM1108 793h1v1h-1zM1106 796h1v1h-1zM1109 794h1v1h-1zM1107 793h1v1h-1zM1110 794h1v2h-1zM1105 796h2v1h-2zM1109 794h1v1h-1zM1105 795h1v1h-1zM1107 797h1v2h-1zM1189 797h1v1h-1zM1194 798h2v1h-2zM1188 796h1v1h-1zM1189 797h1v1h-1zM1191 799h1v1h-1zM1190 800h1v1h-1zM1185 796h2v1h-2zM1189 801h1v1h-1zM1192 798h1v1h-1zM1104 293h2v1h-2zM1114 300h2v1h-2zM1119 306h1v2h-1zM1115 302h1v1h-1zM1111 305h1v1h-1zM1116 296h1v1h-1zM1115 303h1v1h-1zM1115 303h1v2h-1zM1109 304h1v1h-1zM1496 543h2v1h-2zM1496 546h2v1h-2zM1495 545h2v1h-2zM1494 545h1v1h-1zM1497 542h1v1h-1zM1493 543h1v1h-1zM1494 543h1v1h-1zM1491 544h1v1h-1zM1493 544h1v2h-1zM983 425h1v1h-1zM977 428h2v2h-2zM976 422h1v2h-1zM980 425h1v1h-1zM977 423h2v2h-2zM976 426h1v2h-1zM978 427h1v1h-1zM974 427h1v2h-1zM974 422h1v1h-1zM1161 561h2v1h-2zM1258 623h2v1h-2zM1257 619h1v1h-1zM1258 622h1v2h-1zM1259 624h1v1h-1zM1260 624h1v2h-1zM1254 623h1v1h-1zM1260 621h1v1h-1zM1261 623h1v1h-1zM1257 622h1v1h-1zM1258 621h4v2h-4zM1101 424h1v1h-1zM1111 438h2v1h-2zM1104 439h1v1h-1zM1109 443h1v1h-1zM1104 433h1v1h-1zM1104 429h1v1h-1zM1109 440h1v1h-1zM1108 441h1v2h-1zM1094 405h1v1h-1zM1094 399h1v2h-1zM1099 416h2v1h-2zM1096 406h2v2h-2zM1099 418h1v1h-1zM1092 393h1v2h-1zM1096 405h1v1h-1zM1095 400h1v1h-1zM1095 403h1v1h-1zM1094 399h1v2h-1zM1097 397h1v2h-1zM1093 401h1v2h-1zM1092 400h1v1h-1zM1092 398h2v1h-2zM1095 402h1v1h-1zM1097 398h1v1h-1zM1093 394h2v1h-2zM1099 417h1v1h-1zM1099 412h1v1h-1zM1100 414h2v2h-2zM1100 414h1v1h-1zM1091 380h1v1h-1zM1087 358h1v2h-1zM1086 347h1v1h-1zM1085 345h1v1h-1zM1091 378h1v2h-1zM1088 351h2v2h-2zM1087 360h1v1h-1zM1088 357h1v1h-1zM1089 366h1v2h-1zM1088 359h1v1h-1zM1089 368h2v1h-2zM1089 372h1v1h-1zM1085 355h1v2h-1zM1082 337h1v2h-1zM1084 333h2v1h-2zM1083 339h1v1h-1zM1082 325h1v1h-1zM1082 324h1v1h-1zM1081 324h1v2h-1zM1082 325h1v1h-1zM1084 341h1v1h-1zM1085 343h1v1h-1zM1084 341h1v1h-1zM1087 337h1v1h-1zM1086 340h1v2h-1zM1086 340h1v1h-1zM1082 322h1v1h-1zM1074 304h2v1h-2zM1068 305h1v1h-1zM1072 305h1v1h-1zM1071 300h1v1h-1zM1074 302h2v1h-2zM1075 309h1v2h-1zM1077 311h1v1h-1zM1073 303h1v1h-1zM1071 306h1v2h-1zM1076 311h1v1h-1zM1076 304h1v1h-1zM1074 307h1v1h-1zM1073 306h1v2h-1zM1071 307h1v2h-1zM1072 305h1v1h-1zM1070 305h1v2h-1zM1237 399h2v1h-2zM1242 389h1v1h-1zM1242 385h1v1h-1zM1243 383h2v1h-2zM1239 392h2v1h-2zM1243 384h1v1h-1zM1239 396h1v1h-1zM1237 401h1v1h-1zM1243 380h1v2h-1zM1236 406h2v1h-2zM1234 410h1v1h-1zM1234 407h1v1h-1zM1233 406h2v1h-2zM1234 409h1v1h-1zM1234 408h1v1h-1zM1234 409h1v2h-1zM1235 408h2v1h-2zM1236 407h2v2h-2zM1230 408h1v1h-1zM1233 413h1v1h-1zM1242 382h2v1h-2zM1232 408h1v1h-1zM1232 412h1v1h-1zM1235 406h1v1h-1zM1233 411h1v1h-1zM1238 410h2v1h-2zM1233 412h2v1h-2zM1237 414h1v1h-1zM1231 414h1v1h-1zM1244 380h1v2h-1zM1245 377h1v1h-1zM1246 376h1v2h-1zM1250 370h1v1h-1zM1252 361h2v2h-2zM1246 376h2v2h-2zM1244 377h1v1h-1zM1251 365h1v1h-1zM1245 376h1v2h-1zM1251 362h1v1h-1zM1251 362h1v2h-1zM1274 337h1v2h-1zM1266 342h1v1h-1zM1265 343h1v2h-1zM1267 343h1v1h-1zM1275 338h2v1h-2zM838 737h1v2h-1zM837 739h1v1h-1zM837 736h1v1h-1zM833 737h1v1h-1zM844 735h1v1h-1zM843 735h1v1h-1zM836 740h1v1h-1zM825 744h1v1h-1zM822 744h1v2h-1zM813 751h1v1h-1zM815 751h1v1h-1zM815 752h1v1h-1zM811 751h1v1h-1zM813 751h1v2h-1zM815 747h1v1h-1zM819 743h1v1h-1zM816 748h2v1h-2zM818 748h1v2h-1zM822 746h2v1h-2zM820 748h1v1h-1zM845 734h1v1h-1zM830 741h1v1h-1zM838 736h1v2h-1zM820 746h2v1h-2zM870 725h1v1h-1zM870 725h1v1h-1zM873 722h2v1h-2zM869 720h1v1h-1zM871 722h1v1h-1zM863 727h2v1h-2zM884 716h1v2h-1zM877 721h2v1h-2zM855 731h1v2h-1zM864 726h1v1h-1zM857 729h1v1h-1zM852 731h1v2h-1zM875 722h1v1h-1zM885 717h1v2h-1zM880 718h1v1h-1zM868 726h1v2h-1zM888 716h1v1h-1zM919 699h1v1h-1zM890 714h1v1h-1zM918 697h1v1h-1zM920 700h1v1h-1zM919 699h1v1h-1zM905 710h1v2h-1zM905 701h1v1h-1zM902 711h1v1h-1zM903 708h1v2h-1zM902 711h1v1h-1zM902 705h1v1h-1zM903 704h1v1h-1zM902 711h1v2h-1zM901 708h1v1h-1zM898 711h1v2h-1zM896 712h1v1h-1zM918 700h1v1h-1zM902 708h1v1h-1zM815 592h1v1h-1zM805 591h2v1h-2zM795 590h1v1h-1zM801 591h1v2h-1zM824 589h1v1h-1zM789 592h1v2h-1zM828 591h1v1h-1zM783 590h1v1h-1zM785 592h1v2h-1zM785 585h2v1h-2zM783 588h1v1h-1zM783 588h1v1h-1zM784 586h1v1h-1zM784 585h2v1h-2zM786 588h2v1h-2zM819 591h1v1h-1zM812 591h2v2h-2zM798 589h1v1h-1zM802 587h1v1h-1zM803 591h1v1h-1zM807 588h2v2h-2zM798 590h2v1h-2zM806 592h2v1h-2zM804 591h1v1h-1zM805 588h1v1h-1zM824 591h1v1h-1zM823 592h1v1h-1zM787 590h1v1h-1zM860 592h2v1h-2zM866 593h1v1h-1zM869 592h1v1h-1zM850 593h2v1h-2zM851 591h1v1h-1zM839 592h1v1h-1zM866 590h1v1h-1zM847 592h1v1h-1zM838 592h1v1h-1zM854 592h1v1h-1zM834 590h1v1h-1zM848 591h1v1h-1zM868 593h1v1h-1zM930 608h1v1h-1zM927 608h1v1h-1zM916 613h1v1h-1zM915 613h1v1h-1zM927 610h1v1h-1zM921 610h2v1h-2zM929 608h2v1h-2zM921 611h2v1h-2zM951 602h1v1h-1zM947 604h1v2h-1zM951 603h1v1h-1zM946 605h2v1h-2zM944 605h1v1h-1zM945 604h1v1h-1zM949 603h1v1h-1zM914 425h1v2h-1zM930 430h1v1h-1zM933 432h2v1h-2zM939 432h1v2h-1zM945 432h2v1h-2zM925 429h1v1h-1zM918 427h1v2h-1zM919 426h1v1h-1zM934 430h2v1h-2zM934 430h1v1h-1zM930 431h2v2h-2zM917 425h1v2h-1zM929 429h1v1h-1zM925 428h1v1h-1zM965 441h1v1h-1zM975 445h2v2h-2zM960 438h1v1h-1zM951 435h1v1h-1zM974 442h1v1h-1zM950 434h1v1h-1zM950 434h2v1h-2zM947 440h1v1h-1zM953 436h1v1h-1zM951 436h1v1h-1zM951 435h2v1h-2zM954 437h1v1h-1zM948 437h1v1h-1zM950 434h1v1h-1zM980 445h1v1h-1zM976 445h2v1h-2zM952 435h1v1h-1zM961 438h1v1h-1zM966 433h1v2h-1zM957 439h1v1h-1zM965 438h1v1h-1zM964 440h2v1h-2zM1081 879h1v1h-1zM1075 900h1v1h-1zM1083 880h2v2h-2zM1080 884h1v1h-1zM1083 878h1v1h-1zM1081 886h1v1h-1zM1080 883h1v1h-1zM1079 888h1v1h-1zM1085 874h2v1h-2zM1074 900h2v1h-2zM1075 898h1v2h-1zM1080 888h1v1h-1zM1076 895h2v1h-2zM1074 903h1v1h-1zM1067 922h1v1h-1zM1073 900h1v1h-1zM1067 919h1v1h-1zM1062 937h1v1h-1zM1073 904h2v2h-2zM1067 921h1v2h-1zM1068 917h2v1h-2zM1064 932h1v2h-1zM1072 904h1v1h-1zM1074 904h1v1h-1zM1059 950h1v2h-1zM1058 955h1v1h-1zM1060 946h1v1h-1zM1057 958h1v2h-1zM1062 944h1v1h-1zM1062 944h2v1h-2zM1058 945h1v1h-1zM1061 939h1v1h-1zM1064 941h1v1h-1zM1057 944h2v1h-2zM1058 945h1v1h-1zM1059 948h1v1h-1zM1059 939h1v1h-1zM1060 942h1v1h-1zM1061 942h1v1h-1zM1058 959h1v2h-1zM1061 940h1v1h-1zM1058 954h1v2h-1zM1110 906h1v1h-1zM1108 901h2v1h-2zM1106 907h1v1h-1zM1112 903h1v1h-1zM1107 903h1v1h-1zM1110 897h1v1h-1zM1107 901h1v1h-1zM1108 900h2v1h-2zM1111 904h1v1h-1zM1114 915h1v1h-1zM1128 932h1v1h-1zM1123 933h1v1h-1zM1122 940h2v2h-2zM1119 927h1v2h-1zM1119 921h1v1h-1zM1117 920h1v1h-1zM1127 940h2v1h-2zM1121 927h1v1h-1zM1123 931h2v1h-2zM1571 544h1v1h-1zM1569 544h1v2h-1zM1584 543h1v1h-1zM1585 542h2v2h-2zM1579 542h2v1h-2zM1567 546h1v1h-1zM1574 543h1v1h-1zM1571 546h2v1h-2zM1569 550h1v1h-1zM1567 546h2v1h-2zM1569 537h2v2h-2zM1562 544h1v1h-1zM1566 544h1v2h-1zM1589 542h1v1h-1zM1568 544h1v2h-1zM1594 542h2v1h-2zM1597 540h1v2h-1zM1598 534h1v1h-1zM1601 542h1v1h-1zM1595 540h2v1h-2zM1597 540h1v1h-1zM1596 541h1v1h-1zM1384 435h1v1h-1zM1404 426h1v1h-1zM1412 422h2v1h-2zM1393 431h1v2h-1zM1389 432h1v1h-1zM1404 425h1v1h-1zM1393 432h2v2h-2zM1393 430h1v2h-1zM1389 433h1v1h-1zM1398 427h2v1h-2zM1392 431h1v1h-1zM1390 433h1v1h-1zM1389 431h1v1h-1zM1393 429h1v1h-1zM1404 426h1v2h-1zM1410 427h1v1h-1zM1407 423h1v1h-1zM1399 424h1v1h-1zM1406 426h1v1h-1zM1400 428h2v1h-2zM1389 434h1v1h-1zM1388 427h1v1h-1zM1387 434h1v1h-1zM1385 432h2v1h-2zM1390 429h1v1h-1zM1427 417h1v1h-1zM1453 406h1v1h-1zM1442 409h1v2h-1zM1423 418h2v1h-2zM1422 418h1v1h-1zM1425 417h1v1h-1zM1423 418h2v1h-2zM1435 412h2v1h-2zM1425 416h2v2h-2zM1441 411h1v1h-1zM1458 404h1v1h-1zM1455 403h1v1h-1zM1456 405h1v1h-1zM1433 414h1v1h-1zM1430 415h1v1h-1zM1438 411h1v1h-1zM1469 400h1v1h-1zM1443 411h2v1h-2zM1464 401h2v2h-2zM1446 410h2v1h-2zM1302 457h1v1h-1zM1314 428h2v1h-2zM1315 432h2v1h-2zM1316 430h1v1h-1zM1318 429h2v2h-2zM1313 431h1v1h-1zM1316 428h2v1h-2zM1312 432h2v2h-2zM1315 429h1v1h-1zM1308 444h1v2h-1zM1309 446h1v1h-1zM1309 443h1v2h-1zM1313 440h2v1h-2zM1299 464h1v1h-1zM1306 448h2v1h-2zM1307 450h1v1h-1zM1301 463h1v1h-1zM1311 441h1v2h-1zM1316 428h1v1h-1zM1317 427h1v1h-1zM1301 460h1v2h-1zM1315 430h1v1h-1zM1334 400h1v2h-1zM1320 420h1v1h-1zM1346 384h1v1h-1zM1335 399h1v1h-1zM1326 411h2v1h-2zM1327 410h1v1h-1zM1332 403h2v2h-2zM1333 401h1v1h-1zM1335 398h2v2h-2zM1337 396h1v2h-1zM1324 413h2v1h-2zM1340 390h1v1h-1zM1350 381h1v1h-1zM1172 400h1v2h-1zM1176 412h1v1h-1zM1173 410h1v1h-1zM1177 411h1v2h-1zM1168 413h1v1h-1zM1175 412h1v1h-1zM1178 415h1v1h-1zM1177 419h2v1h-2zM1171 421h1v1h-1zM1175 422h1v1h-1zM1171 420h1v1h-1zM1178 423h1v2h-1zM1179 430h1v1h-1zM1171 401h1v1h-1zM1171 395h1v2h-1zM1174 407h1v1h-1zM1172 396h2v1h-2zM1177 423h2v1h-2zM1170 392h1v2h-1zM1169 390h1v2h-1zM1173 362h1v1h-1zM1172 358h1v1h-1zM1168 386h1v1h-1zM1171 381h1v1h-1zM1169 387h1v1h-1zM1176 386h1v1h-1zM1167 388h1v1h-1zM1170 387h1v1h-1zM1171 385h1v1h-1zM1166 392h2v1h-2zM1171 392h1v1h-1zM1173 389h1v1h-1zM1169 389h1v1h-1zM1171 376h2v1h-2zM1172 368h1v1h-1zM1172 369h1v1h-1zM1173 343h1v1h-1zM1175 340h2v1h-2zM1168 341h2v2h-2zM1171 343h2v1h-2zM1172 340h2v1h-2zM1181 342h1v1h-1zM1172 341h1v1h-1zM1177 343h2v1h-2zM1172 363h1v2h-1zM1175 344h1v2h-1zM1170 382h2v1h-2zM1175 343h1v1h-1zM1172 362h2v1h-2zM1171 383h1v2h-1zM1174 342h2v1h-2zM1024 543h1v1h-1zM1019 543h1v1h-1zM1029 537h1v1h-1zM1028 539h1v1h-1zM1042 541h1v1h-1zM1018 543h1v1h-1zM1016 544h2v1h-2zM1018 544h2v1h-2zM1015 541h1v1h-1zM1021 543h2v1h-2zM1011 542h1v1h-1zM1018 545h2v1h-2zM1031 542h2v1h-2zM1020 544h1v1h-1zM1027 543h1v1h-1zM1034 541h2v1h-2zM986 559h1v2h-1zM992 556h1v1h-1zM999 551h1v1h-1zM998 552h1v1h-1zM987 556h1v1h-1zM986 558h1v1h-1zM987 558h1v1h-1zM990 559h2v1h-2zM992 559h1v1h-1zM991 557h1v1h-1zM989 560h2v1h-2zM986 556h1v1h-1zM993 556h1v2h-1zM996 554h1v1h-1zM1001 550h1v1h-1zM988 558h1v1h-1zM1041 744h1v1h-1zM1045 737h1v1h-1zM1058 724h1v2h-1zM1058 720h1v1h-1zM1061 719h1v1h-1zM1052 731h1v1h-1zM1040 745h1v2h-1zM1036 752h1v1h-1zM1036 752h1v1h-1zM1040 743h1v2h-1zM1042 742h1v1h-1zM1039 748h1v1h-1zM1059 721h2v1h-2zM1043 740h1v1h-1zM1046 736h1v2h-1zM1041 744h1v1h-1zM1053 728h1v2h-1zM1053 729h2v2h-2zM1038 748h2v1h-2zM1012 792h2v1h-2zM1017 791h2v1h-2zM1018 785h1v1h-1zM1012 788h1v1h-1zM1017 791h2v2h-2zM1015 790h2v1h-2zM1014 787h2v2h-2zM1010 792h1v1h-1zM1012 795h1v2h-1zM1025 766h1v1h-1zM1023 772h1v1h-1zM1024 770h1v1h-1zM1023 771h1v1h-1zM1020 781h1v1h-1zM1017 784h1v2h-1zM1015 787h1v1h-1zM1018 781h1v2h-1zM1017 787h1v2h-1zM1020 781h1v2h-1zM1019 782h1v1h-1zM1015 777h1v1h-1zM1010 797h1v1h-1zM1016 789h1v2h-1zM1016 787h2v2h-2zM1016 790h1v1h-1zM1010 788h2v1h-2zM1014 787h1v1h-1zM1014 786h1v1h-1zM1013 789h1v1h-1zM1015 788h1v1h-1zM1016 791h1v1h-1zM1019 784h1v1h-1zM1014 783h1v1h-1zM1016 782h1v2h-1zM1017 785h1v1h-1zM1016 785h1v1h-1zM1015 784h1v1h-1zM1020 784h1v1h-1zM1018 782h1v2h-1zM1024 770h1v1h-1zM1024 770h1v1h-1zM1017 782h1v1h-1zM1021 782h1v1h-1zM1020 784h1v1h-1zM1017 783h1v1h-1zM1020 784h1v1h-1zM1017 786h1v2h-1zM1011 792h1v1h-1zM851 717h2v1h-2zM854 716h1v1h-1zM854 719h2v1h-2zM851 716h2v1h-2zM856 719h1v1h-1zM856 712h1v1h-1zM854 716h1v1h-1zM852 713h1v2h-1zM855 713h1v1h-1zM851 716h1v1h-1zM852 713h2v1h-2zM855 719h1v1h-1zM851 714h2v2h-2zM855 715h1v1h-1zM852 716h1v1h-1zM851 717h1v1h-1zM851 715h1v1h-1zM858 718h1v2h-1zM853 715h1v1h-1zM853 715h2v1h-2zM852 717h1v1h-1zM854 716h1v1h-1zM851 718h1v1h-1zM852 717h1v1h-1zM857 717h2v2h-2zM857 714h1v1h-1zM854 713h1v1h-1zM853 717h1v2h-1zM855 712h2v1h-2zM855 719h1v1h-1zM856 713h1v1h-1zM855 717h1v1h-1zM853 712h1v1h-1zM858 717h1v1h-1zM857 715h1v1h-1zM1098 434h1v2h-1zM1102 433h1v1h-1zM1101 433h1v2h-1zM1102 437h1v1h-1zM1098 435h1v2h-1zM1098 434h1v1h-1zM1100 436h1v1h-1zM1100 436h1v2h-1zM1102 437h2v1h-2zM1099 434h1v2h-1zM1101 432h1v1h-1zM1100 435h2v2h-2zM1098 435h1v1h-1zM1099 432h1v2h-1zM1100 437h2v2h-2zM1101 433h1v1h-1zM1103 436h1v1h-1zM1101 437h1v1h-1zM1098 436h1v2h-1zM1082 323h1v2h-1zM1079 327h1v1h-1zM1081 323h1v1h-1zM1082 328h1v2h-1zM1083 328h1v1h-1zM1084 327h1v1h-1zM1085 321h1v1h-1zM1081 328h1v1h-1zM1084 323h1v2h-1zM1082 324h2v1h-2zM1087 326h1v1h-1zM1084 326h1v1h-1zM1082 328h2v1h-2zM1081 326h1v2h-1zM1085 325h2v2h-2zM1084 325h2v2h-2zM1086 328h2v1h-2zM1079 326h1v1h-1zM1082 320h1v1h-1zM1083 320h1v1h-1zM1081 323h1v2h-1zM1083 320h1v1h-1zM1085 327h1v1h-1zM1085 324h1v2h-1zM1087 325h2v2h-2zM1084 326h1v2h-1zM1079 327h1v1h-1zM1080 328h1v2h-1zM1087 322h1v1h-1zM1084 321h1v2h-1zM1083 327h1v1h-1zM1080 325h1v1h-1zM1081 326h1v1h-1zM1086 327h1v1h-1zM1081 323h1v1h-1zM1080 323h1v1h-1zM1083 324h1v1h-1zM1084 328h1v1h-1zM1081 325h1v2h-1zM1080 328h1v1h-1zM1084 327h1v1h-1zM1082 324h2v1h-2zM1083 321h1v1h-1zM1078 326h1v2h-1zM1082 323h2v2h-2zM1079 326h1v1h-1zM1082 325h1v1h-1zM1082 326h2v1h-2zM1082 325h1v1h-1zM1080 327h2v1h-2zM1083 321h1v1h-1zM1082 322h1v1h-1zM1084 323h1v1h-1zM1081 320h1v2h-1zM1084 328h1v1h-1zM1547 689h1v1h-1zM1546 687h2v1h-2zM1543 689h1v1h-1zM1546 689h1v1h-1zM1544 687h2v1h-2zM1544 690h1v1h-1zM1545 687h1v2h-1zM1545 691h1v1h-1zM1543 688h1v1h-1zM1544 686h1v1h-1zM1546 686h1v2h-1zM1543 686h1v1h-1zM1545 691h1v1h-1zM1547 688h1v1h-1zM1547 687h1v2h-1zM1542 689h1v2h-1zM1544 687h1v1h-1zM1546 688h1v1h-1zM1547 690h1v1h-1zM1205 781h2v2h-2zM1203 780h1v1h-1zM1205 780h1v1h-1zM1204 779h1v1h-1zM1205 779h1v2h-1zM1204 779h1v1h-1zM1205 780h1v1h-1zM1204 779h1v1h-1zM1087 935h2v1h-2zM1092 932h1v1h-1zM1089 936h1v1h-1zM1092 934h1v1h-1zM1090 935h2v1h-2zM1089 934h2v1h-2zM1088 936h1v2h-1zM1088 933h1v1h-1zM1089 937h1v2h-1zM1089 932h1v1h-1zM1090 934h2v2h-2zM1088 936h1v1h-1zM1091 934h1v1h-1zM1088 937h1v1h-1zM1088 935h1v1h-1zM1091 937h1v1h-1zM1089 934h1v2h-1zM1089 935h1v1h-1zM1088 935h1v1h-1zM977 918h2v1h-2zM973 919h1v1h-1zM972 919h2v1h-2zM976 919h1v1h-1zM977 915h2v1h-2zM976 919h1v2h-1zM973 918h1v1h-1zM975 918h1v2h-1zM972 916h1v1h-1zM973 918h1v2h-1zM975 916h1v1h-1zM975 916h1v1h-1zM972 917h1v1h-1zM976 915h1v1h-1zM973 916h1v2h-1zM976 916h1v2h-1zM974 917h1v2h-1zM973 919h1v2h-1zM973 918h1v1h-1zM1140 825h1v1h-1zM1140 823h1v1h-1zM1145 823h1v2h-1zM1142 826h1v2h-1zM1141 824h1v1h-1zM1142 826h1v1h-1zM1141 824h1v1h-1zM1145 824h1v1h-1zM1143 822h1v1h-1zM1141 825h1v2h-1zM1140 823h1v1h-1zM1143 822h1v2h-1zM1143 822h1v1h-1zM1143 823h1v1h-1zM1143 822h1v1h-1zM1141 825h1v1h-1zM1143 826h1v2h-1zM1145 825h1v1h-1zM1143 826h1v1h-1zM1430 569h1v1h-1zM1431 569h1v1h-1zM1429 571h1v1h-1zM1429 570h1v1h-1zM1430 571h1v1h-1zM1430 572h1v1h-1zM1427 570h1v1h-1zM1428 571h1v1h-1zM1428 569h1v1h-1zM1431 570h2v1h-2zM1430 572h1v1h-1zM1428 572h1v1h-1zM1429 568h1v1h-1zM1429 569h1v1h-1zM1429 572h1v1h-1zM1428 568h1v1h-1zM1430 567h1v1h-1zM1428 568h1v1h-1zM1431 570h2v1h-2zM1436 597h1v2h-1zM1433 598h1v1h-1zM1435 599h1v2h-1zM1435 599h2v1h-2zM1435 598h1v1h-1zM1436 597h1v1h-1zM1436 597h1v1h-1zM1434 596h1v1h-1zM1491 612h2v2h-2zM1489 612h1v1h-1zM1492 614h1v1h-1zM1494 611h1v1h-1zM1493 614h1v1h-1zM1493 610h1v1h-1zM1492 613h1v2h-1zM1490 612h1v1h-1zM1490 611h2v1h-2zM1490 610h1v1h-1zM1492 612h1v2h-1zM1494 612h2v1h-2zM1492 610h1v1h-1zM1493 610h1v1h-1zM1491 614h1v1h-1zM1490 613h1v1h-1zM1489 610h1v1h-1zM1491 613h1v1h-1zM1490 610h1v1h-1zM1546 685h1v2h-1zM1548 686h1v1h-1zM1545 689h1v2h-1zM1544 688h1v1h-1zM1545 686h2v1h-2zM1547 684h1v2h-1zM1545 687h1v1h-1zM1545 686h1v1h-1zM1545 688h1v1h-1zM1546 687h1v1h-1zM1546 687h2v1h-2zM1548 686h2v1h-2zM1545 685h1v1h-1zM1548 686h1v1h-1zM1546 688h1v1h-1zM1545 688h1v1h-1zM1548 688h2v1h-2zM1548 685h2v1h-2zM1549 687h1v1h-1zM1019 826h2v1h-2zM1018 825h2v1h-2zM1018 826h1v1h-1zM1020 826h1v1h-1zM1020 825h1v1h-1zM1021 827h1v1h-1zM1018 827h2v1h-2zM1021 826h1v1h-1zM958 872h1v1h-1zM958 874h1v2h-1zM962 873h2v1h-2zM959 870h1v1h-1zM962 871h1v1h-1zM961 871h2v1h-2zM961 872h1v1h-1zM959 870h1v1h-1zM959 875h2v1h-2zM958 872h1v1h-1zM958 870h1v1h-1zM959 874h2v2h-2zM960 872h1v1h-1zM958 870h1v1h-1zM962 874h1v2h-1zM957 873h1v2h-1zM961 871h2v1h-2zM961 871h1v1h-1zM960 873h2v1h-2zM1166 907h2v1h-2zM1167 901h1v1h-1zM1165 907h2v1h-2zM1165 902h1v1h-1zM1163 903h2v2h-2zM1169 907h1v1h-1zM1166 901h1v1h-1zM1166 906h1v1h-1zM1168 905h1v2h-1zM1166 902h1v1h-1zM1166 901h2v1h-2zM1166 907h2v1h-2zM1170 906h1v1h-1zM1170 903h1v1h-1zM1167 906h1v1h-1zM1169 906h1v1h-1zM1167 902h1v2h-1zM1168 906h1v1h-1zM1167 903h1v1h-1zM1167 902h1v1h-1zM1166 903h1v2h-1zM1169 904h1v1h-1zM1165 902h1v2h-1zM1165 908h2v1h-2zM1165 905h1v2h-1zM1166 901h1v1h-1zM1165 905h1v1h-1zM1168 902h1v2h-1zM1164 902h1v1h-1zM1166 907h1v1h-1zM1164 906h2v1h-2zM1168 902h1v1h-1zM1166 904h1v1h-1zM1168 907h1v1h-1zM1169 907h1v1h-1zM1219 973h1v1h-1zM1219 972h2v2h-2zM1219 974h2v1h-2zM1218 976h2v2h-2zM1218 975h1v1h-1zM1220 975h1v1h-1zM1218 975h2v1h-2zM1218 974h1v2h-1zM1220 973h1v1h-1zM1220 972h1v1h-1zM1218 977h1v1h-1zM1221 976h1v1h-1zM1217 975h1v1h-1zM1221 972h1v1h-1zM1222 976h1v1h-1zM1220 975h1v1h-1zM1219 975h1v1h-1zM1219 974h1v2h-1zM1218 975h1v1h-1zM1189 978h2v1h-2zM1188 978h1v2h-1zM1189 979h1v1h-1zM1190 975h1v1h-1zM1189 977h1v1h-1zM1191 975h1v2h-1zM1189 976h1v1h-1zM1189 975h1v1h-1zM1189 976h1v1h-1zM1187 978h1v1h-1zM1191 977h2v1h-2zM1191 976h1v1h-1zM1187 977h1v1h-1zM1192 978h2v1h-2zM1190 978h2v1h-2zM1188 977h1v1h-1zM1187 977h1v1h-1zM1188 979h1v1h-1zM1187 978h1v1h-1zM1057 759h1v1h-1zM1060 760h2v1h-2zM1060 757h2v1h-2zM1062 759h1v1h-1zM1060 762h2v1h-2zM1062 760h1v1h-1zM1062 758h1v1h-1zM1061 759h1v1h-1zM1057 760h1v1h-1zM1062 759h1v1h-1zM1062 758h2v1h-2zM1058 761h1v1h-1zM1059 761h1v1h-1zM1057 758h1v1h-1zM1059 757h1v1h-1zM1057 761h2v2h-2zM1059 762h1v1h-1zM1061 758h1v1h-1zM1060 761h1v1h-1zM1245 344h1v1h-1zM1248 350h1v1h-1zM1249 348h1v2h-1zM1248 343h1v1h-1zM1247 348h2v1h-2zM1248 348h1v2h-1zM1250 348h1v1h-1zM1246 345h2v1h-2zM1246 343h1v1h-1zM1246 344h1v1h-1zM1245 344h1v1h-1zM1248 346h2v1h-2zM1246 346h1v1h-1zM1251 347h1v1h-1zM1246 345h1v1h-1zM1246 348h1v1h-1zM1249 346h1v1h-1zM1247 347h1v1h-1zM1246 348h1v1h-1zM1248 345h2v1h-2zM1245 346h1v1h-1zM1249 346h1v2h-1zM1250 344h1v1h-1zM1248 350h1v1h-1zM1245 349h1v1h-1zM1246 345h1v2h-1zM1244 348h1v1h-1zM1250 344h1v2h-1zM1250 348h1v1h-1zM1251 346h1v1h-1zM1249 350h2v1h-2zM1245 347h1v1h-1zM1248 347h2v1h-2zM1250 347h1v1h-1zM1247 346h1v1h-1zM1303 471h1v1h-1zM1303 469h2v1h-2zM1305 468h2v1h-2zM1306 471h1v1h-1zM1307 470h1v1h-1zM1304 469h1v1h-1zM1307 471h1v1h-1zM1306 469h1v1h-1zM1307 469h1v2h-1zM1303 471h1v1h-1zM1304 468h1v1h-1zM1304 471h1v1h-1zM1304 468h2v1h-2zM1306 468h2v1h-2zM1304 469h1v1h-1zM1304 468h1v1h-1zM1304 470h2v1h-2zM1303 468h1v1h-1zM1306 470h1v1h-1z" fill="#4d4d4d"/>
<path d="M1310.0 677.5C1310.6 677.9 1313.3 684.6 1315.0 685.0C1316.7 685.4 1317.5 681.9 1320.0 680.0C1322.5 678.1 1326.7 675.2 1330.0 673.8C1333.3 672.3 1336.7 671.0 1340.0 671.2C1343.3 671.5 1347.1 674.0 1350.0 675.0C1352.9 676.0 1356.5 679.2 1357.5 677.5C1358.5 675.8 1356.2 668.8 1356.2 665.0C1356.2 661.2 1356.9 655.0 1357.5 655.0C1358.1 655.0 1359.2 661.7 1360.0 665.0C1360.8 668.3 1360.4 672.1 1362.5 675.0C1364.6 677.9 1370.0 680.0 1372.5 682.5C1375.0 685.0 1376.5 686.7 1377.5 690.0C1378.5 693.3 1379.2 698.8 1378.8 702.5C1378.3 706.2 1376.0 709.2 1375.0 712.5C1374.0 715.8 1373.5 719.6 1372.5 722.5C1371.5 725.4 1369.8 727.1 1368.8 730.0C1367.7 732.9 1367.1 737.1 1366.2 740.0C1365.4 742.9 1363.5 746.0 1363.8 747.5C1364.0 749.0 1367.7 747.7 1367.5 748.8C1367.3 749.8 1364.2 751.9 1362.5 753.8C1360.8 755.6 1359.0 758.3 1357.5 760.0C1356.0 761.7 1355.8 763.3 1353.8 763.8C1351.7 764.2 1348.1 762.3 1345.0 762.5C1341.9 762.7 1337.9 764.2 1335.0 765.0C1332.1 765.8 1328.3 765.8 1327.5 767.5C1326.7 769.2 1329.2 772.5 1330.0 775.0C1330.8 777.5 1333.3 780.4 1332.5 782.5C1331.7 784.6 1327.9 786.0 1325.0 787.5C1322.1 789.0 1315.8 789.2 1315.0 791.2C1314.2 793.3 1319.2 797.3 1320.0 800.0C1320.8 802.7 1318.8 805.4 1320.0 807.5C1321.2 809.6 1325.0 810.6 1327.5 812.5C1330.0 814.4 1332.1 817.3 1335.0 818.8C1337.9 820.2 1342.1 821.0 1345.0 821.2C1347.9 821.5 1351.0 821.5 1352.5 820.0C1354.0 818.5 1352.5 813.8 1353.8 812.5C1355.0 811.2 1358.3 811.7 1360.0 812.5C1361.7 813.3 1362.9 815.8 1363.8 817.5C1364.6 819.2 1363.5 822.3 1365.0 822.5C1366.5 822.7 1371.2 820.0 1372.5 818.8C1373.8 817.5 1373.1 816.5 1372.5 815.0C1371.9 813.5 1369.2 812.1 1368.8 810.0C1368.3 807.9 1369.0 805.0 1370.0 802.5C1371.0 800.0 1372.9 796.9 1375.0 795.0C1377.1 793.1 1379.6 791.9 1382.5 791.2C1385.4 790.6 1389.4 790.4 1392.5 791.2C1395.6 792.1 1399.6 794.0 1401.2 796.2C1402.9 798.5 1402.9 801.9 1402.5 805.0C1402.1 808.1 1400.0 812.1 1398.8 815.0C1397.5 817.9 1396.2 820.6 1395.0 822.5C1393.8 824.4 1391.0 824.6 1391.2 826.2C1391.5 827.9 1395.8 830.2 1396.2 832.5C1396.7 834.8 1395.2 837.5 1393.8 840.0C1392.3 842.5 1389.8 845.4 1387.5 847.5C1385.2 849.6 1382.9 851.2 1380.0 852.5C1377.1 853.8 1371.9 852.9 1370.0 855.0C1368.1 857.1 1370.0 862.3 1368.8 865.0C1367.5 867.7 1365.2 869.4 1362.5 871.2C1359.8 873.1 1355.0 874.8 1352.5 876.2C1350.0 877.7 1347.9 878.8 1347.5 880.0C1347.1 881.2 1350.2 882.5 1350.0 883.8C1349.8 885.0 1347.1 886.5 1346.2 887.5C1345.4 888.5 1345.8 888.3 1345.0 890.0C1344.2 891.7 1342.7 895.4 1341.2 897.5C1339.8 899.6 1337.1 900.4 1336.2 902.5C1335.4 904.6 1334.8 908.5 1336.2 910.0C1337.7 911.5 1342.3 910.4 1345.0 911.2C1347.7 912.1 1350.4 913.1 1352.5 915.0C1354.6 916.9 1355.8 920.0 1357.5 922.5C1359.2 925.0 1360.6 929.2 1362.5 930.0C1364.4 930.8 1367.5 929.2 1368.8 927.5C1370.0 925.8 1369.0 922.3 1370.0 920.0C1371.0 917.7 1373.1 914.6 1375.0 913.8C1376.9 912.9 1379.8 913.5 1381.2 915.0C1382.7 916.5 1382.7 920.2 1383.8 922.5C1384.8 924.8 1385.8 927.9 1387.5 928.8C1389.2 929.6 1391.7 928.5 1393.8 927.5C1395.8 926.5 1397.7 923.5 1400.0 922.5C1402.3 921.5 1405.2 921.7 1407.5 921.2C1409.8 920.8 1411.7 921.9 1413.8 920.0C1415.8 918.1 1419.0 913.8 1420.0 910.0C1421.0 906.2 1419.2 900.6 1420.0 897.5C1420.8 894.4 1422.5 891.9 1425.0 891.2C1427.5 890.6 1431.7 894.0 1435.0 893.8C1438.3 893.5 1441.9 891.2 1445.0 890.0C1448.1 888.8 1452.1 887.9 1453.8 886.2C1455.4 884.6 1455.2 882.3 1455.0 880.0C1454.8 877.7 1452.3 875.0 1452.5 872.5C1452.7 870.0 1455.8 867.9 1456.2 865.0C1456.7 862.1 1454.4 857.9 1455.0 855.0C1455.6 852.1 1457.5 849.1 1460.0 847.5C1462.5 845.9 1466.2 845.5 1470.0 845.5C1473.8 845.5 1479.2 846.1 1482.5 847.5C1485.8 848.9 1489.2 851.7 1490.0 853.8C1490.8 855.8 1486.7 858.5 1487.5 860.0C1488.3 861.5 1491.2 861.7 1495.0 862.5C1498.8 863.3 1497.5 862.1 1510.0 865.0C1522.5 867.9 1558.3 855.8 1570.0 880.0C1581.7 904.2 1608.3 986.7 1580.0 1010.0C1551.7 1033.3 1459.2 1019.7 1400.0 1020.0C1340.8 1020.3 1255.8 1017.0 1225.0 1012.0C1194.2 1007.0 1215.8 994.9 1215.0 990.0C1214.2 985.1 1217.5 986.5 1220.0 982.5C1222.5 978.5 1229.6 968.8 1230.0 966.2C1230.4 963.8 1225.8 967.7 1222.5 967.5C1219.2 967.3 1214.2 966.2 1210.0 965.0C1205.8 963.8 1200.8 962.5 1197.5 960.0C1194.2 957.5 1191.9 953.3 1190.0 950.0C1188.1 946.7 1186.7 943.3 1186.2 940.0C1185.8 936.7 1186.9 932.9 1187.5 930.0C1188.1 927.1 1189.4 925.4 1190.0 922.5C1190.6 919.6 1190.6 915.8 1191.2 912.5C1191.9 909.2 1192.3 904.8 1193.8 902.5C1195.2 900.2 1200.2 900.4 1200.0 898.8C1199.8 897.1 1195.4 894.8 1192.5 892.5C1189.6 890.2 1185.8 887.1 1182.5 885.0C1179.2 882.9 1175.6 881.7 1172.5 880.0C1169.4 878.3 1164.6 877.5 1163.8 875.0C1162.9 872.5 1166.5 868.3 1167.5 865.0C1168.5 861.7 1168.3 857.5 1170.0 855.0C1171.7 852.5 1175.0 851.2 1177.5 850.0C1180.0 848.8 1182.1 847.5 1185.0 847.5C1187.9 847.5 1192.3 849.0 1195.0 850.0C1197.7 851.0 1199.6 854.0 1201.2 853.8C1202.9 853.5 1203.3 849.4 1205.0 848.8C1206.7 848.1 1209.8 848.5 1211.2 850.0C1212.7 851.5 1213.3 855.2 1213.8 857.5C1214.2 859.8 1212.7 861.7 1213.8 863.8C1214.8 865.8 1217.7 869.0 1220.0 870.0C1222.3 871.0 1225.6 871.7 1227.5 870.0C1229.4 868.3 1230.0 863.8 1231.2 860.0C1232.5 856.2 1233.5 850.4 1235.0 847.5C1236.5 844.6 1237.9 842.9 1240.0 842.5C1242.1 842.1 1244.8 843.8 1247.5 845.0C1250.2 846.2 1253.3 848.3 1256.2 850.0C1259.2 851.7 1263.1 855.0 1265.0 855.0C1266.9 855.0 1267.5 851.9 1267.5 850.0C1267.5 848.1 1264.6 845.8 1265.0 843.8C1265.4 841.7 1268.5 839.8 1270.0 837.5C1271.5 835.2 1272.5 832.9 1273.8 830.0C1275.0 827.1 1277.1 822.9 1277.5 820.0C1277.9 817.1 1277.5 815.0 1276.2 812.5C1275.0 810.0 1271.0 807.5 1270.0 805.0C1269.0 802.5 1268.8 800.0 1270.0 797.5C1271.2 795.0 1275.8 792.5 1277.5 790.0C1279.2 787.5 1278.3 785.0 1280.0 782.5C1281.7 780.0 1285.0 777.5 1287.5 775.0C1290.0 772.5 1292.5 770.4 1295.0 767.5C1297.5 764.6 1300.4 758.8 1302.5 757.5C1304.6 756.2 1305.8 759.0 1307.5 760.0C1309.2 761.0 1312.1 764.2 1312.5 763.8C1312.9 763.3 1310.8 759.8 1310.0 757.5C1309.2 755.2 1308.1 752.9 1307.5 750.0C1306.9 747.1 1306.7 743.3 1306.2 740.0C1305.8 736.7 1305.0 733.8 1305.0 730.0C1305.0 726.2 1305.8 721.2 1306.2 717.5C1306.7 713.8 1306.5 710.8 1307.5 707.5C1308.5 704.2 1311.5 700.4 1312.5 697.5C1313.5 694.6 1314.0 692.5 1313.8 690.0C1313.5 687.5 1311.9 684.6 1311.2 682.5C1310.6 680.4 1309.4 677.1 1310.0 677.5Z" fill="#828282"/><path d="M1190.0 930.0C1186.7 929.8 1183.1 928.5 1180.0 928.8C1176.9 929.0 1174.6 930.2 1171.2 931.2C1167.9 932.3 1163.5 933.5 1160.0 935.0C1156.5 936.5 1152.7 938.5 1150.0 940.0C1147.3 941.5 1144.4 942.1 1143.8 943.8C1143.1 945.4 1144.8 948.5 1146.2 950.0C1147.7 951.5 1150.6 952.9 1152.5 952.5C1154.4 952.1 1155.4 949.2 1157.5 947.5C1159.6 945.8 1162.1 943.8 1165.0 942.5C1167.9 941.2 1172.1 939.6 1175.0 940.0C1177.9 940.4 1180.0 944.6 1182.5 945.0C1185.0 945.4 1187.1 943.3 1190.0 942.5C1192.9 941.7 1198.3 942.1 1200.0 940.0C1201.7 937.9 1201.7 931.7 1200.0 930.0C1198.3 928.3 1193.3 930.2 1190.0 930.0Z" fill="#828282"/>
<path d="M1301.5 802.5C1301.6 804.0 1301.3 805.8 1300.5 807.1C1299.8 808.5 1298.5 809.7 1297.1 810.5C1295.8 811.3 1294.0 811.8 1292.5 811.8C1291.0 811.7 1289.4 811.0 1288.1 810.2C1286.8 809.4 1285.5 808.2 1284.8 807.0C1284.0 805.7 1283.7 804.0 1283.6 802.5C1283.6 801.0 1283.8 799.2 1284.5 797.9C1285.2 796.5 1286.5 795.1 1287.8 794.4C1289.2 793.7 1291.0 793.7 1292.5 793.8C1294.0 793.8 1295.6 794.2 1296.9 794.9C1298.2 795.6 1299.4 796.8 1300.1 798.1C1300.9 799.4 1301.5 801.0 1301.5 802.5Z" fill="#c8c8c8"/>
<path d="M1349.6 710.2C1349.6 711.0 1349.0 711.9 1348.0 712.4C1347.0 712.9 1345.1 713.3 1343.8 713.3C1342.4 713.3 1340.6 712.8 1339.6 712.3C1338.7 711.8 1338.1 710.9 1338.0 710.2C1338.0 709.6 1338.6 708.6 1339.5 708.1C1340.5 707.7 1342.3 707.3 1343.8 707.3C1345.2 707.3 1347.0 707.6 1348.0 708.1C1349.0 708.6 1349.6 709.5 1349.6 710.2Z" fill="#c8c8c8"/>
<path d="M1317.5 923.8C1320.8 921.5 1333.3 920.2 1337.5 922.5C1341.7 924.8 1342.9 935.6 1342.5 937.5C1342.1 939.4 1337.9 934.8 1335.0 933.8C1332.1 932.7 1327.9 930.8 1325.0 931.2C1322.1 931.7 1318.8 937.5 1317.5 936.2C1316.2 935.0 1314.2 926.0 1317.5 923.8Z" fill="#c8c8c8"/>
<path d="M1052.5 557.5C1049.4 554.2 1045.4 545.4 1043.8 540.0C1042.1 534.6 1041.9 529.6 1042.5 525.0C1043.1 520.4 1046.2 517.1 1047.5 512.5C1048.8 507.9 1049.4 502.5 1050.0 497.5C1050.6 492.5 1050.2 486.2 1051.2 482.5C1052.3 478.8 1052.3 477.1 1056.2 475.0C1060.2 472.9 1069.0 472.1 1075.0 470.0C1081.0 467.9 1087.1 464.6 1092.5 462.5C1097.9 460.4 1105.0 460.0 1107.5 457.5C1110.0 455.0 1106.2 450.6 1107.5 447.5C1108.8 444.4 1112.1 440.6 1115.0 438.8C1117.9 436.9 1121.7 436.0 1125.0 436.2C1128.3 436.5 1132.5 438.1 1135.0 440.0C1137.5 441.9 1137.5 445.8 1140.0 447.5C1142.5 449.2 1145.8 450.0 1150.0 450.0C1154.2 450.0 1162.5 449.6 1165.0 447.5C1167.5 445.4 1163.8 440.4 1165.0 437.5C1166.2 434.6 1169.6 431.2 1172.5 430.0C1175.4 428.8 1179.2 429.0 1182.5 430.0C1185.8 431.0 1190.0 433.8 1192.5 436.2C1195.0 438.8 1195.0 444.4 1197.5 445.0C1200.0 445.6 1205.0 442.5 1207.5 440.0C1210.0 437.5 1210.0 432.5 1212.5 430.0C1215.0 427.5 1220.0 427.1 1222.5 425.0C1225.0 422.9 1227.3 420.4 1227.5 417.5C1227.7 414.6 1224.6 411.2 1223.8 407.5C1222.9 403.8 1222.3 400.4 1222.5 395.0C1222.7 389.6 1222.9 380.4 1225.0 375.0C1227.1 369.6 1231.7 366.5 1235.0 362.5C1238.3 358.5 1241.7 353.3 1245.0 351.2C1248.3 349.2 1251.9 349.0 1255.0 350.0C1258.1 351.0 1261.7 354.6 1263.8 357.5C1265.8 360.4 1267.5 363.8 1267.5 367.5C1267.5 371.2 1265.8 375.8 1263.8 380.0C1261.7 384.2 1258.1 388.3 1255.0 392.5C1251.9 396.7 1247.9 401.7 1245.0 405.0C1242.1 408.3 1240.0 410.2 1237.5 412.5C1235.0 414.8 1231.2 415.8 1230.0 418.8C1228.8 421.7 1230.8 426.5 1230.0 430.0C1229.2 433.5 1225.8 435.8 1225.0 440.0C1224.2 444.2 1225.4 450.4 1225.0 455.0C1224.6 459.6 1221.2 463.3 1222.5 467.5C1223.8 471.7 1228.8 476.7 1232.5 480.0C1236.2 483.3 1240.8 486.2 1245.0 487.5C1249.2 488.8 1253.8 488.3 1257.5 487.5C1261.2 486.7 1265.4 485.4 1267.5 482.5C1269.6 479.6 1268.3 473.1 1270.0 470.0C1271.7 466.9 1274.2 464.4 1277.5 463.8C1280.8 463.1 1286.7 464.8 1290.0 466.2C1293.3 467.7 1295.4 471.0 1297.5 472.5C1299.6 474.0 1300.4 475.4 1302.5 475.0C1304.6 474.6 1306.2 470.6 1310.0 470.0C1313.8 469.4 1320.0 472.1 1325.0 471.2C1330.0 470.4 1335.8 466.7 1340.0 465.0C1344.2 463.3 1346.2 461.7 1350.0 461.2C1353.8 460.8 1360.0 460.6 1362.5 462.5C1365.0 464.4 1364.6 468.8 1365.0 472.5C1365.4 476.2 1365.8 480.8 1365.0 485.0C1364.2 489.2 1359.2 493.8 1360.0 497.5C1360.8 501.2 1367.5 504.6 1370.0 507.5C1372.5 510.4 1373.3 513.3 1375.0 515.0C1376.7 516.7 1377.5 517.9 1380.0 517.5C1382.5 517.1 1386.7 515.4 1390.0 512.5C1393.3 509.6 1396.2 502.3 1400.0 500.0C1403.8 497.7 1408.3 497.9 1412.5 498.8C1416.7 499.6 1422.1 504.8 1425.0 505.0C1427.9 505.2 1427.5 502.5 1430.0 500.0C1432.5 497.5 1436.2 491.9 1440.0 490.0C1443.8 488.1 1448.3 488.1 1452.5 488.8C1456.7 489.4 1461.2 491.5 1465.0 493.8C1468.8 496.0 1471.7 500.4 1475.0 502.5C1478.3 504.6 1481.2 504.6 1485.0 506.2C1488.8 507.9 1495.0 510.2 1497.5 512.5C1500.0 514.8 1497.9 518.3 1500.0 520.0C1502.1 521.7 1506.7 522.9 1510.0 522.5C1513.3 522.1 1517.1 519.6 1520.0 517.5C1522.9 515.4 1524.6 512.3 1527.5 510.0C1530.4 507.7 1534.2 504.4 1537.5 503.8C1540.8 503.1 1545.0 504.4 1547.5 506.2C1550.0 508.1 1551.2 511.9 1552.5 515.0C1553.8 518.1 1554.2 521.2 1555.0 525.0C1555.8 528.8 1555.8 535.0 1557.5 537.5C1559.2 540.0 1563.3 537.9 1565.0 540.0C1566.7 542.1 1567.3 546.7 1567.5 550.0C1567.7 553.3 1566.9 557.5 1566.2 560.0C1565.6 562.5 1565.6 563.5 1563.8 565.0C1561.9 566.5 1559.0 568.1 1555.0 568.8C1551.0 569.4 1544.6 569.4 1540.0 568.8C1535.4 568.1 1530.3 566.5 1527.5 565.0C1524.7 563.5 1524.2 562.5 1523.0 560.0C1521.8 557.5 1521.8 552.1 1520.0 550.0C1518.2 547.9 1515.0 549.6 1512.5 547.5C1510.0 545.4 1507.5 540.8 1505.0 537.5C1502.5 534.2 1500.0 529.2 1497.5 527.5C1495.0 525.8 1492.9 526.7 1490.0 527.5C1487.1 528.3 1484.2 531.2 1480.0 532.5C1475.8 533.8 1470.0 533.8 1465.0 535.0C1460.0 536.2 1454.6 538.3 1450.0 540.0C1445.4 541.7 1442.1 543.8 1437.5 545.0C1432.9 546.2 1426.7 547.5 1422.5 547.5C1418.3 547.5 1415.4 544.6 1412.5 545.0C1409.6 545.4 1407.1 547.5 1405.0 550.0C1402.9 552.5 1404.6 552.9 1400.0 560.0C1395.4 567.1 1382.9 586.2 1377.5 592.5C1372.1 598.8 1370.8 595.8 1367.5 597.5C1364.2 599.2 1360.4 600.4 1357.5 602.5C1354.6 604.6 1350.8 606.7 1350.0 610.0C1349.2 613.3 1352.5 618.3 1352.5 622.5C1352.5 626.7 1350.0 630.8 1350.0 635.0C1350.0 639.2 1352.5 643.3 1352.5 647.5C1352.5 651.7 1352.1 656.7 1350.0 660.0C1347.9 663.3 1342.2 666.2 1340.0 667.5C1337.8 668.8 1338.2 668.3 1336.9 668.0C1335.6 667.7 1333.8 667.1 1332.3 665.8C1330.8 664.5 1328.8 660.2 1327.7 660.0C1326.6 659.8 1326.6 663.8 1325.4 664.6C1324.2 665.4 1322.5 665.8 1320.8 664.6C1319.1 663.5 1316.9 659.4 1315.0 657.7C1313.1 656.0 1311.7 655.4 1309.2 654.2C1306.7 653.1 1302.3 651.8 1300.0 650.8C1297.7 649.8 1295.8 649.7 1295.4 648.5C1295.0 647.3 1297.9 645.5 1297.7 643.8C1297.5 642.0 1295.7 638.4 1294.2 638.0C1292.7 637.6 1290.8 640.3 1288.5 641.5C1286.2 642.7 1282.7 645.6 1280.4 645.0C1278.1 644.4 1276.9 640.9 1274.6 638.0C1272.3 635.1 1269.2 629.6 1266.5 627.7C1263.8 625.8 1259.1 625.4 1258.5 626.5C1257.9 627.6 1261.1 632.3 1263.0 634.6C1264.9 636.9 1268.1 638.7 1270.0 640.4C1271.9 642.1 1273.1 643.3 1274.6 645.0C1276.1 646.7 1277.3 649.6 1279.2 650.8C1281.1 652.0 1284.1 650.9 1286.0 652.0C1287.9 653.1 1289.4 655.6 1290.8 657.7C1292.2 659.8 1292.7 662.5 1294.2 664.6C1295.7 666.7 1299.0 668.5 1300.0 670.4C1301.0 672.3 1300.8 674.3 1300.0 676.0C1299.2 677.7 1296.7 679.2 1295.4 680.8C1294.1 682.4 1292.7 683.4 1292.0 685.4C1291.3 687.4 1290.2 690.3 1291.0 693.0C1291.8 695.7 1295.0 698.7 1296.5 701.5C1298.0 704.3 1299.0 706.5 1300.0 710.0C1301.0 713.5 1301.7 718.3 1302.5 722.5C1303.3 726.7 1305.0 731.2 1305.0 735.0C1305.0 738.8 1303.8 741.7 1302.5 745.0C1301.2 748.3 1299.6 751.7 1297.5 755.0C1295.4 758.3 1292.5 761.7 1290.0 765.0C1287.5 768.3 1285.8 773.3 1282.5 775.0C1279.2 776.7 1273.3 776.2 1270.0 775.0C1266.7 773.8 1265.0 770.0 1262.5 767.5C1260.0 765.0 1257.5 760.0 1255.0 760.0C1252.5 760.0 1250.0 765.0 1247.5 767.5C1245.0 770.0 1242.1 772.1 1240.0 775.0C1237.9 777.9 1237.1 781.7 1235.0 785.0C1232.9 788.3 1230.4 791.7 1227.5 795.0C1224.6 798.3 1221.2 802.1 1217.5 805.0C1213.8 807.9 1209.2 811.7 1205.0 812.5C1200.8 813.3 1196.2 811.7 1192.5 810.0C1188.8 808.3 1184.6 805.4 1182.5 802.5C1180.4 799.6 1181.2 796.2 1180.0 792.5C1178.8 788.8 1175.8 784.2 1175.0 780.0C1174.2 775.8 1176.2 771.2 1175.0 767.5C1173.8 763.8 1168.3 757.9 1167.5 757.5C1166.7 757.1 1170.0 761.7 1170.0 765.0C1170.0 768.3 1169.2 774.2 1167.5 777.5C1165.8 780.8 1162.9 782.9 1160.0 785.0C1157.1 787.1 1152.9 788.8 1150.0 790.0C1147.1 791.2 1143.5 790.8 1142.5 792.5C1141.5 794.2 1144.4 797.1 1143.8 800.0C1143.1 802.9 1139.2 807.1 1138.8 810.0C1138.3 812.9 1140.6 814.6 1141.2 817.5C1141.9 820.4 1143.5 824.6 1142.5 827.5C1141.5 830.4 1137.3 832.9 1135.0 835.0C1132.7 837.1 1129.4 837.5 1128.8 840.0C1128.1 842.5 1131.2 846.7 1131.2 850.0C1131.2 853.3 1129.6 856.7 1128.8 860.0C1127.9 863.3 1126.9 866.7 1126.2 870.0C1125.6 873.3 1125.6 876.7 1125.0 880.0C1124.4 883.3 1124.2 887.7 1122.5 890.0C1120.8 892.3 1117.5 893.3 1115.0 893.8C1112.5 894.2 1110.0 894.0 1107.5 892.5C1105.0 891.0 1101.5 887.9 1100.0 885.0C1098.5 882.1 1099.4 878.8 1098.8 875.0C1098.1 871.2 1097.5 866.2 1096.2 862.5C1095.0 858.8 1092.5 855.8 1091.2 852.5C1090.0 849.2 1089.0 846.2 1088.8 842.5C1088.5 838.8 1089.2 833.8 1090.0 830.0C1090.8 826.2 1092.9 823.3 1093.8 820.0C1094.6 816.7 1094.0 813.3 1095.0 810.0C1096.0 806.7 1097.9 802.1 1100.0 800.0C1102.1 797.9 1105.4 800.0 1107.5 797.5C1109.6 795.0 1110.4 788.3 1112.5 785.0C1114.6 781.7 1118.3 780.8 1120.0 777.5C1121.7 774.2 1122.5 769.2 1122.5 765.0C1122.5 760.8 1121.7 756.7 1120.0 752.5C1118.3 748.3 1115.4 744.2 1112.5 740.0C1109.6 735.8 1105.8 730.8 1102.5 727.5C1099.2 724.2 1096.2 721.2 1092.5 720.0C1088.8 718.8 1083.8 718.8 1080.0 720.0C1076.2 721.2 1073.3 724.2 1070.0 727.5C1066.7 730.8 1063.8 736.9 1060.0 740.0C1056.2 743.1 1050.8 746.7 1047.5 746.2C1044.2 745.8 1040.6 740.6 1040.0 737.5C1039.4 734.4 1043.3 731.2 1043.8 727.5C1044.2 723.8 1043.5 719.2 1042.5 715.0C1041.5 710.8 1040.4 704.6 1037.5 702.5C1034.6 700.4 1029.6 701.7 1025.0 702.5C1020.4 703.3 1015.0 706.2 1010.0 707.5C1005.0 708.8 1000.0 709.2 995.0 710.0C990.0 710.8 985.0 712.5 980.0 712.5C975.0 712.5 970.0 710.8 965.0 710.0C960.0 709.2 954.2 708.8 950.0 707.5C945.8 706.2 942.7 705.0 940.0 702.5C937.3 700.0 934.2 695.8 933.8 692.5C933.3 689.2 934.8 685.0 937.5 682.5C940.2 680.0 945.4 677.9 950.0 677.5C954.6 677.1 960.0 680.4 965.0 680.0C970.0 679.6 975.4 676.7 980.0 675.0C984.6 673.3 988.3 671.2 992.5 670.0C996.7 668.8 1001.2 667.9 1005.0 667.5C1008.8 667.1 1012.9 668.3 1015.0 667.5C1017.1 666.7 1018.3 664.6 1017.5 662.5C1016.7 660.4 1011.2 657.9 1010.0 655.0C1008.8 652.1 1008.8 647.9 1010.0 645.0C1011.2 642.1 1014.2 638.3 1017.5 637.5C1020.8 636.7 1026.2 638.8 1030.0 640.0C1033.8 641.2 1036.7 644.6 1040.0 645.0C1043.3 645.4 1047.5 643.5 1050.0 642.5C1052.5 641.5 1055.0 640.2 1055.0 638.8C1055.0 637.3 1052.5 634.4 1050.0 633.8C1047.5 633.1 1043.3 635.2 1040.0 635.0C1036.7 634.8 1033.3 633.8 1030.0 632.5C1026.7 631.2 1022.1 630.0 1020.0 627.5C1017.9 625.0 1019.2 620.8 1017.5 617.5C1015.8 614.2 1012.3 611.2 1010.0 607.5C1007.7 603.8 1005.4 599.2 1003.8 595.0C1002.1 590.8 999.8 585.8 1000.0 582.5C1000.2 579.2 1001.7 575.8 1005.0 575.0C1008.3 574.2 1015.0 577.9 1020.0 577.5C1025.0 577.1 1030.0 572.9 1035.0 572.5C1040.0 572.1 1045.8 575.4 1050.0 575.0C1054.2 574.6 1057.9 572.5 1060.0 570.0C1062.1 567.5 1063.8 562.1 1062.5 560.0C1061.2 557.9 1055.6 560.8 1052.5 557.5Z" fill="#0db80d"/>
<path d="M1012.1 457.0C1012.0 458.8 1013.8 460.6 1013.6 462.2C1013.4 463.9 1012.0 465.7 1010.7 466.9C1009.3 468.1 1007.3 468.5 1005.5 469.3C1003.7 470.0 1001.8 471.6 1000.0 471.5C998.2 471.3 996.7 469.1 994.9 468.3C993.2 467.6 990.9 467.8 989.5 466.7C988.1 465.7 987.3 463.7 986.7 462.1C986.1 460.5 985.6 458.7 985.7 457.0C985.8 455.3 986.7 453.8 987.2 452.1C987.8 450.4 988.0 448.3 989.1 446.9C990.2 445.4 992.1 443.8 993.9 443.4C995.7 442.9 998.1 443.9 1000.0 444.1C1001.9 444.3 1004.2 443.6 1005.6 444.4C1007.1 445.2 1007.2 447.8 1008.6 449.0C1009.9 450.2 1013.1 450.4 1013.7 451.7C1014.3 453.1 1012.1 455.2 1012.1 457.0Z" fill="#0db80d"/>
<path d="M1107.3 416.0C1107.5 417.4 1107.3 419.5 1106.6 420.7C1105.9 421.9 1104.3 423.0 1103.0 423.3C1101.8 423.6 1100.4 422.8 1099.3 422.2C1098.1 421.7 1097.1 421.0 1096.3 420.0C1095.6 418.9 1094.6 417.2 1094.7 416.0C1094.8 414.8 1096.1 413.6 1096.8 412.5C1097.6 411.4 1098.2 409.8 1099.2 409.4C1100.1 409.0 1101.6 409.5 1102.7 410.0C1103.7 410.5 1104.5 411.4 1105.3 412.4C1106.1 413.4 1107.1 414.6 1107.3 416.0Z" fill="#0db80d"/>
<path d="M1090.7 330.0C1090.8 330.5 1090.7 331.2 1090.2 331.5C1089.8 331.8 1088.7 331.9 1088.0 331.9C1087.3 331.8 1086.5 331.7 1086.0 331.3C1085.5 331.0 1085.1 330.5 1085.1 330.0C1085.0 329.5 1085.2 328.8 1085.7 328.5C1086.2 328.2 1087.3 328.1 1088.0 328.2C1088.7 328.2 1089.6 328.3 1090.1 328.6C1090.6 328.9 1090.7 329.5 1090.7 330.0Z" fill="#0db80d"/>
<path d="M1100.0 975.0C1098.5 972.1 1101.7 966.2 1103.8 962.5C1105.8 958.8 1109.8 956.2 1112.5 952.5C1115.2 948.8 1117.1 942.9 1120.0 940.0C1122.9 937.1 1127.1 935.4 1130.0 935.0C1132.9 934.6 1136.5 935.4 1137.5 937.5C1138.5 939.6 1134.8 945.4 1136.2 947.5C1137.7 949.6 1144.0 947.9 1146.2 950.0C1148.5 952.1 1149.8 957.1 1150.0 960.0C1150.2 962.9 1149.6 965.0 1147.5 967.5C1145.4 970.0 1141.2 972.9 1137.5 975.0C1133.8 977.1 1129.2 979.2 1125.0 980.0C1120.8 980.8 1116.7 980.8 1112.5 980.0C1108.3 979.2 1101.5 977.9 1100.0 975.0Z" fill="#0db80d"/>
<g clip-path="url(#cO)"><rect x="920" y="320" width="660" height="670" filter="url(#fO)"/><path d="M1072.5 560.0C1070.4 557.5 1064.6 550.8 1062.5 545.0C1060.4 539.2 1059.6 530.8 1060.0 525.0C1060.4 519.2 1063.3 514.6 1065.0 510.0C1066.7 505.4 1068.3 500.8 1070.0 497.5C1071.7 494.2 1072.5 492.1 1075.0 490.0C1077.5 487.9 1080.8 487.5 1085.0 485.0C1089.2 482.5 1095.4 478.8 1100.0 475.0C1104.6 471.2 1109.6 465.8 1112.5 462.5C1115.4 459.2 1115.0 456.9 1117.5 455.0C1120.0 453.1 1124.2 451.2 1127.5 451.2C1130.8 451.2 1134.8 452.7 1137.5 455.0C1140.2 457.3 1141.7 462.1 1143.8 465.0C1145.8 467.9 1146.5 470.8 1150.0 472.5C1153.5 474.2 1160.8 474.6 1165.0 475.0C1169.2 475.4 1171.2 474.2 1175.0 475.0C1178.8 475.8 1183.8 478.1 1187.5 480.0C1191.2 481.9 1194.2 484.2 1197.5 486.2C1200.8 488.3 1203.3 491.0 1207.5 492.5C1211.7 494.0 1217.9 495.4 1222.5 495.0C1227.1 494.6 1231.2 489.6 1235.0 490.0C1238.8 490.4 1241.2 495.8 1245.0 497.5C1248.8 499.2 1253.8 500.4 1257.5 500.0C1261.2 499.6 1264.2 496.7 1267.5 495.0C1270.8 493.3 1273.8 490.0 1277.5 490.0C1281.2 490.0 1286.2 493.3 1290.0 495.0C1293.8 496.7 1297.9 497.1 1300.0 500.0C1302.1 502.9 1300.8 511.2 1302.5 512.5C1304.2 513.8 1308.4 510.1 1310.0 507.5C1311.6 504.9 1310.2 499.9 1312.0 497.0C1313.8 494.1 1317.8 490.8 1320.6 490.0C1323.4 489.2 1327.0 489.4 1329.0 492.0C1331.0 494.6 1331.8 501.5 1332.7 505.8C1333.6 510.1 1332.8 514.5 1334.5 518.0C1336.2 521.5 1339.2 524.6 1343.0 526.6C1346.8 528.6 1352.4 528.9 1357.0 530.0C1361.6 531.1 1366.8 532.3 1370.8 533.5C1374.8 534.7 1378.1 535.2 1381.0 537.0C1383.9 538.8 1387.4 541.2 1388.0 544.0C1388.6 546.8 1386.4 551.2 1384.7 554.0C1383.0 556.8 1380.0 558.3 1377.7 561.0C1375.4 563.7 1373.1 567.1 1370.8 570.0C1368.5 572.9 1366.9 575.7 1364.0 578.5C1361.1 581.3 1356.7 584.1 1353.5 587.0C1350.3 589.9 1346.8 592.8 1344.8 596.0C1342.8 599.2 1342.0 602.0 1341.4 606.0C1340.8 610.0 1340.8 616.0 1341.4 620.0C1342.0 624.0 1344.4 626.2 1345.0 630.0C1345.6 633.8 1345.8 638.8 1345.0 642.5C1344.2 646.2 1342.5 650.0 1340.0 652.5C1337.5 655.0 1333.8 657.1 1330.0 657.5C1326.2 657.9 1321.7 655.8 1317.5 655.0C1313.3 654.2 1308.8 654.2 1305.0 652.5C1301.2 650.8 1298.3 647.5 1295.0 645.0C1291.7 642.5 1288.3 639.6 1285.0 637.5C1281.7 635.4 1278.3 634.6 1275.0 632.5C1271.7 630.4 1267.9 625.8 1265.0 625.0C1262.1 624.2 1257.9 625.4 1257.5 627.5C1257.1 629.6 1260.4 634.2 1262.5 637.5C1264.6 640.8 1267.5 644.2 1270.0 647.5C1272.5 650.8 1275.0 654.6 1277.5 657.5C1280.0 660.4 1283.3 662.1 1285.0 665.0C1286.7 667.9 1288.3 671.7 1287.5 675.0C1286.7 678.3 1282.9 682.1 1280.0 685.0C1277.1 687.9 1270.4 690.0 1270.0 692.5C1269.6 695.0 1275.0 697.1 1277.5 700.0C1280.0 702.9 1282.9 706.7 1285.0 710.0C1287.1 713.3 1288.8 716.2 1290.0 720.0C1291.2 723.8 1292.5 728.3 1292.5 732.5C1292.5 736.7 1291.2 741.2 1290.0 745.0C1288.8 748.8 1287.5 752.5 1285.0 755.0C1282.5 757.5 1278.8 759.6 1275.0 760.0C1271.2 760.4 1266.7 758.8 1262.5 757.5C1258.3 756.2 1253.8 752.1 1250.0 752.5C1246.2 752.9 1243.3 757.1 1240.0 760.0C1236.7 762.9 1233.3 766.7 1230.0 770.0C1226.7 773.3 1223.3 777.1 1220.0 780.0C1216.7 782.9 1213.3 785.4 1210.0 787.5C1206.7 789.6 1203.3 792.9 1200.0 792.5C1196.7 792.1 1192.9 787.9 1190.0 785.0C1187.1 782.1 1185.0 778.3 1182.5 775.0C1180.0 771.7 1177.5 767.9 1175.0 765.0C1172.5 762.1 1170.0 759.2 1167.5 757.5C1165.0 755.8 1162.5 755.0 1160.0 755.0C1157.5 755.0 1154.6 758.3 1152.5 757.5C1150.4 756.7 1149.6 752.9 1147.5 750.0C1145.4 747.1 1142.1 743.3 1140.0 740.0C1137.9 736.7 1137.5 733.3 1135.0 730.0C1132.5 726.7 1127.9 723.3 1125.0 720.0C1122.1 716.7 1120.0 713.3 1117.5 710.0C1115.0 706.7 1112.9 703.3 1110.0 700.0C1107.1 696.7 1103.3 692.5 1100.0 690.0C1096.7 687.5 1092.5 687.1 1090.0 685.0C1087.5 682.9 1085.0 680.8 1085.0 677.5C1085.0 674.2 1090.4 667.9 1090.0 665.0C1089.6 662.1 1085.0 662.1 1082.5 660.0C1080.0 657.9 1077.1 655.4 1075.0 652.5C1072.9 649.6 1070.4 646.2 1070.0 642.5C1069.6 638.8 1070.8 634.2 1072.5 630.0C1074.2 625.8 1077.5 621.7 1080.0 617.5C1082.5 613.3 1085.0 609.6 1087.5 605.0C1090.0 600.4 1092.9 595.0 1095.0 590.0C1097.1 585.0 1100.8 578.8 1100.0 575.0C1099.2 571.2 1094.2 570.0 1090.0 567.5C1085.8 565.0 1077.9 561.2 1075.0 560.0C1072.1 558.8 1074.6 562.5 1072.5 560.0Z" fill="none" stroke="#ff5a00" stroke-width="13" stroke-linejoin="round"/><path d="M1050.5 610.0C1050.3 611.6 1049.7 612.9 1049.1 614.4C1048.5 615.9 1048.3 618.0 1047.1 618.9C1046.0 619.8 1043.8 619.3 1042.2 619.6C1040.6 619.9 1039.0 621.0 1037.5 620.8C1036.1 620.6 1034.4 619.4 1033.4 618.3C1032.3 617.2 1031.9 615.7 1031.1 614.3C1030.4 612.9 1029.0 611.4 1029.0 610.0C1029.0 608.6 1030.5 607.2 1031.2 605.8C1031.9 604.3 1032.1 602.4 1033.3 601.5C1034.4 600.6 1036.3 600.6 1037.8 600.4C1039.3 600.2 1040.7 600.1 1042.2 600.3C1043.7 600.5 1045.3 600.8 1046.7 601.6C1048.1 602.3 1050.1 603.4 1050.7 604.9C1051.3 606.3 1050.8 608.4 1050.5 610.0Z" fill="none" stroke="#ff5a00" stroke-width="9"/><path d="M1022.5 657.5C1024.6 653.5 1030.4 652.1 1035.0 651.2C1039.6 650.4 1045.8 651.0 1050.0 652.5C1054.2 654.0 1055.8 657.9 1060.0 660.0C1064.2 662.1 1071.7 662.1 1075.0 665.0C1078.3 667.9 1079.2 672.9 1080.0 677.5C1080.8 682.1 1081.2 688.8 1080.0 692.5C1078.8 696.2 1075.8 699.6 1072.5 700.0C1069.2 700.4 1063.8 697.5 1060.0 695.0C1056.2 692.5 1054.2 686.7 1050.0 685.0C1045.8 683.3 1039.6 686.7 1035.0 685.0C1030.4 683.3 1024.6 679.6 1022.5 675.0C1020.4 670.4 1020.4 661.5 1022.5 657.5Z" fill="none" stroke="#ff5a00" stroke-width="9"/><path d="M1140.0 762.0C1142.0 760.0 1146.7 757.4 1149.0 757.7C1151.3 758.0 1153.5 761.2 1153.8 763.8C1154.1 766.3 1152.1 770.2 1150.8 773.0C1149.5 775.8 1148.0 779.8 1146.0 780.8C1144.0 781.8 1140.0 780.8 1138.5 779.0C1137.0 777.2 1136.8 772.8 1137.0 770.0C1137.2 767.2 1138.0 764.0 1140.0 762.0Z" fill="none" stroke="#ff5a00" stroke-width="9"/><path d="M1464.0 513.0C1463.8 514.5 1463.7 515.7 1463.3 517.1C1462.8 518.4 1462.2 519.9 1461.1 521.1C1460.0 522.2 1458.3 523.5 1456.7 523.8C1455.1 524.1 1453.1 523.5 1451.5 522.9C1449.9 522.4 1448.7 521.5 1447.3 520.6C1445.9 519.8 1443.5 519.1 1443.0 517.8C1442.4 516.6 1444.2 514.6 1444.2 513.0C1444.2 511.4 1442.7 509.5 1443.2 508.3C1443.8 507.1 1446.1 506.3 1447.5 505.6C1448.9 504.9 1450.3 504.3 1451.8 504.1C1453.2 503.8 1454.8 503.9 1456.2 504.1C1457.7 504.4 1459.1 504.8 1460.5 505.5C1461.9 506.2 1464.1 507.1 1464.7 508.3C1465.2 509.6 1464.2 511.5 1464.0 513.0Z" fill="none" stroke="#ff5a00" stroke-width="9"/><path d="M1547.4 539.0C1547.5 540.9 1547.7 543.0 1547.3 544.8C1547.0 546.5 1546.1 548.4 1545.2 549.5C1544.2 550.6 1542.9 550.9 1541.7 551.3C1540.6 551.7 1539.2 552.4 1538.2 551.8C1537.2 551.3 1536.3 549.4 1535.5 548.1C1534.8 546.8 1534.0 545.6 1533.6 544.0C1533.1 542.5 1532.7 540.8 1532.6 539.0C1532.4 537.2 1532.1 534.8 1532.5 533.1C1532.9 531.5 1534.1 530.1 1535.1 529.0C1536.1 528.0 1537.2 527.4 1538.3 526.9C1539.4 526.4 1540.7 525.7 1541.8 526.1C1542.9 526.4 1544.1 527.7 1544.9 529.0C1545.8 530.2 1546.5 532.0 1546.9 533.6C1547.3 535.3 1547.3 537.1 1547.4 539.0Z" fill="none" stroke="#ff5a00" stroke-width="9"/><path d="M1389.4 544.0C1389.5 545.3 1389.1 547.0 1388.7 548.1C1388.2 549.2 1387.2 549.8 1386.5 550.6C1385.8 551.4 1385.2 552.6 1384.4 552.9C1383.5 553.3 1382.6 553.0 1381.7 552.8C1380.8 552.6 1379.6 552.5 1378.9 551.7C1378.2 550.9 1377.6 549.4 1377.3 548.1C1377.0 546.8 1377.4 545.4 1377.3 544.0C1377.3 542.6 1376.6 540.7 1377.0 539.6C1377.4 538.6 1378.8 538.3 1379.6 537.6C1380.4 536.9 1380.9 535.9 1381.7 535.4C1382.5 534.9 1383.6 534.3 1384.4 534.7C1385.2 535.0 1385.8 536.6 1386.4 537.6C1387.1 538.5 1387.9 539.0 1388.4 540.1C1388.9 541.2 1389.4 542.7 1389.4 544.0Z" fill="none" stroke="#ff5a00" stroke-width="9"/><path d="M1107.5 815.0C1111.5 812.1 1121.2 811.7 1125.0 812.5C1128.8 813.3 1129.4 816.7 1130.0 820.0C1130.6 823.3 1130.4 828.3 1128.8 832.5C1127.1 836.7 1122.7 842.5 1120.0 845.0C1117.3 847.5 1115.0 848.3 1112.5 847.5C1110.0 846.7 1106.9 842.9 1105.0 840.0C1103.1 837.1 1100.8 834.2 1101.2 830.0C1101.7 825.8 1103.5 817.9 1107.5 815.0Z" fill="none" stroke="#ff5a00" stroke-width="9"/><rect x="920" y="320" width="660" height="670" filter="url(#fG2)"/><path d="M1052.5 557.5C1049.4 554.2 1045.4 545.4 1043.8 540.0C1042.1 534.6 1041.9 529.6 1042.5 525.0C1043.1 520.4 1046.2 517.1 1047.5 512.5C1048.8 507.9 1049.4 502.5 1050.0 497.5C1050.6 492.5 1050.2 486.2 1051.2 482.5C1052.3 478.8 1052.3 477.1 1056.2 475.0C1060.2 472.9 1069.0 472.1 1075.0 470.0C1081.0 467.9 1087.1 464.6 1092.5 462.5C1097.9 460.4 1105.0 460.0 1107.5 457.5C1110.0 455.0 1106.2 450.6 1107.5 447.5C1108.8 444.4 1112.1 440.6 1115.0 438.8C1117.9 436.9 1121.7 436.0 1125.0 436.2C1128.3 436.5 1132.5 438.1 1135.0 440.0C1137.5 441.9 1137.5 445.8 1140.0 447.5C1142.5 449.2 1145.8 450.0 1150.0 450.0C1154.2 450.0 1162.5 449.6 1165.0 447.5C1167.5 445.4 1163.8 440.4 1165.0 437.5C1166.2 434.6 1169.6 431.2 1172.5 430.0C1175.4 428.8 1179.2 429.0 1182.5 430.0C1185.8 431.0 1190.0 433.8 1192.5 436.2C1195.0 438.8 1195.0 444.4 1197.5 445.0C1200.0 445.6 1205.0 442.5 1207.5 440.0C1210.0 437.5 1210.0 432.5 1212.5 430.0C1215.0 427.5 1220.0 427.1 1222.5 425.0C1225.0 422.9 1227.3 420.4 1227.5 417.5C1227.7 414.6 1224.6 411.2 1223.8 407.5C1222.9 403.8 1222.3 400.4 1222.5 395.0C1222.7 389.6 1222.9 380.4 1225.0 375.0C1227.1 369.6 1231.7 366.5 1235.0 362.5C1238.3 358.5 1241.7 353.3 1245.0 351.2C1248.3 349.2 1251.9 349.0 1255.0 350.0C1258.1 351.0 1261.7 354.6 1263.8 357.5C1265.8 360.4 1267.5 363.8 1267.5 367.5C1267.5 371.2 1265.8 375.8 1263.8 380.0C1261.7 384.2 1258.1 388.3 1255.0 392.5C1251.9 396.7 1247.9 401.7 1245.0 405.0C1242.1 408.3 1240.0 410.2 1237.5 412.5C1235.0 414.8 1231.2 415.8 1230.0 418.8C1228.8 421.7 1230.8 426.5 1230.0 430.0C1229.2 433.5 1225.8 435.8 1225.0 440.0C1224.2 444.2 1225.4 450.4 1225.0 455.0C1224.6 459.6 1221.2 463.3 1222.5 467.5C1223.8 471.7 1228.8 476.7 1232.5 480.0C1236.2 483.3 1240.8 486.2 1245.0 487.5C1249.2 488.8 1253.8 488.3 1257.5 487.5C1261.2 486.7 1265.4 485.4 1267.5 482.5C1269.6 479.6 1268.3 473.1 1270.0 470.0C1271.7 466.9 1274.2 464.4 1277.5 463.8C1280.8 463.1 1286.7 464.8 1290.0 466.2C1293.3 467.7 1295.4 471.0 1297.5 472.5C1299.6 474.0 1300.4 475.4 1302.5 475.0C1304.6 474.6 1306.2 470.6 1310.0 470.0C1313.8 469.4 1320.0 472.1 1325.0 471.2C1330.0 470.4 1335.8 466.7 1340.0 465.0C1344.2 463.3 1346.2 461.7 1350.0 461.2C1353.8 460.8 1360.0 460.6 1362.5 462.5C1365.0 464.4 1364.6 468.8 1365.0 472.5C1365.4 476.2 1365.8 480.8 1365.0 485.0C1364.2 489.2 1359.2 493.8 1360.0 497.5C1360.8 501.2 1367.5 504.6 1370.0 507.5C1372.5 510.4 1373.3 513.3 1375.0 515.0C1376.7 516.7 1377.5 517.9 1380.0 517.5C1382.5 517.1 1386.7 515.4 1390.0 512.5C1393.3 509.6 1396.2 502.3 1400.0 500.0C1403.8 497.7 1408.3 497.9 1412.5 498.8C1416.7 499.6 1422.1 504.8 1425.0 505.0C1427.9 505.2 1427.5 502.5 1430.0 500.0C1432.5 497.5 1436.2 491.9 1440.0 490.0C1443.8 488.1 1448.3 488.1 1452.5 488.8C1456.7 489.4 1461.2 491.5 1465.0 493.8C1468.8 496.0 1471.7 500.4 1475.0 502.5C1478.3 504.6 1481.2 504.6 1485.0 506.2C1488.8 507.9 1495.0 510.2 1497.5 512.5C1500.0 514.8 1497.9 518.3 1500.0 520.0C1502.1 521.7 1506.7 522.9 1510.0 522.5C1513.3 522.1 1517.1 519.6 1520.0 517.5C1522.9 515.4 1524.6 512.3 1527.5 510.0C1530.4 507.7 1534.2 504.4 1537.5 503.8C1540.8 503.1 1545.0 504.4 1547.5 506.2C1550.0 508.1 1551.2 511.9 1552.5 515.0C1553.8 518.1 1554.2 521.2 1555.0 525.0C1555.8 528.8 1555.8 535.0 1557.5 537.5C1559.2 540.0 1563.3 537.9 1565.0 540.0C1566.7 542.1 1567.3 546.7 1567.5 550.0C1567.7 553.3 1566.9 557.5 1566.2 560.0C1565.6 562.5 1565.6 563.5 1563.8 565.0C1561.9 566.5 1559.0 568.1 1555.0 568.8C1551.0 569.4 1544.6 569.4 1540.0 568.8C1535.4 568.1 1530.3 566.5 1527.5 565.0C1524.7 563.5 1524.2 562.5 1523.0 560.0C1521.8 557.5 1521.8 552.1 1520.0 550.0C1518.2 547.9 1515.0 549.6 1512.5 547.5C1510.0 545.4 1507.5 540.8 1505.0 537.5C1502.5 534.2 1500.0 529.2 1497.5 527.5C1495.0 525.8 1492.9 526.7 1490.0 527.5C1487.1 528.3 1484.2 531.2 1480.0 532.5C1475.8 533.8 1470.0 533.8 1465.0 535.0C1460.0 536.2 1454.6 538.3 1450.0 540.0C1445.4 541.7 1442.1 543.8 1437.5 545.0C1432.9 546.2 1426.7 547.5 1422.5 547.5C1418.3 547.5 1415.4 544.6 1412.5 545.0C1409.6 545.4 1407.1 547.5 1405.0 550.0C1402.9 552.5 1404.6 552.9 1400.0 560.0C1395.4 567.1 1382.9 586.2 1377.5 592.5C1372.1 598.8 1370.8 595.8 1367.5 597.5C1364.2 599.2 1360.4 600.4 1357.5 602.5C1354.6 604.6 1350.8 606.7 1350.0 610.0C1349.2 613.3 1352.5 618.3 1352.5 622.5C1352.5 626.7 1350.0 630.8 1350.0 635.0C1350.0 639.2 1352.5 643.3 1352.5 647.5C1352.5 651.7 1352.1 656.7 1350.0 660.0C1347.9 663.3 1342.2 666.2 1340.0 667.5C1337.8 668.8 1338.2 668.3 1336.9 668.0C1335.6 667.7 1333.8 667.1 1332.3 665.8C1330.8 664.5 1328.8 660.2 1327.7 660.0C1326.6 659.8 1326.6 663.8 1325.4 664.6C1324.2 665.4 1322.5 665.8 1320.8 664.6C1319.1 663.5 1316.9 659.4 1315.0 657.7C1313.1 656.0 1311.7 655.4 1309.2 654.2C1306.7 653.1 1302.3 651.8 1300.0 650.8C1297.7 649.8 1295.8 649.7 1295.4 648.5C1295.0 647.3 1297.9 645.5 1297.7 643.8C1297.5 642.0 1295.7 638.4 1294.2 638.0C1292.7 637.6 1290.8 640.3 1288.5 641.5C1286.2 642.7 1282.7 645.6 1280.4 645.0C1278.1 644.4 1276.9 640.9 1274.6 638.0C1272.3 635.1 1269.2 629.6 1266.5 627.7C1263.8 625.8 1259.1 625.4 1258.5 626.5C1257.9 627.6 1261.1 632.3 1263.0 634.6C1264.9 636.9 1268.1 638.7 1270.0 640.4C1271.9 642.1 1273.1 643.3 1274.6 645.0C1276.1 646.7 1277.3 649.6 1279.2 650.8C1281.1 652.0 1284.1 650.9 1286.0 652.0C1287.9 653.1 1289.4 655.6 1290.8 657.7C1292.2 659.8 1292.7 662.5 1294.2 664.6C1295.7 666.7 1299.0 668.5 1300.0 670.4C1301.0 672.3 1300.8 674.3 1300.0 676.0C1299.2 677.7 1296.7 679.2 1295.4 680.8C1294.1 682.4 1292.7 683.4 1292.0 685.4C1291.3 687.4 1290.2 690.3 1291.0 693.0C1291.8 695.7 1295.0 698.7 1296.5 701.5C1298.0 704.3 1299.0 706.5 1300.0 710.0C1301.0 713.5 1301.7 718.3 1302.5 722.5C1303.3 726.7 1305.0 731.2 1305.0 735.0C1305.0 738.8 1303.8 741.7 1302.5 745.0C1301.2 748.3 1299.6 751.7 1297.5 755.0C1295.4 758.3 1292.5 761.7 1290.0 765.0C1287.5 768.3 1285.8 773.3 1282.5 775.0C1279.2 776.7 1273.3 776.2 1270.0 775.0C1266.7 773.8 1265.0 770.0 1262.5 767.5C1260.0 765.0 1257.5 760.0 1255.0 760.0C1252.5 760.0 1250.0 765.0 1247.5 767.5C1245.0 770.0 1242.1 772.1 1240.0 775.0C1237.9 777.9 1237.1 781.7 1235.0 785.0C1232.9 788.3 1230.4 791.7 1227.5 795.0C1224.6 798.3 1221.2 802.1 1217.5 805.0C1213.8 807.9 1209.2 811.7 1205.0 812.5C1200.8 813.3 1196.2 811.7 1192.5 810.0C1188.8 808.3 1184.6 805.4 1182.5 802.5C1180.4 799.6 1181.2 796.2 1180.0 792.5C1178.8 788.8 1175.8 784.2 1175.0 780.0C1174.2 775.8 1176.2 771.2 1175.0 767.5C1173.8 763.8 1168.3 757.9 1167.5 757.5C1166.7 757.1 1170.0 761.7 1170.0 765.0C1170.0 768.3 1169.2 774.2 1167.5 777.5C1165.8 780.8 1162.9 782.9 1160.0 785.0C1157.1 787.1 1152.9 788.8 1150.0 790.0C1147.1 791.2 1143.5 790.8 1142.5 792.5C1141.5 794.2 1144.4 797.1 1143.8 800.0C1143.1 802.9 1139.2 807.1 1138.8 810.0C1138.3 812.9 1140.6 814.6 1141.2 817.5C1141.9 820.4 1143.5 824.6 1142.5 827.5C1141.5 830.4 1137.3 832.9 1135.0 835.0C1132.7 837.1 1129.4 837.5 1128.8 840.0C1128.1 842.5 1131.2 846.7 1131.2 850.0C1131.2 853.3 1129.6 856.7 1128.8 860.0C1127.9 863.3 1126.9 866.7 1126.2 870.0C1125.6 873.3 1125.6 876.7 1125.0 880.0C1124.4 883.3 1124.2 887.7 1122.5 890.0C1120.8 892.3 1117.5 893.3 1115.0 893.8C1112.5 894.2 1110.0 894.0 1107.5 892.5C1105.0 891.0 1101.5 887.9 1100.0 885.0C1098.5 882.1 1099.4 878.8 1098.8 875.0C1098.1 871.2 1097.5 866.2 1096.2 862.5C1095.0 858.8 1092.5 855.8 1091.2 852.5C1090.0 849.2 1089.0 846.2 1088.8 842.5C1088.5 838.8 1089.2 833.8 1090.0 830.0C1090.8 826.2 1092.9 823.3 1093.8 820.0C1094.6 816.7 1094.0 813.3 1095.0 810.0C1096.0 806.7 1097.9 802.1 1100.0 800.0C1102.1 797.9 1105.4 800.0 1107.5 797.5C1109.6 795.0 1110.4 788.3 1112.5 785.0C1114.6 781.7 1118.3 780.8 1120.0 777.5C1121.7 774.2 1122.5 769.2 1122.5 765.0C1122.5 760.8 1121.7 756.7 1120.0 752.5C1118.3 748.3 1115.4 744.2 1112.5 740.0C1109.6 735.8 1105.8 730.8 1102.5 727.5C1099.2 724.2 1096.2 721.2 1092.5 720.0C1088.8 718.8 1083.8 718.8 1080.0 720.0C1076.2 721.2 1073.3 724.2 1070.0 727.5C1066.7 730.8 1063.8 736.9 1060.0 740.0C1056.2 743.1 1050.8 746.7 1047.5 746.2C1044.2 745.8 1040.6 740.6 1040.0 737.5C1039.4 734.4 1043.3 731.2 1043.8 727.5C1044.2 723.8 1043.5 719.2 1042.5 715.0C1041.5 710.8 1040.4 704.6 1037.5 702.5C1034.6 700.4 1029.6 701.7 1025.0 702.5C1020.4 703.3 1015.0 706.2 1010.0 707.5C1005.0 708.8 1000.0 709.2 995.0 710.0C990.0 710.8 985.0 712.5 980.0 712.5C975.0 712.5 970.0 710.8 965.0 710.0C960.0 709.2 954.2 708.8 950.0 707.5C945.8 706.2 942.7 705.0 940.0 702.5C937.3 700.0 934.2 695.8 933.8 692.5C933.3 689.2 934.8 685.0 937.5 682.5C940.2 680.0 945.4 677.9 950.0 677.5C954.6 677.1 960.0 680.4 965.0 680.0C970.0 679.6 975.4 676.7 980.0 675.0C984.6 673.3 988.3 671.2 992.5 670.0C996.7 668.8 1001.2 667.9 1005.0 667.5C1008.8 667.1 1012.9 668.3 1015.0 667.5C1017.1 666.7 1018.3 664.6 1017.5 662.5C1016.7 660.4 1011.2 657.9 1010.0 655.0C1008.8 652.1 1008.8 647.9 1010.0 645.0C1011.2 642.1 1014.2 638.3 1017.5 637.5C1020.8 636.7 1026.2 638.8 1030.0 640.0C1033.8 641.2 1036.7 644.6 1040.0 645.0C1043.3 645.4 1047.5 643.5 1050.0 642.5C1052.5 641.5 1055.0 640.2 1055.0 638.8C1055.0 637.3 1052.5 634.4 1050.0 633.8C1047.5 633.1 1043.3 635.2 1040.0 635.0C1036.7 634.8 1033.3 633.8 1030.0 632.5C1026.7 631.2 1022.1 630.0 1020.0 627.5C1017.9 625.0 1019.2 620.8 1017.5 617.5C1015.8 614.2 1012.3 611.2 1010.0 607.5C1007.7 603.8 1005.4 599.2 1003.8 595.0C1002.1 590.8 999.8 585.8 1000.0 582.5C1000.2 579.2 1001.7 575.8 1005.0 575.0C1008.3 574.2 1015.0 577.9 1020.0 577.5C1025.0 577.1 1030.0 572.9 1035.0 572.5C1040.0 572.1 1045.8 575.4 1050.0 575.0C1054.2 574.6 1057.9 572.5 1060.0 570.0C1062.1 567.5 1063.8 562.1 1062.5 560.0C1061.2 557.9 1055.6 560.8 1052.5 557.5Z" fill="none" stroke="#0db80d" stroke-width="4"/><path d="M1012.1 457.0C1012.0 458.8 1013.8 460.6 1013.6 462.2C1013.4 463.9 1012.0 465.7 1010.7 466.9C1009.3 468.1 1007.3 468.5 1005.5 469.3C1003.7 470.0 1001.8 471.6 1000.0 471.5C998.2 471.3 996.7 469.1 994.9 468.3C993.2 467.6 990.9 467.8 989.5 466.7C988.1 465.7 987.3 463.7 986.7 462.1C986.1 460.5 985.6 458.7 985.7 457.0C985.8 455.3 986.7 453.8 987.2 452.1C987.8 450.4 988.0 448.3 989.1 446.9C990.2 445.4 992.1 443.8 993.9 443.4C995.7 442.9 998.1 443.9 1000.0 444.1C1001.9 444.3 1004.2 443.6 1005.6 444.4C1007.1 445.2 1007.2 447.8 1008.6 449.0C1009.9 450.2 1013.1 450.4 1013.7 451.7C1014.3 453.1 1012.1 455.2 1012.1 457.0Z" fill="none" stroke="#0db80d" stroke-width="4"/><path d="M1107.3 416.0C1107.5 417.4 1107.3 419.5 1106.6 420.7C1105.9 421.9 1104.3 423.0 1103.0 423.3C1101.8 423.6 1100.4 422.8 1099.3 422.2C1098.1 421.7 1097.1 421.0 1096.3 420.0C1095.6 418.9 1094.6 417.2 1094.7 416.0C1094.8 414.8 1096.1 413.6 1096.8 412.5C1097.6 411.4 1098.2 409.8 1099.2 409.4C1100.1 409.0 1101.6 409.5 1102.7 410.0C1103.7 410.5 1104.5 411.4 1105.3 412.4C1106.1 413.4 1107.1 414.6 1107.3 416.0Z" fill="none" stroke="#0db80d" stroke-width="4"/><path d="M1090.7 330.0C1090.8 330.5 1090.7 331.2 1090.2 331.5C1089.8 331.8 1088.7 331.9 1088.0 331.9C1087.3 331.8 1086.5 331.7 1086.0 331.3C1085.5 331.0 1085.1 330.5 1085.1 330.0C1085.0 329.5 1085.2 328.8 1085.7 328.5C1086.2 328.2 1087.3 328.1 1088.0 328.2C1088.7 328.2 1089.6 328.3 1090.1 328.6C1090.6 328.9 1090.7 329.5 1090.7 330.0Z" fill="none" stroke="#0db80d" stroke-width="4"/><path d="M1100.0 975.0C1098.5 972.1 1101.7 966.2 1103.8 962.5C1105.8 958.8 1109.8 956.2 1112.5 952.5C1115.2 948.8 1117.1 942.9 1120.0 940.0C1122.9 937.1 1127.1 935.4 1130.0 935.0C1132.9 934.6 1136.5 935.4 1137.5 937.5C1138.5 939.6 1134.8 945.4 1136.2 947.5C1137.7 949.6 1144.0 947.9 1146.2 950.0C1148.5 952.1 1149.8 957.1 1150.0 960.0C1150.2 962.9 1149.6 965.0 1147.5 967.5C1145.4 970.0 1141.2 972.9 1137.5 975.0C1133.8 977.1 1129.2 979.2 1125.0 980.0C1120.8 980.8 1116.7 980.8 1112.5 980.0C1108.3 979.2 1101.5 977.9 1100.0 975.0Z" fill="none" stroke="#0db80d" stroke-width="4"/></g>
<path d="M1072.5 560.0C1070.4 557.5 1064.6 550.8 1062.5 545.0C1060.4 539.2 1059.6 530.8 1060.0 525.0C1060.4 519.2 1063.3 514.6 1065.0 510.0C1066.7 505.4 1068.3 500.8 1070.0 497.5C1071.7 494.2 1072.5 492.1 1075.0 490.0C1077.5 487.9 1080.8 487.5 1085.0 485.0C1089.2 482.5 1095.4 478.8 1100.0 475.0C1104.6 471.2 1109.6 465.8 1112.5 462.5C1115.4 459.2 1115.0 456.9 1117.5 455.0C1120.0 453.1 1124.2 451.2 1127.5 451.2C1130.8 451.2 1134.8 452.7 1137.5 455.0C1140.2 457.3 1141.7 462.1 1143.8 465.0C1145.8 467.9 1146.5 470.8 1150.0 472.5C1153.5 474.2 1160.8 474.6 1165.0 475.0C1169.2 475.4 1171.2 474.2 1175.0 475.0C1178.8 475.8 1183.8 478.1 1187.5 480.0C1191.2 481.9 1194.2 484.2 1197.5 486.2C1200.8 488.3 1203.3 491.0 1207.5 492.5C1211.7 494.0 1217.9 495.4 1222.5 495.0C1227.1 494.6 1231.2 489.6 1235.0 490.0C1238.8 490.4 1241.2 495.8 1245.0 497.5C1248.8 499.2 1253.8 500.4 1257.5 500.0C1261.2 499.6 1264.2 496.7 1267.5 495.0C1270.8 493.3 1273.8 490.0 1277.5 490.0C1281.2 490.0 1286.2 493.3 1290.0 495.0C1293.8 496.7 1297.9 497.1 1300.0 500.0C1302.1 502.9 1300.8 511.2 1302.5 512.5C1304.2 513.8 1308.4 510.1 1310.0 507.5C1311.6 504.9 1310.2 499.9 1312.0 497.0C1313.8 494.1 1317.8 490.8 1320.6 490.0C1323.4 489.2 1327.0 489.4 1329.0 492.0C1331.0 494.6 1331.8 501.5 1332.7 505.8C1333.6 510.1 1332.8 514.5 1334.5 518.0C1336.2 521.5 1339.2 524.6 1343.0 526.6C1346.8 528.6 1352.4 528.9 1357.0 530.0C1361.6 531.1 1366.8 532.3 1370.8 533.5C1374.8 534.7 1378.1 535.2 1381.0 537.0C1383.9 538.8 1387.4 541.2 1388.0 544.0C1388.6 546.8 1386.4 551.2 1384.7 554.0C1383.0 556.8 1380.0 558.3 1377.7 561.0C1375.4 563.7 1373.1 567.1 1370.8 570.0C1368.5 572.9 1366.9 575.7 1364.0 578.5C1361.1 581.3 1356.7 584.1 1353.5 587.0C1350.3 589.9 1346.8 592.8 1344.8 596.0C1342.8 599.2 1342.0 602.0 1341.4 606.0C1340.8 610.0 1340.8 616.0 1341.4 620.0C1342.0 624.0 1344.4 626.2 1345.0 630.0C1345.6 633.8 1345.8 638.8 1345.0 642.5C1344.2 646.2 1342.5 650.0 1340.0 652.5C1337.5 655.0 1333.8 657.1 1330.0 657.5C1326.2 657.9 1321.7 655.8 1317.5 655.0C1313.3 654.2 1308.8 654.2 1305.0 652.5C1301.2 650.8 1298.3 647.5 1295.0 645.0C1291.7 642.5 1288.3 639.6 1285.0 637.5C1281.7 635.4 1278.3 634.6 1275.0 632.5C1271.7 630.4 1267.9 625.8 1265.0 625.0C1262.1 624.2 1257.9 625.4 1257.5 627.5C1257.1 629.6 1260.4 634.2 1262.5 637.5C1264.6 640.8 1267.5 644.2 1270.0 647.5C1272.5 650.8 1275.0 654.6 1277.5 657.5C1280.0 660.4 1283.3 662.1 1285.0 665.0C1286.7 667.9 1288.3 671.7 1287.5 675.0C1286.7 678.3 1282.9 682.1 1280.0 685.0C1277.1 687.9 1270.4 690.0 1270.0 692.5C1269.6 695.0 1275.0 697.1 1277.5 700.0C1280.0 702.9 1282.9 706.7 1285.0 710.0C1287.1 713.3 1288.8 716.2 1290.0 720.0C1291.2 723.8 1292.5 728.3 1292.5 732.5C1292.5 736.7 1291.2 741.2 1290.0 745.0C1288.8 748.8 1287.5 752.5 1285.0 755.0C1282.5 757.5 1278.8 759.6 1275.0 760.0C1271.2 760.4 1266.7 758.8 1262.5 757.5C1258.3 756.2 1253.8 752.1 1250.0 752.5C1246.2 752.9 1243.3 757.1 1240.0 760.0C1236.7 762.9 1233.3 766.7 1230.0 770.0C1226.7 773.3 1223.3 777.1 1220.0 780.0C1216.7 782.9 1213.3 785.4 1210.0 787.5C1206.7 789.6 1203.3 792.9 1200.0 792.5C1196.7 792.1 1192.9 787.9 1190.0 785.0C1187.1 782.1 1185.0 778.3 1182.5 775.0C1180.0 771.7 1177.5 767.9 1175.0 765.0C1172.5 762.1 1170.0 759.2 1167.5 757.5C1165.0 755.8 1162.5 755.0 1160.0 755.0C1157.5 755.0 1154.6 758.3 1152.5 757.5C1150.4 756.7 1149.6 752.9 1147.5 750.0C1145.4 747.1 1142.1 743.3 1140.0 740.0C1137.9 736.7 1137.5 733.3 1135.0 730.0C1132.5 726.7 1127.9 723.3 1125.0 720.0C1122.1 716.7 1120.0 713.3 1117.5 710.0C1115.0 706.7 1112.9 703.3 1110.0 700.0C1107.1 696.7 1103.3 692.5 1100.0 690.0C1096.7 687.5 1092.5 687.1 1090.0 685.0C1087.5 682.9 1085.0 680.8 1085.0 677.5C1085.0 674.2 1090.4 667.9 1090.0 665.0C1089.6 662.1 1085.0 662.1 1082.5 660.0C1080.0 657.9 1077.1 655.4 1075.0 652.5C1072.9 649.6 1070.4 646.2 1070.0 642.5C1069.6 638.8 1070.8 634.2 1072.5 630.0C1074.2 625.8 1077.5 621.7 1080.0 617.5C1082.5 613.3 1085.0 609.6 1087.5 605.0C1090.0 600.4 1092.9 595.0 1095.0 590.0C1097.1 585.0 1100.8 578.8 1100.0 575.0C1099.2 571.2 1094.2 570.0 1090.0 567.5C1085.8 565.0 1077.9 561.2 1075.0 560.0C1072.1 558.8 1074.6 562.5 1072.5 560.0Z" fill="#d40000"/>
<path d="M1050.5 610.0C1050.3 611.6 1049.7 612.9 1049.1 614.4C1048.5 615.9 1048.3 618.0 1047.1 618.9C1046.0 619.8 1043.8 619.3 1042.2 619.6C1040.6 619.9 1039.0 621.0 1037.5 620.8C1036.1 620.6 1034.4 619.4 1033.4 618.3C1032.3 617.2 1031.9 615.7 1031.1 614.3C1030.4 612.9 1029.0 611.4 1029.0 610.0C1029.0 608.6 1030.5 607.2 1031.2 605.8C1031.9 604.3 1032.1 602.4 1033.3 601.5C1034.4 600.6 1036.3 600.6 1037.8 600.4C1039.3 600.2 1040.7 600.1 1042.2 600.3C1043.7 600.5 1045.3 600.8 1046.7 601.6C1048.1 602.3 1050.1 603.4 1050.7 604.9C1051.3 606.3 1050.8 608.4 1050.5 610.0Z" fill="#d40000"/>
<path d="M1022.5 657.5C1024.6 653.5 1030.4 652.1 1035.0 651.2C1039.6 650.4 1045.8 651.0 1050.0 652.5C1054.2 654.0 1055.8 657.9 1060.0 660.0C1064.2 662.1 1071.7 662.1 1075.0 665.0C1078.3 667.9 1079.2 672.9 1080.0 677.5C1080.8 682.1 1081.2 688.8 1080.0 692.5C1078.8 696.2 1075.8 699.6 1072.5 700.0C1069.2 700.4 1063.8 697.5 1060.0 695.0C1056.2 692.5 1054.2 686.7 1050.0 685.0C1045.8 683.3 1039.6 686.7 1035.0 685.0C1030.4 683.3 1024.6 679.6 1022.5 675.0C1020.4 670.4 1020.4 661.5 1022.5 657.5Z" fill="#d40000"/>
<path d="M1140.0 762.0C1142.0 760.0 1146.7 757.4 1149.0 757.7C1151.3 758.0 1153.5 761.2 1153.8 763.8C1154.1 766.3 1152.1 770.2 1150.8 773.0C1149.5 775.8 1148.0 779.8 1146.0 780.8C1144.0 781.8 1140.0 780.8 1138.5 779.0C1137.0 777.2 1136.8 772.8 1137.0 770.0C1137.2 767.2 1138.0 764.0 1140.0 762.0Z" fill="#d40000"/>
<path d="M1464.0 513.0C1463.8 514.5 1463.7 515.7 1463.3 517.1C1462.8 518.4 1462.2 519.9 1461.1 521.1C1460.0 522.2 1458.3 523.5 1456.7 523.8C1455.1 524.1 1453.1 523.5 1451.5 522.9C1449.9 522.4 1448.7 521.5 1447.3 520.6C1445.9 519.8 1443.5 519.1 1443.0 517.8C1442.4 516.6 1444.2 514.6 1444.2 513.0C1444.2 511.4 1442.7 509.5 1443.2 508.3C1443.8 507.1 1446.1 506.3 1447.5 505.6C1448.9 504.9 1450.3 504.3 1451.8 504.1C1453.2 503.8 1454.8 503.9 1456.2 504.1C1457.7 504.4 1459.1 504.8 1460.5 505.5C1461.9 506.2 1464.1 507.1 1464.7 508.3C1465.2 509.6 1464.2 511.5 1464.0 513.0Z" fill="#d40000"/>
<path d="M1547.4 539.0C1547.5 540.9 1547.7 543.0 1547.3 544.8C1547.0 546.5 1546.1 548.4 1545.2 549.5C1544.2 550.6 1542.9 550.9 1541.7 551.3C1540.6 551.7 1539.2 552.4 1538.2 551.8C1537.2 551.3 1536.3 549.4 1535.5 548.1C1534.8 546.8 1534.0 545.6 1533.6 544.0C1533.1 542.5 1532.7 540.8 1532.6 539.0C1532.4 537.2 1532.1 534.8 1532.5 533.1C1532.9 531.5 1534.1 530.1 1535.1 529.0C1536.1 528.0 1537.2 527.4 1538.3 526.9C1539.4 526.4 1540.7 525.7 1541.8 526.1C1542.9 526.4 1544.1 527.7 1544.9 529.0C1545.8 530.2 1546.5 532.0 1546.9 533.6C1547.3 535.3 1547.3 537.1 1547.4 539.0Z" fill="#d40000"/>
<path d="M1389.4 544.0C1389.5 545.3 1389.1 547.0 1388.7 548.1C1388.2 549.2 1387.2 549.8 1386.5 550.6C1385.8 551.4 1385.2 552.6 1384.4 552.9C1383.5 553.3 1382.6 553.0 1381.7 552.8C1380.8 552.6 1379.6 552.5 1378.9 551.7C1378.2 550.9 1377.6 549.4 1377.3 548.1C1377.0 546.8 1377.4 545.4 1377.3 544.0C1377.3 542.6 1376.6 540.7 1377.0 539.6C1377.4 538.6 1378.8 538.3 1379.6 537.6C1380.4 536.9 1380.9 535.9 1381.7 535.4C1382.5 534.9 1383.6 534.3 1384.4 534.7C1385.2 535.0 1385.8 536.6 1386.4 537.6C1387.1 538.5 1387.9 539.0 1388.4 540.1C1388.9 541.2 1389.4 542.7 1389.4 544.0Z" fill="#d40000"/>
<path d="M1107.5 815.0C1111.5 812.1 1121.2 811.7 1125.0 812.5C1128.8 813.3 1129.4 816.7 1130.0 820.0C1130.6 823.3 1130.4 828.3 1128.8 832.5C1127.1 836.7 1122.7 842.5 1120.0 845.0C1117.3 847.5 1115.0 848.3 1112.5 847.5C1110.0 846.7 1106.9 842.9 1105.0 840.0C1103.1 837.1 1100.8 834.2 1101.2 830.0C1101.7 825.8 1103.5 817.9 1107.5 815.0Z" fill="#d40000"/>
<g clip-path="url(#cR)"><rect x="920" y="320" width="660" height="670" filter="url(#fG)"/><g mask="url(#mC)" clip-path="url(#cR2)"><rect x="920" y="320" width="660" height="670" filter="url(#fG3)"/></g></g>
<path d="M1297.5 542.7L1296.4 546.4L1293.5 550.2L1288.0 552.0L1285.4 549.4L1284.6 547.1L1283.5 543.2L1289.4 541.7L1293.6 541.4Z" fill="#004d00"/><path d="M1081.9 658.0L1079.8 659.2L1074.1 654.3L1069.2 649.1L1069.2 646.3L1068.7 643.0L1073.0 644.4L1078.4 650.2L1082.7 655.7Z" fill="#004d00"/><path d="M1103.3 691.2L1102.1 698.6L1097.2 700.3L1094.4 696.6L1094.4 691.3L1093.5 684.1L1098.5 681.0L1103.2 679.6L1106.6 683.9Z" fill="#004d00"/><path d="M1150.1 597.5L1147.2 600.2L1144.3 602.8L1142.7 600.2L1141.2 597.0L1143.0 592.3L1146.1 591.8L1148.0 591.8L1149.2 593.7Z" fill="#004d00"/><path d="M1217.9 610.6L1215.4 611.9L1211.4 609.3L1208.1 606.2L1207.6 602.8L1209.4 601.0L1212.8 600.8L1216.7 603.8L1220.1 608.2Z" fill="#004d00"/><path d="M1161.4 758.6L1158.9 761.9L1155.1 763.4L1152.3 760.9L1152.4 757.3L1151.7 753.5L1154.8 750.9L1158.7 751.4L1160.4 754.8Z" fill="#004d00"/><path d="M1131.3 775.8L1130.3 779.6L1127.8 780.0L1126.5 778.1L1126.6 775.5L1126.5 771.9L1129.1 769.1L1130.6 771.6L1132.8 772.3Z" fill="#004d00"/><path d="M1097.5 606.2L1097.0 608.6L1094.1 611.3L1088.4 611.8L1087.4 608.7L1084.8 606.6L1089.1 604.9L1092.7 602.4L1096.4 604.0Z" fill="#004d00"/><path d="M1041.2 588.2L1038.8 588.9L1036.4 589.5L1035.6 587.1L1035.8 585.4L1036.2 583.4L1038.2 583.9L1039.7 584.3L1040.8 585.7Z" fill="#004d00"/><path d="M1215.9 470.7L1214.4 472.3L1212.2 474.9L1209.3 472.6L1205.8 470.7L1206.6 467.3L1210.3 466.4L1213.5 466.4L1216.3 468.1Z" fill="#004d00"/><path d="M1114.6 463.8L1113.2 465.6L1110.9 466.2L1108.1 465.7L1107.5 463.2L1108.2 461.3L1109.7 459.7L1112.1 460.7L1113.7 461.9Z" fill="#004d00"/><path d="M1102.8 719.8L1100.6 721.3L1099.3 720.2L1097.9 719.6L1098.2 717.3L1100.5 716.1L1102.6 714.4L1104.3 715.3L1103.3 717.6Z" fill="#004d00"/><path d="M1301.8 544.0L1300.1 548.7L1296.5 549.3L1292.9 549.1L1291.2 544.6L1294.1 540.6L1296.1 538.3L1299.5 535.7L1303.0 538.4Z" fill="#004d00"/><path d="M1182.7 503.9L1182.8 505.3L1181.1 506.4L1179.3 507.0L1177.9 506.5L1177.4 505.4L1177.8 503.9L1179.8 503.2L1181.5 503.1Z" fill="#004d00"/><path d="M1063.9 700.9L1062.8 704.0L1060.2 705.3L1059.2 702.9L1059.3 700.3L1059.8 696.8L1062.4 696.2L1064.1 696.6L1065.3 698.1Z" fill="#004d00"/><path d="M1120.2 800.7L1119.2 802.8L1117.3 803.5L1115.0 803.4L1115.0 800.4L1115.3 797.4L1117.7 797.0L1119.6 796.8L1121.3 798.1Z" fill="#004d00"/><path d="M1443.2 522.2L1441.5 522.4L1439.6 521.6L1437.3 520.3L1437.2 518.7L1436.8 516.8L1439.2 516.9L1441.4 519.0L1442.8 520.6Z" fill="#004d00"/><path d="M1417.9 536.5L1416.0 539.0L1413.7 538.4L1412.7 536.8L1412.3 534.9L1412.8 532.0L1415.3 531.8L1417.1 532.1L1418.1 533.9Z" fill="#004d00"/>
<path d="M1078.5 578.0C1079.4 577.8 1083.1 581.7 1085.0 581.7C1086.9 581.7 1088.5 579.3 1090.0 578.0C1091.5 576.7 1092.1 575.8 1094.0 574.0C1095.9 572.2 1099.3 568.9 1101.5 567.0C1103.7 565.1 1104.9 563.9 1107.0 562.5C1109.1 561.1 1112.5 559.0 1114.0 558.7C1115.5 558.4 1116.5 559.5 1116.0 560.6C1115.5 561.7 1112.8 563.8 1111.0 565.4C1109.2 567.0 1106.9 568.2 1105.0 570.0C1103.1 571.8 1101.4 574.0 1099.6 576.0C1097.8 578.0 1095.9 579.6 1094.0 581.7C1092.1 583.8 1089.5 586.6 1088.0 588.5C1086.5 590.4 1086.0 590.9 1085.0 593.0C1084.0 595.1 1082.8 598.5 1082.0 601.0C1081.2 603.5 1080.9 605.6 1080.0 607.7C1079.1 609.8 1077.9 611.6 1076.5 613.5C1075.1 615.4 1073.5 617.1 1071.7 619.0C1070.0 620.9 1067.5 624.2 1066.0 625.0C1064.5 625.8 1063.8 625.3 1063.0 624.0C1062.2 622.7 1061.2 619.2 1061.0 617.0C1060.8 614.8 1061.0 612.5 1062.0 610.6C1063.0 608.7 1065.4 607.2 1067.0 605.8C1068.6 604.4 1070.3 603.6 1071.7 602.0C1073.1 600.4 1074.5 598.2 1075.6 596.0C1076.7 593.8 1077.9 590.7 1078.5 588.5C1079.1 586.3 1079.4 584.5 1079.4 582.7C1079.4 581.0 1077.6 578.2 1078.5 578.0Z" fill="#c8c8c8"/><path d="M1052.0 557.0C1052.8 555.8 1057.0 557.9 1059.0 557.7C1061.0 557.5 1062.5 555.5 1064.0 555.8C1065.5 556.1 1067.0 557.9 1068.0 559.6C1069.0 561.3 1068.8 563.9 1069.8 566.0C1070.8 568.1 1072.2 570.2 1073.7 572.0C1075.2 573.8 1077.1 575.2 1078.5 577.0C1079.9 578.8 1082.1 582.2 1082.0 582.7C1081.9 583.2 1080.0 581.0 1078.0 580.0C1076.0 579.0 1072.1 578.7 1070.0 577.0C1067.9 575.3 1066.9 571.2 1065.4 570.0C1063.9 568.8 1062.4 569.8 1060.8 570.0C1059.2 570.2 1057.1 571.8 1056.0 571.0C1054.9 570.2 1054.7 567.3 1054.0 565.0C1053.3 562.7 1051.2 558.2 1052.0 557.0Z" fill="#c8c8c8"/><path d="M1012.0 633.0C1013.6 632.2 1018.8 631.8 1021.5 632.5C1024.2 633.2 1025.4 636.1 1028.5 637.0C1031.6 637.9 1036.6 638.4 1040.0 638.0C1043.4 637.6 1046.5 636.3 1049.0 634.6C1051.5 632.9 1053.2 629.6 1055.0 627.7C1056.8 625.8 1058.6 622.3 1059.6 623.0C1060.6 623.7 1060.8 629.3 1060.8 632.0C1060.8 634.7 1060.4 636.7 1059.6 639.0C1058.8 641.3 1057.8 645.4 1056.0 646.0C1054.2 646.6 1051.3 643.1 1049.0 642.7C1046.7 642.3 1044.7 644.2 1042.0 643.8C1039.3 643.4 1035.7 641.4 1033.0 640.5C1030.3 639.6 1028.5 639.1 1026.0 638.5C1023.5 637.9 1020.3 637.2 1018.0 637.0C1015.7 636.8 1013.0 637.7 1012.0 637.0C1011.0 636.3 1010.4 633.8 1012.0 633.0Z" fill="#c8c8c8"/><path d="M1293.5 470.0C1295.0 467.5 1303.0 467.3 1305.0 469.0C1307.0 470.7 1305.8 476.5 1305.5 480.0C1305.2 483.5 1303.7 486.8 1303.0 490.0C1302.3 493.2 1302.2 498.7 1301.5 499.0C1300.8 499.3 1299.9 494.5 1299.0 492.0C1298.1 489.5 1296.9 487.7 1296.0 484.0C1295.1 480.3 1292.0 472.5 1293.5 470.0Z" fill="#c8c8c8"/>
</g>
</svg>
</div>
<div id="status">
<div class="t" style="left:726px">Coordinate</div>
<div class="inp" style="left:826px;width:201px"><div class="t" style="left:28px;top:3px">32.5260,0.5147</div></div>
<svg class="ic" style="left:1028px;top:8px" width="20" height="20" viewBox="0 0 20 20"><g transform="rotate(-38 10 10.500)" fill="none" stroke="#111" stroke-width="1.300"><ellipse cx="10" cy="10.500" rx="4.800" ry="7.300" fill="#fff"/><path d="M5.300 8.500h9.400M10 3.300v5.200M7.500 4.300v4M12.500 4.300v4"/><circle cx="10" cy="13" r="1.500"/></g><path d="M13.500 3.500l2-1.500M2 10.500l1.800.5" stroke="#222" stroke-width="1"/></svg>
<div class="t" style="left:1059px">Scale</div>
<div class="inp" style="left:1109px;width:133px"><div class="t" style="left:4px;top:3px">1:211,493</div>
<svg class="ic" style="left:117px;top:11px" width="10" height="6" viewBox="0 0 10 6"><path d="M1 1l4 4 4-4" fill="none" stroke="#444" stroke-width="1"/></svg></div>
<svg class="ic" style="left:1246px;top:10px" width="12" height="15" viewBox="0 0 12 15"><path d="M3 7V4.500a3 3 0 0 1 6 0V7" fill="none" stroke="#8a8a8a" stroke-width="1.600"/><rect x="1" y="6.500" width="10" height="8" rx="1.500" fill="#6e6e6e"/></svg>
<div class="t" style="left:1274px">Magnifier</div>
<div class="inp" style="left:1359px;width:96px"><div class="t" style="left:3px;top:3px">100%</div>
<div class="abs" style="left:74px;top:1px;width:19px;height:13px;border:1px solid #adadad;background:#f5f5f5"></div><div class="abs" style="left:74px;top:13px;width:19px;height:13px;border:1px solid #adadad;background:#f5f5f5"></div>
<svg class="ic" style="left:79px;top:6px" width="9" height="16" viewBox="0 0 9 16"><path d="M2 4.500L4.500 2 7 4.500zM2 11.500L4.500 14 7 11.500z" fill="#333"/></svg></div>
<div class="t" style="left:1464px">Rotation</div>
<div class="inp" style="left:1548px;width:92px"><div class="t" style="left:3px;top:3px">0.0</div>
<div class="abs" style="left:70px;top:1px;width:19px;height:13px;border:1px solid #adadad;background:#f5f5f5"></div><div class="abs" style="left:70px;top:13px;width:19px;height:13px;border:1px solid #adadad;background:#f5f5f5"></div>
<svg class="ic" style="left:75px;top:6px" width="9" height="16" viewBox="0 0 9 16"><path d="M2 4.500L4.500 2 7 4.500zM2 11.500L4.500 14 7 11.500z" fill="#333"/></svg></div>
<div class="abs" style="left:1646px;top:11px;width:13px;height:13px;border:1px solid #333;background:#fff"><svg class="ic" style="left:0;top:0" width="11" height="11" viewBox="0 0 11 11"><path d="M1.500 5.500l2.500 3 5.500-7" fill="none" stroke="#222" stroke-width="1.100"/></svg></div>
<div class="t" style="left:1664px;letter-spacing:-.4px">Render</div>
<svg class="ic" style="left:1744px;top:9px" width="16" height="16" viewBox="0 0 16 16"><circle cx="8" cy="8" r="6.500" fill="#e4e4e4" stroke="#8a8a8a" stroke-width="1.200"/><ellipse cx="8" cy="8" rx="3" ry="6.500" fill="none" stroke="#8a8a8a" stroke-width="1"/><path d="M1.500 8h13M8 1.500v13" stroke="#8a8a8a" stroke-width="1"/></svg>
<div class="t" style="left:1764px;top:5px;letter-spacing:-.9px">EPSG:4326</div>
<svg class="ic" style="left:1885px;top:10px" width="18" height="16" viewBox="0 0 18 16"><path d="M9 1C4.500 1 1 3.500 1 7c0 3.300 3.500 5.800 8 5.800.8 0 1.500-.1 2.200-.2L15 15l-.8-3.700C16 10.200 17 8.700 17 7c0-3.500-3.500-6-8-6z" fill="#6a6a6a"/></svg>
</div>
</body></html>
